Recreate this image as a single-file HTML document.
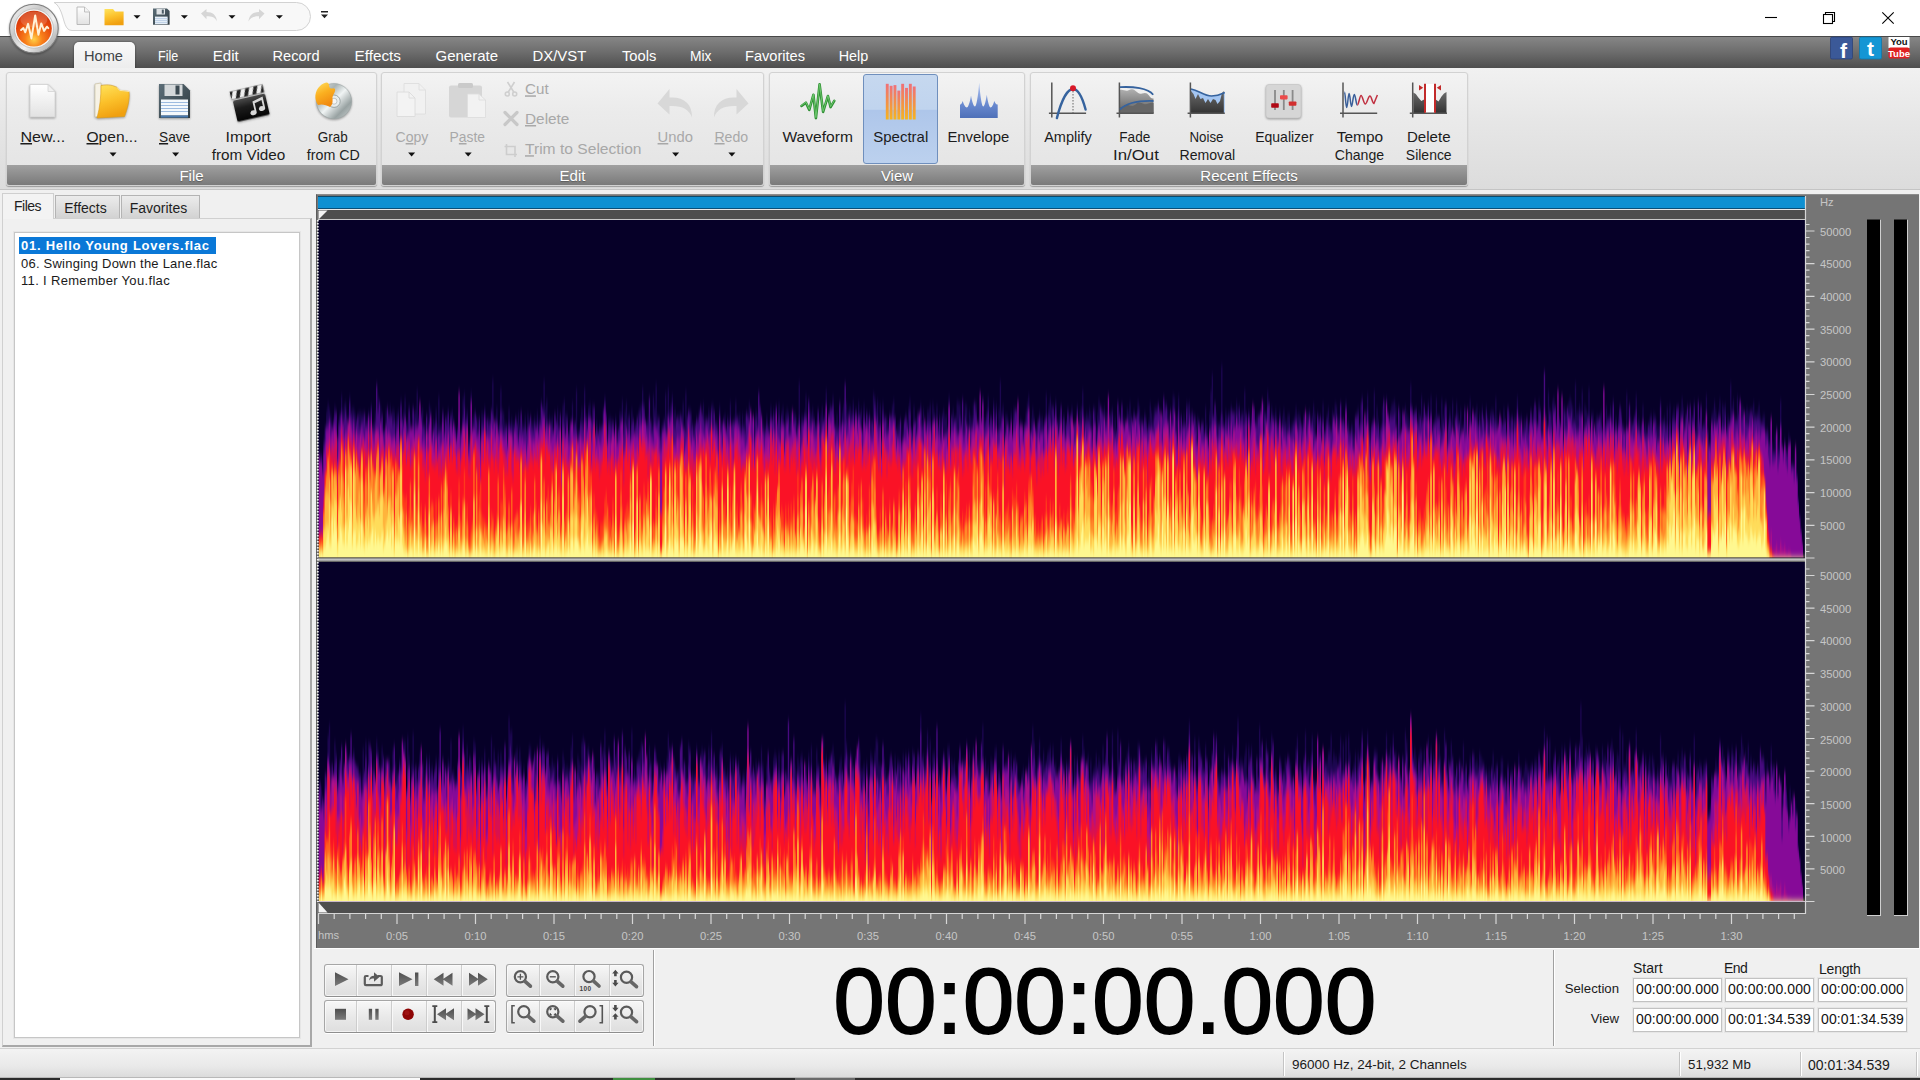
<!DOCTYPE html>
<html lang="en"><head><meta charset="utf-8"><title>Audio Editor</title>
<style>
*{box-sizing:border-box;margin:0;padding:0}
html,body{width:1920px;height:1080px;overflow:hidden;background:#f0f0f0}
body{font-family:"Liberation Sans",sans-serif;font-size:15px;color:#222;position:relative}
body div,body span,body svg{position:absolute}
u{text-decoration-thickness:1px;text-underline-offset:2px}
svg{overflow:visible}
#title{left:0;top:0;width:1920px;height:36px;background:#fff}
#menubar{left:0;top:36px;width:1920px;height:32px;background:linear-gradient(#868686 0,#6c6c6c 50%,#4e4e4e 100%);border-top:1px solid #484848}
#hometab{left:74px;top:42px;width:61px;height:27px;background:linear-gradient(#fafafa,#ececec);border-radius:5px 5px 0 0;box-shadow:0 0 2px rgba(0,0,0,.6)}
#ribbon{left:0;top:68px;width:1920px;height:122px;background:linear-gradient(#f1f1f1 0,#e6e6e6 45%,#dcdcdc 100%);border-bottom:1px solid #c4c4c4}
.grp{top:4px;height:114px;border:1px solid #d2d2d2;border-radius:3px;background:linear-gradient(#f3f3f3 0,#ebebeb 35%,#e3e3e3 100%);box-shadow:0 1px 1px rgba(0,0,0,.3);overflow:hidden}
.grp .lab{left:0;right:0;bottom:0;height:20px;background:linear-gradient(#a0a0a0,#7a7a7a);color:#fff;text-align:center;font-size:15px;line-height:22px;text-shadow:0 1px 1px rgba(0,0,0,.3)}
.bt{text-align:center;font-size:15px;line-height:17.5px;color:#1a1a1a;white-space:nowrap;transform:translateX(-50%)}
.bt.dis{color:#a9a9a9}
.arr{width:0;height:0;border-left:3.5px solid transparent;border-right:3.5px solid transparent;border-top:4px solid #111}

.tab{top:2px;height:23px;border:1px solid #b4b4b4;border-bottom:none;background:linear-gradient(#ececec,#d2d2d2);font-size:14px;line-height:25px;text-align:center;color:#1e1e1e}
.tab.act{top:0;height:26px;background:#f3f3f3;border-color:#cfcfcf;line-height:25px}
.li{height:17px;line-height:17px;font-size:13px;padding-left:2px;white-space:nowrap;color:#1a1a1a}
.li.sel{background:#0a78d7;color:#fff}
b{font-weight:bold}

.bg{border:1px solid #a6a6a6;border-bottom-color:#8e8e8e;border-radius:3px;background:linear-gradient(#f7f7f7,#e9e9e9 50%,#dedede);box-shadow:0 1px 0 #fff, inset 0 0 0 1px rgba(255,255,255,.6)}
.sep{top:0;width:2px;height:31px;border-left:1px solid #cdcdcd;border-right:1px solid #f8f8f8}
.sl{font-size:14px;line-height:16px;color:#1a1a1a;white-space:nowrap}
.tb{width:89px;height:24px;border:1px solid #c2c2c2;box-shadow:0 0 0 1px #e6e6e6;background:#fff;font-size:14px;line-height:20.5px;text-align:center;white-space:nowrap;color:#111;letter-spacing:.1px}
.st{font-size:14px;line-height:16px;color:#1a1a1a;white-space:nowrap}
.selbtn{border:1px solid #6f8fbd;border-radius:3px;background:linear-gradient(#c6d8ef 0,#c0d4ee 39%,#aec6ea 40%,#bcd1ee 100%)}
</style></head><body>
<div id="title"></div>
<div id="menubar"></div>
<div id="hometab"></div>
<div id="ribbon">
 <div class="grp" style="left:6px;width:371px"><div class="lab">File</div></div>
 <div class="grp" style="left:381px;width:383px"><div class="lab">Edit</div></div>
 <div class="grp" style="left:769px;width:256px"><div class="selbtn" style="left:93px;top:1px;width:75px;height:90px"></div><div class="lab">View</div></div>
 <div class="grp" style="left:1030px;width:438px"><div class="lab">Recent Effects</div></div>
</div>
<svg style="left:0;top:0" width="1920" height="200" viewBox="0 0 1920 200">
<defs>
<linearGradient id="gPage" x1="0" y1="0" x2="0" y2="1"><stop offset="0" stop-color="#ffffff"/><stop offset="1" stop-color="#e2e2e2"/></linearGradient>
<linearGradient id="gFold" x1="0" y1="0" x2=".3" y2="1"><stop offset="0" stop-color="#ffe45e"/><stop offset=".55" stop-color="#fbc02a"/><stop offset="1" stop-color="#f0a010"/></linearGradient>
<linearGradient id="gFlop" x1="0" y1="0" x2="1" y2="1"><stop offset="0" stop-color="#5c6e78"/><stop offset="1" stop-color="#2e3a40"/></linearGradient>
<linearGradient id="gSilver" x1="0" y1="0" x2="1" y2="1"><stop offset="0" stop-color="#fdfdfd"/><stop offset=".35" stop-color="#c9c9c9"/><stop offset=".6" stop-color="#f2f2f2"/><stop offset="1" stop-color="#8e8e8e"/></linearGradient>
<radialGradient id="gBall" cx=".5" cy=".8" r=".8"><stop offset="0" stop-color="#ffd048"/><stop offset=".3" stop-color="#f8801a"/><stop offset=".7" stop-color="#e4440c"/><stop offset="1" stop-color="#cc3206"/></radialGradient>
<linearGradient id="gSpec" x1="0" y1="0" x2="0" y2="1"><stop offset="0" stop-color="#f07078"/><stop offset=".5" stop-color="#f39048"/><stop offset="1" stop-color="#f6b41e"/></linearGradient>
<linearGradient id="gEnv" x1="0" y1="0" x2="0" y2="1"><stop offset="0" stop-color="#b4c8f4"/><stop offset=".6" stop-color="#6a8ad0"/><stop offset="1" stop-color="#4e70b8"/></linearGradient>
<linearGradient id="gGray" x1="0" y1="0" x2="0" y2="1"><stop offset="0" stop-color="#b0b0b0"/><stop offset="1" stop-color="#5e5e5e"/></linearGradient>
<linearGradient id="gDark" x1="0" y1="0" x2="0" y2="1"><stop offset="0" stop-color="#6a6a6a"/><stop offset="1" stop-color="#333"/></linearGradient>
<linearGradient id="gCD" x1="0" y1="0" x2="1" y2="1"><stop offset="0" stop-color="#e8ecec"/><stop offset=".3" stop-color="#aab4b4"/><stop offset=".5" stop-color="#f0f4f4"/><stop offset=".75" stop-color="#98a2a2"/><stop offset="1" stop-color="#d0d6d6"/></linearGradient>
<linearGradient id="gFlame" x1="0" y1="0" x2=".4" y2="1"><stop offset="0" stop-color="#ffe060"/><stop offset=".5" stop-color="#fbb020"/><stop offset="1" stop-color="#f08a10"/></linearGradient>
<linearGradient id="gClap" x1="0" y1="0" x2="0" y2="1"><stop offset="0" stop-color="#4a4a4a"/><stop offset=".4" stop-color="#1c1c1c"/><stop offset="1" stop-color="#050505"/></linearGradient>
<filter id="sh" x="-20%" y="-20%" width="140%" height="150%" color-interpolation-filters="sRGB"><feGaussianBlur in="SourceAlpha" stdDeviation="1"/><feOffset dy="1"/><feComponentTransfer><feFuncA type="linear" slope=".35"/></feComponentTransfer><feMerge><feMergeNode/><feMergeNode in="SourceGraphic"/></feMerge></filter>
</defs>
<g filter="url(#sh)"><circle cx="33.9" cy="28.6" r="24.3" fill="url(#gSilver)" stroke="#7e7e7e" stroke-width="1.1"/></g>
<circle cx="33.9" cy="28.6" r="19.6" fill="#f4f4f4" stroke="#aaa" stroke-width=".6"/>
<circle cx="33.9" cy="28.6" r="17.9" fill="url(#gBall)"/>
<ellipse cx="33.9" cy="19.5" rx="13.5" ry="8" fill="#fff" opacity=".16"/>
<polyline points="21.1,30 23.4,28.1 25.3,32.3 28.1,23.9 31.4,38.4 35.2,15.5 38.4,34.7 41.25,23.4 44.1,30.9 46.9,26.7 48.3,28.1" fill="none" stroke="#fff2d8" stroke-width="2" stroke-linejoin="round" stroke-linecap="round"/>
<path d="M54 2.500H296.500a14 14 0 0 1 0 28H72C65 30.500 64.500 21 61.500 13 59.500 7.500 57 4 54 2.500z" fill="#f8f8f8" stroke="#d2d2d2" stroke-width="1"/>
<path d="M77 7h7.500l5 5v12.500h-12.500z" fill="url(#gPage)" stroke="#b4b4b4" stroke-width=".9"/><path d="M84.500 7v5h5" fill="#f4f4f4" stroke="#b4b4b4" stroke-width=".8"/>
<path d="M104.500 9h8.500l2 2.600h8.600v13.600h-19.100z" fill="url(#gFold)"/>
<path d="M153 8.500h14l2.600 2.600v13.700h-16.600z" fill="url(#gFlop)"/><rect x="156.500" y="8.900" width="8.500" height="5.600" fill="#dfe3e6"/><rect x="161.800" y="9.600" width="2" height="4" fill="#4a5a64"/><rect x="155" y="16.600" width="12.600" height="7.600" fill="#e8f0f8"/><path d="M155 18.600h12.600M155 20.600h12.600M155 22.600h12.600" stroke="#a8c0dc" stroke-width=".7"/>
<path d="M201 13.500l5.500-4.500v3c6 0 10 3 10.500 9.500-1.800-4-5-5.200-10.500-5.200v3z" fill="#d6d6d6"/>
<path d="M264.500 13.500l-5.500-4.500v3c-6 0-10 3-10.500 9.500 1.800-4 5-5.200 10.500-5.200v3z" fill="#d6d6d6"/>
<path d="M133.5 15.200h7l-3.500 3.600z" fill="#111"/>
<path d="M180.9 15.200h7l-3.500 3.600z" fill="#111"/>
<path d="M228.5 15.200h7l-3.500 3.600z" fill="#111"/>
<path d="M275.9 15.200h7l-3.500 3.600z" fill="#111"/>
<path d="M321 11h7v1.500h-7zM321 14.400h7l-3.500 3.800z" fill="#222"/>
<path d="M1765 17.500h12" stroke="#000" stroke-width="1.100"/>
<rect x="1823.500" y="14.500" width="9" height="9" fill="#fff" stroke="#000" stroke-width="1.100"/><path d="M1825.500 14.500v-2h9v9h-2" fill="none" stroke="#000" stroke-width="1.100"/>
<path d="M1882.300 12.300l11.400 11.400M1893.700 12.300l-11.400 11.400" stroke="#000" stroke-width="1.100"/>
<g font-family="Liberation Sans, sans-serif" font-size="15" fill="#fff">
<text x="158" y="60.800" textLength="20.2" lengthAdjust="spacingAndGlyphs">File</text>
<text x="212.8" y="60.800" textLength="26" lengthAdjust="spacingAndGlyphs">Edit</text>
<text x="272.5" y="60.800" textLength="47" lengthAdjust="spacingAndGlyphs">Record</text>
<text x="354.5" y="60.800" textLength="46.5" lengthAdjust="spacingAndGlyphs">Effects</text>
<text x="435.5" y="60.800" textLength="62.5" lengthAdjust="spacingAndGlyphs">Generate</text>
<text x="532.5" y="60.800" textLength="53.8" lengthAdjust="spacingAndGlyphs">DX/VST</text>
<text x="622" y="60.800" textLength="34.3" lengthAdjust="spacingAndGlyphs">Tools</text>
<text x="690" y="60.800" textLength="21.5" lengthAdjust="spacingAndGlyphs">Mix</text>
<text x="745" y="60.800" textLength="60" lengthAdjust="spacingAndGlyphs">Favorites</text>
<text x="838.7" y="60.800" textLength="29.6" lengthAdjust="spacingAndGlyphs">Help</text>
</g>
<text x="84" y="60.800" textLength="39" lengthAdjust="spacingAndGlyphs" font-family="Liberation Sans, sans-serif" font-size="15" fill="#404448">Home</text>
<rect x="1830.500" y="37" width="22" height="22" rx="1.500" fill="#3b5998" stroke="#2c4378" stroke-width=".8"/><text x="1843.500" y="57.500" font-family="Liberation Sans, sans-serif" font-weight="bold" font-size="21" fill="#fff" text-anchor="middle">f</text>
<rect x="1859.500" y="37" width="22" height="22" rx="1.500" fill="#1496d4" stroke="#0e78ac" stroke-width=".8"/><text x="1870.500" y="55.500" font-family="Liberation Sans, sans-serif" font-weight="bold" font-size="21" fill="#fff" text-anchor="middle">t</text>
<rect x="1888.500" y="37" width="21" height="11" fill="#fff"/><rect x="1888.500" y="47.500" width="21" height="11" rx="2" fill="#e02020"/><text x="1899" y="45.300" font-family="Liberation Sans, sans-serif" font-weight="bold" font-size="9.500" fill="#111" text-anchor="middle">You</text><text x="1899" y="56.800" font-family="Liberation Sans, sans-serif" font-weight="bold" font-size="9.500" fill="#fff" text-anchor="middle">Tube</text>
<g filter="url(#sh)"><path d="M30 84.500h18l7 7v25.500h-25z" fill="url(#gPage)" stroke="#d0d0d0" stroke-width=".8"/><path d="M48 84.500v7h7z" fill="#f0f0f0" stroke="#cfcfcf" stroke-width=".7"/></g>
<g filter="url(#sh)"><path d="M95 84l6-1 1.500 33-7.500 1z" fill="#f6f2e6" stroke="#c8bc98" stroke-width=".6"/><path d="M101 85.500c8-1.500 12 0 16 1.800l2.500 3 9.500 1.200c1 8-1.500 17-4.500 25l-27.500 1.500c3-11 4-21 4-32.500z" fill="url(#gFold)" stroke="#d89a18" stroke-width=".6"/><path d="M117 87.300l2.500 3 9.500 1.200" fill="none" stroke="#fff4c0" stroke-width=".8"/></g>
<g filter="url(#sh)"><path d="M159 84h24.500l6.500 6.500v27.500h-31z" fill="url(#gFlop)"/><rect x="164.500" y="84.500" width="18" height="11.500" fill="#d4d8da"/><rect x="175.500" y="85.500" width="4" height="9" fill="#3c4a52"/><rect x="161" y="99.500" width="27" height="16" fill="#f4f8fc"/><path d="M161 102.500h27M161 105.500h27M161 108.500h27M161 111.500h27" stroke="#9dbbe0" stroke-width="1"/><rect x="161" y="115.500" width="27" height="2" fill="#4a7ab0"/></g>
<g filter="url(#sh)" transform="rotate(-13 250 100)"><rect x="233" y="97" width="33" height="21.500" rx="1.500" fill="url(#gClap)"/><rect x="232" y="87.500" width="33.500" height="8" fill="#222"/><path d="M235 87.500h4.500l-3 8h-4.500zM243.500 87.500h4.500l-3 8h-4.500zM252 87.500h4.500l-3 8h-4.500zM260.500 87.500h4.500l-3 8h-4.500z" fill="#f0f0f0"/></g>
<g transform="rotate(-13 250 100)"><path d="M252 102l11-2.500v11.500a3.200 2.400 0 1 1-1.800-2.100v-6.400l-7.400 1.700v9a3.200 2.400 0 1 1-1.800-2.100z" fill="#d8d8d8"/></g>
<g filter="url(#sh)"><circle cx="334" cy="101.200" r="17.600" fill="url(#gCD)" stroke="#9aa4a4" stroke-width=".6"/></g><circle cx="334" cy="101.200" r="6.200" fill="#e8ecec" stroke="#8c9696" stroke-width=".8"/><circle cx="334" cy="101.200" r="3" fill="#f6f6f6" stroke="#a0a8a8" stroke-width=".6"/>
<path d="M318 105c-4-6-3.500-14 2-19 2-2 5-3.500 7-3.500 3 1 1.500 4 3 5.500s4-1 5 1c1 3-3 6-2.500 10 .3 3 0 6-2.500 8-4-2-8-3.500-12-2z" fill="url(#gFlame)"/>
<g opacity=".9"><path d="M404 83.500h15l6.500 6.500v24h-21.500z" fill="#f2f2f2" stroke="#dcdcdc" stroke-width=".9"/><path d="M419 83.500v6.500h6.500" fill="none" stroke="#dcdcdc" stroke-width=".9"/><path d="M397 92h12l6 6v18.500h-18z" fill="#f4f4f4" stroke="#dadada" stroke-width=".9"/><path d="M409 92v6h6" fill="none" stroke="#dadada" stroke-width=".9"/></g>
<rect x="449" y="85.500" width="33" height="32" rx="2" fill="#d6d6d6"/><rect x="458" y="83" width="15" height="5" rx="1.500" fill="#cacaca"/><path d="M467.500 94h11.500l6.500 6v17.500h-18z" fill="#f2f2f2" stroke="#dedede" stroke-width=".9"/><path d="M479 94v6h6.500" fill="none" stroke="#dedede" stroke-width=".9"/>
<g stroke="#cfcfcf" fill="none" stroke-width="1.600"><path d="M507.500 82l6.500 10.500M514.500 82l-6.500 10.500"/><circle cx="507.300" cy="94" r="2"/><circle cx="514.700" cy="94" r="2"/></g>
<path d="M505 112.500l12 12M517 112.500l-12 12" stroke="#c8c8c8" stroke-width="3.200" stroke-linecap="round"/>
<path d="M506.500 144v10.500h10.500M504.500 146.500h10.500v10.500" fill="none" stroke="#cdcdcd" stroke-width="1.600"/>
<path d="M657.500 103.500l12-14.500v8.500c14-1 23 6 22.500 20-3-8.500-10-12-22.500-11.500v8.500z" fill="#d8d8d8"/>
<path d="M748.500 103.500l-12-14.500v8.500c-14-1-23 6-22.500 20 3-8.500 10-12 22.500-11.500v8.500z" fill="#d8d8d8"/>
<polyline points="801.500,106 805.900,102.700 809.300,109.900 813.400,94.750 815.900,118.100 819.600,84.400 823.100,111.900 827.900,96.100 830.600,107.100 834.300,100.900" fill="none" stroke="#2f8f34" stroke-width="2.600" stroke-linejoin="round" stroke-linecap="round"/>
<polyline points="801.500,105.500 805.900,102.200 809.300,109.400 813.400,94.250 815.900,117.600 819.600,83.900 823.100,111.400 827.900,95.600 830.600,106.600 834.300,100.400" fill="none" stroke="#6cc86c" stroke-width="1" stroke-linejoin="round" stroke-linecap="round"/>
<rect x="885.80" y="83.8" width="2.900" height="35.7" fill="url(#gSpec)"/>
<rect x="889.65" y="85.8" width="2.900" height="33.7" fill="url(#gSpec)"/>
<rect x="893.50" y="85.1" width="2.900" height="34.4" fill="url(#gSpec)"/>
<rect x="897.35" y="90.6" width="2.900" height="28.9" fill="url(#gSpec)"/>
<rect x="901.20" y="83.8" width="2.900" height="35.7" fill="url(#gSpec)"/>
<rect x="905.05" y="87.9" width="2.900" height="31.6" fill="url(#gSpec)"/>
<rect x="908.90" y="83.8" width="2.900" height="35.7" fill="url(#gSpec)"/>
<rect x="912.75" y="86.5" width="2.900" height="33.0" fill="url(#gSpec)"/>
<path d="M960 118V104.5C960.8 104.5 961.7 104.0 962.7 101C963.7 104.6 965.5 107.5 966.8 107.5C968.1 107.5 970.0 102.1 971 95.4C972.0 101.5 973.7 106.5 975 106.5C976.3 106.5 978.2 95.7 979.2 82.4C980.2 95.7 981.9 106.5 983.2 106.5C984.5 106.5 985.8 101.2 986.8 94.8C987.8 101.8 989.3 107.5 990.6 107.5C991.9 107.5 993.3 104.6 994.3 101C995.3 104.0 996.9 104.5 997.7 104.5V118z" fill="url(#gEnv)"/>
<path d="M1051.800 82.600v35M1048.900 113.300h37.200" stroke="#555" stroke-width="1.500" fill="none"/><path d="M1073 91v22" stroke="#666" stroke-width="1" stroke-dasharray="1.500 1.500"/><path d="M1056.900 118.100C1061.500 100 1067.500 89 1073 89s9.500 9 12.600 20.500" fill="none" stroke="#36639e" stroke-width="2.400" stroke-linecap="round"/><circle cx="1073" cy="88.300" r="3" fill="#d81828"/>
<path d="M1120 113v-23c3-1 5 1.500 8 .5s4-2 7 0 4 4 7 3 5-1 7 2 3 3 4.500 3v14.500z" fill="url(#gGray)"/><path d="M1120 113v-6c3 1 5-3 8-2s5 2 8-1 5-1 8 0 6-2 9.500-1v10z" fill="#666"/><path d="M1119.400 82.600v35M1116.500 113.300h37.200" stroke="#555" stroke-width="1.500" fill="none"/><path d="M1120 87.200c13-.8 28 1 33.200 7.500M1120 109.500c6-6 18-9 33.500-8.500" fill="none" stroke="#36639e" stroke-width="1.800"/>
<path d="M1191 113V89c8 1.500 13 7 20.500 7s10-2 13.300-3.500V113z" fill="#a4c6f2"/><path d="M1191 113V91l2.500 3 2 5 2.500-5 2.500 5 2.500-1 2.500 5 2.500-4 2.500 4 2.500-4 2.500 1 2 4 2.500-3 2-8 1.800-2V113z" fill="url(#gDark)"/><path d="M1190.400 82.600v35M1187.600 113.300h37.200" stroke="#555" stroke-width="1.500" fill="none"/><path d="M1191 89c8 1.500 13 7 20.500 7s10-2 13.300-3.500" fill="none" stroke="#36639e" stroke-width="1.600"/>
<g filter="url(#sh)"><rect x="1266" y="84.500" width="35" height="33.500" rx="3" fill="#d6d6d6" stroke="#c2c2c2" stroke-width=".6"/></g><path d="M1275 90v20M1283.800 90v20M1292.600 90v20" stroke="#8a8a8a" stroke-width="1.800"/><rect x="1271.200" y="103.200" width="7.600" height="4.600" rx=".8" fill="#b00814"/><rect x="1280" y="95.200" width="7.600" height="4.200" rx=".8" fill="#ec4a4a"/><rect x="1288.800" y="101.500" width="7.600" height="4.200" rx=".8" fill="#d23030"/>
<path d="M1343 82.600v35M1340 113.300h37.200" stroke="#555" stroke-width="1.500" fill="none"/><path d="M1344.500 92c.8 0 1.200 15.500 2.200 15.500s1.400-14 2.400-14 1.400 13 2.400 13 1.600-12 2.800-12 1.800 10.500 3 10.500" fill="none" stroke="#3a5f9a" stroke-width="1.500"/><path d="M1357.300 105c1.400 0 2.400-9.500 3.800-9.500s2.600 8.500 4.200 8.500 3-8 4.600-8 2.600 7.500 4 7.500l3.500-8.500" fill="none" stroke="#c03040" stroke-width="1.500"/>
<path d="M1413.3 113V92.5l2.5 1.5 2.5 3.5 3 3.5 3.7-2V113zM1435 113V99l3.5 2.5 3-5 2.5-3 2.5-1.500V113z" fill="url(#gDark)"/><rect x="1425" y="84" width="10" height="29" fill="#fff"/><path d="M1412.700 82.600v35M1409.800 113.300h37.200" stroke="#555" stroke-width="1.500" fill="none"/><path d="M1425 83.800v29M1435 83.800v29" stroke="#c22a2a" stroke-width="2"/><path d="M1419 85l4.200 2.800-4.200 2.800zM1441 85l-4.200 2.800 4.200 2.800z" fill="#c22a2a"/>
<g font-family="Liberation Sans, sans-serif" font-size="15">
<text x="20.4" y="142" textLength="44.8" lengthAdjust="spacingAndGlyphs" fill="#1c1c1c"><tspan text-decoration="underline">N</tspan>ew...</text>
<text x="86.5" y="142" textLength="51" lengthAdjust="spacingAndGlyphs" fill="#1c1c1c"><tspan text-decoration="underline">O</tspan>pen...</text>
<text x="159.0" y="142" textLength="31.2" lengthAdjust="spacingAndGlyphs" fill="#1c1c1c"><tspan text-decoration="underline">S</tspan>ave</text>
<text x="225.55" y="142" textLength="45.5" lengthAdjust="spacingAndGlyphs" fill="#1c1c1c">Import</text>
<text x="211.7" y="159.5" textLength="73.6" lengthAdjust="spacingAndGlyphs" fill="#1c1c1c">from Video</text>
<text x="317.7" y="142" textLength="30" lengthAdjust="spacingAndGlyphs" fill="#1c1c1c">Grab</text>
<text x="306.8" y="159.5" textLength="53" lengthAdjust="spacingAndGlyphs" fill="#1c1c1c">from CD</text>
<text x="395.5" y="142" textLength="32.8" lengthAdjust="spacingAndGlyphs" fill="#a8a8a8">C<tspan text-decoration="underline">o</tspan>py</text>
<text x="449.6" y="142" textLength="35.4" lengthAdjust="spacingAndGlyphs" fill="#a8a8a8">P<tspan text-decoration="underline">a</tspan>ste</text>
<text x="525" y="94.3" textLength="23.6" lengthAdjust="spacingAndGlyphs" fill="#a8a8a8"><tspan text-decoration="underline">C</tspan>ut</text>
<text x="525" y="124" textLength="44.4" lengthAdjust="spacingAndGlyphs" fill="#a8a8a8"><tspan text-decoration="underline">D</tspan>elete</text>
<text x="525" y="154.2" textLength="116.5" lengthAdjust="spacingAndGlyphs" fill="#a8a8a8"><tspan text-decoration="underline">T</tspan>rim to Selection</text>
<text x="657.6" y="142" textLength="35.4" lengthAdjust="spacingAndGlyphs" fill="#a8a8a8"><tspan text-decoration="underline">U</tspan>ndo</text>
<text x="714.4" y="142" textLength="33.8" lengthAdjust="spacingAndGlyphs" fill="#a8a8a8"><tspan text-decoration="underline">R</tspan>edo</text>
<text x="782.5" y="142" textLength="70.4" lengthAdjust="spacingAndGlyphs" fill="#1c1c1c">Waveform</text>
<text x="873.25" y="142" textLength="55" lengthAdjust="spacingAndGlyphs" fill="#1c1c1c">Spectral</text>
<text x="947.45" y="142" textLength="61.9" lengthAdjust="spacingAndGlyphs" fill="#1c1c1c">Envelope</text>
<text x="1044.2" y="142" textLength="47.6" lengthAdjust="spacingAndGlyphs" fill="#1c1c1c">Amplify</text>
<text x="1119.3" y="142" textLength="31" lengthAdjust="spacingAndGlyphs" fill="#1c1c1c">Fade</text>
<text x="1113.1" y="159.5" textLength="45.8" lengthAdjust="spacingAndGlyphs" fill="#1c1c1c">In/Out</text>
<text x="1189.5" y="142" textLength="34" lengthAdjust="spacingAndGlyphs" fill="#1c1c1c">Noise</text>
<text x="1179.5" y="159.5" textLength="55.6" lengthAdjust="spacingAndGlyphs" fill="#1c1c1c">Removal</text>
<text x="1255.2" y="142" textLength="58.4" lengthAdjust="spacingAndGlyphs" fill="#1c1c1c">Equalizer</text>
<text x="1336.8" y="142" textLength="46.4" lengthAdjust="spacingAndGlyphs" fill="#1c1c1c">Tempo</text>
<text x="1334.75" y="159.5" textLength="49.3" lengthAdjust="spacingAndGlyphs" fill="#1c1c1c">Change</text>
<text x="1407.0" y="142" textLength="43.5" lengthAdjust="spacingAndGlyphs" fill="#1c1c1c">Delete</text>
<text x="1405.85" y="159.5" textLength="45.8" lengthAdjust="spacingAndGlyphs" fill="#1c1c1c">Silence</text>
</g>
<path d="M109.5 152.600h7l-3.500 3.800z" fill="#111"/>
<path d="M172.1 152.600h7l-3.500 3.800z" fill="#111"/>
<path d="M408.1 152.600h7l-3.500 3.800z" fill="#111"/>
<path d="M464.7 152.600h7l-3.500 3.800z" fill="#111"/>
<path d="M672.1 152.600h7l-3.500 3.800z" fill="#111"/>
<path d="M728.4 152.600h7l-3.500 3.800z" fill="#111"/>
</svg>
<div id="leftpanel" style="left:0;top:193px;width:314px;height:855px">
 <div style="left:2px;top:25px;width:310px;height:829px;border:1px solid #d0d0d0;border-right:2px solid #a8a8a8;border-bottom:2px solid #a8a8a8;background:#f0f0f0"></div>
 <div class="tab" style="left:55px;width:65px;padding-right:4px">Effects</div>
 <div class="tab" style="left:121px;width:79px;padding-right:4px">Favorites</div>
 <div class="tab act" style="left:2px;width:52px;letter-spacing:-.5px;padding-right:1px">Files</div>
 <div style="left:14px;top:39px;width:286px;height:806px;border:1px solid #c6c6c6;box-shadow:0 0 0 1px #e6e6e6;background:#fff"></div>
 <div class="li sel" style="left:19px;top:44px;width:197px;letter-spacing:.75px"><b>01. Hello Young Lovers.flac</b></div>
 <div class="li" style="left:19px;top:61.5px;letter-spacing:.23px">06. Swinging Down the Lane.flac</div>
 <div class="li" style="left:19px;top:79px;letter-spacing:.33px">11. I Remember You.flac</div>
</div>
<div id="frame" style="left:316px;top:194px;width:1603px;height:754px;background:#757575;border-left:1px solid #5c5c5c;border-top:1px solid #8c8c8c"></div>
<div style="left:318px;top:196px;width:1487px;height:13px;background:#0e90d2;border-top:1px solid #0b4a6c;border-bottom:1px solid #0a4f78"></div>
<div style="left:318px;top:209px;width:1487px;height:1px;background:#e8e8e8"></div>
<div style="left:318px;top:210px;width:1487px;height:9px;background:#4e4e4e"></div>
<div style="left:318px;top:219px;width:1487px;height:1px;background:#c8c8c8"></div>
<div style="left:318px;top:220px;width:1487px;height:338px;background:#060028"></div>
<div style="left:318px;top:558px;width:1487px;height:4px;background:linear-gradient(#777,#c4c4c4 40%,#999 70%,#444)"></div>
<div style="left:318px;top:562px;width:1487px;height:340px;background:#060028"></div>
<div style="left:318px;top:901px;width:1487px;height:1px;background:#c9b8c9"></div>
<div style="left:318px;top:902px;width:1487px;height:11px;background:#4e4e4e"></div>
<svg style="left:0;top:0" width="1920" height="1080" viewBox="0 0 1920 1080">
<defs><filter id="vb" x="0" y="0" width="1" height="1" filterUnits="objectBoundingBox" color-interpolation-filters="sRGB"><feGaussianBlur stdDeviation="0.55 3.6"/></filter>
<clipPath id="c1"><rect x="318.6" y="220" width="1486" height="337.5"/></clipPath>
<clipPath id="c2"><rect x="318.6" y="562" width="1486" height="339"/></clipPath></defs>
<g clip-path="url(#c1)"><g filter="url(#vb)"><rect x="300" y="200" width="1530" height="420" fill="#060028"/><path fill="#1c0650" d="M318 597.5V435h1.35v18h1.35v1h1.35v4h1.35v-20h1.35v-12h1.35v-14h1.35v-8h1.35v5h1.35v7h1.35v9h1.35v-5h1.35v-13h1.35v9h1.35v21h1.35v-17h1.35v-7h1.35v-17h1.35v16h1.35v-7h1.35v-2h1.35v19h1.35v-8h1.35v-17h1.35v14h1.35v-2h1.35v0h1.35v5h1.35v5h1.35v-3h1.35v-3h1.35v0h1.35v1h1.35v-1h1.35v2h1.35v7h1.35v-4h1.35v-5h1.35v13h1.35v-21h1.35v21h1.35v-3h1.35v-11h1.35v7h1.35v-23h1.35v26h1.35v-15h1.35v12h1.35v10h1.35v1h1.35v-19h1.35v3h1.35v5h1.35v-12h1.35v7h1.35v-4h1.35v2h1.35v10h1.35v-7h1.35v-4h1.35v22h1.35v-33h1.35v17h1.35v-5h1.35v-14h1.35v24h1.35v0h1.35v-16h1.35v13h1.35v8h1.35v-17h1.35v3h1.35v-3h1.35v-19h1.35v25h1.35v-8h1.35v4h1.35v-3h1.35v16h1.35v0h1.35v-10h1.35v14h1.35v-24h1.35v5h1.35v20h1.35v-10h1.35v4h1.35v-14h1.35v15h1.35v-28h1.35v29h1.35v-2h1.35v-6h1.35v11h1.35v-11h1.35v-1h1.35v-7h1.35v13h1.35v-9h1.35v-3h1.35v8h1.35v7h1.35v6h1.35v-5h1.35v-10h1.35v13h1.35v-3h1.35v-28h1.35v-5h1.35v27h1.35v-10h1.35v22h1.35v2h1.35v-42h1.35v26h1.35v-3h1.35v-4h1.35v5h1.35v10h1.35v-9h1.35v17h1.35v-22h1.35v3h1.35v-8h1.35v12h1.35v0h1.35v-2h1.35v4h1.35v-12h1.35v-30h1.35v44h1.35v-5h1.35v-11h1.35v19h1.35v-6h1.35v-32h1.35v21h1.35v3h1.35v10h1.35v6h1.35v-2h1.35v-18h1.35v15h1.35v-5h1.35v6h1.35v-2h1.35v-4h1.35v5h1.35v-10h1.35v11h1.35v-6h1.35v4h1.35v3h1.35v-9h1.35v12h1.35v-15h1.35v6h1.35v4h1.35v0h1.35v-2h1.35v-4h1.35v5h1.35v-10h1.35v9h1.35v-3h1.35v-18h1.35v7h1.35v-27h1.35v27h1.35v-8h1.35v21h1.35v-5h1.35v5h1.35v-3h1.35v14h1.35v-13h1.35v5h1.35v-14h1.35v17h1.35v-4h1.35v13h1.35v-30h1.35v-5h1.35v14h1.35v0h1.35v18h1.35v-8h1.35v-5h1.35v-17h1.35v22h1.35v-3h1.35v-32h1.35v44h1.35v-3h1.35v-12h1.35v-10h1.35v12h1.35v-32h1.35v27h1.35v2h1.35v-11h1.35v-3h1.35v23h1.35v-21h1.35v4h1.35v22h1.35v-11h1.35v12h1.35v-9h1.35v2h1.35v1h1.35v-18h1.35v-11h1.35v23h1.35v11h1.35v-13h1.35v-1h1.35v2h1.35v3h1.35v12h1.35v-17h1.35v17h1.35v-6h1.35v-16h1.35v0h1.35v-12h1.35v25h1.35v-14h1.35v-9h1.35v15h1.35v-4h1.35v16h1.35v-20h1.35v11h1.35v3h1.35v3h1.35v-6h1.35v-9h1.35v-4h1.35v-3h1.35v-16h1.35v14h1.35v19h1.35v1h1.35v-6h1.35v1h1.35v5h1.35v3h1.35v-30h1.35v12h1.35v-23h1.35v31h1.35v3h1.35v15h1.35v-7h1.35v-4h1.35v-4h1.35v-25h1.35v22h1.35v-27h1.35v22h1.35v-6h1.35v-9h1.35v20h1.35v-6h1.35v14h1.35v-7h1.35v-1h1.35v-2h1.35v1h1.35v-12h1.35v23h1.35v-34h1.35v35h1.35v-12h1.35v-6h1.35v4h1.35v10h1.35v6h1.35v-4h1.35v-7h1.35v2h1.35v-10h1.35v5h1.35v2h1.35v-13h1.35v14h1.35v5h1.35v-3h1.35v-10h1.35v7h1.35v-11h1.35v-1h1.35v7h1.35v10h1.35v-1h1.35v8h1.35v-22h1.35v16h1.35v0h1.35v-2h1.35v-6h1.35v16h1.35v-14h1.35v8h1.35v-22h1.35v26h1.35v-1h1.35v-10h1.35v-16h1.35v15h1.35v0h1.35v-2h1.35v11h1.35v-11h1.35v10h1.35v-9h1.35v-4h1.35v3h1.35v-11h1.35v6h1.35v10h1.35v-4h1.35v4h1.35v-9h1.35v4h1.35v-1h1.35v7h1.35v-8h1.35v9h1.35v5h1.35v0h1.35v-11h1.35v18h1.35v-12h1.35v-15h1.35v19h1.35v-16h1.35v8h1.35v-10h1.35v18h1.35v-22h1.35v18h1.35v-9h1.35v-5h1.35v19h1.35v-12h1.35v-5h1.35v3h1.35v10h1.35v-10h1.35v-1h1.35v1h1.35v1h1.35v5h1.35v7h1.35v-43h1.35v43h1.35v-10h1.35v1h1.35v-5h1.35v-16h1.35v23h1.35v-15h1.35v7h1.35v3h1.35v-5h1.35v9h1.35v7h1.35v-3h1.35v-11h1.35v14h1.35v-9h1.35v-8h1.35v10h1.35v-4h1.35v-23h1.35v32h1.35v-11h1.35v-7h1.35v3h1.35v-11h1.35v19h1.35v9h1.35v-10h1.35v11h1.35v-13h1.35v14h1.35v-15h1.35v-7h1.35v-7h1.35v5h1.35v11h1.35v-6h1.35v0h1.35v5h1.35v-11h1.35v15h1.35v-6h1.35v5h1.35v-13h1.35v18h1.35v-11h1.35v20h1.35v-25h1.35v18h1.35v-11h1.35v7h1.35v-6h1.35v8h1.35v0h1.35v-27h1.35v3h1.35v13h1.35v-9h1.35v23h1.35v-19h1.35v33h1.35v-35h1.35v13h1.35v2h1.35v1h1.35v5h1.35v-10h1.35v5h1.35v-13h1.35v-5h1.35v17h1.35v11h1.35v-3h1.35v-3h1.35v2h1.35v20h1.35v-17h1.35v-8h1.35v-6h1.35v6h1.35v-12h1.35v-8h1.35v29h1.35v1h1.35v-23h1.35v14h1.35v-2h1.35v-2h1.35v-5h1.35v-7h1.35v18h1.35v-13h1.35v21h1.35v-8h1.35v-12h1.35v0h1.35v-6h1.35v21h1.35v-22h1.35v8h1.35v5h1.35v-11h1.35v20h1.35v-11h1.35v18h1.35v-19h1.35v-4h1.35v7h1.35v-1h1.35v13h1.35v-32h1.35v35h1.35v-14h1.35v-8h1.35v8h1.35v-1h1.35v-15h1.35v1h1.35v1h1.35v16h1.35v0h1.35v6h1.35v-21h1.35v1h1.35v19h1.35v-14h1.35v6h1.35v3h1.35v-16h1.35v12h1.35v-13h1.35v23h1.35v-7h1.35v-9h1.35v8h1.35v-21h1.35v22h1.35v0h1.35v-8h1.35v-13h1.35v25h1.35v-5h1.35v2h1.35v-18h1.35v18h1.35v-15h1.35v24h1.35v-19h1.35v-28h1.35v30h1.35v-6h1.35v24h1.35v-14h1.35v0h1.35v5h1.35v6h1.35v-14h1.35v20h1.35v-24h1.35v4h1.35v-3h1.35v10h1.35v5h1.35v-5h1.35v3h1.35v3h1.35v0h1.35v-13h1.35v-10h1.35v-7h1.35v38h1.35v-14h1.35v-11h1.35v9h1.35v10h1.35v-1h1.35v-3h1.35v-11h1.35v6h1.35v-1h1.35v6h1.35v-2h1.35v-27h1.35v22h1.35v-11h1.35v-8h1.35v8h1.35v1h1.35v14h1.35v-20h1.35v20h1.35v0h1.35v-4h1.35v-7h1.35v11h1.35v-5h1.35v10h1.35v-4h1.35v-13h1.35v7h1.35v1h1.35v-9h1.35v17h1.35v3h1.35v-4h1.35v-18h1.35v15h1.35v-9h1.35v-4h1.35v-17h1.35v26h1.35v1h1.35v-5h1.35v4h1.35v-8h1.35v5h1.35v14h1.35v-20h1.35v1h1.35v19h1.35v-14h1.35v-14h1.35v26h1.35v-19h1.35v10h1.35v-10h1.35v7h1.35v0h1.35v-7h1.35v10h1.35v-5h1.35v-3h1.35v20h1.35v-11h1.35v13h1.35v-12h1.35v-8h1.35v6h1.35v-10h1.35v11h1.35v1h1.35v6h1.35v-16h1.35v4h1.35v-10h1.35v13h1.35v3h1.35v-8h1.35v6h1.35v3h1.35v-18h1.35v6h1.35v12h1.35v-1h1.35v3h1.35v-9h1.35v6h1.35v10h1.35v-8h1.35v-17h1.35v8h1.35v9h1.35v-12h1.35v-1h1.35v0h1.35v-4h1.35v15h1.35v-6h1.35v1h1.35v-11h1.35v2h1.35v-1h1.35v6h1.35v9h1.35v-10h1.35v17h1.35v-30h1.35v2h1.35v22h1.35v-4h1.35v-19h1.35v31h1.35v-13h1.35v11h1.35v-11h1.35v9h1.35v-21h1.35v2h1.35v-2h1.35v12h1.35v7h1.35v-7h1.35v5h1.35v4h1.35v-6h1.35v2h1.35v12h1.35v-7h1.35v-3h1.35v11h1.35v-25h1.35v17h1.35v12h1.35v-24h1.35v-22h1.35v-16h1.35v41h1.35v-8h1.35v6h1.35v9h1.35v2h1.35v-8h1.35v-51h1.35v53h1.35v6h1.35v-14h1.35v6h1.35v-4h1.35v1h1.35v-8h1.35v5h1.35v2h1.35v-2h1.35v-9h1.35v7h1.35v-3h1.35v11h1.35v-5h1.35v1h1.35v-22h1.35v24h1.35v4h1.35v-8h1.35v14h1.35v-11h1.35v-2h1.35v0h1.35v8h1.35v-4h1.35v15h1.35v-14h1.35v-6h1.35v6h1.35v-14h1.35v11h1.35v-2h1.35v-20h1.35v31h1.35v-3h1.35v-12h1.35v7h1.35v2h1.35v-7h1.35v11h1.35v2h1.35v-12h1.35v15h1.35v-8h1.35v-8h1.35v10h1.35v2h1.35v-7h1.35v0h1.35v12h1.35v-3h1.35v-3h1.35v-4h1.35v-9h1.35v8h1.35v-2h1.35v2h1.35v8h1.35v1h1.35v-2h1.35v-6h1.35v-3h1.35v-1h1.35v-2h1.35v11h1.35v-7h1.35v-10h1.35v9h1.35v22h1.35v-22h1.35v8h1.35v2h1.35v-3h1.35v-17h1.35v28h1.35v-8h1.35v-9h1.35v-6h1.35v14h1.35v9h1.35v-20h1.35v3h1.35v-11h1.35v2h1.35v13h1.35v-1h1.35v-14h1.35v16h1.35v5h1.35v-3h1.35v-20h1.35v21h1.35v-1h1.35v11h1.35v-8h1.35v1h1.35v10h1.35v-9h1.35v-14h1.35v-4h1.35v17h1.35v-22h1.35v-7h1.35v26h1.35v-2h1.35v-9h1.35v-17h1.35v28h1.35v7h1.35v-5h1.35v-5h1.35v-28h1.35v30h1.35v-14h1.35v12h1.35v11h1.35v-4h1.35v-19h1.35v5h1.35v8h1.35v-23h1.35v19h1.35v-1h1.35v-5h1.35v-6h1.35v-2h1.35v-2h1.35v7h1.35v19h1.35v-11h1.35v-3h1.35v25h1.35v-27h1.35v13h1.35v-17h1.35v6h1.35v4h1.35v3h1.35v-35h1.35v22h1.35v9h1.35v-5h1.35v-2h1.35v16h1.35v-12h1.35v5h1.35v-21h1.35v23h1.35v-8h1.35v4h1.35v-1h1.35v-12h1.35v18h1.35v-24h1.35v27h1.35v0h1.35v-7h1.35v-18h1.35v17h1.35v2h1.35v9h1.35v-27h1.35v17h1.35v-11h1.35v-3h1.35v29h1.35v-11h1.35v-11h1.35v11h1.35v-19h1.35v33h1.35v-6h1.35v-26h1.35v11h1.35v15h1.35v-19h1.35v17h1.35v-4h1.35v-4h1.35v4h1.35v-2h1.35v6h1.35v-27h1.35v21h1.35v-5h1.35v-1h1.35v-3h1.35v-5h1.35v17h1.35v-11h1.35v11h1.35v-16h1.35v15h1.35v7h1.35v-23h1.35v10h1.35v9h1.35v-13h1.35v-2h1.35v0h1.35v6h1.35v-18h1.35v20h1.35v4h1.35v-1h1.35v-1h1.35v2h1.35v-14h1.35v14h1.35v8h1.35v-23h1.35v6h1.35v5h1.35v-2h1.35v4h1.35v-4h1.35v2h1.35v-21h1.35v20h1.35v0h1.35v-2h1.35v12h1.35v-8h1.35v1h1.35v5h1.35v0h1.35v1h1.35v-12h1.35v3h1.35v-8h1.35v-5h1.35v4h1.35v14h1.35v-22h1.35v8h1.35v12h1.35v-3h1.35v-22h1.35v18h1.35v10h1.35v-32h1.35v17h1.35v4h1.35v-11h1.35v-4h1.35v16h1.35v6h1.35v-11h1.35v8h1.35v6h1.35v-15h1.35v0h1.35v-2h1.35v7h1.35v-4h1.35v-6h1.35v-5h1.35v4h1.35v5h1.35v11h1.35v-34h1.35v29h1.35v-1h1.35v-7h1.35v6h1.35v-20h1.35v35h1.35v-20h1.35v4h1.35v4h1.35v-25h1.35v39h1.35v-14h1.35v0h1.35v17h1.35v-10h1.35v-5h1.35v2h1.35v-1h1.35v-5h1.35v17h1.35v-21h1.35v17h1.35v-18h1.35v12h1.35v-3h1.35v-9h1.35v12h1.35v-19h1.35v28h1.35v-10h1.35v10h1.35v-11h1.35v-11h1.35v5h1.35v15h1.35v1h1.35v2h1.35v-35h1.35v37h1.35v-21h1.35v8h1.35v6h1.35v-5h1.35v-4h1.35v-19h1.35v27h1.35v-4h1.35v8h1.35v-4h1.35v-17h1.35v22h1.35v-4h1.35v8h1.35v-6h1.35v-7h1.35v-5h1.35v11h1.35v-11h1.35v2h1.35v5h1.35v6h1.35v-1h1.35v-25h1.35v20h1.35v-1h1.35v-3h1.35v8h1.35v-17h1.35v21h1.35v-24h1.35v29h1.35v-19h1.35v-6h1.35v11h1.35v-13h1.35v8h1.35v16h1.35v-20h1.35v-12h1.35v10h1.35v13h1.35v-9h1.35v24h1.35v-18h1.35v-10h1.35v8h1.35v-1h1.35v-14h1.35v28h1.35v-7h1.35v-1h1.35v-2h1.35v-9h1.35v16h1.35v-3h1.35v-4h1.35v-24h1.35v56h1.35v-9h1.35v-12h1.35v-16h1.35v-3h1.35v-10h1.35v9h1.35v9h1.35v-8h1.35v-12h1.35v28h1.35v-23h1.35v3h1.35v-3h1.35v23h1.35v-11h1.35v3h1.35v-36h1.35v24h1.35v-8h1.35v15h1.35v4h1.35v-22h1.35v14h1.35v-6h1.35v0h1.35v3h1.35v7h1.35v-2h1.35v-5h1.35v4h1.35v-1h1.35v1h1.35v-3h1.35v-6h1.35v11h1.35v0h1.35v-2h1.35v-7h1.35v12h1.35v6h1.35v-7h1.35v0h1.35v15h1.35v-3h1.35v4h1.35v9h1.35v-20h1.35v21h1.35v10h1.35v-17h1.35v-7h1.35v20h1.35v-8h1.35v-39h1.35v47h1.35v5h1.35v-14h1.35v19h1.35v-11h1.35v-12h1.35v5h1.35v27h1.35v-5h1.35v11h1.35v-18h1.35v22h1.35v22h1.35v15h1.35v16h1.35v12h1.35v16h1.35v0V597.5z"/><path fill="#480a80" d="M318 597.5V453h1.35v11h1.35v-6h1.35v10h1.35v-23h1.35v-17h1.35v-3h1.35v-2h1.35v-4h1.35v5h1.35v5h1.35v-7h1.35v-8h1.35v-2h1.35v26h1.35v-13h1.35v-9h1.35v-5h1.35v13h1.35v-6h1.35v-7h1.35v8h1.35v5h1.35v-21h1.35v13h1.35v4h1.35v-3h1.35v13h1.35v-7h1.35v-7h1.35v12h1.35v-2h1.35v-4h1.35v-1h1.35v-7h1.35v12h1.35v-2h1.35v-9h1.35v19h1.35v-24h1.35v17h1.35v4h1.35v-8h1.35v-38h1.35v27h1.35v-10h1.35v21h1.35v-8h1.35v18h1.35v-2h1.35v-7h1.35v-16h1.35v8h1.35v1h1.35v-1h1.35v9h1.35v-4h1.35v16h1.35v-12h1.35v-7h1.35v21h1.35v-33h1.35v15h1.35v4h1.35v-8h1.35v9h1.35v6h1.35v-21h1.35v18h1.35v6h1.35v-27h1.35v19h1.35v-6h1.35v8h1.35v-7h1.35v-8h1.35v3h1.35v9h1.35v1h1.35v8h1.35v-19h1.35v17h1.35v-12h1.35v1h1.35v17h1.35v-6h1.35v-5h1.35v-7h1.35v15h1.35v-5h1.35v1h1.35v-1h1.35v-19h1.35v23h1.35v-16h1.35v6h1.35v-11h1.35v14h1.35v-11h1.35v11h1.35v-3h1.35v4h1.35v15h1.35v-13h1.35v-18h1.35v22h1.35v-3h1.35v-14h1.35v-10h1.35v14h1.35v-4h1.35v25h1.35v-1h1.35v-18h1.35v12h1.35v-10h1.35v-12h1.35v6h1.35v14h1.35v-15h1.35v21h1.35v-16h1.35v3h1.35v-14h1.35v19h1.35v-12h1.35v7h1.35v-5h1.35v-11h1.35v3h1.35v20h1.35v-13h1.35v0h1.35v12h1.35v-5h1.35v-16h1.35v15h1.35v5h1.35v-2h1.35v-4h1.35v16h1.35v-19h1.35v6h1.35v-1h1.35v11h1.35v-11h1.35v-10h1.35v7h1.35v13h1.35v-8h1.35v-18h1.35v19h1.35v0h1.35v-4h1.35v7h1.35v-6h1.35v-3h1.35v-8h1.35v12h1.35v2h1.35v-6h1.35v5h1.35v-7h1.35v9h1.35v-9h1.35v-18h1.35v4h1.35v6h1.35v13h1.35v-7h1.35v6h1.35v-2h1.35v0h1.35v4h1.35v1h1.35v-16h1.35v8h1.35v2h1.35v5h1.35v-14h1.35v28h1.35v-25h1.35v8h1.35v10h1.35v-16h1.35v15h1.35v-2h1.35v-5h1.35v-9h1.35v11h1.35v-7h1.35v7h1.35v11h1.35v-9h1.35v-7h1.35v0h1.35v5h1.35v-23h1.35v13h1.35v8h1.35v-12h1.35v3h1.35v1h1.35v3h1.35v-16h1.35v28h1.35v-7h1.35v5h1.35v-3h1.35v0h1.35v-4h1.35v-15h1.35v-8h1.35v12h1.35v27h1.35v-18h1.35v3h1.35v2h1.35v-7h1.35v11h1.35v-9h1.35v18h1.35v-12h1.35v-3h1.35v-2h1.35v-8h1.35v19h1.35v-13h1.35v6h1.35v4h1.35v-14h1.35v19h1.35v-13h1.35v-5h1.35v19h1.35v-13h1.35v-8h1.35v9h1.35v-12h1.35v6h1.35v-16h1.35v5h1.35v10h1.35v5h1.35v1h1.35v-28h1.35v23h1.35v12h1.35v-7h1.35v-7h1.35v6h1.35v-1h1.35v-5h1.35v21h1.35v-4h1.35v-6h1.35v-7h1.35v4h1.35v6h1.35v-18h1.35v5h1.35v-5h1.35v-10h1.35v20h1.35v4h1.35v-10h1.35v-1h1.35v5h1.35v-6h1.35v3h1.35v8h1.35v1h1.35v3h1.35v-14h1.35v-7h1.35v4h1.35v14h1.35v-2h1.35v10h1.35v-12h1.35v-5h1.35v2h1.35v-7h1.35v-8h1.35v7h1.35v6h1.35v7h1.35v-8h1.35v1h1.35v0h1.35v10h1.35v-19h1.35v17h1.35v-16h1.35v12h1.35v3h1.35v11h1.35v-23h1.35v16h1.35v-7h1.35v-4h1.35v11h1.35v-2h1.35v-7h1.35v5h1.35v-9h1.35v7h1.35v-3h1.35v1h1.35v-3h1.35v-2h1.35v6h1.35v1h1.35v7h1.35v-4h1.35v1h1.35v4h1.35v-19h1.35v3h1.35v6h1.35v-8h1.35v3h1.35v5h1.35v16h1.35v-20h1.35v8h1.35v-34h1.35v14h1.35v12h1.35v11h1.35v5h1.35v-4h1.35v-7h1.35v4h1.35v7h1.35v-18h1.35v3h1.35v-3h1.35v13h1.35v-23h1.35v17h1.35v-8h1.35v11h1.35v-9h1.35v5h1.35v2h1.35v1h1.35v-5h1.35v-2h1.35v16h1.35v-12h1.35v-4h1.35v4h1.35v-3h1.35v15h1.35v-8h1.35v-9h1.35v16h1.35v-10h1.35v-1h1.35v-6h1.35v-1h1.35v12h1.35v-27h1.35v23h1.35v-2h1.35v12h1.35v-13h1.35v7h1.35v0h1.35v-17h1.35v12h1.35v11h1.35v-11h1.35v-1h1.35v-2h1.35v-16h1.35v29h1.35v-16h1.35v-7h1.35v-1h1.35v-3h1.35v23h1.35v-1h1.35v3h1.35v-1h1.35v-27h1.35v23h1.35v-5h1.35v2h1.35v-39h1.35v36h1.35v5h1.35v-6h1.35v1h1.35v0h1.35v-7h1.35v16h1.35v-18h1.35v11h1.35v-6h1.35v-1h1.35v14h1.35v3h1.35v-17h1.35v8h1.35v-9h1.35v12h1.35v-9h1.35v16h1.35v-11h1.35v6h1.35v-23h1.35v17h1.35v-5h1.35v10h1.35v-3h1.35v17h1.35v-29h1.35v9h1.35v-3h1.35v14h1.35v-2h1.35v-13h1.35v0h1.35v-1h1.35v2h1.35v0h1.35v13h1.35v7h1.35v-5h1.35v-13h1.35v24h1.35v-7h1.35v-16h1.35v-3h1.35v8h1.35v7h1.35v-21h1.35v18h1.35v7h1.35v-14h1.35v-1h1.35v12h1.35v-20h1.35v3h1.35v-6h1.35v18h1.35v-3h1.35v1h1.35v4h1.35v-9h1.35v0h1.35v0h1.35v12h1.35v-9h1.35v-4h1.35v6h1.35v2h1.35v1h1.35v-9h1.35v19h1.35v-20h1.35v17h1.35v-3h1.35v-1h1.35v-3h1.35v-22h1.35v31h1.35v-22h1.35v8h1.35v-4h1.35v0h1.35v10h1.35v7h1.35v-21h1.35v14h1.35v-31h1.35v35h1.35v-17h1.35v7h1.35v11h1.35v-8h1.35v1h1.35v0h1.35v-10h1.35v-16h1.35v10h1.35v14h1.35v-2h1.35v-2h1.35v-2h1.35v-1h1.35v9h1.35v-3h1.35v-7h1.35v-8h1.35v16h1.35v-10h1.35v10h1.35v-17h1.35v19h1.35v-15h1.35v19h1.35v-3h1.35v-3h1.35v-6h1.35v-4h1.35v25h1.35v-9h1.35v-3h1.35v-3h1.35v9h1.35v-8h1.35v10h1.35v-18h1.35v-10h1.35v1h1.35v12h1.35v3h1.35v4h1.35v-1h1.35v6h1.35v-10h1.35v-1h1.35v-12h1.35v8h1.35v13h1.35v-2h1.35v-6h1.35v-1h1.35v5h1.35v7h1.35v-15h1.35v-1h1.35v11h1.35v-2h1.35v2h1.35v-11h1.35v-4h1.35v15h1.35v-16h1.35v4h1.35v7h1.35v-18h1.35v10h1.35v-10h1.35v15h1.35v10h1.35v-7h1.35v-19h1.35v27h1.35v-15h1.35v19h1.35v-13h1.35v-12h1.35v11h1.35v-8h1.35v-1h1.35v17h1.35v-8h1.35v-1h1.35v-12h1.35v17h1.35v-4h1.35v0h1.35v-15h1.35v25h1.35v-10h1.35v-1h1.35v-1h1.35v1h1.35v5h1.35v13h1.35v-30h1.35v10h1.35v23h1.35v-13h1.35v-9h1.35v-15h1.35v5h1.35v2h1.35v9h1.35v1h1.35v-1h1.35v-10h1.35v4h1.35v11h1.35v-12h1.35v16h1.35v5h1.35v-5h1.35v-29h1.35v19h1.35v0h1.35v-17h1.35v21h1.35v2h1.35v-6h1.35v-2h1.35v2h1.35v3h1.35v-5h1.35v3h1.35v-8h1.35v4h1.35v-2h1.35v-5h1.35v11h1.35v11h1.35v-9h1.35v2h1.35v-8h1.35v7h1.35v5h1.35v-4h1.35v1h1.35v-2h1.35v4h1.35v-12h1.35v-4h1.35v-1h1.35v-8h1.35v6h1.35v15h1.35v-10h1.35v-18h1.35v13h1.35v-4h1.35v15h1.35v10h1.35v-14h1.35v6h1.35v-16h1.35v6h1.35v18h1.35v9h1.35v-31h1.35v22h1.35v-14h1.35v8h1.35v-1h1.35v0h1.35v-14h1.35v19h1.35v-16h1.35v15h1.35v-16h1.35v16h1.35v-12h1.35v12h1.35v13h1.35v-19h1.35v13h1.35v-12h1.35v0h1.35v11h1.35v-6h1.35v8h1.35v13h1.35v-19h1.35v-4h1.35v-10h1.35v1h1.35v-14h1.35v21h1.35v12h1.35v-11h1.35v1h1.35v-13h1.35v13h1.35v1h1.35v-7h1.35v7h1.35v-10h1.35v11h1.35v-17h1.35v1h1.35v0h1.35v12h1.35v-11h1.35v10h1.35v-13h1.35v10h1.35v-4h1.35v8h1.35v-2h1.35v-9h1.35v25h1.35v-24h1.35v18h1.35v-11h1.35v1h1.35v-15h1.35v16h1.35v2h1.35v-10h1.35v-1h1.35v-4h1.35v11h1.35v13h1.35v-20h1.35v6h1.35v-15h1.35v-3h1.35v21h1.35v-8h1.35v4h1.35v6h1.35v-6h1.35v9h1.35v-1h1.35v-10h1.35v13h1.35v-5h1.35v2h1.35v0h1.35v5h1.35v-2h1.35v-5h1.35v8h1.35v-3h1.35v-5h1.35v-2h1.35v-4h1.35v8h1.35v1h1.35v-7h1.35v4h1.35v5h1.35v-15h1.35v9h1.35v8h1.35v-12h1.35v-6h1.35v11h1.35v-4h1.35v7h1.35v6h1.35v1h1.35v-20h1.35v6h1.35v-5h1.35v23h1.35v-20h1.35v13h1.35v-1h1.35v-11h1.35v5h1.35v3h1.35v2h1.35v-8h1.35v-4h1.35v6h1.35v-9h1.35v23h1.35v-13h1.35v-22h1.35v19h1.35v-3h1.35v6h1.35v-18h1.35v22h1.35v1h1.35v3h1.35v-3h1.35v5h1.35v13h1.35v-32h1.35v1h1.35v-2h1.35v12h1.35v-5h1.35v-21h1.35v36h1.35v-8h1.35v-6h1.35v-13h1.35v22h1.35v8h1.35v-14h1.35v-4h1.35v1h1.35v2h1.35v3h1.35v-3h1.35v12h1.35v-9h1.35v-5h1.35v-24h1.35v28h1.35v-19h1.35v6h1.35v7h1.35v-5h1.35v1h1.35v-1h1.35v-2h1.35v16h1.35v10h1.35v-33h1.35v26h1.35v3h1.35v-24h1.35v21h1.35v-13h1.35v3h1.35v7h1.35v-1h1.35v-24h1.35v4h1.35v5h1.35v-2h1.35v-2h1.35v11h1.35v4h1.35v-9h1.35v7h1.35v-4h1.35v-14h1.35v9h1.35v5h1.35v-11h1.35v12h1.35v-8h1.35v19h1.35v-7h1.35v-2h1.35v-1h1.35v-3h1.35v-1h1.35v12h1.35v5h1.35v-10h1.35v7h1.35v-27h1.35v38h1.35v-15h1.35v-9h1.35v11h1.35v0h1.35v8h1.35v-20h1.35v-1h1.35v8h1.35v-2h1.35v11h1.35v-2h1.35v2h1.35v-25h1.35v23h1.35v7h1.35v-6h1.35v-16h1.35v7h1.35v-13h1.35v6h1.35v0h1.35v3h1.35v7h1.35v-6h1.35v9h1.35v-16h1.35v5h1.35v12h1.35v-18h1.35v9h1.35v17h1.35v-20h1.35v5h1.35v-7h1.35v7h1.35v-2h1.35v10h1.35v8h1.35v-20h1.35v0h1.35v7h1.35v-4h1.35v-2h1.35v13h1.35v-25h1.35v19h1.35v2h1.35v-12h1.35v15h1.35v-9h1.35v6h1.35v-21h1.35v11h1.35v7h1.35v0h1.35v8h1.35v-4h1.35v-2h1.35v-11h1.35v16h1.35v-11h1.35v-12h1.35v14h1.35v-5h1.35v-17h1.35v19h1.35v3h1.35v-14h1.35v2h1.35v21h1.35v1h1.35v-63h1.35v46h1.35v13h1.35v-6h1.35v-12h1.35v12h1.35v12h1.35v-27h1.35v-3h1.35v19h1.35v-10h1.35v6h1.35v4h1.35v-8h1.35v23h1.35v-27h1.35v13h1.35v-19h1.35v7h1.35v2h1.35v-5h1.35v12h1.35v-2h1.35v2h1.35v5h1.35v0h1.35v-14h1.35v2h1.35v-1h1.35v19h1.35v-9h1.35v-1h1.35v-6h1.35v-3h1.35v13h1.35v-10h1.35v14h1.35v2h1.35v-3h1.35v-9h1.35v-2h1.35v-3h1.35v7h1.35v6h1.35v-19h1.35v17h1.35v-5h1.35v-4h1.35v1h1.35v-3h1.35v7h1.35v-20h1.35v27h1.35v-8h1.35v7h1.35v-6h1.35v-17h1.35v11h1.35v7h1.35v7h1.35v-2h1.35v0h1.35v2h1.35v-28h1.35v26h1.35v-5h1.35v-1h1.35v-7h1.35v-8h1.35v19h1.35v-1h1.35v6h1.35v-5h1.35v-7h1.35v11h1.35v3h1.35v-1h1.35v-10h1.35v3h1.35v-8h1.35v12h1.35v-9h1.35v-2h1.35v11h1.35v11h1.35v-5h1.35v-31h1.35v25h1.35v-7h1.35v0h1.35v7h1.35v-7h1.35v16h1.35v-18h1.35v16h1.35v-17h1.35v-2h1.35v3h1.35v-13h1.35v-3h1.35v34h1.35v-22h1.35v-4h1.35v8h1.35v12h1.35v-18h1.35v-10h1.35v27h1.35v-28h1.35v28h1.35v-14h1.35v-12h1.35v25h1.35v4h1.35v-35h1.35v21h1.35v-17h1.35v23h1.35v-2h1.35v2h1.35v-16h1.35v18h1.35v15h1.35v-3h1.35v-20h1.35v5h1.35v-6h1.35v2h1.35v-3h1.35v-4h1.35v6h1.35v7h1.35v-7h1.35v5h1.35v-12h1.35v16h1.35v-6h1.35v-1h1.35v-6h1.35v-5h1.35v4h1.35v6h1.35v-3h1.35v0h1.35v-4h1.35v-17h1.35v19h1.35v0h1.35v-7h1.35v12h1.35v0h1.35v1h1.35v-7h1.35v-7h1.35v22h1.35v-11h1.35v-3h1.35v1h1.35v-1h1.35v0h1.35v5h1.35v-1h1.35v1h1.35v3h1.35v7h1.35v-1h1.35v10h1.35v3h1.35v-22h1.35v29h1.35v0h1.35v0h1.35v-23h1.35v26h1.35v-4h1.35v-28h1.35v21h1.35v6h1.35v-6h1.35v6h1.35v5h1.35v-6h1.35v-2h1.35v17h1.35v1h1.35v1h1.35v-13h1.35v21h1.35v25h1.35v17h1.35v14h1.35v12h1.35v15h1.35v0V597.5z"/><path fill="#860a98" d="M318 597.5V454h1.35v7h1.35v3h1.35v10h1.35v-21h1.35v-10h1.35v-13h1.35v-1h1.35v-7h1.35v15h1.35v-8h1.35v1h1.35v-6h1.35v6h1.35v30h1.35v-22h1.35v-11h1.35v-9h1.35v6h1.35v13h1.35v-6h1.35v0h1.35v-9h1.35v-4h1.35v7h1.35v7h1.35v-9h1.35v17h1.35v-10h1.35v5h1.35v1h1.35v-3h1.35v-6h1.35v7h1.35v4h1.35v-8h1.35v1h1.35v-12h1.35v29h1.35v-29h1.35v14h1.35v9h1.35v-10h1.35v-3h1.35v0h1.35v8h1.35v-15h1.35v9h1.35v8h1.35v8h1.35v-20h1.35v6h1.35v-3h1.35v5h1.35v3h1.35v0h1.35v-2h1.35v7h1.35v-10h1.35v-5h1.35v16h1.35v-23h1.35v16h1.35v-8h1.35v-10h1.35v20h1.35v-4h1.35v-3h1.35v-4h1.35v0h1.35v0h1.35v9h1.35v-9h1.35v-1h1.35v-1h1.35v-24h1.35v21h1.35v19h1.35v-4h1.35v9h1.35v-16h1.35v17h1.35v-22h1.35v-10h1.35v27h1.35v-11h1.35v14h1.35v-10h1.35v14h1.35v-14h1.35v9h1.35v-2h1.35v-21h1.35v18h1.35v-7h1.35v8h1.35v-9h1.35v15h1.35v-23h1.35v9h1.35v-9h1.35v10h1.35v7h1.35v-4h1.35v-45h1.35v55h1.35v-11h1.35v-11h1.35v1h1.35v15h1.35v-15h1.35v27h1.35v-5h1.35v-47h1.35v29h1.35v-1h1.35v2h1.35v5h1.35v1h1.35v-6h1.35v22h1.35v-20h1.35v0h1.35v-13h1.35v18h1.35v-3h1.35v2h1.35v-1h1.35v-12h1.35v6h1.35v-9h1.35v15h1.35v-11h1.35v9h1.35v3h1.35v-6h1.35v4h1.35v3h1.35v1h1.35v-4h1.35v14h1.35v-19h1.35v3h1.35v1h1.35v16h1.35v-18h1.35v0h1.35v5h1.35v8h1.35v-9h1.35v3h1.35v-1h1.35v4h1.35v-1h1.35v12h1.35v-10h1.35v-16h1.35v6h1.35v7h1.35v-1h1.35v0h1.35v-10h1.35v2h1.35v5h1.35v-8h1.35v-1h1.35v-7h1.35v-3h1.35v16h1.35v-7h1.35v10h1.35v-11h1.35v15h1.35v-3h1.35v-1h1.35v-8h1.35v13h1.35v-6h1.35v10h1.35v-16h1.35v25h1.35v-26h1.35v8h1.35v0h1.35v-8h1.35v16h1.35v0h1.35v-21h1.35v0h1.35v14h1.35v0h1.35v-1h1.35v6h1.35v-2h1.35v-5h1.35v4h1.35v2h1.35v-21h1.35v19h1.35v-8h1.35v-10h1.35v-3h1.35v23h1.35v-8h1.35v-12h1.35v16h1.35v8h1.35v-7h1.35v4h1.35v1h1.35v-7h1.35v-10h1.35v-16h1.35v16h1.35v19h1.35v-10h1.35v6h1.35v-1h1.35v-10h1.35v9h1.35v-11h1.35v17h1.35v-3h1.35v-3h1.35v-17h1.35v0h1.35v31h1.35v-7h1.35v-18h1.35v9h1.35v-5h1.35v10h1.35v-5h1.35v-2h1.35v-2h1.35v3h1.35v-1h1.35v4h1.35v-14h1.35v2h1.35v-8h1.35v3h1.35v1h1.35v10h1.35v7h1.35v-9h1.35v4h1.35v5h1.35v2h1.35v-15h1.35v3h1.35v2h1.35v4h1.35v15h1.35v-1h1.35v-19h1.35v0h1.35v2h1.35v3h1.35v-17h1.35v6h1.35v-4h1.35v-6h1.35v29h1.35v1h1.35v-6h1.35v-4h1.35v3h1.35v-4h1.35v-9h1.35v5h1.35v22h1.35v-8h1.35v-6h1.35v-15h1.35v12h1.35v8h1.35v-6h1.35v2h1.35v7h1.35v-15h1.35v11h1.35v-10h1.35v-9h1.35v8h1.35v3h1.35v3h1.35v-10h1.35v2h1.35v6h1.35v-3h1.35v-11h1.35v11h1.35v-4h1.35v6h1.35v0h1.35v18h1.35v-33h1.35v16h1.35v11h1.35v-21h1.35v2h1.35v9h1.35v1h1.35v8h1.35v-21h1.35v12h1.35v6h1.35v-14h1.35v-4h1.35v3h1.35v0h1.35v5h1.35v6h1.35v-1h1.35v2h1.35v8h1.35v-4h1.35v-7h1.35v-15h1.35v-10h1.35v33h1.35v-28h1.35v33h1.35v-15h1.35v-3h1.35v-3h1.35v9h1.35v-20h1.35v16h1.35v15h1.35v-10h1.35v-3h1.35v0h1.35v-1h1.35v-12h1.35v15h1.35v-9h1.35v13h1.35v-27h1.35v21h1.35v3h1.35v4h1.35v-15h1.35v-2h1.35v27h1.35v-13h1.35v-16h1.35v12h1.35v0h1.35v0h1.35v-24h1.35v15h1.35v5h1.35v4h1.35v3h1.35v-12h1.35v25h1.35v-7h1.35v-16h1.35v-5h1.35v-2h1.35v21h1.35v-30h1.35v19h1.35v-1h1.35v-8h1.35v14h1.35v2h1.35v-1h1.35v-14h1.35v16h1.35v10h1.35v-19h1.35v-2h1.35v6h1.35v-27h1.35v31h1.35v-22h1.35v6h1.35v0h1.35v-5h1.35v10h1.35v18h1.35v-7h1.35v6h1.35v-16h1.35v6h1.35v-9h1.35v15h1.35v-15h1.35v11h1.35v-2h1.35v-17h1.35v11h1.35v-3h1.35v-4h1.35v6h1.35v-10h1.35v14h1.35v-11h1.35v6h1.35v3h1.35v20h1.35v-27h1.35v7h1.35v-3h1.35v7h1.35v-12h1.35v19h1.35v1h1.35v-4h1.35v-21h1.35v6h1.35v9h1.35v9h1.35v-12h1.35v29h1.35v-35h1.35v14h1.35v-3h1.35v5h1.35v-4h1.35v-14h1.35v8h1.35v-3h1.35v-4h1.35v12h1.35v15h1.35v-11h1.35v6h1.35v-2h1.35v12h1.35v-13h1.35v-2h1.35v1h1.35v-9h1.35v6h1.35v-8h1.35v18h1.35v-2h1.35v-17h1.35v14h1.35v-5h1.35v-7h1.35v-15h1.35v13h1.35v12h1.35v4h1.35v-23h1.35v13h1.35v-5h1.35v5h1.35v-4h1.35v17h1.35v-23h1.35v-3h1.35v18h1.35v-18h1.35v18h1.35v-2h1.35v6h1.35v-13h1.35v9h1.35v-1h1.35v0h1.35v9h1.35v-41h1.35v35h1.35v-10h1.35v3h1.35v-6h1.35v4h1.35v6h1.35v-3h1.35v-4h1.35v-3h1.35v7h1.35v9h1.35v-9h1.35v-8h1.35v17h1.35v-15h1.35v19h1.35v-18h1.35v-1h1.35v3h1.35v-7h1.35v-1h1.35v5h1.35v-35h1.35v29h1.35v-20h1.35v40h1.35v-6h1.35v-4h1.35v-5h1.35v19h1.35v-16h1.35v5h1.35v-15h1.35v14h1.35v-7h1.35v18h1.35v-1h1.35v-12h1.35v0h1.35v-13h1.35v28h1.35v-10h1.35v-12h1.35v13h1.35v-6h1.35v-10h1.35v15h1.35v-8h1.35v1h1.35v-6h1.35v-23h1.35v46h1.35v-21h1.35v0h1.35v17h1.35v-11h1.35v-5h1.35v0h1.35v-18h1.35v39h1.35v-14h1.35v4h1.35v-14h1.35v9h1.35v17h1.35v-17h1.35v7h1.35v-6h1.35v1h1.35v15h1.35v-23h1.35v-5h1.35v20h1.35v-11h1.35v-5h1.35v14h1.35v-16h1.35v17h1.35v-23h1.35v9h1.35v10h1.35v-7h1.35v-9h1.35v13h1.35v-4h1.35v9h1.35v-1h1.35v-7h1.35v7h1.35v6h1.35v-24h1.35v5h1.35v19h1.35v-5h1.35v-20h1.35v5h1.35v17h1.35v-9h1.35v-14h1.35v22h1.35v-9h1.35v9h1.35v-8h1.35v-2h1.35v0h1.35v21h1.35v-24h1.35v-2h1.35v23h1.35v-9h1.35v-13h1.35v8h1.35v-9h1.35v18h1.35v-25h1.35v13h1.35v0h1.35v-35h1.35v35h1.35v-5h1.35v0h1.35v20h1.35v-7h1.35v5h1.35v-4h1.35v-22h1.35v6h1.35v-3h1.35v5h1.35v4h1.35v-8h1.35v-1h1.35v8h1.35v5h1.35v8h1.35v-19h1.35v4h1.35v-7h1.35v14h1.35v-11h1.35v4h1.35v18h1.35v-20h1.35v10h1.35v-1h1.35v1h1.35v8h1.35v-3h1.35v-9h1.35v0h1.35v1h1.35v3h1.35v-6h1.35v-2h1.35v-5h1.35v9h1.35v-18h1.35v29h1.35v-16h1.35v-5h1.35v0h1.35v2h1.35v16h1.35v-26h1.35v19h1.35v-7h1.35v-13h1.35v22h1.35v14h1.35v-28h1.35v19h1.35v-7h1.35v11h1.35v-13h1.35v10h1.35v-6h1.35v-6h1.35v-6h1.35v19h1.35v-18h1.35v1h1.35v10h1.35v11h1.35v2h1.35v-21h1.35v5h1.35v10h1.35v1h1.35v1h1.35v-7h1.35v2h1.35v9h1.35v-17h1.35v11h1.35v-15h1.35v4h1.35v-6h1.35v12h1.35v10h1.35v-8h1.35v0h1.35v-11h1.35v2h1.35v16h1.35v-13h1.35v3h1.35v-9h1.35v10h1.35v-13h1.35v14h1.35v-9h1.35v-1h1.35v-8h1.35v8h1.35v-2h1.35v4h1.35v-2h1.35v11h1.35v2h1.35v-16h1.35v30h1.35v-34h1.35v18h1.35v-9h1.35v-24h1.35v17h1.35v7h1.35v15h1.35v3h1.35v-11h1.35v-22h1.35v-13h1.35v42h1.35v-8h1.35v-11h1.35v-3h1.35v15h1.35v-2h1.35v-5h1.35v-7h1.35v24h1.35v-23h1.35v16h1.35v0h1.35v-18h1.35v25h1.35v-17h1.35v8h1.35v1h1.35v5h1.35v-9h1.35v0h1.35v4h1.35v3h1.35v-2h1.35v4h1.35v-20h1.35v8h1.35v9h1.35v-9h1.35v13h1.35v-5h1.35v-12h1.35v-16h1.35v29h1.35v-13h1.35v-8h1.35v12h1.35v1h1.35v16h1.35v-6h1.35v-3h1.35v-12h1.35v7h1.35v0h1.35v7h1.35v-16h1.35v20h1.35v-6h1.35v-10h1.35v8h1.35v2h1.35v11h1.35v-8h1.35v-24h1.35v7h1.35v-6h1.35v13h1.35v1h1.35v-14h1.35v12h1.35v-1h1.35v5h1.35v-24h1.35v21h1.35v11h1.35v2h1.35v-5h1.35v8h1.35v3h1.35v-16h1.35v6h1.35v-10h1.35v6h1.35v-4h1.35v-7h1.35v15h1.35v-27h1.35v13h1.35v-5h1.35v23h1.35v14h1.35v-22h1.35v-5h1.35v-11h1.35v23h1.35v-6h1.35v3h1.35v9h1.35v-4h1.35v-13h1.35v-6h1.35v15h1.35v-39h1.35v11h1.35v8h1.35v9h1.35v4h1.35v-3h1.35v0h1.35v-5h1.35v16h1.35v-5h1.35v-1h1.35v-6h1.35v-3h1.35v-15h1.35v14h1.35v3h1.35v1h1.35v-1h1.35v-19h1.35v6h1.35v12h1.35v-7h1.35v-2h1.35v20h1.35v-7h1.35v2h1.35v-2h1.35v11h1.35v-24h1.35v18h1.35v3h1.35v-23h1.35v22h1.35v-22h1.35v16h1.35v10h1.35v-15h1.35v8h1.35v-6h1.35v2h1.35v13h1.35v-2h1.35v-6h1.35v-8h1.35v-10h1.35v31h1.35v-7h1.35v-4h1.35v-6h1.35v-6h1.35v5h1.35v5h1.35v-12h1.35v6h1.35v11h1.35v-6h1.35v-5h1.35v-1h1.35v8h1.35v-3h1.35v-26h1.35v27h1.35v-13h1.35v2h1.35v-14h1.35v16h1.35v-5h1.35v8h1.35v8h1.35v-10h1.35v9h1.35v-2h1.35v-4h1.35v10h1.35v-18h1.35v10h1.35v3h1.35v-13h1.35v5h1.35v0h1.35v4h1.35v-2h1.35v-2h1.35v-3h1.35v-11h1.35v19h1.35v2h1.35v0h1.35v0h1.35v6h1.35v-21h1.35v16h1.35v3h1.35v-8h1.35v13h1.35v-14h1.35v11h1.35v-27h1.35v17h1.35v13h1.35v-23h1.35v16h1.35v2h1.35v-4h1.35v6h1.35v7h1.35v-16h1.35v-11h1.35v6h1.35v7h1.35v-14h1.35v11h1.35v-1h1.35v-6h1.35v7h1.35v7h1.35v-1h1.35v-29h1.35v25h1.35v12h1.35v-17h1.35v5h1.35v-2h1.35v13h1.35v-30h1.35v8h1.35v9h1.35v-42h1.35v46h1.35v-7h1.35v-33h1.35v50h1.35v-16h1.35v6h1.35v-5h1.35v-13h1.35v3h1.35v6h1.35v3h1.35v6h1.35v-5h1.35v5h1.35v-2h1.35v-5h1.35v2h1.35v-16h1.35v30h1.35v-15h1.35v-4h1.35v6h1.35v-8h1.35v14h1.35v-16h1.35v20h1.35v-16h1.35v9h1.35v5h1.35v-8h1.35v2h1.35v-1h1.35v12h1.35v-57h1.35v49h1.35v-5h1.35v-3h1.35v10h1.35v-19h1.35v9h1.35v-5h1.35v24h1.35v-16h1.35v9h1.35v-12h1.35v-2h1.35v4h1.35v17h1.35v-15h1.35v17h1.35v-22h1.35v2h1.35v-10h1.35v17h1.35v-1h1.35v3h1.35v-2h1.35v-14h1.35v13h1.35v-3h1.35v6h1.35v2h1.35v-20h1.35v18h1.35v3h1.35v11h1.35v-15h1.35v1h1.35v-4h1.35v3h1.35v-15h1.35v13h1.35v14h1.35v-9h1.35v2h1.35v-20h1.35v27h1.35v-14h1.35v8h1.35v-2h1.35v-4h1.35v7h1.35v-10h1.35v12h1.35v-17h1.35v2h1.35v1h1.35v-15h1.35v12h1.35v16h1.35v-21h1.35v-6h1.35v19h1.35v-8h1.35v-3h1.35v24h1.35v-28h1.35v3h1.35v20h1.35v-22h1.35v2h1.35v21h1.35v-4h1.35v-7h1.35v-3h1.35v6h1.35v4h1.35v-4h1.35v6h1.35v-32h1.35v49h1.35v-14h1.35v3h1.35v-28h1.35v11h1.35v-10h1.35v5h1.35v-2h1.35v7h1.35v-17h1.35v17h1.35v-2h1.35v0h1.35v-6h1.35v9h1.35v4h1.35v-13h1.35v-1h1.35v-5h1.35v-6h1.35v24h1.35v-7h1.35v-1h1.35v6h1.35v-33h1.35v28h1.35v4h1.35v-21h1.35v25h1.35v-2h1.35v-6h1.35v-5h1.35v2h1.35v-10h1.35v21h1.35v-7h1.35v-3h1.35v5h1.35v-4h1.35v7h1.35v-5h1.35v-2h1.35v1h1.35v15h1.35v-5h1.35v16h1.35v8h1.35v-47h1.35v45h1.35v0h1.35v-3h1.35v-29h1.35v38h1.35v-8h1.35v-33h1.35v21h1.35v11h1.35v-15h1.35v19h1.35v6h1.35v-25h1.35v-2h1.35v29h1.35v-2h1.35v10h1.35v-34h1.35v35h1.35v24h1.35v15h1.35v12h1.35v11h1.35v15h1.35v0V597.5z"/><path fill="#ae108a" d="M318 597.5V533h1.35v0h1.35v1h1.35v-5h1.35v-31h1.35v-31h1.35v-23h1.35v-3h1.35v-6h1.35v22h1.35v-18h1.35v3h1.35v-11h1.35v6h1.35v27h1.35v-12h1.35v-11h1.35v-4h1.35v3h1.35v9h1.35v-10h1.35v8h1.35v-23h1.35v-1h1.35v8h1.35v13h1.35v-10h1.35v11h1.35v-12h1.35v16h1.35v-5h1.35v-9h1.35v15h1.35v-11h1.35v4h1.35v-3h1.35v8h1.35v-18h1.35v29h1.35v-33h1.35v13h1.35v15h1.35v-21h1.35v-3h1.35v2h1.35v20h1.35v-17h1.35v0h1.35v27h1.35v-5h1.35v-22h1.35v4h1.35v-4h1.35v3h1.35v8h1.35v-2h1.35v-5h1.35v14h1.35v-4h1.35v-6h1.35v11h1.35v-16h1.35v17h1.35v-5h1.35v-13h1.35v4h1.35v-2h1.35v7h1.35v5h1.35v0h1.35v-12h1.35v1h1.35v-5h1.35v4h1.35v5h1.35v-8h1.35v10h1.35v4h1.35v-2h1.35v10h1.35v-25h1.35v21h1.35v-19h1.35v2h1.35v8h1.35v6h1.35v3h1.35v-13h1.35v18h1.35v-7h1.35v0h1.35v-5h1.35v-2h1.35v6h1.35v-3h1.35v-2h1.35v-10h1.35v21h1.35v-4h1.35v-7h1.35v-9h1.35v3h1.35v15h1.35v6h1.35v-5h1.35v4h1.35v-16h1.35v-16h1.35v2h1.35v15h1.35v-17h1.35v30h1.35v9h1.35v-29h1.35v-1h1.35v10h1.35v-1h1.35v-4h1.35v5h1.35v1h1.35v18h1.35v-26h1.35v5h1.35v-14h1.35v23h1.35v-14h1.35v2h1.35v9h1.35v-20h1.35v17h1.35v-8h1.35v2h1.35v-10h1.35v17h1.35v5h1.35v-21h1.35v8h1.35v12h1.35v6h1.35v-3h1.35v-7h1.35v-13h1.35v0h1.35v1h1.35v19h1.35v-11h1.35v-1h1.35v3h1.35v2h1.35v2h1.35v-3h1.35v3h1.35v0h1.35v-2h1.35v12h1.35v-13h1.35v-12h1.35v4h1.35v21h1.35v-17h1.35v2h1.35v-6h1.35v4h1.35v-2h1.35v-1h1.35v-6h1.35v-1h1.35v-2h1.35v8h1.35v-4h1.35v7h1.35v-17h1.35v19h1.35v7h1.35v-2h1.35v-2h1.35v-2h1.35v-6h1.35v9h1.35v-18h1.35v33h1.35v-24h1.35v6h1.35v0h1.35v-4h1.35v18h1.35v-4h1.35v-12h1.35v-5h1.35v10h1.35v2h1.35v-2h1.35v-7h1.35v18h1.35v-19h1.35v13h1.35v-9h1.35v-19h1.35v26h1.35v-6h1.35v-7h1.35v-5h1.35v28h1.35v-12h1.35v-25h1.35v28h1.35v-4h1.35v9h1.35v-11h1.35v4h1.35v-2h1.35v-2h1.35v-20h1.35v12h1.35v21h1.35v-16h1.35v13h1.35v-15h1.35v-6h1.35v23h1.35v-22h1.35v25h1.35v-8h1.35v-8h1.35v-3h1.35v-7h1.35v22h1.35v-6h1.35v-8h1.35v3h1.35v-1h1.35v2h1.35v-4h1.35v7h1.35v-3h1.35v3h1.35v-1h1.35v3h1.35v-21h1.35v11h1.35v-19h1.35v8h1.35v7h1.35v0h1.35v10h1.35v-7h1.35v3h1.35v3h1.35v14h1.35v-13h1.35v-3h1.35v-5h1.35v10h1.35v61h1.35v-1h1.35v-66h1.35v-1h1.35v-2h1.35v-2h1.35v-6h1.35v-4h1.35v11h1.35v-16h1.35v22h1.35v6h1.35v-2h1.35v-10h1.35v10h1.35v1h1.35v-22h1.35v8h1.35v18h1.35v-5h1.35v4h1.35v-19h1.35v5h1.35v8h1.35v-1h1.35v17h1.35v-9h1.35v-19h1.35v11h1.35v-15h1.35v1h1.35v12h1.35v-7h1.35v2h1.35v2h1.35v-9h1.35v7h1.35v6h1.35v-11h1.35v15h1.35v-14h1.35v3h1.35v6h1.35v12h1.35v-27h1.35v32h1.35v-10h1.35v-17h1.35v1h1.35v11h1.35v-4h1.35v15h1.35v-31h1.35v14h1.35v20h1.35v-23h1.35v-7h1.35v7h1.35v-4h1.35v8h1.35v12h1.35v-1h1.35v-3h1.35v2h1.35v-5h1.35v-2h1.35v-18h1.35v7h1.35v18h1.35v-11h1.35v21h1.35v-23h1.35v-1h1.35v-3h1.35v5h1.35v-13h1.35v14h1.35v12h1.35v-3h1.35v-2h1.35v-6h1.35v9h1.35v-22h1.35v15h1.35v-12h1.35v18h1.35v-19h1.35v19h1.35v-9h1.35v3h1.35v-12h1.35v-1h1.35v22h1.35v-11h1.35v2h1.35v-5h1.35v10h1.35v-6h1.35v11h1.35v-16h1.35v3h1.35v3h1.35v-3h1.35v-14h1.35v30h1.35v-11h1.35v-2h1.35v-11h1.35v0h1.35v12h1.35v-18h1.35v21h1.35v-15h1.35v0h1.35v12h1.35v7h1.35v-3h1.35v-23h1.35v25h1.35v9h1.35v-27h1.35v9h1.35v4h1.35v-17h1.35v13h1.35v-16h1.35v-2h1.35v10h1.35v-6h1.35v15h1.35v10h1.35v-11h1.35v17h1.35v-25h1.35v13h1.35v0h1.35v-5h1.35v-13h1.35v10h1.35v-3h1.35v11h1.35v-10h1.35v-5h1.35v3h1.35v15h1.35v-29h1.35v12h1.35v6h1.35v-12h1.35v16h1.35v12h1.35v-13h1.35v-7h1.35v-7h1.35v22h1.35v-16h1.35v16h1.35v-6h1.35v2h1.35v-15h1.35v-1h1.35v13h1.35v5h1.35v-14h1.35v23h1.35v-32h1.35v15h1.35v12h1.35v-1h1.35v-1h1.35v-17h1.35v12h1.35v2h1.35v-23h1.35v15h1.35v11h1.35v-6h1.35v11h1.35v-6h1.35v12h1.35v-17h1.35v-2h1.35v2h1.35v2h1.35v7h1.35v-14h1.35v11h1.35v3h1.35v-13h1.35v9h1.35v-3h1.35v-10h1.35v-3h1.35v8h1.35v2h1.35v3h1.35v-14h1.35v11h1.35v-4h1.35v6h1.35v-13h1.35v20h1.35v-13h1.35v-15h1.35v16h1.35v-4h1.35v19h1.35v-3h1.35v0h1.35v-3h1.35v-10h1.35v26h1.35v-16h1.35v1h1.35v-26h1.35v33h1.35v-11h1.35v4h1.35v-16h1.35v7h1.35v4h1.35v1h1.35v-11h1.35v3h1.35v10h1.35v4h1.35v-5h1.35v-5h1.35v6h1.35v-18h1.35v17h1.35v-8h1.35v-3h1.35v2h1.35v-8h1.35v16h1.35v-5h1.35v-8h1.35v7h1.35v-12h1.35v32h1.35v-23h1.35v-1h1.35v-5h1.35v25h1.35v-13h1.35v-5h1.35v0h1.35v8h1.35v-17h1.35v21h1.35v-3h1.35v-6h1.35v4h1.35v-6h1.35v17h1.35v-18h1.35v2h1.35v12h1.35v2h1.35v-1h1.35v8h1.35v-22h1.35v1h1.35v-14h1.35v10h1.35v18h1.35v-1h1.35v-7h1.35v-1h1.35v6h1.35v-20h1.35v-3h1.35v-2h1.35v26h1.35v9h1.35v-21h1.35v2h1.35v8h1.35v12h1.35v-22h1.35v2h1.35v12h1.35v-4h1.35v5h1.35v-5h1.35v-17h1.35v24h1.35v-21h1.35v-7h1.35v15h1.35v-17h1.35v21h1.35v-22h1.35v15h1.35v-4h1.35v-2h1.35v-10h1.35v27h1.35v-13h1.35v11h1.35v-10h1.35v-3h1.35v5h1.35v8h1.35v-29h1.35v31h1.35v-6h1.35v-1h1.35v-28h1.35v23h1.35v5h1.35v-7h1.35v-18h1.35v19h1.35v4h1.35v-1h1.35v3h1.35v-10h1.35v13h1.35v4h1.35v-16h1.35v5h1.35v9h1.35v-7h1.35v-12h1.35v7h1.35v0h1.35v12h1.35v-19h1.35v6h1.35v3h1.35v-23h1.35v31h1.35v-7h1.35v-11h1.35v23h1.35v-7h1.35v6h1.35v-9h1.35v-11h1.35v10h1.35v-18h1.35v19h1.35v2h1.35v2h1.35v-9h1.35v-2h1.35v-2h1.35v13h1.35v-14h1.35v3h1.35v11h1.35v-9h1.35v3h1.35v-9h1.35v20h1.35v-12h1.35v13h1.35v-14h1.35v0h1.35v12h1.35v-7h1.35v-11h1.35v9h1.35v-5h1.35v2h1.35v-5h1.35v-4h1.35v-5h1.35v26h1.35v-9h1.35v5h1.35v-18h1.35v-1h1.35v0h1.35v-1h1.35v28h1.35v-14h1.35v10h1.35v-23h1.35v9h1.35v14h1.35v10h1.35v-28h1.35v10h1.35v-5h1.35v9h1.35v-7h1.35v12h1.35v-12h1.35v-6h1.35v-6h1.35v23h1.35v-21h1.35v8h1.35v8h1.35v10h1.35v-3h1.35v-16h1.35v16h1.35v-5h1.35v-2h1.35v8h1.35v-15h1.35v9h1.35v15h1.35v-29h1.35v22h1.35v-19h1.35v6h1.35v-18h1.35v15h1.35v21h1.35v-18h1.35v1h1.35v-11h1.35v9h1.35v7h1.35v-14h1.35v2h1.35v0h1.35v6h1.35v-5h1.35v3h1.35v-12h1.35v12h1.35v-2h1.35v2h1.35v-3h1.35v-9h1.35v12h1.35v15h1.35v-5h1.35v-16h1.35v25h1.35v-24h1.35v26h1.35v-16h1.35v-8h1.35v-6h1.35v9h1.35v5h1.35v8h1.35v-14h1.35v-5h1.35v-3h1.35v22h1.35v-16h1.35v-14h1.35v5h1.35v18h1.35v-3h1.35v-4h1.35v-1h1.35v9h1.35v-15h1.35v13h1.35v-3h1.35v-16h1.35v23h1.35v0h1.35v-10h1.35v11h1.35v-3h1.35v0h1.35v-11h1.35v12h1.35v4h1.35v-13h1.35v9h1.35v-22h1.35v15h1.35v6h1.35v-10h1.35v13h1.35v-6h1.35v-2h1.35v-9h1.35v17h1.35v-7h1.35v-15h1.35v4h1.35v4h1.35v15h1.35v-4h1.35v15h1.35v-25h1.35v18h1.35v-5h1.35v-9h1.35v3h1.35v23h1.35v-23h1.35v-7h1.35v5h1.35v9h1.35v5h1.35v-9h1.35v-4h1.35v-3h1.35v-15h1.35v28h1.35v-11h1.35v-21h1.35v25h1.35v-4h1.35v6h1.35v-23h1.35v18h1.35v11h1.35v-5h1.35v2h1.35v-1h1.35v5h1.35v-16h1.35v3h1.35v5h1.35v12h1.35v-25h1.35v7h1.35v5h1.35v0h1.35v-9h1.35v-14h1.35v28h1.35v11h1.35v-10h1.35v-6h1.35v-12h1.35v10h1.35v-4h1.35v12h1.35v8h1.35v-11h1.35v-6h1.35v-8h1.35v14h1.35v-26h1.35v1h1.35v4h1.35v13h1.35v2h1.35v-10h1.35v7h1.35v-2h1.35v14h1.35v-14h1.35v14h1.35v-3h1.35v-14h1.35v19h1.35v-25h1.35v21h1.35v-9h1.35v1h1.35v-16h1.35v-4h1.35v19h1.35v-8h1.35v-9h1.35v24h1.35v-2h1.35v-11h1.35v6h1.35v13h1.35v-26h1.35v14h1.35v1h1.35v-23h1.35v24h1.35v-17h1.35v12h1.35v8h1.35v1h1.35v-4h1.35v-4h1.35v-5h1.35v14h1.35v-5h1.35v0h1.35v-6h1.35v-11h1.35v26h1.35v-6h1.35v-2h1.35v-9h1.35v9h1.35v15h1.35v1h1.35v-34h1.35v6h1.35v13h1.35v-7h1.35v9h1.35v10h1.35v-1h1.35v-11h1.35v6h1.35v-3h1.35v-23h1.35v13h1.35v1h1.35v10h1.35v-18h1.35v7h1.35v17h1.35v-14h1.35v-2h1.35v-2h1.35v7h1.35v11h1.35v-24h1.35v5h1.35v10h1.35v-16h1.35v12h1.35v-12h1.35v13h1.35v-7h1.35v17h1.35v3h1.35v-18h1.35v-3h1.35v4h1.35v-2h1.35v8h1.35v-1h1.35v-12h1.35v6h1.35v8h1.35v-5h1.35v6h1.35v-9h1.35v9h1.35v-22h1.35v16h1.35v6h1.35v3h1.35v5h1.35v-2h1.35v-6h1.35v-2h1.35v13h1.35v-12h1.35v-14h1.35v10h1.35v-6h1.35v-12h1.35v35h1.35v-20h1.35v-1h1.35v6h1.35v-5h1.35v1h1.35v-17h1.35v15h1.35v13h1.35v-21h1.35v4h1.35v7h1.35v13h1.35v-24h1.35v13h1.35v3h1.35v-8h1.35v3h1.35v-5h1.35v-9h1.35v24h1.35v-20h1.35v7h1.35v-6h1.35v-10h1.35v10h1.35v4h1.35v-3h1.35v9h1.35v-6h1.35v0h1.35v3h1.35v-5h1.35v6h1.35v-2h1.35v11h1.35v-18h1.35v7h1.35v-3h1.35v-10h1.35v17h1.35v-13h1.35v13h1.35v8h1.35v9h1.35v-13h1.35v-11h1.35v4h1.35v1h1.35v13h1.35v-21h1.35v6h1.35v0h1.35v-11h1.35v18h1.35v-12h1.35v0h1.35v3h1.35v17h1.35v-23h1.35v23h1.35v-16h1.35v1h1.35v-8h1.35v20h1.35v-2h1.35v5h1.35v-18h1.35v23h1.35v-38h1.35v21h1.35v2h1.35v-2h1.35v-1h1.35v-15h1.35v22h1.35v-2h1.35v-3h1.35v5h1.35v-15h1.35v6h1.35v6h1.35v11h1.35v-18h1.35v9h1.35v4h1.35v-4h1.35v-5h1.35v-4h1.35v15h1.35v2h1.35v1h1.35v-30h1.35v30h1.35v-17h1.35v16h1.35v-7h1.35v-5h1.35v2h1.35v-6h1.35v12h1.35v-15h1.35v3h1.35v9h1.35v-22h1.35v6h1.35v31h1.35v-22h1.35v-22h1.35v29h1.35v-9h1.35v-1h1.35v24h1.35v-14h1.35v-8h1.35v12h1.35v-21h1.35v-1h1.35v24h1.35v-12h1.35v-7h1.35v5h1.35v2h1.35v3h1.35v4h1.35v-2h1.35v-9h1.35v79h1.35v-7h1.35v0h1.35v-69h1.35v5h1.35v-6h1.35v-11h1.35v26h1.35v-16h1.35v-13h1.35v16h1.35v-8h1.35v0h1.35v-1h1.35v28h1.35v-14h1.35v-16h1.35v8h1.35v-9h1.35v5h1.35v9h1.35v-1h1.35v-6h1.35v8h1.35v-20h1.35v13h1.35v-4h1.35v0h1.35v10h1.35v-5h1.35v6h1.35v-15h1.35v8h1.35v-10h1.35v12h1.35v2h1.35v-6h1.35v13h1.35v-9h1.35v9h1.35v2h1.35v6h1.35v14h1.35v54h1.35v7h1.35v7h1.35v4h1.35v-13h1.35v19h1.35v1h1.35v-3h1.35v-4h1.35v7h1.35v-1h1.35v-9h1.35v7h1.35v1h1.35v-4h1.35v6h1.35v1h1.35v-2h1.35v1h1.35v4h1.35v2h1.35v0h1.35v0h1.35v0h1.35v0h1.35v0h1.35v0h1.35v0h1.35v0h1.35v0V597.5z"/><path fill="#d81050" d="M318 597.5V534h1.35v0h1.35v-2h1.35v3h1.35v-39h1.35v-20h1.35v-29h1.35v9h1.35v-5h1.35v2h1.35v-6h1.35v4h1.35v-5h1.35v-7h1.35v31h1.35v-8h1.35v-12h1.35v-20h1.35v9h1.35v16h1.35v-14h1.35v9h1.35v-7h1.35v-3h1.35v2h1.35v3h1.35v-9h1.35v17h1.35v-3h1.35v7h1.35v9h1.35v-15h1.35v5h1.35v-16h1.35v13h1.35v-3h1.35v1h1.35v-16h1.35v25h1.35v-28h1.35v18h1.35v0h1.35v-4h1.35v-2h1.35v-4h1.35v19h1.35v-5h1.35v-7h1.35v1h1.35v17h1.35v-19h1.35v4h1.35v-5h1.35v4h1.35v6h1.35v1h1.35v-3h1.35v10h1.35v-17h1.35v1h1.35v19h1.35v-27h1.35v12h1.35v1h1.35v-18h1.35v37h1.35v-11h1.35v-18h1.35v22h1.35v-16h1.35v1h1.35v-3h1.35v10h1.35v-11h1.35v-6h1.35v12h1.35v-2h1.35v2h1.35v9h1.35v4h1.35v-14h1.35v22h1.35v-19h1.35v-5h1.35v14h1.35v-1h1.35v0h1.35v-17h1.35v15h1.35v-3h1.35v-1h1.35v11h1.35v-22h1.35v17h1.35v-6h1.35v-2h1.35v-5h1.35v13h1.35v-16h1.35v13h1.35v-16h1.35v14h1.35v10h1.35v-15h1.35v5h1.35v5h1.35v-4h1.35v-6h1.35v-15h1.35v23h1.35v-24h1.35v25h1.35v1h1.35v-25h1.35v23h1.35v-11h1.35v-6h1.35v6h1.35v4h1.35v5h1.35v20h1.35v-34h1.35v19h1.35v-32h1.35v21h1.35v-8h1.35v14h1.35v1h1.35v-21h1.35v18h1.35v5h1.35v-3h1.35v-13h1.35v15h1.35v-13h1.35v-4h1.35v7h1.35v0h1.35v4h1.35v6h1.35v8h1.35v-8h1.35v-3h1.35v-6h1.35v23h1.35v-19h1.35v-3h1.35v10h1.35v9h1.35v-12h1.35v-8h1.35v6h1.35v8h1.35v-9h1.35v9h1.35v-1h1.35v-4h1.35v-10h1.35v4h1.35v5h1.35v-6h1.35v13h1.35v-20h1.35v11h1.35v-13h1.35v-2h1.35v4h1.35v-18h1.35v20h1.35v-2h1.35v13h1.35v2h1.35v-2h1.35v-5h1.35v14h1.35v-21h1.35v10h1.35v-10h1.35v20h1.35v-21h1.35v38h1.35v-43h1.35v18h1.35v-6h1.35v13h1.35v-2h1.35v-3h1.35v-11h1.35v-3h1.35v13h1.35v2h1.35v-20h1.35v26h1.35v-3h1.35v-4h1.35v-11h1.35v9h1.35v-18h1.35v19h1.35v-3h1.35v-7h1.35v-18h1.35v33h1.35v-9h1.35v-27h1.35v32h1.35v-3h1.35v2h1.35v4h1.35v-2h1.35v0h1.35v-16h1.35v-22h1.35v23h1.35v14h1.35v1h1.35v-3h1.35v-3h1.35v-3h1.35v14h1.35v-7h1.35v2h1.35v2h1.35v-14h1.35v6h1.35v-8h1.35v24h1.35v-13h1.35v-19h1.35v19h1.35v0h1.35v12h1.35v-18h1.35v-9h1.35v15h1.35v7h1.35v-18h1.35v6h1.35v-14h1.35v4h1.35v-4h1.35v8h1.35v-2h1.35v10h1.35v-5h1.35v0h1.35v11h1.35v-12h1.35v1h1.35v6h1.35v-9h1.35v7h1.35v1h1.35v62h1.35v-4h1.35v-57h1.35v-16h1.35v8h1.35v0h1.35v-17h1.35v3h1.35v9h1.35v-7h1.35v21h1.35v2h1.35v5h1.35v-8h1.35v9h1.35v-22h1.35v-5h1.35v1h1.35v32h1.35v-15h1.35v10h1.35v-36h1.35v13h1.35v14h1.35v-3h1.35v7h1.35v1h1.35v-6h1.35v-2h1.35v-8h1.35v-2h1.35v3h1.35v3h1.35v5h1.35v-14h1.35v-1h1.35v5h1.35v19h1.35v-37h1.35v39h1.35v-24h1.35v8h1.35v11h1.35v12h1.35v-32h1.35v19h1.35v-1h1.35v-20h1.35v5h1.35v11h1.35v-1h1.35v13h1.35v-17h1.35v3h1.35v10h1.35v-13h1.35v-4h1.35v-5h1.35v10h1.35v9h1.35v7h1.35v-2h1.35v-2h1.35v0h1.35v-9h1.35v0h1.35v-19h1.35v3h1.35v29h1.35v-16h1.35v16h1.35v-19h1.35v-10h1.35v12h1.35v2h1.35v-7h1.35v8h1.35v14h1.35v-10h1.35v4h1.35v-2h1.35v3h1.35v-31h1.35v13h1.35v-6h1.35v16h1.35v-14h1.35v24h1.35v-11h1.35v16h1.35v-22h1.35v-4h1.35v20h1.35v-6h1.35v-16h1.35v3h1.35v22h1.35v-14h1.35v-6h1.35v-1h1.35v-5h1.35v16h1.35v5h1.35v-17h1.35v23h1.35v-7h1.35v-21h1.35v10h1.35v0h1.35v-1h1.35v-17h1.35v28h1.35v-10h1.35v3h1.35v5h1.35v-1h1.35v-5h1.35v-15h1.35v23h1.35v5h1.35v-26h1.35v1h1.35v19h1.35v-33h1.35v27h1.35v-8h1.35v-5h1.35v-5h1.35v0h1.35v14h1.35v13h1.35v-3h1.35v8h1.35v-26h1.35v19h1.35v-1h1.35v-2h1.35v-20h1.35v11h1.35v6h1.35v-8h1.35v-1h1.35v-2h1.35v-14h1.35v35h1.35v-18h1.35v2h1.35v1h1.35v-14h1.35v12h1.35v19h1.35v-16h1.35v-4h1.35v-2h1.35v10h1.35v-2h1.35v6h1.35v-8h1.35v6h1.35v-32h1.35v18h1.35v13h1.35v15h1.35v-18h1.35v24h1.35v-34h1.35v9h1.35v-2h1.35v4h1.35v10h1.35v-9h1.35v6h1.35v-16h1.35v-14h1.35v22h1.35v10h1.35v-7h1.35v0h1.35v10h1.35v11h1.35v-14h1.35v0h1.35v0h1.35v-12h1.35v1h1.35v-14h1.35v21h1.35v5h1.35v-24h1.35v19h1.35v-5h1.35v-7h1.35v-4h1.35v6h1.35v12h1.35v-8h1.35v4h1.35v10h1.35v-28h1.35v30h1.35v-11h1.35v13h1.35v-27h1.35v-13h1.35v29h1.35v-7h1.35v13h1.35v-10h1.35v22h1.35v-28h1.35v9h1.35v12h1.35v-11h1.35v4h1.35v-26h1.35v34h1.35v-21h1.35v-2h1.35v1h1.35v5h1.35v-5h1.35v2h1.35v-8h1.35v7h1.35v16h1.35v-8h1.35v1h1.35v-7h1.35v3h1.35v-18h1.35v19h1.35v8h1.35v-14h1.35v4h1.35v-21h1.35v32h1.35v-14h1.35v-13h1.35v1h1.35v-1h1.35v24h1.35v-7h1.35v-7h1.35v-8h1.35v26h1.35v-14h1.35v9h1.35v-17h1.35v2h1.35v-1h1.35v12h1.35v0h1.35v8h1.35v-9h1.35v-18h1.35v33h1.35v-25h1.35v19h1.35v-4h1.35v10h1.35v-15h1.35v11h1.35v-13h1.35v-2h1.35v-15h1.35v12h1.35v13h1.35v0h1.35v-16h1.35v13h1.35v7h1.35v-27h1.35v4h1.35v-7h1.35v37h1.35v-18h1.35v-5h1.35v-13h1.35v20h1.35v16h1.35v-11h1.35v-5h1.35v-1h1.35v-3h1.35v7h1.35v2h1.35v-11h1.35v4h1.35v-5h1.35v-9h1.35v10h1.35v-13h1.35v14h1.35v-21h1.35v28h1.35v-6h1.35v2h1.35v-8h1.35v2h1.35v1h1.35v14h1.35v-9h1.35v-4h1.35v0h1.35v4h1.35v-6h1.35v17h1.35v-10h1.35v5h1.35v-31h1.35v22h1.35v6h1.35v-17h1.35v-13h1.35v40h1.35v-6h1.35v-10h1.35v-10h1.35v6h1.35v12h1.35v0h1.35v-11h1.35v4h1.35v19h1.35v-25h1.35v1h1.35v-4h1.35v4h1.35v9h1.35v-12h1.35v2h1.35v3h1.35v-9h1.35v2h1.35v3h1.35v-6h1.35v13h1.35v7h1.35v2h1.35v-3h1.35v-22h1.35v12h1.35v-14h1.35v13h1.35v8h1.35v-7h1.35v-1h1.35v3h1.35v-6h1.35v12h1.35v-7h1.35v-4h1.35v13h1.35v-13h1.35v4h1.35v-7h1.35v20h1.35v-21h1.35v14h1.35v-9h1.35v8h1.35v11h1.35v-13h1.35v-13h1.35v7h1.35v14h1.35v-9h1.35v-7h1.35v-11h1.35v0h1.35v12h1.35v-1h1.35v9h1.35v-3h1.35v-11h1.35v-2h1.35v3h1.35v21h1.35v-21h1.35v13h1.35v-19h1.35v15h1.35v15h1.35v3h1.35v-23h1.35v15h1.35v-11h1.35v26h1.35v-16h1.35v-4h1.35v-3h1.35v-1h1.35v0h1.35v-3h1.35v-9h1.35v14h1.35v4h1.35v13h1.35v6h1.35v-31h1.35v14h1.35v2h1.35v-11h1.35v16h1.35v-13h1.35v8h1.35v12h1.35v-23h1.35v12h1.35v-20h1.35v5h1.35v-4h1.35v6h1.35v18h1.35v-4h1.35v-10h1.35v-16h1.35v20h1.35v-4h1.35v0h1.35v9h1.35v-21h1.35v15h1.35v-9h1.35v11h1.35v-7h1.35v-3h1.35v-1h1.35v10h1.35v-4h1.35v0h1.35v3h1.35v-9h1.35v12h1.35v-11h1.35v22h1.35v-42h1.35v42h1.35v-8h1.35v-4h1.35v-15h1.35v16h1.35v-3h1.35v-2h1.35v-10h1.35v-4h1.35v6h1.35v27h1.35v-22h1.35v-2h1.35v-15h1.35v26h1.35v-12h1.35v-8h1.35v10h1.35v6h1.35v-18h1.35v23h1.35v-13h1.35v-6h1.35v25h1.35v-7h1.35v-6h1.35v-5h1.35v14h1.35v-2h1.35v-13h1.35v19h1.35v2h1.35v-11h1.35v-4h1.35v-10h1.35v13h1.35v-3h1.35v1h1.35v2h1.35v12h1.35v-27h1.35v10h1.35v6h1.35v-11h1.35v-5h1.35v9h1.35v2h1.35v7h1.35v0h1.35v2h1.35v-9h1.35v4h1.35v0h1.35v5h1.35v-22h1.35v25h1.35v-12h1.35v-5h1.35v-1h1.35v16h1.35v10h1.35v-20h1.35v0h1.35v-4h1.35v1h1.35v9h1.35v-11h1.35v-6h1.35v20h1.35v-20h1.35v21h1.35v-18h1.35v8h1.35v20h1.35v-16h1.35v14h1.35v-14h1.35v13h1.35v-11h1.35v5h1.35v-9h1.35v5h1.35v-6h1.35v-15h1.35v23h1.35v-2h1.35v-22h1.35v-5h1.35v33h1.35v13h1.35v-30h1.35v9h1.35v-8h1.35v17h1.35v-6h1.35v-8h1.35v14h1.35v4h1.35v-24h1.35v8h1.35v-4h1.35v-4h1.35v-8h1.35v-6h1.35v15h1.35v7h1.35v-11h1.35v0h1.35v-3h1.35v24h1.35v-17h1.35v16h1.35v0h1.35v-14h1.35v15h1.35v-32h1.35v28h1.35v1h1.35v-4h1.35v-37h1.35v12h1.35v27h1.35v-26h1.35v0h1.35v29h1.35v-5h1.35v-14h1.35v11h1.35v1h1.35v-12h1.35v19h1.35v-9h1.35v-7h1.35v3h1.35v-12h1.35v22h1.35v-2h1.35v-10h1.35v0h1.35v3h1.35v0h1.35v21h1.35v0h1.35v-15h1.35v-14h1.35v-10h1.35v39h1.35v-16h1.35v-2h1.35v-3h1.35v2h1.35v23h1.35v-13h1.35v-3h1.35v1h1.35v-1h1.35v-4h1.35v6h1.35v7h1.35v-12h1.35v5h1.35v-1h1.35v-2h1.35v-26h1.35v12h1.35v9h1.35v0h1.35v-10h1.35v3h1.35v12h1.35v-5h1.35v-2h1.35v6h1.35v-9h1.35v18h1.35v-26h1.35v8h1.35v9h1.35v-16h1.35v12h1.35v-5h1.35v6h1.35v2h1.35v7h1.35v-5h1.35v4h1.35v-15h1.35v-4h1.35v4h1.35v-4h1.35v25h1.35v-29h1.35v22h1.35v-1h1.35v-4h1.35v5h1.35v-12h1.35v4h1.35v-30h1.35v26h1.35v6h1.35v7h1.35v3h1.35v-17h1.35v7h1.35v-5h1.35v18h1.35v-15h1.35v-19h1.35v23h1.35v-12h1.35v5h1.35v5h1.35v-8h1.35v1h1.35v-2h1.35v13h1.35v5h1.35v-42h1.35v22h1.35v25h1.35v-19h1.35v-5h1.35v8h1.35v15h1.35v-36h1.35v18h1.35v-7h1.35v0h1.35v3h1.35v12h1.35v-8h1.35v9h1.35v-19h1.35v22h1.35v-20h1.35v-6h1.35v6h1.35v-3h1.35v-1h1.35v8h1.35v-2h1.35v17h1.35v-3h1.35v-9h1.35v3h1.35v-6h1.35v21h1.35v-30h1.35v12h1.35v2h1.35v-15h1.35v14h1.35v-7h1.35v15h1.35v-2h1.35v2h1.35v-9h1.35v-3h1.35v3h1.35v-2h1.35v8h1.35v-10h1.35v19h1.35v-15h1.35v-10h1.35v10h1.35v-14h1.35v12h1.35v-11h1.35v24h1.35v-11h1.35v0h1.35v-9h1.35v6h1.35v1h1.35v11h1.35v-6h1.35v7h1.35v-11h1.35v16h1.35v-30h1.35v25h1.35v2h1.35v-5h1.35v-10h1.35v-15h1.35v16h1.35v3h1.35v11h1.35v-1h1.35v-24h1.35v20h1.35v-1h1.35v11h1.35v-12h1.35v-6h1.35v8h1.35v-8h1.35v9h1.35v-2h1.35v5h1.35v1h1.35v7h1.35v-28h1.35v28h1.35v-24h1.35v9h1.35v5h1.35v-6h1.35v6h1.35v-13h1.35v20h1.35v-25h1.35v6h1.35v12h1.35v-30h1.35v18h1.35v26h1.35v-36h1.35v4h1.35v12h1.35v3h1.35v-2h1.35v21h1.35v-18h1.35v-20h1.35v28h1.35v-32h1.35v2h1.35v32h1.35v2h1.35v-14h1.35v-13h1.35v9h1.35v14h1.35v-3h1.35v-3h1.35v-23h1.35v84h1.35v-6h1.35v2h1.35v-59h1.35v7h1.35v-4h1.35v-5h1.35v-2h1.35v-1h1.35v-4h1.35v-4h1.35v-1h1.35v-2h1.35v6h1.35v19h1.35v-7h1.35v7h1.35v-3h1.35v-31h1.35v18h1.35v-2h1.35v13h1.35v-8h1.35v-2h1.35v-16h1.35v9h1.35v15h1.35v-17h1.35v11h1.35v1h1.35v2h1.35v-12h1.35v5h1.35v-7h1.35v7h1.35v5h1.35v-2h1.35v-2h1.35v-5h1.35v8h1.35v5h1.35v5h1.35v20h1.35v18h1.35v15h1.35v15h1.35v17h1.35v1h1.35v5h1.35v3h1.35v2h1.35v0h1.35v0h1.35v0h1.35v0h1.35v0h1.35v0h1.35v0h1.35v0h1.35v0h1.35v0h1.35v0h1.35v0h1.35v0h1.35v0h1.35v0h1.35v0h1.35v0h1.35v0h1.35v0h1.35v0h1.35v0h1.35v0V597.5z"/><path fill="#fa1226" d="M318 597.5V535h1.35v1h1.35v-1h1.35v1h1.35v-30h1.35v-34h1.35v-3h1.35v-17h1.35v-8h1.35v16h1.35v2h1.35v7h1.35v-7h1.35v4h1.35v18h1.35v-17h1.35v-8h1.35v-19h1.35v9h1.35v13h1.35v-15h1.35v16h1.35v-28h1.35v12h1.35v7h1.35v7h1.35v-17h1.35v19h1.35v-13h1.35v11h1.35v11h1.35v-10h1.35v-15h1.35v14h1.35v-11h1.35v15h1.35v0h1.35v-13h1.35v23h1.35v-27h1.35v12h1.35v7h1.35v1h1.35v-15h1.35v-10h1.35v26h1.35v-4h1.35v-11h1.35v9h1.35v12h1.35v-24h1.35v10h1.35v-15h1.35v10h1.35v-5h1.35v10h1.35v-1h1.35v-2h1.35v3h1.35v6h1.35v0h1.35v-29h1.35v25h1.35v-10h1.35v-6h1.35v16h1.35v-10h1.35v5h1.35v11h1.35v-3h1.35v-3h1.35v-13h1.35v7h1.35v-3h1.35v-16h1.35v13h1.35v0h1.35v17h1.35v1h1.35v10h1.35v-29h1.35v25h1.35v-25h1.35v-3h1.35v18h1.35v2h1.35v2h1.35v-3h1.35v-2h1.35v11h1.35v-3h1.35v4h1.35v-8h1.35v7h1.35v-12h1.35v4h1.35v-18h1.35v11h1.35v-14h1.35v15h1.35v-8h1.35v1h1.35v17h1.35v1h1.35v-22h1.35v23h1.35v-13h1.35v-7h1.35v-7h1.35v20h1.35v-12h1.35v21h1.35v1h1.35v-14h1.35v-7h1.35v-5h1.35v-4h1.35v24h1.35v9h1.35v-14h1.35v17h1.35v-22h1.35v1h1.35v-27h1.35v31h1.35v-9h1.35v8h1.35v4h1.35v-12h1.35v2h1.35v12h1.35v-13h1.35v7h1.35v8h1.35v-11h1.35v-18h1.35v11h1.35v8h1.35v12h1.35v-1h1.35v1h1.35v-19h1.35v-8h1.35v25h1.35v9h1.35v-29h1.35v9h1.35v-3h1.35v1h1.35v12h1.35v-18h1.35v19h1.35v-2h1.35v-4h1.35v2h1.35v2h1.35v-7h1.35v-2h1.35v1h1.35v5h1.35v-8h1.35v0h1.35v2h1.35v6h1.35v-12h1.35v-6h1.35v-4h1.35v-4h1.35v21h1.35v-16h1.35v6h1.35v0h1.35v17h1.35v2h1.35v2h1.35v-18h1.35v6h1.35v-14h1.35v22h1.35v-14h1.35v34h1.35v-29h1.35v8h1.35v-5h1.35v2h1.35v8h1.35v3h1.35v-16h1.35v-17h1.35v27h1.35v-3h1.35v-16h1.35v18h1.35v-1h1.35v4h1.35v-18h1.35v8h1.35v-13h1.35v2h1.35v-10h1.35v15h1.35v-7h1.35v22h1.35v-2h1.35v-9h1.35v9h1.35v-7h1.35v5h1.35v11h1.35v-6h1.35v-11h1.35v-8h1.35v6h1.35v-11h1.35v23h1.35v-7h1.35v9h1.35v-14h1.35v10h1.35v3h1.35v-7h1.35v8h1.35v-13h1.35v4h1.35v-8h1.35v-7h1.35v35h1.35v-27h1.35v-8h1.35v14h1.35v-11h1.35v19h1.35v-14h1.35v1h1.35v11h1.35v-2h1.35v-3h1.35v-5h1.35v-22h1.35v11h1.35v2h1.35v-8h1.35v16h1.35v-4h1.35v25h1.35v-14h1.35v-1h1.35v3h1.35v-3h1.35v-12h1.35v1h1.35v12h1.35v-5h1.35v53h1.35v3h1.35v-46h1.35v-8h1.35v-1h1.35v-5h1.35v-7h1.35v10h1.35v-9h1.35v-13h1.35v35h1.35v-12h1.35v-3h1.35v3h1.35v3h1.35v-8h1.35v-8h1.35v11h1.35v9h1.35v4h1.35v-4h1.35v-25h1.35v27h1.35v-1h1.35v3h1.35v9h1.35v-10h1.35v-17h1.35v6h1.35v-3h1.35v-3h1.35v9h1.35v-14h1.35v5h1.35v-2h1.35v1h1.35v4h1.35v5h1.35v-29h1.35v20h1.35v-8h1.35v23h1.35v-13h1.35v22h1.35v-27h1.35v3h1.35v15h1.35v-13h1.35v9h1.35v4h1.35v-4h1.35v10h1.35v-29h1.35v24h1.35v2h1.35v-10h1.35v-12h1.35v8h1.35v6h1.35v-6h1.35v15h1.35v-4h1.35v0h1.35v2h1.35v-13h1.35v10h1.35v-13h1.35v-14h1.35v29h1.35v-11h1.35v13h1.35v-11h1.35v-7h1.35v6h1.35v-5h1.35v-7h1.35v18h1.35v10h1.35v-3h1.35v-11h1.35v10h1.35v-9h1.35v-14h1.35v16h1.35v-7h1.35v16h1.35v-23h1.35v24h1.35v-12h1.35v1h1.35v-20h1.35v6h1.35v21h1.35v-1h1.35v-17h1.35v5h1.35v14h1.35v-13h1.35v6h1.35v-6h1.35v5h1.35v11h1.35v-3h1.35v-21h1.35v26h1.35v-11h1.35v0h1.35v-17h1.35v17h1.35v9h1.35v-41h1.35v27h1.35v6h1.35v5h1.35v-8h1.35v5h1.35v2h1.35v-22h1.35v15h1.35v11h1.35v-17h1.35v-13h1.35v3h1.35v-13h1.35v29h1.35v-10h1.35v1h1.35v-7h1.35v8h1.35v18h1.35v0h1.35v-15h1.35v4h1.35v-19h1.35v20h1.35v-1h1.35v-2h1.35v-4h1.35v11h1.35v-1h1.35v-13h1.35v9h1.35v-1h1.35v-4h1.35v6h1.35v-15h1.35v11h1.35v-8h1.35v-3h1.35v19h1.35v1h1.35v-7h1.35v7h1.35v-2h1.35v-3h1.35v-10h1.35v33h1.35v-21h1.35v-7h1.35v-2h1.35v-2h1.35v9h1.35v8h1.35v-14h1.35v19h1.35v-31h1.35v17h1.35v-4h1.35v19h1.35v-16h1.35v4h1.35v1h1.35v-5h1.35v-11h1.35v11h1.35v2h1.35v6h1.35v-8h1.35v11h1.35v10h1.35v-16h1.35v3h1.35v-6h1.35v-11h1.35v0h1.35v0h1.35v23h1.35v2h1.35v-12h1.35v4h1.35v-2h1.35v-6h1.35v-18h1.35v-1h1.35v28h1.35v-1h1.35v-22h1.35v20h1.35v-14h1.35v10h1.35v-8h1.35v23h1.35v-26h1.35v-1h1.35v5h1.35v0h1.35v12h1.35v0h1.35v2h1.35v-9h1.35v2h1.35v11h1.35v-1h1.35v-3h1.35v-34h1.35v32h1.35v1h1.35v-13h1.35v9h1.35v-16h1.35v24h1.35v-4h1.35v-20h1.35v12h1.35v15h1.35v-4h1.35v-17h1.35v6h1.35v9h1.35v-28h1.35v20h1.35v3h1.35v-14h1.35v-1h1.35v10h1.35v4h1.35v-9h1.35v-12h1.35v5h1.35v8h1.35v19h1.35v-12h1.35v-6h1.35v-7h1.35v26h1.35v-15h1.35v1h1.35v-11h1.35v-3h1.35v-1h1.35v23h1.35v-10h1.35v1h1.35v4h1.35v-11h1.35v35h1.35v-37h1.35v16h1.35v0h1.35v4h1.35v-10h1.35v15h1.35v-20h1.35v0h1.35v1h1.35v10h1.35v-1h1.35v3h1.35v-9h1.35v1h1.35v8h1.35v-11h1.35v-8h1.35v5h1.35v18h1.35v-16h1.35v-1h1.35v-3h1.35v15h1.35v15h1.35v-23h1.35v8h1.35v8h1.35v-7h1.35v5h1.35v-17h1.35v-8h1.35v22h1.35v-21h1.35v1h1.35v5h1.35v-10h1.35v23h1.35v-27h1.35v18h1.35v16h1.35v-12h1.35v-27h1.35v27h1.35v-13h1.35v19h1.35v-3h1.35v-21h1.35v5h1.35v9h1.35v-15h1.35v20h1.35v-1h1.35v-8h1.35v-26h1.35v27h1.35v6h1.35v-13h1.35v-14h1.35v24h1.35v-6h1.35v3h1.35v-7h1.35v7h1.35v12h1.35v-2h1.35v-17h1.35v7h1.35v8h1.35v-4h1.35v-17h1.35v17h1.35v-9h1.35v6h1.35v-10h1.35v8h1.35v-3h1.35v-9h1.35v21h1.35v-8h1.35v-5h1.35v15h1.35v1h1.35v-9h1.35v7h1.35v-27h1.35v11h1.35v-14h1.35v16h1.35v13h1.35v-8h1.35v-12h1.35v8h1.35v-3h1.35v21h1.35v-4h1.35v-12h1.35v8h1.35v-10h1.35v-7h1.35v-1h1.35v26h1.35v-13h1.35v9h1.35v-8h1.35v-4h1.35v27h1.35v-25h1.35v-13h1.35v5h1.35v5h1.35v-2h1.35v-1h1.35v-6h1.35v3h1.35v9h1.35v1h1.35v5h1.35v-11h1.35v-6h1.35v11h1.35v-5h1.35v14h1.35v-9h1.35v3h1.35v-19h1.35v6h1.35v26h1.35v-7h1.35v-15h1.35v17h1.35v-13h1.35v-2h1.35v-1h1.35v11h1.35v-14h1.35v20h1.35v-30h1.35v26h1.35v-28h1.35v26h1.35v3h1.35v11h1.35v3h1.35v-17h1.35v0h1.35v4h1.35v-1h1.35v-1h1.35v-2h1.35v12h1.35v2h1.35v-17h1.35v11h1.35v-14h1.35v7h1.35v-13h1.35v-1h1.35v36h1.35v-21h1.35v-5h1.35v-15h1.35v16h1.35v9h1.35v-15h1.35v9h1.35v1h1.35v-7h1.35v4h1.35v-11h1.35v0h1.35v5h1.35v-2h1.35v5h1.35v-2h1.35v-15h1.35v20h1.35v-1h1.35v5h1.35v-8h1.35v14h1.35v-27h1.35v32h1.35v-14h1.35v5h1.35v-16h1.35v21h1.35v-12h1.35v2h1.35v-1h1.35v-26h1.35v26h1.35v10h1.35v-6h1.35v-12h1.35v-19h1.35v39h1.35v-3h1.35v-19h1.35v7h1.35v6h1.35v-18h1.35v29h1.35v-27h1.35v3h1.35v21h1.35v2h1.35v-12h1.35v-2h1.35v7h1.35v-5h1.35v2h1.35v-4h1.35v14h1.35v0h1.35v-21h1.35v-10h1.35v22h1.35v3h1.35v-21h1.35v16h1.35v-1h1.35v-5h1.35v-1h1.35v15h1.35v-20h1.35v-10h1.35v7h1.35v8h1.35v17h1.35v-5h1.35v-3h1.35v-8h1.35v10h1.35v-2h1.35v-12h1.35v8h1.35v20h1.35v-22h1.35v4h1.35v-11h1.35v8h1.35v18h1.35v-22h1.35v-9h1.35v4h1.35v11h1.35v-7h1.35v2h1.35v-15h1.35v16h1.35v-4h1.35v11h1.35v-17h1.35v10h1.35v11h1.35v-1h1.35v-2h1.35v9h1.35v-2h1.35v1h1.35v-4h1.35v-5h1.35v-12h1.35v4h1.35v-16h1.35v22h1.35v15h1.35v-29h1.35v-14h1.35v41h1.35v7h1.35v-18h1.35v-10h1.35v-3h1.35v14h1.35v-3h1.35v-7h1.35v23h1.35v-3h1.35v-20h1.35v1h1.35v2h1.35v-5h1.35v1h1.35v-11h1.35v9h1.35v8h1.35v-11h1.35v-2h1.35v2h1.35v27h1.35v-18h1.35v12h1.35v6h1.35v-20h1.35v23h1.35v-32h1.35v18h1.35v1h1.35v-8h1.35v-30h1.35v-1h1.35v26h1.35v-3h1.35v-16h1.35v34h1.35v-6h1.35v-16h1.35v17h1.35v-7h1.35v-7h1.35v3h1.35v2h1.35v-16h1.35v15h1.35v-20h1.35v23h1.35v1h1.35v-5h1.35v-1h1.35v0h1.35v11h1.35v-3h1.35v8h1.35v-5h1.35v0h1.35v-12h1.35v21h1.35v-9h1.35v-5h1.35v6h1.35v0h1.35v18h1.35v-10h1.35v-27h1.35v4h1.35v19h1.35v-10h1.35v17h1.35v-13h1.35v8h1.35v-12h1.35v-3h1.35v0h1.35v-8h1.35v3h1.35v5h1.35v-9h1.35v1h1.35v-4h1.35v31h1.35v-16h1.35v-10h1.35v0h1.35v12h1.35v6h1.35v-30h1.35v8h1.35v35h1.35v-32h1.35v10h1.35v4h1.35v-8h1.35v2h1.35v13h1.35v-1h1.35v4h1.35v-21h1.35v11h1.35v-9h1.35v13h1.35v8h1.35v-20h1.35v10h1.35v12h1.35v-13h1.35v1h1.35v-4h1.35v-3h1.35v-28h1.35v31h1.35v2h1.35v11h1.35v2h1.35v-12h1.35v5h1.35v-3h1.35v4h1.35v-3h1.35v-13h1.35v11h1.35v2h1.35v-4h1.35v1h1.35v1h1.35v-8h1.35v12h1.35v-15h1.35v21h1.35v-54h1.35v41h1.35v11h1.35v-9h1.35v-15h1.35v7h1.35v19h1.35v-30h1.35v12h1.35v3h1.35v-5h1.35v8h1.35v-6h1.35v-6h1.35v19h1.35v-21h1.35v6h1.35v-4h1.35v4h1.35v1h1.35v2h1.35v-5h1.35v4h1.35v1h1.35v8h1.35v7h1.35v-16h1.35v-5h1.35v3h1.35v15h1.35v-14h1.35v-18h1.35v20h1.35v-17h1.35v29h1.35v-17h1.35v2h1.35v9h1.35v5h1.35v-3h1.35v2h1.35v-2h1.35v-5h1.35v9h1.35v-23h1.35v24h1.35v-11h1.35v7h1.35v1h1.35v-11h1.35v-6h1.35v9h1.35v6h1.35v-4h1.35v11h1.35v-10h1.35v-9h1.35v1h1.35v12h1.35v8h1.35v-4h1.35v-12h1.35v16h1.35v-20h1.35v4h1.35v3h1.35v7h1.35v-10h1.35v-5h1.35v3h1.35v10h1.35v13h1.35v-7h1.35v-16h1.35v16h1.35v-6h1.35v3h1.35v0h1.35v-11h1.35v3h1.35v-5h1.35v-1h1.35v7h1.35v8h1.35v-2h1.35v8h1.35v-36h1.35v30h1.35v-8h1.35v-3h1.35v4h1.35v-3h1.35v9h1.35v-14h1.35v12h1.35v-14h1.35v-7h1.35v14h1.35v-26h1.35v21h1.35v23h1.35v-26h1.35v-9h1.35v4h1.35v17h1.35v-2h1.35v13h1.35v-18h1.35v-14h1.35v30h1.35v-11h1.35v-20h1.35v31h1.35v-4h1.35v-6h1.35v-16h1.35v13h1.35v12h1.35v-5h1.35v0h1.35v-28h1.35v83h1.35v-7h1.35v3h1.35v-54h1.35v10h1.35v-16h1.35v-20h1.35v25h1.35v-1h1.35v-11h1.35v24h1.35v-15h1.35v-14h1.35v11h1.35v17h1.35v-1h1.35v-14h1.35v4h1.35v-16h1.35v-2h1.35v17h1.35v5h1.35v-17h1.35v19h1.35v-21h1.35v5h1.35v3h1.35v-7h1.35v9h1.35v11h1.35v-11h1.35v9h1.35v-14h1.35v-15h1.35v28h1.35v-8h1.35v-9h1.35v16h1.35v-18h1.35v7h1.35v19h1.35v-2h1.35v7h1.35v28h1.35v13h1.35v18h1.35v12h1.35v1h1.35v3h1.35v3h1.35v2h1.35v0h1.35v0h1.35v0h1.35v0h1.35v0h1.35v0h1.35v0h1.35v0h1.35v0h1.35v0h1.35v0h1.35v0h1.35v0h1.35v0h1.35v0h1.35v0h1.35v0h1.35v0h1.35v0h1.35v0h1.35v0h1.35v0V597.5z"/><path fill="#ff3a1c" d="M318 597.5V539h1.35v0h1.35v0h1.35v-1h1.35v-28h1.35v-35h1.35v-3h1.35v-16h1.35v-7h1.35v32h1.35v-16h1.35v7h1.35v-8h1.35v5h1.35v32h1.35v-34h1.35v-5h1.35v-19h1.35v9h1.35v29h1.35v-31h1.35v26h1.35v-38h1.35v12h1.35v6h1.35v15h1.35v-26h1.35v22h1.35v-14h1.35v13h1.35v10h1.35v-11h1.35v-15h1.35v30h1.35v4h1.35v-13h1.35v-3h1.35v-14h1.35v26h1.35v-28h1.35v11h1.35v17h1.35v-9h1.35v-17h1.35v-9h1.35v26h1.35v-1h1.35v-14h1.35v28h1.35v-3h1.35v-26h1.35v9h1.35v-15h1.35v11h1.35v-3h1.35v9h1.35v50h1.35v-55h1.35v2h1.35v7h1.35v1h1.35v-33h1.35v26h1.35v31h1.35v4h1.35v-3h1.35v28h1.35v-16h1.35v-18h1.35v19h1.35v5h1.35v-61h1.35v54h1.35v-3h1.35v-63h1.35v73h1.35v-9h1.35v19h1.35v3h1.35v-20h1.35v17h1.35v11h1.35v-53h1.35v26h1.35v-1h1.35v-2h1.35v23h1.35v-27h1.35v22h1.35v-26h1.35v24h1.35v-30h1.35v31h1.35v-45h1.35v-16h1.35v11h1.35v40h1.35v20h1.35v-39h1.35v39h1.35v-14h1.35v10h1.35v-1h1.35v-4h1.35v-42h1.35v38h1.35v2h1.35v-23h1.35v-27h1.35v52h1.35v-18h1.35v21h1.35v12h1.35v-11h1.35v-7h1.35v-68h1.35v74h1.35v-42h1.35v30h1.35v-21h1.35v-11h1.35v34h1.35v3h1.35v1h1.35v3h1.35v4h1.35v-59h1.35v59h1.35v-14h1.35v3h1.35v17h1.35v-8h1.35v-10h1.35v-38h1.35v48h1.35v-23h1.35v1h1.35v-35h1.35v19h1.35v42h1.35v-7h1.35v-20h1.35v25h1.35v-38h1.35v41h1.35v-11h1.35v4h1.35v-6h1.35v-2h1.35v-9h1.35v-49h1.35v65h1.35v-1h1.35v-53h1.35v57h1.35v-2h1.35v-3h1.35v-12h1.35v22h1.35v-16h1.35v-36h1.35v25h1.35v25h1.35v-7h1.35v-1h1.35v-68h1.35v36h1.35v4h1.35v24h1.35v-4h1.35v-24h1.35v14h1.35v-7h1.35v-22h1.35v42h1.35v-50h1.35v-4h1.35v34h1.35v-8h1.35v27h1.35v14h1.35v-66h1.35v59h1.35v-6h1.35v-7h1.35v-34h1.35v47h1.35v-58h1.35v-11h1.35v37h1.35v-20h1.35v-16h1.35v32h1.35v8h1.35v3h1.35v-39h1.35v7h1.35v23h1.35v-33h1.35v-11h1.35v21h1.35v10h1.35v-1h1.35v50h1.35v-28h1.35v15h1.35v4h1.35v7h1.35v13h1.35v-10h1.35v0h1.35v-6h1.35v-18h1.35v-8h1.35v13h1.35v14h1.35v1h1.35v8h1.35v-28h1.35v23h1.35v-55h1.35v59h1.35v5h1.35v-8h1.35v-53h1.35v36h1.35v24h1.35v-19h1.35v-5h1.35v-3h1.35v7h1.35v-39h1.35v30h1.35v-41h1.35v74h1.35v-23h1.35v-47h1.35v61h1.35v-23h1.35v12h1.35v-5h1.35v-25h1.35v12h1.35v7h1.35v-23h1.35v22h1.35v-35h1.35v59h1.35v-6h1.35v3h1.35v-35h1.35v22h1.35v-43h1.35v81h1.35v0h1.35v-45h1.35v-8h1.35v-33h1.35v65h1.35v-42h1.35v-24h1.35v42h1.35v-67h1.35v70h1.35v-47h1.35v11h1.35v-9h1.35v62h1.35v-66h1.35v-8h1.35v12h1.35v60h1.35v-49h1.35v52h1.35v-60h1.35v8h1.35v40h1.35v-26h1.35v42h1.35v-25h1.35v-48h1.35v52h1.35v-48h1.35v-5h1.35v41h1.35v16h1.35v2h1.35v-60h1.35v36h1.35v0h1.35v-17h1.35v11h1.35v46h1.35v-58h1.35v-3h1.35v-14h1.35v78h1.35v-24h1.35v16h1.35v-57h1.35v35h1.35v0h1.35v15h1.35v-52h1.35v47h1.35v-25h1.35v24h1.35v-28h1.35v-21h1.35v49h1.35v-8h1.35v21h1.35v-16h1.35v-26h1.35v19h1.35v14h1.35v-44h1.35v-14h1.35v45h1.35v-46h1.35v37h1.35v28h1.35v-16h1.35v3h1.35v-11h1.35v-41h1.35v41h1.35v5h1.35v-18h1.35v15h1.35v32h1.35v-59h1.35v41h1.35v-42h1.35v50h1.35v-10h1.35v18h1.35v-24h1.35v16h1.35v-27h1.35v-7h1.35v-25h1.35v52h1.35v-8h1.35v6h1.35v14h1.35v-20h1.35v15h1.35v-16h1.35v13h1.35v-15h1.35v11h1.35v-17h1.35v35h1.35v-13h1.35v-47h1.35v40h1.35v-21h1.35v-8h1.35v28h1.35v-4h1.35v-43h1.35v60h1.35v-24h1.35v21h1.35v-23h1.35v-25h1.35v37h1.35v-16h1.35v-26h1.35v49h1.35v3h1.35v10h1.35v-50h1.35v30h1.35v-13h1.35v-61h1.35v60h1.35v-8h1.35v-13h1.35v-27h1.35v59h1.35v-15h1.35v1h1.35v25h1.35v-33h1.35v-38h1.35v64h1.35v-30h1.35v-22h1.35v59h1.35v-48h1.35v-2h1.35v39h1.35v-5h1.35v-20h1.35v-15h1.35v48h1.35v2h1.35v3h1.35v-34h1.35v28h1.35v-27h1.35v12h1.35v28h1.35v-1h1.35v-11h1.35v14h1.35v-43h1.35v44h1.35v-66h1.35v-7h1.35v22h1.35v28h1.35v24h1.35v2h1.35v-23h1.35v20h1.35v-36h1.35v38h1.35v-24h1.35v23h1.35v-1h1.35v-29h1.35v32h1.35v-11h1.35v-20h1.35v9h1.35v23h1.35v-5h1.35v-38h1.35v20h1.35v-1h1.35v-43h1.35v38h1.35v-24h1.35v34h1.35v-62h1.35v23h1.35v47h1.35v-3h1.35v1h1.35v-19h1.35v21h1.35v-59h1.35v21h1.35v15h1.35v-28h1.35v52h1.35v-71h1.35v69h1.35v-71h1.35v16h1.35v-5h1.35v58h1.35v-67h1.35v46h1.35v21h1.35v-32h1.35v33h1.35v8h1.35v-36h1.35v18h1.35v-49h1.35v54h1.35v-34h1.35v51h1.35v-45h1.35v-9h1.35v48h1.35v-36h1.35v-24h1.35v46h1.35v-38h1.35v-7h1.35v50h1.35v4h1.35v-10h1.35v15h1.35v-13h1.35v-8h1.35v14h1.35v-16h1.35v14h1.35v-8h1.35v-56h1.35v27h1.35v-17h1.35v3h1.35v52h1.35v-53h1.35v-20h1.35v10h1.35v53h1.35v-23h1.35v32h1.35v-67h1.35v32h1.35v-19h1.35v50h1.35v-21h1.35v34h1.35v-32h1.35v-22h1.35v42h1.35v-3h1.35v11h1.35v-51h1.35v41h1.35v-3h1.35v-3h1.35v-5h1.35v13h1.35v15h1.35v-39h1.35v6h1.35v0h1.35v-13h1.35v19h1.35v22h1.35v-9h1.35v4h1.35v-6h1.35v-21h1.35v11h1.35v15h1.35v-38h1.35v-6h1.35v13h1.35v-1h1.35v29h1.35v0h1.35v15h1.35v-10h1.35v8h1.35v-4h1.35v-8h1.35v14h1.35v-16h1.35v-18h1.35v17h1.35v11h1.35v-25h1.35v15h1.35v-13h1.35v21h1.35v-77h1.35v71h1.35v7h1.35v-19h1.35v19h1.35v-4h1.35v-8h1.35v16h1.35v-13h1.35v-6h1.35v18h1.35v-52h1.35v33h1.35v3h1.35v-2h1.35v-52h1.35v-25h1.35v52h1.35v-16h1.35v-15h1.35v-14h1.35v31h1.35v-15h1.35v6h1.35v-8h1.35v3h1.35v24h1.35v5h1.35v11h1.35v-38h1.35v10h1.35v18h1.35v-39h1.35v18h1.35v39h1.35v-43h1.35v-3h1.35v-1h1.35v57h1.35v-69h1.35v47h1.35v17h1.35v-7h1.35v-35h1.35v44h1.35v-2h1.35v-16h1.35v7h1.35v-46h1.35v45h1.35v-45h1.35v12h1.35v42h1.35v-62h1.35v7h1.35v-1h1.35v70h1.35v3h1.35v-69h1.35v65h1.35v-19h1.35v-55h1.35v63h1.35v7h1.35v3h1.35v-54h1.35v52h1.35v-51h1.35v58h1.35v-10h1.35v-35h1.35v-3h1.35v34h1.35v-17h1.35v-42h1.35v-2h1.35v-2h1.35v11h1.35v46h1.35v-42h1.35v-6h1.35v-10h1.35v50h1.35v-43h1.35v52h1.35v-12h1.35v6h1.35v-57h1.35v65h1.35v-34h1.35v-7h1.35v25h1.35v-20h1.35v31h1.35v-8h1.35v-43h1.35v62h1.35v-64h1.35v50h1.35v20h1.35v-15h1.35v-68h1.35v27h1.35v3h1.35v13h1.35v22h1.35v-38h1.35v43h1.35v10h1.35v5h1.35v-55h1.35v21h1.35v-10h1.35v-2h1.35v35h1.35v14h1.35v-6h1.35v-14h1.35v-23h1.35v-31h1.35v82h1.35v-64h1.35v63h1.35v-86h1.35v63h1.35v-36h1.35v33h1.35v14h1.35v-7h1.35v-32h1.35v1h1.35v32h1.35v-63h1.35v7h1.35v36h1.35v12h1.35v-38h1.35v18h1.35v29h1.35v-13h1.35v-27h1.35v-17h1.35v16h1.35v-25h1.35v72h1.35v-29h1.35v11h1.35v-15h1.35v-5h1.35v32h1.35v-10h1.35v-14h1.35v-55h1.35v49h1.35v44h1.35v-12h1.35v-13h1.35v6h1.35v-35h1.35v50h1.35v-17h1.35v1h1.35v-10h1.35v-51h1.35v73h1.35v1h1.35v-11h1.35v-27h1.35v-7h1.35v40h1.35v-38h1.35v-9h1.35v38h1.35v-39h1.35v52h1.35v13h1.35v-60h1.35v47h1.35v-79h1.35v53h1.35v-25h1.35v51h1.35v-2h1.35v-53h1.35v-6h1.35v27h1.35v17h1.35v-49h1.35v35h1.35v15h1.35v-48h1.35v69h1.35v-25h1.35v32h1.35v-72h1.35v58h1.35v-50h1.35v55h1.35v-15h1.35v-26h1.35v34h1.35v-2h1.35v-61h1.35v63h1.35v-4h1.35v-1h1.35v7h1.35v-29h1.35v26h1.35v2h1.35v-41h1.35v-33h1.35v70h1.35v-56h1.35v51h1.35v-57h1.35v7h1.35v38h1.35v18h1.35v-1h1.35v-39h1.35v49h1.35v-11h1.35v11h1.35v-58h1.35v-12h1.35v5h1.35v-6h1.35v13h1.35v14h1.35v-27h1.35v-17h1.35v70h1.35v25h1.35v-10h1.35v-63h1.35v25h1.35v31h1.35v-19h1.35v-35h1.35v48h1.35v-30h1.35v21h1.35v-7h1.35v-33h1.35v-1h1.35v-2h1.35v-9h1.35v10h1.35v8h1.35v29h1.35v-44h1.35v4h1.35v64h1.35v-56h1.35v32h1.35v-14h1.35v-21h1.35v67h1.35v-19h1.35v-35h1.35v48h1.35v-8h1.35v-28h1.35v-53h1.35v27h1.35v61h1.35v-38h1.35v47h1.35v-19h1.35v1h1.35v9h1.35v10h1.35v-20h1.35v-8h1.35v-11h1.35v-11h1.35v30h1.35v-73h1.35v71h1.35v-45h1.35v41h1.35v4h1.35v0h1.35v-28h1.35v45h1.35v-32h1.35v24h1.35v-33h1.35v5h1.35v15h1.35v6h1.35v14h1.35v-58h1.35v13h1.35v46h1.35v-31h1.35v14h1.35v-55h1.35v17h1.35v47h1.35v-27h1.35v27h1.35v-30h1.35v6h1.35v11h1.35v11h1.35v-65h1.35v5h1.35v3h1.35v-8h1.35v31h1.35v-32h1.35v55h1.35v-43h1.35v46h1.35v-56h1.35v45h1.35v-6h1.35v-3h1.35v-26h1.35v66h1.35v-77h1.35v12h1.35v37h1.35v-45h1.35v31h1.35v-12h1.35v67h1.35v-65h1.35v28h1.35v-40h1.35v-7h1.35v11h1.35v51h1.35v-61h1.35v60h1.35v-20h1.35v-33h1.35v50h1.35v-52h1.35v74h1.35v-39h1.35v-35h1.35v56h1.35v-19h1.35v26h1.35v-51h1.35v-4h1.35v50h1.35v17h1.35v-44h1.35v-36h1.35v27h1.35v32h1.35v-51h1.35v0h1.35v0h1.35v-5h1.35v10h1.35v64h1.35v-16h1.35v-59h1.35v4h1.35v48h1.35v-3h1.35v-27h1.35v-22h1.35v63h1.35v-76h1.35v63h1.35v-11h1.35v-27h1.35v36h1.35v-47h1.35v55h1.35v16h1.35v-27h1.35v-48h1.35v69h1.35v-69h1.35v40h1.35v2h1.35v26h1.35v-17h1.35v-46h1.35v7h1.35v8h1.35v44h1.35v10h1.35v-72h1.35v71h1.35v-23h1.35v-3h1.35v15h1.35v-21h1.35v22h1.35v-64h1.35v66h1.35v-5h1.35v-45h1.35v45h1.35v-25h1.35v0h1.35v-32h1.35v54h1.35v-6h1.35v-9h1.35v-4h1.35v15h1.35v-9h1.35v-39h1.35v45h1.35v-43h1.35v3h1.35v33h1.35v24h1.35v-16h1.35v-26h1.35v26h1.35v7h1.35v2h1.35v11h1.35v-9h1.35v-1h1.35v-15h1.35v-42h1.35v56h1.35v-44h1.35v42h1.35v-8h1.35v-26h1.35v-10h1.35v14h1.35v28h1.35v-30h1.35v-9h1.35v44h1.35v16h1.35v-26h1.35v-44h1.35v1h1.35v57h1.35v-66h1.35v9h1.35v10h1.35v37h1.35v13h1.35v-28h1.35v13h1.35v4h1.35v-25h1.35v3h1.35v-27h1.35v6h1.35v-12h1.35v14h1.35v-17h1.35v-4h1.35v54h1.35v-70h1.35v24h1.35v21h1.35v-24h1.35v35h1.35v-43h1.35v17h1.35v2h1.35v12h1.35v-22h1.35v-12h1.35v32h1.35v-15h1.35v-15h1.35v29h1.35v-5h1.35v-6h1.35v46h1.35v-49h1.35v41h1.35v11h1.35v-43h1.35v-30h1.35v110h1.35v-1h1.35v0h1.35v-82h1.35v10h1.35v-18h1.35v-19h1.35v24h1.35v38h1.35v-47h1.35v21h1.35v-13h1.35v-16h1.35v13h1.35v46h1.35v-33h1.35v-13h1.35v6h1.35v-19h1.35v-1h1.35v18h1.35v5h1.35v5h1.35v10h1.35v-35h1.35v7h1.35v3h1.35v-10h1.35v9h1.35v12h1.35v-9h1.35v8h1.35v-14h1.35v-14h1.35v26h1.35v-7h1.35v-10h1.35v17h1.35v-20h1.35v10h1.35v18h1.35v-3h1.35v6h1.35v31h1.35v23h1.35v11h1.35v7h1.35v0h1.35v6h1.35v1h1.35v0h1.35v0h1.35v0h1.35v0h1.35v0h1.35v0h1.35v0h1.35v0h1.35v0h1.35v0h1.35v0h1.35v0h1.35v0h1.35v0h1.35v0h1.35v0h1.35v0h1.35v0h1.35v0h1.35v0h1.35v0h1.35v0h1.35v0V597.5z"/><path fill="#ff621e" d="M318 597.5V540h1.35v4h1.35v-3h1.35v2h1.35v-32h1.35v-20h1.35v-18h1.35v-5h1.35v0h1.35v39h1.35v-40h1.35v8h1.35v-7h1.35v4h1.35v58h1.35v-57h1.35v-10h1.35v-18h1.35v29h1.35v20h1.35v-41h1.35v14h1.35v-26h1.35v12h1.35v7h1.35v20h1.35v-30h1.35v21h1.35v10h1.35v-16h1.35v14h1.35v-6h1.35v-20h1.35v37h1.35v13h1.35v-33h1.35v16h1.35v-28h1.35v22h1.35v-27h1.35v13h1.35v7h1.35v0h1.35v-17h1.35v-9h1.35v30h1.35v-6h1.35v-11h1.35v39h1.35v-9h1.35v-30h1.35v5h1.35v-15h1.35v10h1.35v9h1.35v-1h1.35v52h1.35v-56h1.35v30h1.35v-24h1.35v2h1.35v-31h1.35v53h1.35v27h1.35v5h1.35v-9h1.35v17h1.35v-16h1.35v-35h1.35v40h1.35v7h1.35v-75h1.35v74h1.35v-14h1.35v-56h1.35v66h1.35v-8h1.35v14h1.35v2h1.35v-24h1.35v28h1.35v6h1.35v-67h1.35v52h1.35v-25h1.35v17h1.35v23h1.35v-21h1.35v0h1.35v-22h1.35v18h1.35v-33h1.35v40h1.35v-45h1.35v-11h1.35v16h1.35v22h1.35v31h1.35v-31h1.35v32h1.35v-16h1.35v18h1.35v-11h1.35v2h1.35v-32h1.35v25h1.35v8h1.35v-31h1.35v1h1.35v36h1.35v-20h1.35v20h1.35v9h1.35v-14h1.35v-8h1.35v-71h1.35v74h1.35v-58h1.35v60h1.35v-22h1.35v3h1.35v14h1.35v5h1.35v-4h1.35v3h1.35v-2h1.35v-43h1.35v48h1.35v-7h1.35v-5h1.35v20h1.35v-6h1.35v-7h1.35v-46h1.35v52h1.35v-14h1.35v-2h1.35v-36h1.35v14h1.35v37h1.35v-2h1.35v-25h1.35v21h1.35v-36h1.35v51h1.35v-20h1.35v-5h1.35v-4h1.35v18h1.35v-3h1.35v-68h1.35v71h1.35v5h1.35v-44h1.35v44h1.35v-2h1.35v2h1.35v-18h1.35v19h1.35v-23h1.35v-33h1.35v43h1.35v8h1.35v-21h1.35v24h1.35v-81h1.35v66h1.35v-40h1.35v45h1.35v-10h1.35v8h1.35v9h1.35v-17h1.35v-17h1.35v31h1.35v-23h1.35v-39h1.35v54h1.35v-26h1.35v39h1.35v-8h1.35v-61h1.35v56h1.35v9h1.35v-15h1.35v-38h1.35v45h1.35v-57h1.35v-18h1.35v57h1.35v-25h1.35v-23h1.35v46h1.35v0h1.35v18h1.35v-60h1.35v17h1.35v19h1.35v-34h1.35v-15h1.35v47h1.35v2h1.35v-11h1.35v55h1.35v-22h1.35v13h1.35v-7h1.35v15h1.35v2h1.35v1h1.35v-5h1.35v-10h1.35v-10h1.35v-1h1.35v-8h1.35v21h1.35v8h1.35v-9h1.35v-14h1.35v17h1.35v-60h1.35v69h1.35v0h1.35v-11h1.35v-36h1.35v35h1.35v15h1.35v-22h1.35v0h1.35v7h1.35v-14h1.35v-28h1.35v46h1.35v-67h1.35v74h1.35v-7h1.35v-63h1.35v72h1.35v-34h1.35v20h1.35v0h1.35v-28h1.35v14h1.35v-6h1.35v-14h1.35v19h1.35v-43h1.35v73h1.35v-18h1.35v4h1.35v-20h1.35v17h1.35v-54h1.35v78h1.35v1h1.35v-33h1.35v-28h1.35v-23h1.35v67h1.35v-21h1.35v-47h1.35v35h1.35v-33h1.35v59h1.35v-61h1.35v28h1.35v8h1.35v35h1.35v-79h1.35v-3h1.35v41h1.35v36h1.35v-55h1.35v51h1.35v-64h1.35v12h1.35v52h1.35v-18h1.35v32h1.35v-15h1.35v-65h1.35v61h1.35v-56h1.35v-9h1.35v29h1.35v10h1.35v27h1.35v-68h1.35v43h1.35v16h1.35v-45h1.35v31h1.35v37h1.35v-52h1.35v-12h1.35v8h1.35v64h1.35v-22h1.35v10h1.35v-50h1.35v30h1.35v16h1.35v-11h1.35v-49h1.35v62h1.35v-22h1.35v20h1.35v-35h1.35v-28h1.35v61h1.35v-9h1.35v10h1.35v-1h1.35v-35h1.35v18h1.35v20h1.35v-58h1.35v-11h1.35v45h1.35v-49h1.35v39h1.35v38h1.35v-10h1.35v-13h1.35v-7h1.35v-45h1.35v55h1.35v8h1.35v-22h1.35v7h1.35v27h1.35v-59h1.35v47h1.35v-47h1.35v44h1.35v6h1.35v13h1.35v-22h1.35v17h1.35v-22h1.35v-19h1.35v-19h1.35v49h1.35v3h1.35v3h1.35v17h1.35v-25h1.35v12h1.35v-7h1.35v10h1.35v-13h1.35v3h1.35v-15h1.35v25h1.35v-4h1.35v-34h1.35v38h1.35v-42h1.35v-13h1.35v49h1.35v6h1.35v-66h1.35v69h1.35v-36h1.35v32h1.35v-45h1.35v-12h1.35v35h1.35v-13h1.35v-24h1.35v50h1.35v11h1.35v0h1.35v-51h1.35v44h1.35v-36h1.35v-54h1.35v71h1.35v5h1.35v-7h1.35v-58h1.35v68h1.35v-20h1.35v23h1.35v8h1.35v-41h1.35v-40h1.35v79h1.35v-11h1.35v-41h1.35v44h1.35v-46h1.35v13h1.35v44h1.35v-11h1.35v-21h1.35v0h1.35v23h1.35v17h1.35v-13h1.35v-16h1.35v23h1.35v-49h1.35v34h1.35v15h1.35v3h1.35v-4h1.35v9h1.35v-31h1.35v29h1.35v-65h1.35v9h1.35v-22h1.35v60h1.35v18h1.35v-1h1.35v-4h1.35v-4h1.35v-38h1.35v46h1.35v-12h1.35v3h1.35v4h1.35v-17h1.35v26h1.35v-12h1.35v-27h1.35v27h1.35v14h1.35v-2h1.35v-37h1.35v35h1.35v-25h1.35v-44h1.35v61h1.35v-32h1.35v30h1.35v-45h1.35v7h1.35v42h1.35v1h1.35v-2h1.35v-24h1.35v20h1.35v-59h1.35v37h1.35v-11h1.35v-21h1.35v54h1.35v-77h1.35v91h1.35v-83h1.35v20h1.35v2h1.35v53h1.35v-76h1.35v66h1.35v0h1.35v-13h1.35v26h1.35v6h1.35v-34h1.35v11h1.35v-52h1.35v67h1.35v-21h1.35v22h1.35v-37h1.35v-11h1.35v35h1.35v-1h1.35v-51h1.35v65h1.35v-55h1.35v4h1.35v42h1.35v5h1.35v-1h1.35v4h1.35v-9h1.35v-4h1.35v12h1.35v-26h1.35v19h1.35v-4h1.35v-51h1.35v-14h1.35v45h1.35v-34h1.35v60h1.35v-80h1.35v5h1.35v13h1.35v61h1.35v-7h1.35v7h1.35v-55h1.35v18h1.35v3h1.35v33h1.35v-18h1.35v25h1.35v-18h1.35v-27h1.35v31h1.35v2h1.35v12h1.35v-76h1.35v72h1.35v-10h1.35v-6h1.35v6h1.35v2h1.35v18h1.35v-26h1.35v5h1.35v-4h1.35v-11h1.35v5h1.35v24h1.35v-14h1.35v5h1.35v9h1.35v-24h1.35v-6h1.35v30h1.35v-40h1.35v-1h1.35v-15h1.35v19h1.35v36h1.35v-4h1.35v9h1.35v-1h1.35v0h1.35v-2h1.35v-14h1.35v22h1.35v-7h1.35v-20h1.35v17h1.35v2h1.35v-20h1.35v3h1.35v-3h1.35v20h1.35v-86h1.35v78h1.35v3h1.35v-5h1.35v-2h1.35v15h1.35v-11h1.35v7h1.35v7h1.35v-15h1.35v17h1.35v-59h1.35v46h1.35v-8h1.35v1h1.35v-39h1.35v-45h1.35v78h1.35v-47h1.35v-16h1.35v-14h1.35v57h1.35v-21h1.35v-5h1.35v-4h1.35v-4h1.35v34h1.35v1h1.35v6h1.35v-39h1.35v8h1.35v23h1.35v-46h1.35v18h1.35v48h1.35v-50h1.35v16h1.35v-22h1.35v64h1.35v-52h1.35v34h1.35v17h1.35v-15h1.35v-18h1.35v43h1.35v-9h1.35v4h1.35v-39h1.35v-33h1.35v64h1.35v-58h1.35v11h1.35v54h1.35v-77h1.35v9h1.35v-4h1.35v73h1.35v13h1.35v-80h1.35v69h1.35v-3h1.35v-64h1.35v44h1.35v24h1.35v-1h1.35v-60h1.35v53h1.35v-24h1.35v39h1.35v-22h1.35v-19h1.35v18h1.35v17h1.35v-20h1.35v-55h1.35v-1h1.35v1h1.35v6h1.35v56h1.35v-48h1.35v-3h1.35v-15h1.35v59h1.35v-56h1.35v62h1.35v-18h1.35v16h1.35v-67h1.35v70h1.35v-39h1.35v15h1.35v29h1.35v-51h1.35v28h1.35v14h1.35v-55h1.35v68h1.35v-73h1.35v42h1.35v20h1.35v-21h1.35v-52h1.35v27h1.35v0h1.35v10h1.35v40h1.35v-50h1.35v40h1.35v23h1.35v-3h1.35v-60h1.35v47h1.35v-28h1.35v27h1.35v7h1.35v13h1.35v-15h1.35v1h1.35v10h1.35v-77h1.35v90h1.35v-77h1.35v72h1.35v-75h1.35v60h1.35v-47h1.35v54h1.35v-8h1.35v-6h1.35v-18h1.35v2h1.35v26h1.35v-51h1.35v-17h1.35v41h1.35v22h1.35v-13h1.35v-9h1.35v16h1.35v0h1.35v-36h1.35v-16h1.35v12h1.35v-26h1.35v72h1.35v-13h1.35v-4h1.35v-13h1.35v16h1.35v13h1.35v-2h1.35v-9h1.35v-69h1.35v62h1.35v33h1.35v-13h1.35v-14h1.35v15h1.35v-45h1.35v53h1.35v-1h1.35v-30h1.35v15h1.35v-28h1.35v39h1.35v0h1.35v-13h1.35v-9h1.35v-20h1.35v44h1.35v-43h1.35v-15h1.35v52h1.35v-50h1.35v53h1.35v10h1.35v-55h1.35v53h1.35v-84h1.35v60h1.35v-22h1.35v23h1.35v23h1.35v-66h1.35v7h1.35v37h1.35v19h1.35v-75h1.35v60h1.35v9h1.35v-62h1.35v57h1.35v4h1.35v15h1.35v-65h1.35v63h1.35v-67h1.35v68h1.35v-9h1.35v-40h1.35v38h1.35v-14h1.35v-56h1.35v69h1.35v0h1.35v-10h1.35v11h1.35v-29h1.35v27h1.35v2h1.35v-50h1.35v-3h1.35v39h1.35v-52h1.35v55h1.35v-65h1.35v11h1.35v26h1.35v25h1.35v8h1.35v-26h1.35v43h1.35v-21h1.35v14h1.35v-60h1.35v-14h1.35v6h1.35v-2h1.35v7h1.35v24h1.35v-33h1.35v13h1.35v55h1.35v15h1.35v-4h1.35v-79h1.35v30h1.35v38h1.35v-32h1.35v-33h1.35v62h1.35v-33h1.35v29h1.35v-11h1.35v-14h1.35v-35h1.35v4h1.35v6h1.35v-3h1.35v-2h1.35v30h1.35v-41h1.35v1h1.35v81h1.35v-72h1.35v43h1.35v-22h1.35v-21h1.35v61h1.35v-4h1.35v-30h1.35v44h1.35v-14h1.35v-44h1.35v-42h1.35v25h1.35v57h1.35v-16h1.35v32h1.35v-10h1.35v-5h1.35v12h1.35v-10h1.35v8h1.35v-3h1.35v-32h1.35v-10h1.35v32h1.35v-75h1.35v86h1.35v-63h1.35v47h1.35v-6h1.35v4h1.35v-8h1.35v41h1.35v-53h1.35v41h1.35v-63h1.35v46h1.35v17h1.35v-24h1.35v22h1.35v-58h1.35v12h1.35v54h1.35v-35h1.35v19h1.35v-64h1.35v29h1.35v53h1.35v-28h1.35v10h1.35v-25h1.35v-13h1.35v45h1.35v0h1.35v-70h1.35v52h1.35v-46h1.35v-8h1.35v52h1.35v-55h1.35v77h1.35v-46h1.35v24h1.35v-53h1.35v70h1.35v-27h1.35v12h1.35v-15h1.35v47h1.35v-86h1.35v22h1.35v33h1.35v-35h1.35v3h1.35v-3h1.35v62h1.35v-45h1.35v32h1.35v-55h1.35v-10h1.35v15h1.35v61h1.35v-56h1.35v39h1.35v-26h1.35v-24h1.35v45h1.35v-45h1.35v70h1.35v-32h1.35v-40h1.35v49h1.35v-1h1.35v18h1.35v-34h1.35v7h1.35v30h1.35v12h1.35v-26h1.35v-64h1.35v47h1.35v28h1.35v-63h1.35v16h1.35v5h1.35v-29h1.35v13h1.35v68h1.35v-19h1.35v-62h1.35v10h1.35v62h1.35v-10h1.35v-29h1.35v-32h1.35v60h1.35v-73h1.35v66h1.35v0h1.35v-12h1.35v26h1.35v-67h1.35v60h1.35v10h1.35v-19h1.35v-53h1.35v68h1.35v-61h1.35v51h1.35v11h1.35v3h1.35v-13h1.35v-57h1.35v8h1.35v7h1.35v55h1.35v-5h1.35v-60h1.35v75h1.35v-25h1.35v-2h1.35v0h1.35v1h1.35v9h1.35v-67h1.35v66h1.35v-9h1.35v-41h1.35v53h1.35v-34h1.35v18h1.35v-39h1.35v48h1.35v-7h1.35v-37h1.35v24h1.35v29h1.35v-22h1.35v-43h1.35v59h1.35v-60h1.35v23h1.35v30h1.35v11h1.35v-14h1.35v-21h1.35v28h1.35v3h1.35v-4h1.35v8h1.35v5h1.35v-12h1.35v2h1.35v-49h1.35v31h1.35v-29h1.35v48h1.35v-22h1.35v-15h1.35v-15h1.35v16h1.35v48h1.35v-32h1.35v-15h1.35v24h1.35v25h1.35v-25h1.35v-47h1.35v17h1.35v51h1.35v-35h1.35v-33h1.35v10h1.35v58h1.35v4h1.35v-48h1.35v21h1.35v-2h1.35v9h1.35v-7h1.35v-43h1.35v14h1.35v-19h1.35v11h1.35v-13h1.35v-7h1.35v43h1.35v-56h1.35v22h1.35v34h1.35v-38h1.35v53h1.35v-55h1.35v13h1.35v21h1.35v-4h1.35v-23h1.35v-16h1.35v43h1.35v-24h1.35v-22h1.35v44h1.35v-7h1.35v-14h1.35v55h1.35v-53h1.35v39h1.35v3h1.35v-33h1.35v11h1.35v63h1.35v-2h1.35v1h1.35v-76h1.35v4h1.35v-16h1.35v-10h1.35v17h1.35v41h1.35v-55h1.35v25h1.35v-15h1.35v-16h1.35v13h1.35v53h1.35v-37h1.35v-9h1.35v0h1.35v-17h1.35v-1h1.35v17h1.35v3h1.35v24h1.35v-1h1.35v-40h1.35v7h1.35v12h1.35v-20h1.35v9h1.35v12h1.35v-10h1.35v6h1.35v-10h1.35v-17h1.35v39h1.35v-12h1.35v-16h1.35v16h1.35v-19h1.35v22h1.35v13h1.35v-10h1.35v4h1.35v30h1.35v31h1.35v2h1.35v9h1.35v2h1.35v3h1.35v0h1.35v0h1.35v0h1.35v0h1.35v0h1.35v0h1.35v0h1.35v0h1.35v0h1.35v0h1.35v0h1.35v0h1.35v0h1.35v0h1.35v0h1.35v0h1.35v0h1.35v0h1.35v0h1.35v0h1.35v0h1.35v0h1.35v0h1.35v0V597.5z"/><path fill="#ff8a28" d="M318 597.5V545h1.35v2h1.35v-3h1.35v1h1.35v-30h1.35v-28h1.35v-9h1.35v-19h1.35v32h1.35v11h1.35v-31h1.35v6h1.35v-3h1.35v2h1.35v49h1.35v-51h1.35v7h1.35v-29h1.35v29h1.35v25h1.35v-51h1.35v36h1.35v-41h1.35v6h1.35v6h1.35v50h1.35v-56h1.35v17h1.35v-12h1.35v10h1.35v8h1.35v2h1.35v-27h1.35v59h1.35v11h1.35v-43h1.35v27h1.35v-48h1.35v21h1.35v-26h1.35v17h1.35v17h1.35v-13h1.35v-16h1.35v-9h1.35v44h1.35v-20h1.35v-12h1.35v32h1.35v-3h1.35v-32h1.35v42h1.35v-39h1.35v14h1.35v22h1.35v-29h1.35v64h1.35v-41h1.35v-11h1.35v-6h1.35v-2h1.35v-28h1.35v67h1.35v-1h1.35v18h1.35v-16h1.35v31h1.35v-21h1.35v1h1.35v-3h1.35v12h1.35v-77h1.35v73h1.35v-4h1.35v-60h1.35v70h1.35v-6h1.35v9h1.35v2h1.35v-21h1.35v18h1.35v9h1.35v-50h1.35v38h1.35v-11h1.35v3h1.35v17h1.35v-17h1.35v6h1.35v-19h1.35v17h1.35v-14h1.35v19h1.35v-44h1.35v-20h1.35v15h1.35v40h1.35v15h1.35v-24h1.35v26h1.35v-10h1.35v12h1.35v-14h1.35v7h1.35v-23h1.35v23h1.35v0h1.35v-28h1.35v-10h1.35v38h1.35v-12h1.35v20h1.35v3h1.35v-7h1.35v-9h1.35v-38h1.35v42h1.35v-42h1.35v49h1.35v-21h1.35v2h1.35v11h1.35v0h1.35v-9h1.35v12h1.35v2h1.35v-70h1.35v69h1.35v-9h1.35v2h1.35v8h1.35v-10h1.35v-4h1.35v-7h1.35v22h1.35v-15h1.35v3h1.35v-13h1.35v-11h1.35v32h1.35v-7h1.35v-8h1.35v14h1.35v-13h1.35v22h1.35v-8h1.35v-10h1.35v6h1.35v-1h1.35v-2h1.35v-71h1.35v84h1.35v-1h1.35v-63h1.35v59h1.35v0h1.35v-9h1.35v-3h1.35v17h1.35v-9h1.35v-16h1.35v19h1.35v-5h1.35v-9h1.35v24h1.35v-90h1.35v65h1.35v-22h1.35v30h1.35v-31h1.35v23h1.35v0h1.35v-9h1.35v-31h1.35v55h1.35v-39h1.35v-14h1.35v34h1.35v-10h1.35v28h1.35v-4h1.35v-64h1.35v69h1.35v-5h1.35v-5h1.35v-49h1.35v52h1.35v-63h1.35v9h1.35v41h1.35v-29h1.35v-33h1.35v44h1.35v23h1.35v-6h1.35v-56h1.35v16h1.35v27h1.35v-36h1.35v-19h1.35v55h1.35v-10h1.35v-3h1.35v52h1.35v-28h1.35v18h1.35v-6h1.35v11h1.35v8h1.35v-1h1.35v-2h1.35v-4h1.35v-15h1.35v3h1.35v0h1.35v12h1.35v3h1.35v0h1.35v-19h1.35v24h1.35v-73h1.35v70h1.35v1h1.35v-9h1.35v-28h1.35v25h1.35v14h1.35v-25h1.35v10h1.35v-13h1.35v5h1.35v-44h1.35v49h1.35v-63h1.35v77h1.35v-14h1.35v-57h1.35v73h1.35v-49h1.35v36h1.35v0h1.35v-14h1.35v4h1.35v-21h1.35v7h1.35v15h1.35v-48h1.35v68h1.35v-3h1.35v-1h1.35v-19h1.35v7h1.35v-34h1.35v56h1.35v1h1.35v-26h1.35v-13h1.35v-40h1.35v73h1.35v-39h1.35v-40h1.35v52h1.35v-30h1.35v36h1.35v-56h1.35v42h1.35v-12h1.35v44h1.35v-77h1.35v-9h1.35v51h1.35v31h1.35v-39h1.35v42h1.35v-58h1.35v-4h1.35v52h1.35v-11h1.35v28h1.35v-10h1.35v-67h1.35v62h1.35v-69h1.35v0h1.35v56h1.35v11h1.35v1h1.35v-47h1.35v28h1.35v-4h1.35v-4h1.35v7h1.35v28h1.35v-44h1.35v-10h1.35v5h1.35v57h1.35v-17h1.35v5h1.35v-35h1.35v23h1.35v1h1.35v4h1.35v-55h1.35v48h1.35v5h1.35v6h1.35v-30h1.35v-36h1.35v65h1.35v7h1.35v-5h1.35v-1h1.35v-16h1.35v5h1.35v19h1.35v-64h1.35v24h1.35v23h1.35v-64h1.35v61h1.35v22h1.35v-15h1.35v2h1.35v-19h1.35v-52h1.35v72h1.35v5h1.35v-28h1.35v21h1.35v5h1.35v-19h1.35v1h1.35v-38h1.35v55h1.35v4h1.35v12h1.35v-16h1.35v-2h1.35v-26h1.35v-17h1.35v-2h1.35v33h1.35v12h1.35v0h1.35v19h1.35v-17h1.35v-5h1.35v3h1.35v6h1.35v-11h1.35v8h1.35v-15h1.35v17h1.35v5h1.35v-21h1.35v15h1.35v-27h1.35v-8h1.35v41h1.35v-13h1.35v-56h1.35v76h1.35v-34h1.35v31h1.35v-37h1.35v-25h1.35v34h1.35v-13h1.35v-27h1.35v56h1.35v12h1.35v1h1.35v-38h1.35v24h1.35v-28h1.35v-61h1.35v82h1.35v-12h1.35v-3h1.35v-45h1.35v60h1.35v4h1.35v-1h1.35v2h1.35v-18h1.35v-64h1.35v87h1.35v-28h1.35v-29h1.35v60h1.35v-63h1.35v3h1.35v57h1.35v-12h1.35v-4h1.35v0h1.35v19h1.35v2h1.35v5h1.35v-39h1.35v30h1.35v-35h1.35v26h1.35v14h1.35v-2h1.35v-9h1.35v5h1.35v-10h1.35v18h1.35v-64h1.35v27h1.35v-17h1.35v37h1.35v15h1.35v6h1.35v-17h1.35v7h1.35v-29h1.35v38h1.35v-27h1.35v23h1.35v-4h1.35v-25h1.35v33h1.35v-17h1.35v-22h1.35v26h1.35v15h1.35v-5h1.35v-26h1.35v25h1.35v-17h1.35v-31h1.35v41h1.35v-28h1.35v29h1.35v-55h1.35v31h1.35v29h1.35v4h1.35v0h1.35v-25h1.35v15h1.35v-40h1.35v14h1.35v16h1.35v-45h1.35v48h1.35v-54h1.35v68h1.35v-83h1.35v49h1.35v-4h1.35v44h1.35v-88h1.35v79h1.35v-11h1.35v-4h1.35v8h1.35v17h1.35v-21h1.35v0h1.35v-56h1.35v70h1.35v-23h1.35v24h1.35v-33h1.35v4h1.35v27h1.35v-26h1.35v-45h1.35v72h1.35v-41h1.35v-13h1.35v41h1.35v15h1.35v-12h1.35v8h1.35v-16h1.35v-1h1.35v16h1.35v-20h1.35v20h1.35v-4h1.35v-49h1.35v24h1.35v-2h1.35v-33h1.35v68h1.35v-40h1.35v-49h1.35v21h1.35v66h1.35v-19h1.35v13h1.35v-51h1.35v14h1.35v-4h1.35v45h1.35v-24h1.35v28h1.35v-14h1.35v-24h1.35v27h1.35v2h1.35v9h1.35v-51h1.35v44h1.35v-7h1.35v3h1.35v-3h1.35v9h1.35v3h1.35v-17h1.35v5h1.35v-2h1.35v-20h1.35v15h1.35v22h1.35v-18h1.35v-9h1.35v26h1.35v-36h1.35v19h1.35v11h1.35v-32h1.35v-7h1.35v4h1.35v5h1.35v28h1.35v6h1.35v0h1.35v-5h1.35v6h1.35v-4h1.35v-4h1.35v12h1.35v-8h1.35v-19h1.35v9h1.35v8h1.35v-17h1.35v11h1.35v-4h1.35v13h1.35v-84h1.35v83h1.35v2h1.35v-5h1.35v-14h1.35v20h1.35v-7h1.35v3h1.35v-5h1.35v-7h1.35v14h1.35v-42h1.35v35h1.35v-1h1.35v-8h1.35v-26h1.35v-60h1.35v71h1.35v-35h1.35v-3h1.35v-25h1.35v68h1.35v-24h1.35v-25h1.35v14h1.35v-13h1.35v57h1.35v-4h1.35v3h1.35v-54h1.35v7h1.35v21h1.35v-42h1.35v32h1.35v37h1.35v-57h1.35v18h1.35v-19h1.35v66h1.35v-76h1.35v67h1.35v12h1.35v-12h1.35v-30h1.35v44h1.35v-11h1.35v3h1.35v-15h1.35v-54h1.35v72h1.35v-69h1.35v12h1.35v54h1.35v-61h1.35v-5h1.35v-2h1.35v77h1.35v10h1.35v-72h1.35v65h1.35v-8h1.35v-48h1.35v25h1.35v33h1.35v-8h1.35v-30h1.35v35h1.35v-48h1.35v49h1.35v-13h1.35v-38h1.35v28h1.35v25h1.35v-42h1.35v-21h1.35v-20h1.35v-2h1.35v9h1.35v67h1.35v-58h1.35v31h1.35v-48h1.35v67h1.35v-65h1.35v57h1.35v0h1.35v14h1.35v-79h1.35v70h1.35v-39h1.35v14h1.35v28h1.35v-34h1.35v22h1.35v6h1.35v-55h1.35v68h1.35v-47h1.35v10h1.35v41h1.35v-12h1.35v-80h1.35v29h1.35v21h1.35v16h1.35v26h1.35v-63h1.35v66h1.35v4h1.35v-15h1.35v-56h1.35v56h1.35v-44h1.35v21h1.35v34h1.35v3h1.35v-10h1.35v-1h1.35v-9h1.35v-63h1.35v88h1.35v-60h1.35v56h1.35v-63h1.35v57h1.35v-58h1.35v55h1.35v-8h1.35v-7h1.35v-18h1.35v17h1.35v16h1.35v-67h1.35v-1h1.35v62h1.35v-6h1.35v-21h1.35v9h1.35v32h1.35v-31h1.35v-1h1.35v-44h1.35v33h1.35v-43h1.35v87h1.35v-37h1.35v23h1.35v-28h1.35v17h1.35v15h1.35v-14h1.35v-6h1.35v-53h1.35v59h1.35v26h1.35v-10h1.35v-3h1.35v-13h1.35v-34h1.35v54h1.35v-3h1.35v-6h1.35v-17h1.35v-51h1.35v78h1.35v-8h1.35v-4h1.35v-10h1.35v-35h1.35v43h1.35v-12h1.35v-30h1.35v54h1.35v-61h1.35v64h1.35v6h1.35v-60h1.35v48h1.35v-80h1.35v72h1.35v-38h1.35v54h1.35v0h1.35v-70h1.35v28h1.35v25h1.35v14h1.35v-53h1.35v35h1.35v15h1.35v-72h1.35v66h1.35v-5h1.35v23h1.35v-60h1.35v43h1.35v-53h1.35v64h1.35v-18h1.35v-17h1.35v29h1.35v-12h1.35v-41h1.35v58h1.35v-7h1.35v-4h1.35v6h1.35v-27h1.35v26h1.35v4h1.35v-45h1.35v-17h1.35v38h1.35v-51h1.35v68h1.35v-59h1.35v-4h1.35v59h1.35v1h1.35v5h1.35v-23h1.35v35h1.35v-11h1.35v11h1.35v-71h1.35v4h1.35v-13h1.35v19h1.35v-13h1.35v39h1.35v-54h1.35v46h1.35v33h1.35v13h1.35v-13h1.35v-72h1.35v49h1.35v27h1.35v-23h1.35v-53h1.35v67h1.35v-47h1.35v45h1.35v-13h1.35v1h1.35v-52h1.35v-1h1.35v-11h1.35v14h1.35v1h1.35v40h1.35v-51h1.35v4h1.35v86h1.35v-78h1.35v49h1.35v-6h1.35v-45h1.35v74h1.35v-20h1.35v-16h1.35v36h1.35v-16h1.35v-21h1.35v-67h1.35v28h1.35v74h1.35v-40h1.35v46h1.35v-22h1.35v5h1.35v15h1.35v-4h1.35v-7h1.35v-11h1.35v-15h1.35v-5h1.35v30h1.35v-58h1.35v68h1.35v-75h1.35v49h1.35v8h1.35v0h1.35v-15h1.35v34h1.35v-62h1.35v56h1.35v-29h1.35v16h1.35v8h1.35v-14h1.35v30h1.35v-66h1.35v5h1.35v50h1.35v-24h1.35v3h1.35v-42h1.35v18h1.35v50h1.35v-42h1.35v40h1.35v-21h1.35v-8h1.35v22h1.35v-7h1.35v-66h1.35v4h1.35v0h1.35v-9h1.35v73h1.35v-74h1.35v73h1.35v-56h1.35v63h1.35v-65h1.35v61h1.35v-23h1.35v9h1.35v0h1.35v26h1.35v-84h1.35v18h1.35v51h1.35v-43h1.35v18h1.35v-10h1.35v54h1.35v-53h1.35v38h1.35v-59h1.35v-10h1.35v13h1.35v71h1.35v-83h1.35v79h1.35v-32h1.35v-21h1.35v40h1.35v-60h1.35v79h1.35v-32h1.35v-22h1.35v42h1.35v-23h1.35v24h1.35v-8h1.35v-24h1.35v39h1.35v9h1.35v-36h1.35v-39h1.35v24h1.35v39h1.35v-47h1.35v5h1.35v7h1.35v-41h1.35v12h1.35v73h1.35v-12h1.35v-65h1.35v-3h1.35v68h1.35v-7h1.35v-22h1.35v-40h1.35v71h1.35v-86h1.35v84h1.35v-9h1.35v-18h1.35v22h1.35v-68h1.35v73h1.35v7h1.35v-12h1.35v-45h1.35v52h1.35v-79h1.35v61h1.35v0h1.35v11h1.35v2h1.35v-52h1.35v-10h1.35v19h1.35v33h1.35v11h1.35v-58h1.35v69h1.35v-6h1.35v-22h1.35v19h1.35v-11h1.35v15h1.35v-81h1.35v75h1.35v-12h1.35v-46h1.35v61h1.35v-47h1.35v32h1.35v-29h1.35v37h1.35v-4h1.35v-18h1.35v5h1.35v17h1.35v-17h1.35v-49h1.35v58h1.35v-38h1.35v22h1.35v12h1.35v23h1.35v-19h1.35v-15h1.35v11h1.35v9h1.35v2h1.35v4h1.35v4h1.35v-9h1.35v-4h1.35v-45h1.35v32h1.35v-7h1.35v23h1.35v-4h1.35v-16h1.35v-33h1.35v10h1.35v55h1.35v-44h1.35v-13h1.35v44h1.35v16h1.35v-17h1.35v-42h1.35v-18h1.35v70h1.35v-31h1.35v-27h1.35v2h1.35v61h1.35v2h1.35v-33h1.35v23h1.35v-19h1.35v-3h1.35v2h1.35v-45h1.35v21h1.35v-26h1.35v14h1.35v-15h1.35v-7h1.35v49h1.35v-58h1.35v17h1.35v46h1.35v-50h1.35v74h1.35v-78h1.35v22h1.35v-10h1.35v53h1.35v-56h1.35v-12h1.35v57h1.35v-37h1.35v-22h1.35v54h1.35v-27h1.35v11h1.35v41h1.35v-63h1.35v65h1.35v-3h1.35v-53h1.35v3h1.35v74h1.35v0h1.35v-1h1.35v-69h1.35v11h1.35v-27h1.35v10h1.35v-9h1.35v56h1.35v-50h1.35v20h1.35v-25h1.35v-13h1.35v11h1.35v79h1.35v-64h1.35v-16h1.35v6h1.35v-16h1.35v0h1.35v15h1.35v4h1.35v18h1.35v22h1.35v-56h1.35v4h1.35v43h1.35v-48h1.35v8h1.35v27h1.35v-26h1.35v10h1.35v-13h1.35v-18h1.35v56h1.35v-32h1.35v0h1.35v5h1.35v-16h1.35v36h1.35v-6h1.35v-1h1.35v-1h1.35v31h1.35v28h1.35v0h1.35v13h1.35v0h1.35v0h1.35v0h1.35v0h1.35v0h1.35v0h1.35v0h1.35v0h1.35v0h1.35v0h1.35v0h1.35v0h1.35v0h1.35v0h1.35v0h1.35v0h1.35v0h1.35v0h1.35v0h1.35v0h1.35v0h1.35v0h1.35v0h1.35v0h1.35v0h1.35v0V597.5z"/><path fill="#ffb43c" d="M318 597.5V546h1.35v2h1.35v0h1.35v2h1.35v-23h1.35v-30h1.35v-5h1.35v1h1.35v-14h1.35v45h1.35v-52h1.35v18h1.35v-16h1.35v11h1.35v57h1.35v-37h1.35v-10h1.35v-21h1.35v26h1.35v24h1.35v-43h1.35v33h1.35v-44h1.35v-6h1.35v2h1.35v56h1.35v-67h1.35v19h1.35v42h1.35v-11h1.35v-14h1.35v31h1.35v-62h1.35v64h1.35v10h1.35v-20h1.35v-7h1.35v-37h1.35v50h1.35v-19h1.35v1h1.35v18h1.35v-39h1.35v-10h1.35v37h1.35v-10h1.35v-22h1.35v-7h1.35v28h1.35v6h1.35v-27h1.35v33h1.35v-12h1.35v1h1.35v11h1.35v-36h1.35v65h1.35v-42h1.35v0h1.35v-7h1.35v28h1.35v-65h1.35v56h1.35v20h1.35v13h1.35v-5h1.35v14h1.35v-12h1.35v-10h1.35v8h1.35v2h1.35v-55h1.35v54h1.35v-2h1.35v-45h1.35v34h1.35v13h1.35v11h1.35v1h1.35v-13h1.35v14h1.35v0h1.35v-39h1.35v33h1.35v-16h1.35v-5h1.35v26h1.35v-11h1.35v2h1.35v-18h1.35v14h1.35v-22h1.35v28h1.35v-32h1.35v-30h1.35v36h1.35v17h1.35v13h1.35v-35h1.35v36h1.35v-12h1.35v13h1.35v-1h1.35v-3h1.35v-15h1.35v12h1.35v3h1.35v-17h1.35v-21h1.35v41h1.35v-7h1.35v7h1.35v6h1.35v-3h1.35v-9h1.35v-41h1.35v46h1.35v-19h1.35v23h1.35v-22h1.35v3h1.35v5h1.35v4h1.35v5h1.35v-7h1.35v3h1.35v-35h1.35v40h1.35v-7h1.35v2h1.35v9h1.35v-7h1.35v-7h1.35v-18h1.35v27h1.35v-15h1.35v13h1.35v-25h1.35v4h1.35v25h1.35v-3h1.35v-15h1.35v8h1.35v-12h1.35v27h1.35v-6h1.35v-11h1.35v4h1.35v1h1.35v-9h1.35v-26h1.35v41h1.35v1h1.35v-35h1.35v32h1.35v-1h1.35v-2h1.35v2h1.35v7h1.35v-15h1.35v-24h1.35v21h1.35v12h1.35v-8h1.35v10h1.35v-87h1.35v66h1.35v-16h1.35v28h1.35v-2h1.35v1h1.35v3h1.35v-12h1.35v-35h1.35v47h1.35v-23h1.35v-46h1.35v66h1.35v-23h1.35v25h1.35v3h1.35v-69h1.35v74h1.35v-5h1.35v-4h1.35v-17h1.35v14h1.35v-64h1.35v1h1.35v40h1.35v-14h1.35v-16h1.35v37h1.35v21h1.35v-6h1.35v-27h1.35v-11h1.35v20h1.35v-28h1.35v23h1.35v5h1.35v9h1.35v-26h1.35v48h1.35v-19h1.35v16h1.35v-6h1.35v12h1.35v1h1.35v-1h1.35v-5h1.35v-3h1.35v-11h1.35v0h1.35v4h1.35v16h1.35v-10h1.35v5h1.35v-6h1.35v13h1.35v-77h1.35v75h1.35v-2h1.35v-7h1.35v-20h1.35v19h1.35v10h1.35v-20h1.35v2h1.35v9h1.35v-19h1.35v-22h1.35v40h1.35v-73h1.35v83h1.35v-5h1.35v-45h1.35v49h1.35v-28h1.35v24h1.35v-9h1.35v-20h1.35v18h1.35v-17h1.35v2h1.35v11h1.35v-53h1.35v70h1.35v-6h1.35v3h1.35v-17h1.35v15h1.35v-46h1.35v55h1.35v1h1.35v-8h1.35v-19h1.35v-53h1.35v72h1.35v-29h1.35v-42h1.35v57h1.35v-24h1.35v31h1.35v-66h1.35v46h1.35v-8h1.35v41h1.35v-84h1.35v9h1.35v50h1.35v20h1.35v-42h1.35v42h1.35v-24h1.35v-42h1.35v60h1.35v-11h1.35v22h1.35v-9h1.35v-66h1.35v61h1.35v-64h1.35v-7h1.35v63h1.35v5h1.35v10h1.35v-43h1.35v21h1.35v16h1.35v-41h1.35v2h1.35v49h1.35v-50h1.35v7h1.35v2h1.35v46h1.35v-14h1.35v10h1.35v-61h1.35v51h1.35v0h1.35v4h1.35v-67h1.35v62h1.35v-4h1.35v6h1.35v-11h1.35v-57h1.35v69h1.35v0h1.35v-6h1.35v-1h1.35v-21h1.35v25h1.35v9h1.35v-64h1.35v13h1.35v45h1.35v-74h1.35v56h1.35v28h1.35v-6h1.35v-12h1.35v-12h1.35v-39h1.35v35h1.35v4h1.35v1h1.35v7h1.35v15h1.35v-62h1.35v51h1.35v-54h1.35v62h1.35v-1h1.35v11h1.35v-6h1.35v-4h1.35v-23h1.35v0h1.35v-6h1.35v31h1.35v-7h1.35v8h1.35v4h1.35v-19h1.35v9h1.35v-4h1.35v14h1.35v-16h1.35v10h1.35v-10h1.35v6h1.35v9h1.35v-30h1.35v24h1.35v-13h1.35v-16h1.35v26h1.35v2h1.35v-63h1.35v74h1.35v-30h1.35v21h1.35v-15h1.35v-22h1.35v31h1.35v-32h1.35v-23h1.35v61h1.35v5h1.35v3h1.35v-29h1.35v26h1.35v-14h1.35v-63h1.35v66h1.35v-5h1.35v-8h1.35v-56h1.35v72h1.35v-4h1.35v4h1.35v7h1.35v-32h1.35v-42h1.35v69h1.35v-22h1.35v-1h1.35v23h1.35v-63h1.35v5h1.35v66h1.35v-12h1.35v-22h1.35v6h1.35v20h1.35v9h1.35v-9h1.35v-15h1.35v13h1.35v-20h1.35v14h1.35v13h1.35v4h1.35v-15h1.35v10h1.35v-16h1.35v20h1.35v-45h1.35v3h1.35v13h1.35v16h1.35v10h1.35v2h1.35v-5h1.35v3h1.35v-19h1.35v22h1.35v-6h1.35v4h1.35v-8h1.35v-6h1.35v16h1.35v-3h1.35v-12h1.35v6h1.35v13h1.35v-2h1.35v-38h1.35v33h1.35v-20h1.35v-34h1.35v46h1.35v-16h1.35v17h1.35v-39h1.35v11h1.35v37h1.35v-3h1.35v3h1.35v-17h1.35v6h1.35v-47h1.35v43h1.35v7h1.35v-60h1.35v63h1.35v-51h1.35v59h1.35v-70h1.35v29h1.35v-9h1.35v50h1.35v-53h1.35v44h1.35v-3h1.35v-22h1.35v28h1.35v6h1.35v-21h1.35v7h1.35v-60h1.35v70h1.35v-24h1.35v23h1.35v-18h1.35v-3h1.35v18h1.35v-8h1.35v-58h1.35v68h1.35v-30h1.35v6h1.35v25h1.35v-1h1.35v-5h1.35v8h1.35v-4h1.35v-1h1.35v4h1.35v-24h1.35v21h1.35v-5h1.35v-33h1.35v-4h1.35v20h1.35v-21h1.35v41h1.35v-38h1.35v-22h1.35v36h1.35v28h1.35v-9h1.35v0h1.35v-28h1.35v11h1.35v-18h1.35v42h1.35v-41h1.35v44h1.35v-29h1.35v18h1.35v4h1.35v1h1.35v3h1.35v-57h1.35v57h1.35v-6h1.35v-2h1.35v-5h1.35v14h1.35v6h1.35v-42h1.35v28h1.35v2h1.35v-25h1.35v24h1.35v10h1.35v-4h1.35v-7h1.35v5h1.35v-9h1.35v-6h1.35v16h1.35v-19h1.35v-10h1.35v14h1.35v-9h1.35v23h1.35v5h1.35v-1h1.35v-2h1.35v0h1.35v5h1.35v-7h1.35v7h1.35v-8h1.35v-6h1.35v9h1.35v-3h1.35v-11h1.35v3h1.35v-1h1.35v15h1.35v-90h1.35v86h1.35v6h1.35v-18h1.35v4h1.35v9h1.35v-14h1.35v15h1.35v-9h1.35v-10h1.35v25h1.35v-40h1.35v27h1.35v4h1.35v-8h1.35v-19h1.35v-74h1.35v76h1.35v-38h1.35v-10h1.35v-23h1.35v75h1.35v-56h1.35v23h1.35v12h1.35v-2h1.35v35h1.35v0h1.35v5h1.35v-70h1.35v16h1.35v49h1.35v-72h1.35v58h1.35v19h1.35v-58h1.35v28h1.35v-41h1.35v70h1.35v-72h1.35v54h1.35v18h1.35v-12h1.35v-10h1.35v25h1.35v-6h1.35v8h1.35v-22h1.35v-55h1.35v75h1.35v-79h1.35v15h1.35v66h1.35v-53h1.35v-26h1.35v0h1.35v81h1.35v6h1.35v-53h1.35v49h1.35v-3h1.35v-51h1.35v33h1.35v21h1.35v0h1.35v-44h1.35v40h1.35v-38h1.35v45h1.35v-13h1.35v-13h1.35v9h1.35v9h1.35v-14h1.35v-42h1.35v-9h1.35v-14h1.35v10h1.35v62h1.35v-60h1.35v26h1.35v-41h1.35v60h1.35v-55h1.35v64h1.35v-8h1.35v17h1.35v-81h1.35v88h1.35v-43h1.35v3h1.35v31h1.35v-30h1.35v15h1.35v9h1.35v-55h1.35v61h1.35v-28h1.35v21h1.35v8h1.35v-13h1.35v-74h1.35v57h1.35v-25h1.35v29h1.35v25h1.35v-61h1.35v69h1.35v8h1.35v-13h1.35v-61h1.35v57h1.35v-29h1.35v13h1.35v25h1.35v8h1.35v-3h1.35v-11h1.35v-2h1.35v-45h1.35v63h1.35v-44h1.35v38h1.35v-58h1.35v47h1.35v-58h1.35v61h1.35v5h1.35v-6h1.35v-25h1.35v14h1.35v10h1.35v-55h1.35v4h1.35v53h1.35v6h1.35v-18h1.35v8h1.35v9h1.35v-30h1.35v9h1.35v-53h1.35v46h1.35v-22h1.35v57h1.35v-12h1.35v-4h1.35v-24h1.35v14h1.35v18h1.35v-1h1.35v-8h1.35v-23h1.35v18h1.35v21h1.35v-12h1.35v-3h1.35v2h1.35v-51h1.35v65h1.35v-5h1.35v-18h1.35v7h1.35v-76h1.35v87h1.35v-2h1.35v-9h1.35v-11h1.35v-18h1.35v34h1.35v-16h1.35v0h1.35v20h1.35v-65h1.35v67h1.35v2h1.35v-62h1.35v58h1.35v-87h1.35v79h1.35v-31h1.35v37h1.35v3h1.35v-40h1.35v-1h1.35v21h1.35v21h1.35v-47h1.35v39h1.35v3h1.35v-72h1.35v65h1.35v8h1.35v6h1.35v-44h1.35v44h1.35v-39h1.35v38h1.35v-3h1.35v-13h1.35v14h1.35v-14h1.35v-50h1.35v60h1.35v0h1.35v-2h1.35v5h1.35v-30h1.35v31h1.35v-4h1.35v-25h1.35v5h1.35v17h1.35v-69h1.35v61h1.35v-40h1.35v-18h1.35v62h1.35v-1h1.35v10h1.35v-20h1.35v31h1.35v-14h1.35v11h1.35v-71h1.35v29h1.35v-36h1.35v27h1.35v-2h1.35v17h1.35v-22h1.35v2h1.35v39h1.35v18h1.35v-2h1.35v-50h1.35v13h1.35v31h1.35v-18h1.35v-30h1.35v48h1.35v-19h1.35v18h1.35v-7h1.35v-43h1.35v-27h1.35v2h1.35v-12h1.35v30h1.35v-7h1.35v51h1.35v-66h1.35v-1h1.35v89h1.35v-44h1.35v8h1.35v14h1.35v-60h1.35v70h1.35v-1h1.35v-11h1.35v13h1.35v-2h1.35v-15h1.35v-57h1.35v1h1.35v77h1.35v-17h1.35v24h1.35v-16h1.35v-2h1.35v13h1.35v-1h1.35v-9h1.35v-1h1.35v-10h1.35v-11h1.35v19h1.35v-58h1.35v63h1.35v-69h1.35v66h1.35v-11h1.35v14h1.35v-18h1.35v29h1.35v-48h1.35v44h1.35v-30h1.35v21h1.35v6h1.35v-10h1.35v14h1.35v-50h1.35v18h1.35v32h1.35v-19h1.35v12h1.35v-56h1.35v24h1.35v36h1.35v-6h1.35v0h1.35v-5h1.35v-41h1.35v49h1.35v-5h1.35v-75h1.35v56h1.35v-48h1.35v2h1.35v54h1.35v-70h1.35v90h1.35v-58h1.35v53h1.35v-39h1.35v27h1.35v5h1.35v4h1.35v-19h1.35v31h1.35v-84h1.35v50h1.35v9h1.35v-16h1.35v13h1.35v-22h1.35v48h1.35v-23h1.35v11h1.35v-49h1.35v-23h1.35v37h1.35v48h1.35v-64h1.35v52h1.35v-10h1.35v-16h1.35v28h1.35v-66h1.35v75h1.35v-15h1.35v-27h1.35v38h1.35v-5h1.35v9h1.35v-21h1.35v1h1.35v11h1.35v18h1.35v-22h1.35v-37h1.35v13h1.35v38h1.35v-50h1.35v5h1.35v17h1.35v-52h1.35v48h1.35v36h1.35v-9h1.35v-61h1.35v-9h1.35v69h1.35v-6h1.35v-16h1.35v-47h1.35v68h1.35v-78h1.35v84h1.35v-9h1.35v-22h1.35v17h1.35v-63h1.35v66h1.35v11h1.35v-15h1.35v-49h1.35v62h1.35v-34h1.35v24h1.35v-1h1.35v10h1.35v-8h1.35v-54h1.35v-8h1.35v44h1.35v26h1.35v-5h1.35v-33h1.35v46h1.35v-9h1.35v-14h1.35v11h1.35v-1h1.35v9h1.35v-83h1.35v78h1.35v0h1.35v-60h1.35v60h1.35v-10h1.35v0h1.35v-26h1.35v35h1.35v-9h1.35v-23h1.35v23h1.35v9h1.35v-12h1.35v-60h1.35v53h1.35v-27h1.35v9h1.35v26h1.35v16h1.35v-16h1.35v-11h1.35v11h1.35v11h1.35v-1h1.35v3h1.35v-1h1.35v-5h1.35v-3h1.35v-33h1.35v29h1.35v-19h1.35v19h1.35v7h1.35v-17h1.35v-42h1.35v12h1.35v55h1.35v-28h1.35v-6h1.35v25h1.35v13h1.35v-8h1.35v-64h1.35v40h1.35v27h1.35v-35h1.35v-9h1.35v-11h1.35v52h1.35v3h1.35v-14h1.35v4h1.35v5h1.35v-2h1.35v-5h1.35v-34h1.35v-3h1.35v-27h1.35v9h1.35v-10h1.35v26h1.35v37h1.35v-85h1.35v43h1.35v28h1.35v-51h1.35v64h1.35v-55h1.35v2h1.35v24h1.35v14h1.35v-46h1.35v-16h1.35v65h1.35v-41h1.35v-22h1.35v53h1.35v10h1.35v-25h1.35v36h1.35v-20h1.35v21h1.35v-1h1.35v-31h1.35v1h1.35v55h1.35v-2h1.35v1h1.35v-27h1.35v-43h1.35v-14h1.35v9h1.35v-1h1.35v61h1.35v-43h1.35v-11h1.35v-12h1.35v18h1.35v-21h1.35v77h1.35v-33h1.35v2h1.35v-40h1.35v7h1.35v-26h1.35v19h1.35v29h1.35v6h1.35v20h1.35v-58h1.35v1h1.35v23h1.35v-18h1.35v17h1.35v-17h1.35v14h1.35v12h1.35v-22h1.35v-7h1.35v24h1.35v-11h1.35v-8h1.35v-2h1.35v-18h1.35v62h1.35v1h1.35v-18h1.35v-15h1.35v30h1.35v25h1.35v6h1.35v8h1.35v0h1.35v0h1.35v0h1.35v0h1.35v0h1.35v0h1.35v0h1.35v0h1.35v0h1.35v0h1.35v0h1.35v0h1.35v0h1.35v0h1.35v0h1.35v0h1.35v0h1.35v0h1.35v0h1.35v0h1.35v0h1.35v0h1.35v0h1.35v0h1.35v0h1.35v0V597.5z"/><path fill="#ffdc5a" d="M318 597.5V549h1.35v0h1.35v2h1.35v0h1.35v-20h1.35v-3h1.35v-3h1.35v0h1.35v-25h1.35v37h1.35v-31h1.35v2h1.35v-9h1.35v4h1.35v38h1.35v-30h1.35v-12h1.35v11h1.35v17h1.35v4h1.35v-63h1.35v53h1.35v-34h1.35v12h1.35v-32h1.35v69h1.35v-67h1.35v38h1.35v14h1.35v3h1.35v-8h1.35v5h1.35v-41h1.35v51h1.35v8h1.35v-20h1.35v9h1.35v-11h1.35v16h1.35v-42h1.35v23h1.35v5h1.35v-6h1.35v-2h1.35v-8h1.35v12h1.35v-17h1.35v-5h1.35v36h1.35v12h1.35v-18h1.35v-5h1.35v-16h1.35v14h1.35v9h1.35v-13h1.35v34h1.35v-22h1.35v9h1.35v-17h1.35v4h1.35v-49h1.35v55h1.35v10h1.35v9h1.35v5h1.35v2h1.35v-6h1.35v-11h1.35v11h1.35v-2h1.35v-51h1.35v50h1.35v-1h1.35v-31h1.35v31h1.35v-2h1.35v10h1.35v-1h1.35v-11h1.35v13h1.35v3h1.35v-39h1.35v33h1.35v-6h1.35v-3h1.35v10h1.35v-6h1.35v6h1.35v-8h1.35v9h1.35v-12h1.35v10h1.35v-11h1.35v-11h1.35v13h1.35v1h1.35v11h1.35v-22h1.35v22h1.35v-6h1.35v9h1.35v-6h1.35v3h1.35v-22h1.35v20h1.35v-2h1.35v-7h1.35v-3h1.35v14h1.35v-8h1.35v7h1.35v4h1.35v-3h1.35v-1h1.35v-17h1.35v16h1.35v-19h1.35v18h1.35v-9h1.35v-7h1.35v17h1.35v-2h1.35v0h1.35v4h1.35v-4h1.35v-28h1.35v32h1.35v-5h1.35v-2h1.35v9h1.35v-4h1.35v-12h1.35v-12h1.35v23h1.35v-9h1.35v5h1.35v-12h1.35v0h1.35v18h1.35v2h1.35v-8h1.35v3h1.35v-8h1.35v14h1.35v-3h1.35v-2h1.35v0h1.35v-3h1.35v0h1.35v-42h1.35v49h1.35v-3h1.35v-22h1.35v24h1.35v-5h1.35v5h1.35v-9h1.35v10h1.35v-5h1.35v-6h1.35v5h1.35v2h1.35v-1h1.35v3h1.35v-49h1.35v37h1.35v-8h1.35v18h1.35v-2h1.35v-3h1.35v-2h1.35v-12h1.35v1h1.35v17h1.35v-11h1.35v-10h1.35v12h1.35v-7h1.35v17h1.35v1h1.35v-54h1.35v51h1.35v-6h1.35v8h1.35v-27h1.35v25h1.35v-31h1.35v1h1.35v24h1.35v-23h1.35v-3h1.35v25h1.35v6h1.35v2h1.35v-30h1.35v-4h1.35v25h1.35v-17h1.35v-24h1.35v31h1.35v6h1.35v-10h1.35v28h1.35v-14h1.35v8h1.35v-1h1.35v7h1.35v-1h1.35v1h1.35v-4h1.35v3h1.35v-14h1.35v-2h1.35v10h1.35v4h1.35v1h1.35v1h1.35v-8h1.35v11h1.35v-37h1.35v36h1.35v0h1.35v-6h1.35v-16h1.35v16h1.35v7h1.35v-11h1.35v0h1.35v3h1.35v-6h1.35v-16h1.35v21h1.35v-73h1.35v82h1.35v-7h1.35v-46h1.35v52h1.35v-16h1.35v7h1.35v3h1.35v-20h1.35v18h1.35v-9h1.35v-19h1.35v31h1.35v-70h1.35v72h1.35v-1h1.35v-4h1.35v-8h1.35v8h1.35v-26h1.35v35h1.35v0h1.35v-9h1.35v-10h1.35v-28h1.35v45h1.35v-11h1.35v-60h1.35v57h1.35v-13h1.35v23h1.35v-51h1.35v29h1.35v3h1.35v22h1.35v-46h1.35v13h1.35v17h1.35v12h1.35v-32h1.35v31h1.35v-14h1.35v-28h1.35v44h1.35v-12h1.35v18h1.35v-6h1.35v-34h1.35v32h1.35v-28h1.35v-37h1.35v55h1.35v10h1.35v0h1.35v-19h1.35v8h1.35v2h1.35v-17h1.35v1h1.35v31h1.35v-32h1.35v11h1.35v3h1.35v20h1.35v-7h1.35v3h1.35v-25h1.35v16h1.35v5h1.35v-5h1.35v-54h1.35v62h1.35v-10h1.35v9h1.35v-10h1.35v-54h1.35v64h1.35v-7h1.35v5h1.35v1h1.35v-9h1.35v3h1.35v9h1.35v-36h1.35v8h1.35v21h1.35v-47h1.35v45h1.35v11h1.35v-5h1.35v-12h1.35v-5h1.35v-39h1.35v56h1.35v-9h1.35v-9h1.35v4h1.35v19h1.35v-14h1.35v4h1.35v-43h1.35v47h1.35v-4h1.35v11h1.35v-3h1.35v-3h1.35v-10h1.35v-10h1.35v3h1.35v14h1.35v1h1.35v0h1.35v5h1.35v-9h1.35v6h1.35v-8h1.35v9h1.35v-5h1.35v4h1.35v-2h1.35v4h1.35v1h1.35v-17h1.35v15h1.35v-19h1.35v7h1.35v6h1.35v5h1.35v-67h1.35v74h1.35v-17h1.35v13h1.35v-20h1.35v3h1.35v9h1.35v-2h1.35v-23h1.35v31h1.35v3h1.35v3h1.35v-26h1.35v16h1.35v-10h1.35v-57h1.35v63h1.35v-2h1.35v-6h1.35v-20h1.35v32h1.35v-4h1.35v3h1.35v7h1.35v-13h1.35v-26h1.35v36h1.35v-13h1.35v-9h1.35v23h1.35v-68h1.35v48h1.35v21h1.35v-7h1.35v-9h1.35v2h1.35v12h1.35v1h1.35v1h1.35v-16h1.35v9h1.35v-15h1.35v10h1.35v12h1.35v1h1.35v-4h1.35v4h1.35v-23h1.35v25h1.35v-23h1.35v-7h1.35v2h1.35v17h1.35v10h1.35v2h1.35v-7h1.35v1h1.35v-6h1.35v9h1.35v-5h1.35v7h1.35v-5h1.35v-6h1.35v10h1.35v-2h1.35v-8h1.35v4h1.35v10h1.35v-5h1.35v-14h1.35v16h1.35v-17h1.35v-28h1.35v39h1.35v-17h1.35v21h1.35v-28h1.35v9h1.35v22h1.35v-5h1.35v2h1.35v-8h1.35v5h1.35v-40h1.35v38h1.35v-4h1.35v-39h1.35v48h1.35v-31h1.35v29h1.35v-31h1.35v17h1.35v-1h1.35v21h1.35v-63h1.35v53h1.35v2h1.35v-13h1.35v18h1.35v2h1.35v-21h1.35v16h1.35v-54h1.35v56h1.35v-16h1.35v18h1.35v-10h1.35v-8h1.35v16h1.35v-11h1.35v-31h1.35v43h1.35v-16h1.35v-5h1.35v18h1.35v-1h1.35v-1h1.35v3h1.35v-3h1.35v-1h1.35v3h1.35v-6h1.35v7h1.35v-7h1.35v-19h1.35v0h1.35v1h1.35v-13h1.35v38h1.35v-25h1.35v-25h1.35v18h1.35v32h1.35v-6h1.35v3h1.35v-25h1.35v-6h1.35v12h1.35v21h1.35v-16h1.35v19h1.35v-5h1.35v-11h1.35v11h1.35v1h1.35v2h1.35v-27h1.35v22h1.35v-1h1.35v3h1.35v-3h1.35v3h1.35v7h1.35v-14h1.35v6h1.35v3h1.35v-21h1.35v12h1.35v10h1.35v-3h1.35v2h1.35v-1h1.35v-4h1.35v-7h1.35v11h1.35v-17h1.35v-4h1.35v6h1.35v-10h1.35v25h1.35v0h1.35v1h1.35v1h1.35v-1h1.35v-2h1.35v-2h1.35v9h1.35v-5h1.35v-14h1.35v16h1.35v-3h1.35v-4h1.35v-4h1.35v-1h1.35v12h1.35v-31h1.35v28h1.35v0h1.35v-1h1.35v-6h1.35v10h1.35v-1h1.35v-3h1.35v3h1.35v-5h1.35v7h1.35v-21h1.35v11h1.35v5h1.35v-4h1.35v-11h1.35v-54h1.35v64h1.35v-46h1.35v-13h1.35v9h1.35v38h1.35v-16h1.35v9h1.35v-5h1.35v2h1.35v27h1.35v-10h1.35v3h1.35v-39h1.35v-22h1.35v61h1.35v-23h1.35v9h1.35v19h1.35v-51h1.35v37h1.35v-14h1.35v30h1.35v-45h1.35v46h1.35v1h1.35v-4h1.35v-10h1.35v9h1.35v1h1.35v1h1.35v-7h1.35v-32h1.35v36h1.35v-40h1.35v19h1.35v25h1.35v-46h1.35v17h1.35v-53h1.35v82h1.35v5h1.35v-42h1.35v39h1.35v-4h1.35v-26h1.35v19h1.35v11h1.35v1h1.35v-26h1.35v23h1.35v-18h1.35v21h1.35v-3h1.35v-15h1.35v8h1.35v10h1.35v-12h1.35v-28h1.35v4h1.35v-40h1.35v36h1.35v35h1.35v-61h1.35v28h1.35v-14h1.35v46h1.35v-40h1.35v40h1.35v-13h1.35v16h1.35v-90h1.35v89h1.35v-36h1.35v12h1.35v23h1.35v-12h1.35v-1h1.35v11h1.35v-21h1.35v26h1.35v-35h1.35v20h1.35v13h1.35v-5h1.35v-91h1.35v59h1.35v17h1.35v7h1.35v11h1.35v-45h1.35v48h1.35v1h1.35v1h1.35v-27h1.35v20h1.35v-38h1.35v31h1.35v12h1.35v6h1.35v-4h1.35v0h1.35v-7h1.35v-50h1.35v63h1.35v-42h1.35v39h1.35v-22h1.35v14h1.35v-27h1.35v34h1.35v1h1.35v-10h1.35v-10h1.35v6h1.35v8h1.35v-41h1.35v12h1.35v21h1.35v1h1.35v-6h1.35v14h1.35v0h1.35v-5h1.35v-23h1.35v-13h1.35v14h1.35v-18h1.35v49h1.35v-12h1.35v-2h1.35v-13h1.35v14h1.35v10h1.35v0h1.35v-8h1.35v-23h1.35v27h1.35v9h1.35v-6h1.35v-4h1.35v6h1.35v-56h1.35v58h1.35v-4h1.35v-11h1.35v6h1.35v-39h1.35v48h1.35v-2h1.35v-1h1.35v-15h1.35v-4h1.35v19h1.35v-11h1.35v-12h1.35v23h1.35v-40h1.35v43h1.35v0h1.35v-61h1.35v60h1.35v-85h1.35v78h1.35v-15h1.35v19h1.35v4h1.35v-47h1.35v23h1.35v12h1.35v11h1.35v-42h1.35v35h1.35v6h1.35v-52h1.35v53h1.35v-8h1.35v12h1.35v-34h1.35v30h1.35v-26h1.35v28h1.35v-3h1.35v-13h1.35v13h1.35v-8h1.35v-56h1.35v67h1.35v-5h1.35v0h1.35v2h1.35v-13h1.35v12h1.35v-1h1.35v-12h1.35v-24h1.35v39h1.35v-70h1.35v69h1.35v-45h1.35v-25h1.35v66h1.35v4h1.35v0h1.35v-20h1.35v26h1.35v-9h1.35v8h1.35v-44h1.35v25h1.35v-48h1.35v28h1.35v4h1.35v14h1.35v-14h1.35v4h1.35v24h1.35v8h1.35v-1h1.35v-49h1.35v35h1.35v10h1.35v-13h1.35v-20h1.35v29h1.35v-16h1.35v13h1.35v-11h1.35v-6h1.35v-29h1.35v-26h1.35v43h1.35v11h1.35v-31h1.35v41h1.35v-28h1.35v2h1.35v46h1.35v-34h1.35v21h1.35v-10h1.35v-53h1.35v72h1.35v-12h1.35v-7h1.35v18h1.35v-6h1.35v-21h1.35v-22h1.35v5h1.35v42h1.35v-12h1.35v20h1.35v-18h1.35v9h1.35v4h1.35v-2h1.35v-7h1.35v4h1.35v-14h1.35v-5h1.35v17h1.35v-26h1.35v27h1.35v-35h1.35v29h1.35v3h1.35v-1h1.35v-22h1.35v32h1.35v-19h1.35v16h1.35v-22h1.35v16h1.35v6h1.35v-2h1.35v4h1.35v-41h1.35v11h1.35v29h1.35v-18h1.35v11h1.35v-20h1.35v13h1.35v16h1.35v-9h1.35v5h1.35v-6h1.35v-14h1.35v16h1.35v6h1.35v-69h1.35v48h1.35v-60h1.35v51h1.35v22h1.35v-59h1.35v69h1.35v-22h1.35v16h1.35v-40h1.35v33h1.35v0h1.35v1h1.35v-8h1.35v22h1.35v-54h1.35v22h1.35v21h1.35v-13h1.35v1h1.35v-1h1.35v23h1.35v-19h1.35v13h1.35v-41h1.35v12h1.35v-28h1.35v62h1.35v-45h1.35v42h1.35v-13h1.35v-6h1.35v19h1.35v-53h1.35v56h1.35v-16h1.35v-15h1.35v30h1.35v-6h1.35v3h1.35v-4h1.35v0h1.35v6h1.35v8h1.35v-16h1.35v-24h1.35v23h1.35v9h1.35v-36h1.35v13h1.35v9h1.35v-45h1.35v32h1.35v33h1.35v-7h1.35v-37h1.35v-26h1.35v63h1.35v-4h1.35v-4h1.35v-20h1.35v31h1.35v-71h1.35v60h1.35v3h1.35v-10h1.35v13h1.35v-48h1.35v44h1.35v10h1.35v-7h1.35v-41h1.35v44h1.35v-27h1.35v23h1.35v2h1.35v4h1.35v-3h1.35v-33h1.35v-5h1.35v8h1.35v33h1.35v0h1.35v-33h1.35v36h1.35v-7h1.35v-5h1.35v6h1.35v-3h1.35v4h1.35v-66h1.35v64h1.35v-7h1.35v-20h1.35v30h1.35v-12h1.35v6h1.35v-22h1.35v25h1.35v-2h1.35v-9h1.35v5h1.35v8h1.35v-5h1.35v-72h1.35v75h1.35v-23h1.35v5h1.35v14h1.35v5h1.35v-5h1.35v-10h1.35v14h1.35v1h1.35v2h1.35v1h1.35v0h1.35v-5h1.35v-5h1.35v-27h1.35v30h1.35v-8h1.35v9h1.35v-3h1.35v-17h1.35v-33h1.35v19h1.35v40h1.35v-11h1.35v-12h1.35v16h1.35v10h1.35v-8h1.35v-25h1.35v-1h1.35v31h1.35v-22h1.35v4h1.35v-27h1.35v44h1.35v1h1.35v-8h1.35v2h1.35v0h1.35v-3h1.35v4h1.35v-24h1.35v6h1.35v-24h1.35v-21h1.35v0h1.35v11h1.35v49h1.35v-48h1.35v20h1.35v27h1.35v-51h1.35v56h1.35v-43h1.35v16h1.35v7h1.35v3h1.35v-34h1.35v17h1.35v17h1.35v-52h1.35v-5h1.35v51h1.35v4h1.35v-4h1.35v17h1.35v-26h1.35v34h1.35v-1h1.35v-26h1.35v5h1.35v29h1.35v0h1.35v-1h1.35v-29h1.35v5h1.35v-32h1.35v9h1.35v-9h1.35v47h1.35v-30h1.35v25h1.35v-59h1.35v33h1.35v-10h1.35v45h1.35v-24h1.35v-6h1.35v-32h1.35v40h1.35v-20h1.35v16h1.35v-2h1.35v15h1.35v-4h1.35v-12h1.35v-44h1.35v35h1.35v-14h1.35v10h1.35v11h1.35v6h1.35v-4h1.35v-48h1.35v18h1.35v29h1.35v-17h1.35v16h1.35v-10h1.35v-44h1.35v57h1.35v3h1.35v8h1.35v-38h1.35v29h1.35v28h1.35v4h1.35v4h1.35v0h1.35v0h1.35v0h1.35v0h1.35v0h1.35v0h1.35v0h1.35v0h1.35v0h1.35v0h1.35v0h1.35v0h1.35v0h1.35v0h1.35v0h1.35v0h1.35v0h1.35v0h1.35v0h1.35v0h1.35v0h1.35v0h1.35v0h1.35v0h1.35v0h1.35v0V597.5z"/><path fill="#fff890" d="M318 597.5V554h1.35v1h1.35v-4h1.35v3h1.35v-7h1.35v-1h1.35v-6h1.35v-7h1.35v11h1.35v2h1.35v-28h1.35v15h1.35v-14h1.35v11h1.35v23h1.35v-13h1.35v-13h1.35v4h1.35v11h1.35v2h1.35v-19h1.35v19h1.35v-14h1.35v-11h1.35v-16h1.35v43h1.35v-15h1.35v0h1.35v15h1.35v-3h1.35v-11h1.35v13h1.35v-22h1.35v23h1.35v3h1.35v-9h1.35v5h1.35v-4h1.35v1h1.35v-8h1.35v-5h1.35v15h1.35v-12h1.35v10h1.35v-6h1.35v5h1.35v-1h1.35v-7h1.35v16h1.35v-5h1.35v-8h1.35v-5h1.35v8h1.35v-8h1.35v15h1.35v-20h1.35v28h1.35v-15h1.35v3h1.35v-2h1.35v2h1.35v-30h1.35v33h1.35v5h1.35v2h1.35v-2h1.35v5h1.35v-3h1.35v-4h1.35v0h1.35v6h1.35v-26h1.35v23h1.35v1h1.35v-13h1.35v12h1.35v0h1.35v3h1.35v0h1.35v-9h1.35v10h1.35v0h1.35v-18h1.35v16h1.35v-5h1.35v3h1.35v3h1.35v-4h1.35v0h1.35v-6h1.35v8h1.35v-5h1.35v5h1.35v-7h1.35v-4h1.35v2h1.35v8h1.35v4h1.35v-8h1.35v7h1.35v-2h1.35v3h1.35v-2h1.35v-1h1.35v-1h1.35v2h1.35v0h1.35v-8h1.35v3h1.35v7h1.35v-3h1.35v3h1.35v1h1.35v-2h1.35v-2h1.35v-8h1.35v8h1.35v-6h1.35v8h1.35v-2h1.35v-5h1.35v5h1.35v0h1.35v1h1.35v1h1.35v0h1.35v-10h1.35v10h1.35v-3h1.35v3h1.35v2h1.35v-1h1.35v-3h1.35v-3h1.35v5h1.35v-4h1.35v0h1.35v-3h1.35v0h1.35v8h1.35v-1h1.35v-6h1.35v5h1.35v-5h1.35v7h1.35v-2h1.35v-1h1.35v0h1.35v1h1.35v-1h1.35v-14h1.35v17h1.35v-1h1.35v-13h1.35v13h1.35v0h1.35v0h1.35v-5h1.35v6h1.35v-6h1.35v-3h1.35v7h1.35v1h1.35v-4h1.35v5h1.35v-32h1.35v26h1.35v-2h1.35v7h1.35v-4h1.35v-6h1.35v9h1.35v-3h1.35v-9h1.35v11h1.35v-6h1.35v-1h1.35v5h1.35v-3h1.35v6h1.35v1h1.35v-18h1.35v18h1.35v-1h1.35v-2h1.35v-4h1.35v4h1.35v-12h1.35v-1h1.35v11h1.35v-11h1.35v0h1.35v2h1.35v9h1.35v1h1.35v-21h1.35v16h1.35v4h1.35v-8h1.35v-7h1.35v10h1.35v2h1.35v-3h1.35v12h1.35v-8h1.35v7h1.35v-2h1.35v3h1.35v0h1.35v0h1.35v-1h1.35v1h1.35v-2h1.35v-4h1.35v3h1.35v2h1.35v0h1.35v0h1.35v-3h1.35v5h1.35v-24h1.35v24h1.35v0h1.35v-2h1.35v-9h1.35v9h1.35v1h1.35v-5h1.35v2h1.35v0h1.35v-2h1.35v-10h1.35v11h1.35v-28h1.35v33h1.35v-2h1.35v-14h1.35v14h1.35v-11h1.35v9h1.35v1h1.35v-11h1.35v8h1.35v-1h1.35v-1h1.35v2h1.35v-24h1.35v29h1.35v-1h1.35v-2h1.35v-5h1.35v7h1.35v-11h1.35v13h1.35v0h1.35v-5h1.35v-3h1.35v-23h1.35v30h1.35v-7h1.35v-9h1.35v9h1.35v-2h1.35v7h1.35v-15h1.35v4h1.35v-1h1.35v14h1.35v-17h1.35v0h1.35v2h1.35v13h1.35v-8h1.35v9h1.35v-8h1.35v-9h1.35v16h1.35v-2h1.35v4h1.35v-3h1.35v-22h1.35v22h1.35v-11h1.35v-8h1.35v11h1.35v7h1.35v-1h1.35v-7h1.35v5h1.35v3h1.35v-16h1.35v-5h1.35v25h1.35v-15h1.35v0h1.35v4h1.35v12h1.35v-3h1.35v1h1.35v-19h1.35v16h1.35v2h1.35v-4h1.35v-10h1.35v14h1.35v-5h1.35v-1h1.35v-6h1.35v-22h1.35v32h1.35v2h1.35v-1h1.35v0h1.35v-5h1.35v4h1.35v1h1.35v-20h1.35v6h1.35v13h1.35v-31h1.35v26h1.35v9h1.35v-5h1.35v0h1.35v-4h1.35v-13h1.35v13h1.35v5h1.35v-5h1.35v6h1.35v2h1.35v-9h1.35v7h1.35v-27h1.35v28h1.35v-1h1.35v4h1.35v-4h1.35v2h1.35v-6h1.35v1h1.35v-10h1.35v13h1.35v-1h1.35v2h1.35v2h1.35v-2h1.35v-1h1.35v0h1.35v2h1.35v-3h1.35v2h1.35v-2h1.35v3h1.35v-1h1.35v-5h1.35v4h1.35v-5h1.35v-4h1.35v5h1.35v2h1.35v-43h1.35v49h1.35v-8h1.35v3h1.35v-5h1.35v-4h1.35v10h1.35v-5h1.35v-3h1.35v9h1.35v0h1.35v2h1.35v-11h1.35v10h1.35v-9h1.35v-12h1.35v17h1.35v-3h1.35v1h1.35v-8h1.35v11h1.35v-1h1.35v2h1.35v3h1.35v-7h1.35v-15h1.35v18h1.35v-3h1.35v-5h1.35v9h1.35v-44h1.35v30h1.35v16h1.35v-4h1.35v-2h1.35v-2h1.35v6h1.35v2h1.35v-1h1.35v-6h1.35v6h1.35v-6h1.35v3h1.35v5h1.35v0h1.35v-3h1.35v3h1.35v-4h1.35v4h1.35v-15h1.35v7h1.35v-2h1.35v5h1.35v3h1.35v3h1.35v-3h1.35v0h1.35v-5h1.35v7h1.35v-4h1.35v4h1.35v-1h1.35v-2h1.35v3h1.35v-2h1.35v-4h1.35v4h1.35v2h1.35v-1h1.35v-8h1.35v9h1.35v-5h1.35v-6h1.35v8h1.35v-4h1.35v4h1.35v-16h1.35v7h1.35v12h1.35v-1h1.35v1h1.35v-4h1.35v2h1.35v-9h1.35v6h1.35v1h1.35v-19h1.35v21h1.35v-10h1.35v10h1.35v-11h1.35v5h1.35v3h1.35v5h1.35v-28h1.35v25h1.35v1h1.35v-5h1.35v4h1.35v3h1.35v-6h1.35v5h1.35v-27h1.35v26h1.35v-3h1.35v3h1.35v-4h1.35v-5h1.35v10h1.35v-4h1.35v-15h1.35v19h1.35v-10h1.35v0h1.35v9h1.35v1h1.35v-1h1.35v2h1.35v-4h1.35v0h1.35v4h1.35v-7h1.35v5h1.35v1h1.35v-15h1.35v4h1.35v3h1.35v-10h1.35v17h1.35v-19h1.35v-2h1.35v9h1.35v11h1.35v-2h1.35v0h1.35v-3h1.35v0h1.35v-5h1.35v12h1.35v-8h1.35v9h1.35v-4h1.35v-5h1.35v6h1.35v-1h1.35v4h1.35v-15h1.35v10h1.35v3h1.35v-1h1.35v-1h1.35v4h1.35v1h1.35v-6h1.35v-1h1.35v3h1.35v-4h1.35v2h1.35v4h1.35v0h1.35v-2h1.35v0h1.35v-5h1.35v4h1.35v2h1.35v-8h1.35v0h1.35v3h1.35v-3h1.35v8h1.35v0h1.35v1h1.35v0h1.35v-2h1.35v2h1.35v-1h1.35v2h1.35v-2h1.35v-3h1.35v3h1.35v0h1.35v-4h1.35v1h1.35v0h1.35v4h1.35v-29h1.35v27h1.35v2h1.35v-3h1.35v1h1.35v1h1.35v-4h1.35v4h1.35v-2h1.35v0h1.35v3h1.35v-10h1.35v7h1.35v2h1.35v-2h1.35v-5h1.35v-8h1.35v12h1.35v-5h1.35v-13h1.35v-9h1.35v22h1.35v-5h1.35v1h1.35v0h1.35v-8h1.35v18h1.35v-3h1.35v5h1.35v-16h1.35v1h1.35v8h1.35v-20h1.35v19h1.35v5h1.35v-24h1.35v18h1.35v-5h1.35v13h1.35v-32h1.35v31h1.35v2h1.35v-4h1.35v-2h1.35v5h1.35v-3h1.35v1h1.35v-2h1.35v-14h1.35v14h1.35v-11h1.35v7h1.35v9h1.35v-17h1.35v-2h1.35v-30h1.35v49h1.35v2h1.35v-22h1.35v21h1.35v-3h1.35v-10h1.35v7h1.35v4h1.35v3h1.35v-6h1.35v4h1.35v-4h1.35v6h1.35v-2h1.35v-11h1.35v6h1.35v6h1.35v-4h1.35v-8h1.35v-3h1.35v-15h1.35v20h1.35v7h1.35v-28h1.35v25h1.35v-14h1.35v16h1.35v-44h1.35v44h1.35v-2h1.35v2h1.35v-41h1.35v43h1.35v-16h1.35v8h1.35v5h1.35v-4h1.35v6h1.35v0h1.35v-22h1.35v22h1.35v-10h1.35v6h1.35v4h1.35v-1h1.35v-35h1.35v25h1.35v2h1.35v-5h1.35v14h1.35v-17h1.35v18h1.35v2h1.35v-1h1.35v-14h1.35v10h1.35v-8h1.35v8h1.35v3h1.35v2h1.35v-1h1.35v0h1.35v-4h1.35v-13h1.35v19h1.35v-17h1.35v16h1.35v-15h1.35v13h1.35v-22h1.35v24h1.35v-1h1.35v-2h1.35v-8h1.35v4h1.35v6h1.35v-18h1.35v-2h1.35v17h1.35v2h1.35v-7h1.35v5h1.35v3h1.35v-2h1.35v-4h1.35v-18h1.35v14h1.35v-6h1.35v18h1.35v-3h1.35v-3h1.35v-2h1.35v2h1.35v4h1.35v-2h1.35v-3h1.35v-7h1.35v4h1.35v10h1.35v-3h1.35v0h1.35v0h1.35v-22h1.35v24h1.35v-2h1.35v-5h1.35v2h1.35v-19h1.35v24h1.35v-1h1.35v-1h1.35v-3h1.35v-11h1.35v15h1.35v-4h1.35v-7h1.35v11h1.35v-18h1.35v20h1.35v0h1.35v-32h1.35v29h1.35v-34h1.35v35h1.35v-11h1.35v9h1.35v1h1.35v-11h1.35v-3h1.35v10h1.35v6h1.35v-17h1.35v15h1.35v0h1.35v-23h1.35v22h1.35v-1h1.35v5h1.35v-14h1.35v14h1.35v-16h1.35v15h1.35v-2h1.35v-3h1.35v2h1.35v-3h1.35v-7h1.35v14h1.35v-6h1.35v3h1.35v2h1.35v-7h1.35v7h1.35v-1h1.35v-4h1.35v-12h1.35v16h1.35v-39h1.35v39h1.35v-9h1.35v-12h1.35v16h1.35v3h1.35v3h1.35v-5h1.35v7h1.35v-4h1.35v2h1.35v-13h1.35v4h1.35v-8h1.35v-6h1.35v6h1.35v8h1.35v-3h1.35v-7h1.35v16h1.35v4h1.35v-1h1.35v-17h1.35v8h1.35v8h1.35v-9h1.35v1h1.35v6h1.35v-5h1.35v3h1.35v1h1.35v-10h1.35v-6h1.35v-24h1.35v25h1.35v2h1.35v-13h1.35v17h1.35v-13h1.35v-1h1.35v28h1.35v-16h1.35v9h1.35v-3h1.35v-52h1.35v60h1.35v-2h1.35v-4h1.35v6h1.35v-2h1.35v-11h1.35v-4h1.35v-9h1.35v27h1.35v-10h1.35v10h1.35v-1h1.35v-2h1.35v3h1.35v1h1.35v-3h1.35v-2h1.35v-1h1.35v-1h1.35v4h1.35v-15h1.35v14h1.35v-22h1.35v23h1.35v-4h1.35v2h1.35v-4h1.35v9h1.35v-4h1.35v3h1.35v-12h1.35v8h1.35v0h1.35v1h1.35v3h1.35v-25h1.35v12h1.35v14h1.35v-8h1.35v3h1.35v-10h1.35v5h1.35v10h1.35v-6h1.35v4h1.35v-4h1.35v-6h1.35v9h1.35v0h1.35v-36h1.35v28h1.35v-20h1.35v14h1.35v10h1.35v-37h1.35v42h1.35v-18h1.35v16h1.35v-14h1.35v14h1.35v-1h1.35v-1h1.35v-2h1.35v9h1.35v-26h1.35v15h1.35v6h1.35v-13h1.35v7h1.35v-2h1.35v12h1.35v-10h1.35v5h1.35v-12h1.35v4h1.35v-13h1.35v24h1.35v-12h1.35v13h1.35v-10h1.35v4h1.35v3h1.35v-17h1.35v20h1.35v-5h1.35v-8h1.35v11h1.35v-3h1.35v2h1.35v-8h1.35v6h1.35v4h1.35v4h1.35v-9h1.35v-11h1.35v5h1.35v11h1.35v-9h1.35v3h1.35v0h1.35v-24h1.35v24h1.35v9h1.35v-5h1.35v-6h1.35v-21h1.35v27h1.35v0h1.35v-2h1.35v-10h1.35v15h1.35v-29h1.35v27h1.35v1h1.35v-16h1.35v16h1.35v-36h1.35v35h1.35v1h1.35v-5h1.35v-7h1.35v12h1.35v-15h1.35v13h1.35v0h1.35v2h1.35v0h1.35v-21h1.35v2h1.35v11h1.35v6h1.35v3h1.35v-15h1.35v17h1.35v-2h1.35v-7h1.35v4h1.35v2h1.35v0h1.35v-32h1.35v32h1.35v0h1.35v-31h1.35v29h1.35v-8h1.35v1h1.35v-7h1.35v14h1.35v-3h1.35v-4h1.35v7h1.35v1h1.35v-6h1.35v-11h1.35v15h1.35v-18h1.35v6h1.35v15h1.35v1h1.35v-3h1.35v-5h1.35v4h1.35v3h1.35v0h1.35v2h1.35v-1h1.35v0h1.35v-6h1.35v-8h1.35v9h1.35v-8h1.35v10h1.35v0h1.35v-3h1.35v-20h1.35v12h1.35v13h1.35v-9h1.35v2h1.35v6h1.35v2h1.35v0h1.35v-24h1.35v18h1.35v4h1.35v-8h1.35v-13h1.35v6h1.35v16h1.35v0h1.35v-8h1.35v6h1.35v0h1.35v-3h1.35v2h1.35v-10h1.35v3h1.35v-18h1.35v10h1.35v-8h1.35v-17h1.35v38h1.35v-28h1.35v9h1.35v20h1.35v-18h1.35v20h1.35v-18h1.35v-1h1.35v14h1.35v2h1.35v-13h1.35v-6h1.35v16h1.35v-17h1.35v-11h1.35v32h1.35v-11h1.35v1h1.35v13h1.35v-14h1.35v11h1.35v2h1.35v-9h1.35v-10h1.35v22h1.35v2h1.35v-3h1.35v-9h1.35v-12h1.35v3h1.35v-5h1.35v-9h1.35v31h1.35v-15h1.35v0h1.35v-8h1.35v7h1.35v-14h1.35v32h1.35v-24h1.35v11h1.35v-18h1.35v16h1.35v-11h1.35v1h1.35v3h1.35v12h1.35v2h1.35v-7h1.35v-30h1.35v32h1.35v-33h1.35v25h1.35v2h1.35v6h1.35v-1h1.35v-12h1.35v7h1.35v3h1.35v-5h1.35v9h1.35v-4h1.35v-5h1.35v3h1.35v10h1.35v-4h1.35v-22h1.35v28h1.35v7h1.35v0h1.35v3h1.35v0h1.35v0h1.35v0h1.35v0h1.35v0h1.35v0h1.35v0h1.35v0h1.35v0h1.35v0h1.35v0h1.35v0h1.35v0h1.35v0h1.35v0h1.35v0h1.35v0h1.35v0h1.35v0h1.35v0h1.35v0h1.35v0h1.35v0h1.35v0h1.35v0h1.35v0V597.5z"/></g></g>
<g clip-path="url(#c2)"><g filter="url(#vb)"><rect x="300" y="540" width="1530" height="420" fill="#060028"/><path fill="#1c0650" d="M318 941V792h1.35v3h1.35v-7h1.35v18h1.35v0h1.35v-28h1.35v-5h1.35v-37h1.35v-11h1.35v48h1.35v1h1.35v0h1.35v-32h1.35v11h1.35v29h1.35v-14h1.35v-9h1.35v12h1.35v4h1.35v-13h1.35v-15h1.35v5h1.35v13h1.35v-10h1.35v-4h1.35v10h1.35v-11h1.35v14h1.35v8h1.35v-6h1.35v9h1.35v-2h1.35v14h1.35v-38h1.35v26h1.35v-33h1.35v30h1.35v-29h1.35v10h1.35v-2h1.35v18h1.35v-6h1.35v13h1.35v-35h1.35v10h1.35v15h1.35v0h1.35v-18h1.35v9h1.35v25h1.35v-22h1.35v3h1.35v-4h1.35v11h1.35v1h1.35v-20h1.35v0h1.35v12h1.35v10h1.35v7h1.35v-20h1.35v10h1.35v-18h1.35v-11h1.35v1h1.35v47h1.35v-52h1.35v19h1.35v30h1.35v-21h1.35v-31h1.35v35h1.35v5h1.35v16h1.35v-23h1.35v-13h1.35v10h1.35v10h1.35v9h1.35v-15h1.35v-11h1.35v32h1.35v-32h1.35v15h1.35v-6h1.35v11h1.35v-7h1.35v-11h1.35v29h1.35v-29h1.35v4h1.35v14h1.35v-20h1.35v10h1.35v5h1.35v2h1.35v-13h1.35v4h1.35v-24h1.35v31h1.35v-1h1.35v7h1.35v0h1.35v-9h1.35v-33h1.35v43h1.35v-3h1.35v-47h1.35v26h1.35v11h1.35v-19h1.35v19h1.35v5h1.35v-9h1.35v10h1.35v-31h1.35v4h1.35v37h1.35v4h1.35v-24h1.35v31h1.35v-32h1.35v14h1.35v-24h1.35v33h1.35v-14h1.35v-8h1.35v12h1.35v-35h1.35v43h1.35v-32h1.35v17h1.35v0h1.35v-13h1.35v15h1.35v-16h1.35v11h1.35v1h1.35v-12h1.35v31h1.35v-13h1.35v-53h1.35v14h1.35v-1h1.35v44h1.35v-5h1.35v-17h1.35v-4h1.35v14h1.35v-13h1.35v13h1.35v14h1.35v-10h1.35v20h1.35v3h1.35v-29h1.35v-14h1.35v1h1.35v23h1.35v-12h1.35v16h1.35v-17h1.35v-1h1.35v27h1.35v-45h1.35v16h1.35v-10h1.35v2h1.35v22h1.35v-14h1.35v24h1.35v-8h1.35v-3h1.35v-8h1.35v5h1.35v1h1.35v15h1.35v-23h1.35v23h1.35v-4h1.35v8h1.35v-31h1.35v8h1.35v7h1.35v-2h1.35v3h1.35v11h1.35v-33h1.35v-11h1.35v42h1.35v-8h1.35v4h1.35v-18h1.35v5h1.35v4h1.35v-23h1.35v-5h1.35v5h1.35v17h1.35v-10h1.35v-2h1.35v10h1.35v3h1.35v-5h1.35v2h1.35v20h1.35v-5h1.35v0h1.35v-1h1.35v7h1.35v-26h1.35v-4h1.35v-17h1.35v27h1.35v24h1.35v-34h1.35v9h1.35v3h1.35v2h1.35v8h1.35v-15h1.35v-7h1.35v-7h1.35v23h1.35v2h1.35v-25h1.35v41h1.35v-26h1.35v2h1.35v11h1.35v-12h1.35v19h1.35v-46h1.35v47h1.35v-10h1.35v15h1.35v-23h1.35v-4h1.35v-4h1.35v-9h1.35v12h1.35v4h1.35v-8h1.35v13h1.35v26h1.35v-43h1.35v14h1.35v20h1.35v-18h1.35v-13h1.35v4h1.35v14h1.35v7h1.35v-10h1.35v5h1.35v9h1.35v-14h1.35v9h1.35v-15h1.35v-23h1.35v19h1.35v-7h1.35v4h1.35v7h1.35v6h1.35v5h1.35v4h1.35v-6h1.35v-5h1.35v-15h1.35v14h1.35v7h1.35v-1h1.35v15h1.35v-39h1.35v4h1.35v38h1.35v-13h1.35v3h1.35v-5h1.35v-24h1.35v27h1.35v-12h1.35v-6h1.35v-7h1.35v4h1.35v-1h1.35v17h1.35v-2h1.35v-19h1.35v12h1.35v-26h1.35v27h1.35v-4h1.35v11h1.35v-2h1.35v13h1.35v-26h1.35v20h1.35v-27h1.35v21h1.35v2h1.35v6h1.35v-5h1.35v23h1.35v-37h1.35v18h1.35v-15h1.35v13h1.35v-14h1.35v20h1.35v-17h1.35v26h1.35v-4h1.35v-7h1.35v-3h1.35v10h1.35v-16h1.35v-14h1.35v19h1.35v-21h1.35v23h1.35v1h1.35v7h1.35v-20h1.35v5h1.35v-2h1.35v1h1.35v-17h1.35v15h1.35v26h1.35v-4h1.35v-21h1.35v1h1.35v3h1.35v12h1.35v11h1.35v-33h1.35v-6h1.35v4h1.35v16h1.35v-20h1.35v22h1.35v-21h1.35v0h1.35v19h1.35v9h1.35v-10h1.35v-5h1.35v7h1.35v-15h1.35v3h1.35v2h1.35v3h1.35v6h1.35v-15h1.35v7h1.35v-7h1.35v-3h1.35v25h1.35v-11h1.35v-5h1.35v21h1.35v-30h1.35v26h1.35v-34h1.35v44h1.35v-18h1.35v4h1.35v-27h1.35v14h1.35v4h1.35v18h1.35v-44h1.35v-4h1.35v33h1.35v-15h1.35v16h1.35v-11h1.35v-6h1.35v0h1.35v-8h1.35v11h1.35v22h1.35v0h1.35v7h1.35v-25h1.35v-4h1.35v19h1.35v4h1.35v-77h1.35v39h1.35v13h1.35v26h1.35v-30h1.35v5h1.35v10h1.35v0h1.35v-11h1.35v-6h1.35v3h1.35v-1h1.35v18h1.35v0h1.35v-6h1.35v33h1.35v-35h1.35v45h1.35v-30h1.35v-24h1.35v5h1.35v7h1.35v-13h1.35v-13h1.35v2h1.35v23h1.35v1h1.35v11h1.35v-31h1.35v14h1.35v10h1.35v20h1.35v-15h1.35v-15h1.35v2h1.35v0h1.35v27h1.35v-31h1.35v14h1.35v-11h1.35v2h1.35v2h1.35v15h1.35v-24h1.35v16h1.35v-17h1.35v8h1.35v-9h1.35v12h1.35v10h1.35v-24h1.35v7h1.35v29h1.35v-25h1.35v-3h1.35v-3h1.35v-40h1.35v41h1.35v-2h1.35v12h1.35v-11h1.35v-24h1.35v33h1.35v-24h1.35v49h1.35v-36h1.35v-2h1.35v18h1.35v-29h1.35v28h1.35v5h1.35v11h1.35v-26h1.35v-4h1.35v5h1.35v21h1.35v-33h1.35v-1h1.35v36h1.35v-22h1.35v5h1.35v-4h1.35v17h1.35v-2h1.35v-5h1.35v-22h1.35v11h1.35v-1h1.35v0h1.35v-2h1.35v-15h1.35v23h1.35v-15h1.35v17h1.35v-2h1.35v-18h1.35v8h1.35v1h1.35v1h1.35v5h1.35v-3h1.35v-13h1.35v-21h1.35v41h1.35v-7h1.35v11h1.35v-4h1.35v12h1.35v-19h1.35v3h1.35v2h1.35v-15h1.35v-1h1.35v33h1.35v-11h1.35v8h1.35v5h1.35v-26h1.35v9h1.35v0h1.35v-6h1.35v7h1.35v15h1.35v-28h1.35v19h1.35v-11h1.35v-6h1.35v8h1.35v19h1.35v-3h1.35v4h1.35v-10h1.35v-6h1.35v7h1.35v-5h1.35v-1h1.35v-12h1.35v27h1.35v-13h1.35v-44h1.35v14h1.35v21h1.35v7h1.35v-13h1.35v-16h1.35v25h1.35v-3h1.35v-11h1.35v14h1.35v-5h1.35v-7h1.35v-3h1.35v-4h1.35v14h1.35v-14h1.35v29h1.35v-12h1.35v21h1.35v2h1.35v-21h1.35v-25h1.35v23h1.35v1h1.35v18h1.35v-21h1.35v3h1.35v-4h1.35v-1h1.35v7h1.35v18h1.35v-28h1.35v16h1.35v-16h1.35v12h1.35v13h1.35v-25h1.35v-19h1.35v12h1.35v11h1.35v2h1.35v-7h1.35v23h1.35v-18h1.35v14h1.35v-5h1.35v-3h1.35v-12h1.35v12h1.35v-8h1.35v5h1.35v10h1.35v-27h1.35v30h1.35v-22h1.35v-7h1.35v17h1.35v9h1.35v0h1.35v-40h1.35v37h1.35v7h1.35v6h1.35v-52h1.35v29h1.35v-5h1.35v27h1.35v-15h1.35v-1h1.35v-5h1.35v-9h1.35v-8h1.35v16h1.35v16h1.35v-6h1.35v-6h1.35v-3h1.35v0h1.35v-17h1.35v1h1.35v13h1.35v4h1.35v0h1.35v-3h1.35v1h1.35v18h1.35v-13h1.35v23h1.35v-37h1.35v12h1.35v-7h1.35v-10h1.35v-4h1.35v21h1.35v-8h1.35v12h1.35v1h1.35v-1h1.35v-25h1.35v18h1.35v-13h1.35v2h1.35v11h1.35v8h1.35v0h1.35v-1h1.35v7h1.35v2h1.35v-19h1.35v-1h1.35v8h1.35v1h1.35v-6h1.35v19h1.35v-23h1.35v4h1.35v-37h1.35v51h1.35v-5h1.35v2h1.35v-32h1.35v36h1.35v0h1.35v-35h1.35v10h1.35v18h1.35v-3h1.35v6h1.35v-25h1.35v18h1.35v21h1.35v-21h1.35v8h1.35v-20h1.35v12h1.35v-16h1.35v-12h1.35v41h1.35v-3h1.35v1h1.35v-5h1.35v9h1.35v-29h1.35v24h1.35v3h1.35v-17h1.35v6h1.35v-4h1.35v-15h1.35v25h1.35v-3h1.35v-20h1.35v-29h1.35v51h1.35v-11h1.35v1h1.35v4h1.35v-9h1.35v-9h1.35v33h1.35v-33h1.35v27h1.35v-26h1.35v18h1.35v10h1.35v8h1.35v-8h1.35v4h1.35v-53h1.35v19h1.35v-3h1.35v17h1.35v18h1.35v-35h1.35v13h1.35v16h1.35v5h1.35v-41h1.35v13h1.35v24h1.35v-5h1.35v13h1.35v-2h1.35v-19h1.35v3h1.35v10h1.35v0h1.35v-13h1.35v6h1.35v-6h1.35v-2h1.35v6h1.35v14h1.35v-1h1.35v4h1.35v-32h1.35v-11h1.35v33h1.35v-7h1.35v7h1.35v16h1.35v-28h1.35v-26h1.35v34h1.35v-6h1.35v3h1.35v-6h1.35v-21h1.35v44h1.35v5h1.35v-6h1.35v-30h1.35v6h1.35v6h1.35v23h1.35v-36h1.35v10h1.35v3h1.35v0h1.35v-9h1.35v-1h1.35v-16h1.35v26h1.35v-9h1.35v5h1.35v0h1.35v11h1.35v-14h1.35v-17h1.35v33h1.35v-27h1.35v23h1.35v-29h1.35v27h1.35v-29h1.35v18h1.35v24h1.35v-5h1.35v-9h1.35v-10h1.35v20h1.35v-20h1.35v7h1.35v-10h1.35v-18h1.35v36h1.35v14h1.35v-28h1.35v-22h1.35v24h1.35v21h1.35v5h1.35v-10h1.35v-22h1.35v0h1.35v2h1.35v20h1.35v13h1.35v-23h1.35v2h1.35v-2h1.35v2h1.35v-30h1.35v23h1.35v-3h1.35v-7h1.35v25h1.35v-37h1.35v21h1.35v-4h1.35v13h1.35v-1h1.35v16h1.35v-2h1.35v-21h1.35v26h1.35v-52h1.35v9h1.35v34h1.35v-4h1.35v-37h1.35v7h1.35v17h1.35v-9h1.35v10h1.35v13h1.35v-16h1.35v-6h1.35v1h1.35v19h1.35v-20h1.35v12h1.35v3h1.35v-26h1.35v26h1.35v-19h1.35v25h1.35v-17h1.35v12h1.35v-12h1.35v12h1.35v-22h1.35v14h1.35v12h1.35v9h1.35v-47h1.35v13h1.35v26h1.35v-11h1.35v2h1.35v-19h1.35v13h1.35v14h1.35v7h1.35v-10h1.35v26h1.35v-12h1.35v-19h1.35v9h1.35v-26h1.35v28h1.35v-3h1.35v11h1.35v-3h1.35v-21h1.35v12h1.35v-12h1.35v-2h1.35v9h1.35v-3h1.35v6h1.35v-14h1.35v4h1.35v4h1.35v2h1.35v7h1.35v-1h1.35v5h1.35v-4h1.35v3h1.35v-5h1.35v-14h1.35v26h1.35v-13h1.35v-3h1.35v26h1.35v-11h1.35v-19h1.35v0h1.35v20h1.35v-2h1.35v4h1.35v-17h1.35v20h1.35v-13h1.35v-2h1.35v14h1.35v-8h1.35v-8h1.35v5h1.35v-18h1.35v14h1.35v0h1.35v16h1.35v-15h1.35v-7h1.35v2h1.35v5h1.35v0h1.35v-4h1.35v-1h1.35v8h1.35v-13h1.35v1h1.35v6h1.35v-12h1.35v7h1.35v4h1.35v-12h1.35v-24h1.35v54h1.35v-5h1.35v-7h1.35v-32h1.35v29h1.35v9h1.35v-20h1.35v-7h1.35v18h1.35v1h1.35v-11h1.35v19h1.35v-30h1.35v14h1.35v-15h1.35v6h1.35v8h1.35v8h1.35v-27h1.35v25h1.35v2h1.35v-2h1.35v-4h1.35v-17h1.35v9h1.35v-11h1.35v-39h1.35v32h1.35v34h1.35v-14h1.35v-9h1.35v10h1.35v-12h1.35v9h1.35v9h1.35v-4h1.35v30h1.35v-41h1.35v7h1.35v-1h1.35v7h1.35v7h1.35v-21h1.35v11h1.35v-3h1.35v12h1.35v-3h1.35v0h1.35v-17h1.35v-6h1.35v10h1.35v25h1.35v-14h1.35v-9h1.35v3h1.35v-28h1.35v58h1.35v-52h1.35v30h1.35v-1h1.35v-12h1.35v30h1.35v-35h1.35v29h1.35v-8h1.35v3h1.35v-17h1.35v-22h1.35v39h1.35v5h1.35v-11h1.35v-4h1.35v-6h1.35v21h1.35v-19h1.35v21h1.35v-14h1.35v-7h1.35v17h1.35v-17h1.35v4h1.35v16h1.35v-1h1.35v-8h1.35v15h1.35v-46h1.35v31h1.35v-13h1.35v27h1.35v-23h1.35v17h1.35v-9h1.35v10h1.35v-6h1.35v-7h1.35v7h1.35v1h1.35v-1h1.35v-16h1.35v23h1.35v-17h1.35v-10h1.35v8h1.35v-1h1.35v10h1.35v5h1.35v3h1.35v-23h1.35v23h1.35v5h1.35v-44h1.35v49h1.35v-21h1.35v14h1.35v-16h1.35v2h1.35v16h1.35v-15h1.35v-3h1.35v3h1.35v47h1.35v-3h1.35v-5h1.35v-29h1.35v3h1.35v-6h1.35v-12h1.35v7h1.35v-10h1.35v-14h1.35v13h1.35v-9h1.35v12h1.35v8h1.35v8h1.35v-26h1.35v4h1.35v13h1.35v-19h1.35v7h1.35v3h1.35v1h1.35v6h1.35v0h1.35v-10h1.35v-17h1.35v9h1.35v14h1.35v-9h1.35v12h1.35v-19h1.35v29h1.35v-16h1.35v21h1.35v-16h1.35v2h1.35v15h1.35v-12h1.35v5h1.35v-15h1.35v10h1.35v-13h1.35v5h1.35v20h1.35v-16h1.35v7h1.35v8h1.35v-31h1.35v18h1.35v4h1.35v15h1.35v-5h1.35v2h1.35v-3h1.35v1h1.35v28h1.35v-6h1.35v-31h1.35v14h1.35v15h1.35v18h1.35v-29h1.35v18h1.35v-13h1.35v3h1.35v5h1.35v10h1.35v33h1.35v11h1.35v17h1.35v13h1.35v15h1.35v0V941z"/><path fill="#480a80" d="M318 941V794h1.35v-11h1.35v22h1.35v-7h1.35v5h1.35v-29h1.35v6h1.35v-24h1.35v9h1.35v19h1.35v-19h1.35v9h1.35v-9h1.35v-5h1.35v27h1.35v-7h1.35v-18h1.35v-15h1.35v47h1.35v-19h1.35v-22h1.35v10h1.35v-3h1.35v-3h1.35v-22h1.35v24h1.35v-2h1.35v6h1.35v3h1.35v3h1.35v6h1.35v4h1.35v20h1.35v-21h1.35v-7h1.35v-13h1.35v22h1.35v-15h1.35v-20h1.35v6h1.35v31h1.35v-10h1.35v11h1.35v-26h1.35v2h1.35v17h1.35v-2h1.35v-6h1.35v-9h1.35v30h1.35v-28h1.35v2h1.35v-1h1.35v18h1.35v5h1.35v-9h1.35v-30h1.35v41h1.35v-5h1.35v-9h1.35v-8h1.35v5h1.35v-8h1.35v-11h1.35v12h1.35v28h1.35v-20h1.35v-2h1.35v29h1.35v-13h1.35v-16h1.35v17h1.35v-19h1.35v14h1.35v-11h1.35v-5h1.35v7h1.35v-8h1.35v34h1.35v-21h1.35v-15h1.35v23h1.35v-19h1.35v15h1.35v-8h1.35v8h1.35v-9h1.35v-6h1.35v24h1.35v-20h1.35v-40h1.35v51h1.35v-10h1.35v12h1.35v-15h1.35v10h1.35v-9h1.35v14h1.35v-2h1.35v-5h1.35v4h1.35v11h1.35v5h1.35v-32h1.35v-6h1.35v11h1.35v6h1.35v-34h1.35v14h1.35v19h1.35v-7h1.35v4h1.35v-13h1.35v17h1.35v8h1.35v-12h1.35v-16h1.35v35h1.35v-15h1.35v-5h1.35v27h1.35v-31h1.35v7h1.35v-8h1.35v30h1.35v-8h1.35v-15h1.35v3h1.35v-1h1.35v8h1.35v-18h1.35v0h1.35v15h1.35v11h1.35v-3h1.35v-20h1.35v4h1.35v3h1.35v-29h1.35v54h1.35v-21h1.35v-17h1.35v-14h1.35v10h1.35v25h1.35v5h1.35v-11h1.35v-9h1.35v11h1.35v-12h1.35v10h1.35v4h1.35v-4h1.35v10h1.35v-5h1.35v-17h1.35v-3h1.35v2h1.35v15h1.35v-11h1.35v-13h1.35v19h1.35v-9h1.35v26h1.35v-37h1.35v13h1.35v-16h1.35v3h1.35v22h1.35v-20h1.35v-2h1.35v15h1.35v13h1.35v-7h1.35v-2h1.35v11h1.35v4h1.35v-25h1.35v25h1.35v-1h1.35v8h1.35v-19h1.35v4h1.35v-1h1.35v-1h1.35v4h1.35v-10h1.35v-8h1.35v4h1.35v23h1.35v-19h1.35v15h1.35v-13h1.35v16h1.35v-3h1.35v-17h1.35v4h1.35v-29h1.35v25h1.35v-6h1.35v-4h1.35v7h1.35v-5h1.35v13h1.35v-5h1.35v14h1.35v-8h1.35v4h1.35v10h1.35v-44h1.35v15h1.35v13h1.35v-17h1.35v15h1.35v15h1.35v-29h1.35v6h1.35v8h1.35v0h1.35v-32h1.35v25h1.35v7h1.35v-5h1.35v8h1.35v-1h1.35v-39h1.35v49h1.35v-34h1.35v8h1.35v21h1.35v-25h1.35v26h1.35v-17h1.35v21h1.35v-4h1.35v0h1.35v-15h1.35v0h1.35v1h1.35v7h1.35v-26h1.35v18h1.35v1h1.35v8h1.35v8h1.35v-13h1.35v-2h1.35v27h1.35v-14h1.35v-29h1.35v16h1.35v1h1.35v16h1.35v-4h1.35v-1h1.35v10h1.35v-17h1.35v4h1.35v-1h1.35v-12h1.35v-12h1.35v16h1.35v-19h1.35v12h1.35v11h1.35v7h1.35v-4h1.35v21h1.35v-47h1.35v-6h1.35v41h1.35v-19h1.35v19h1.35v-1h1.35v-15h1.35v-13h1.35v25h1.35v3h1.35v3h1.35v-3h1.35v-27h1.35v26h1.35v2h1.35v-24h1.35v6h1.35v-4h1.35v-7h1.35v35h1.35v-7h1.35v-18h1.35v16h1.35v-30h1.35v22h1.35v-16h1.35v23h1.35v-2h1.35v15h1.35v-14h1.35v-26h1.35v9h1.35v12h1.35v7h1.35v1h1.35v0h1.35v10h1.35v-27h1.35v13h1.35v4h1.35v-5h1.35v-15h1.35v8h1.35v-1h1.35v8h1.35v11h1.35v-3h1.35v-3h1.35v21h1.35v-29h1.35v-14h1.35v10h1.35v-15h1.35v21h1.35v-6h1.35v6h1.35v7h1.35v-6h1.35v-11h1.35v19h1.35v-16h1.35v6h1.35v27h1.35v-2h1.35v-13h1.35v-32h1.35v22h1.35v24h1.35v-20h1.35v-8h1.35v-4h1.35v-3h1.35v16h1.35v-9h1.35v9h1.35v-8h1.35v-19h1.35v42h1.35v-22h1.35v10h1.35v-62h1.35v60h1.35v-14h1.35v11h1.35v-39h1.35v44h1.35v4h1.35v-15h1.35v5h1.35v1h1.35v-15h1.35v18h1.35v-4h1.35v-1h1.35v7h1.35v-19h1.35v19h1.35v-17h1.35v15h1.35v12h1.35v-3h1.35v-19h1.35v-2h1.35v16h1.35v13h1.35v-44h1.35v9h1.35v8h1.35v-7h1.35v12h1.35v-13h1.35v-2h1.35v-6h1.35v12h1.35v3h1.35v6h1.35v7h1.35v-7h1.35v-5h1.35v4h1.35v-3h1.35v11h1.35v-24h1.35v-6h1.35v23h1.35v2h1.35v-21h1.35v13h1.35v-2h1.35v14h1.35v-22h1.35v-3h1.35v-16h1.35v32h1.35v18h1.35v-8h1.35v-8h1.35v17h1.35v-22h1.35v30h1.35v-22h1.35v-14h1.35v1h1.35v21h1.35v-22h1.35v15h1.35v0h1.35v6h1.35v-6h1.35v-12h1.35v-22h1.35v31h1.35v6h1.35v-2h1.35v-5h1.35v-7h1.35v-12h1.35v12h1.35v10h1.35v-8h1.35v5h1.35v-8h1.35v15h1.35v-15h1.35v19h1.35v-15h1.35v4h1.35v-16h1.35v11h1.35v-14h1.35v20h1.35v9h1.35v-20h1.35v-10h1.35v36h1.35v-18h1.35v-20h1.35v21h1.35v-42h1.35v29h1.35v4h1.35v10h1.35v-7h1.35v-20h1.35v39h1.35v-22h1.35v36h1.35v-31h1.35v-9h1.35v22h1.35v-56h1.35v59h1.35v-8h1.35v8h1.35v-19h1.35v-13h1.35v15h1.35v23h1.35v-19h1.35v-8h1.35v19h1.35v-7h1.35v0h1.35v-2h1.35v2h1.35v12h1.35v-26h1.35v-15h1.35v19h1.35v0h1.35v8h1.35v-13h1.35v-16h1.35v32h1.35v-10h1.35v22h1.35v-12h1.35v-24h1.35v11h1.35v11h1.35v-7h1.35v4h1.35v1h1.35v-30h1.35v19h1.35v26h1.35v-12h1.35v12h1.35v-7h1.35v12h1.35v-22h1.35v0h1.35v-2h1.35v-8h1.35v1h1.35v28h1.35v-17h1.35v8h1.35v14h1.35v-48h1.35v19h1.35v-2h1.35v3h1.35v-3h1.35v22h1.35v-20h1.35v4h1.35v-10h1.35v11h1.35v-8h1.35v18h1.35v7h1.35v-1h1.35v-8h1.35v7h1.35v-2h1.35v-13h1.35v2h1.35v-7h1.35v34h1.35v-24h1.35v-16h1.35v-5h1.35v21h1.35v6h1.35v-15h1.35v-9h1.35v4h1.35v17h1.35v-7h1.35v-2h1.35v-5h1.35v2h1.35v-3h1.35v-4h1.35v4h1.35v-7h1.35v9h1.35v6h1.35v13h1.35v-15h1.35v1h1.35v-18h1.35v11h1.35v10h1.35v12h1.35v-20h1.35v15h1.35v-10h1.35v-27h1.35v30h1.35v12h1.35v-8h1.35v7h1.35v-23h1.35v13h1.35v4h1.35v-14h1.35v-6h1.35v-1h1.35v8h1.35v0h1.35v2h1.35v16h1.35v-1h1.35v-1h1.35v-6h1.35v-1h1.35v-3h1.35v-2h1.35v3h1.35v10h1.35v-5h1.35v-13h1.35v0h1.35v-2h1.35v-28h1.35v32h1.35v9h1.35v-3h1.35v-16h1.35v23h1.35v10h1.35v3h1.35v-18h1.35v-10h1.35v-22h1.35v41h1.35v-7h1.35v4h1.35v-20h1.35v13h1.35v-19h1.35v30h1.35v-24h1.35v18h1.35v-18h1.35v15h1.35v-5h1.35v-3h1.35v-20h1.35v20h1.35v4h1.35v-5h1.35v3h1.35v-11h1.35v27h1.35v-6h1.35v8h1.35v-29h1.35v17h1.35v-10h1.35v-23h1.35v12h1.35v12h1.35v-11h1.35v25h1.35v-12h1.35v-28h1.35v24h1.35v7h1.35v-20h1.35v11h1.35v6h1.35v11h1.35v-10h1.35v-2h1.35v10h1.35v16h1.35v-26h1.35v2h1.35v-8h1.35v14h1.35v-13h1.35v8h1.35v-14h1.35v12h1.35v-35h1.35v37h1.35v-16h1.35v20h1.35v-19h1.35v23h1.35v5h1.35v-33h1.35v6h1.35v1h1.35v14h1.35v-2h1.35v-12h1.35v1h1.35v27h1.35v-10h1.35v3h1.35v-24h1.35v-20h1.35v25h1.35v-20h1.35v37h1.35v8h1.35v-2h1.35v-11h1.35v2h1.35v-4h1.35v8h1.35v10h1.35v-31h1.35v12h1.35v-7h1.35v2h1.35v1h1.35v8h1.35v-14h1.35v-26h1.35v32h1.35v4h1.35v4h1.35v7h1.35v7h1.35v-10h1.35v3h1.35v-16h1.35v-6h1.35v-1h1.35v19h1.35v7h1.35v6h1.35v-31h1.35v20h1.35v-20h1.35v3h1.35v-19h1.35v33h1.35v5h1.35v-29h1.35v1h1.35v34h1.35v-17h1.35v-9h1.35v-18h1.35v39h1.35v-7h1.35v15h1.35v5h1.35v-35h1.35v10h1.35v13h1.35v-9h1.35v7h1.35v-17h1.35v-7h1.35v10h1.35v8h1.35v8h1.35v1h1.35v3h1.35v-18h1.35v-17h1.35v27h1.35v-9h1.35v7h1.35v13h1.35v-28h1.35v-8h1.35v20h1.35v-5h1.35v17h1.35v-11h1.35v-21h1.35v26h1.35v12h1.35v-2h1.35v-31h1.35v13h1.35v-16h1.35v35h1.35v-38h1.35v18h1.35v-3h1.35v5h1.35v1h1.35v3h1.35v-6h1.35v2h1.35v2h1.35v-3h1.35v-1h1.35v-5h1.35v0h1.35v-5h1.35v15h1.35v-4h1.35v3h1.35v-10h1.35v12h1.35v-12h1.35v8h1.35v4h1.35v-5h1.35v3h1.35v-6h1.35v14h1.35v-14h1.35v-6h1.35v-4h1.35v-19h1.35v45h1.35v13h1.35v-34h1.35v-14h1.35v10h1.35v26h1.35v-5h1.35v0h1.35v-22h1.35v-1h1.35v29h1.35v-7h1.35v0h1.35v-6h1.35v-7h1.35v8h1.35v-3h1.35v-19h1.35v27h1.35v-21h1.35v3h1.35v13h1.35v-28h1.35v8h1.35v16h1.35v0h1.35v-5h1.35v9h1.35v5h1.35v-22h1.35v37h1.35v-28h1.35v-13h1.35v28h1.35v-4h1.35v-32h1.35v5h1.35v10h1.35v8h1.35v2h1.35v7h1.35v-16h1.35v11h1.35v-2h1.35v12h1.35v-20h1.35v6h1.35v11h1.35v-22h1.35v6h1.35v-9h1.35v26h1.35v-16h1.35v-3h1.35v-1h1.35v14h1.35v-15h1.35v14h1.35v8h1.35v3h1.35v-23h1.35v-18h1.35v31h1.35v12h1.35v-17h1.35v-7h1.35v-2h1.35v26h1.35v-10h1.35v-10h1.35v21h1.35v-26h1.35v15h1.35v0h1.35v-3h1.35v9h1.35v-17h1.35v25h1.35v-14h1.35v-11h1.35v10h1.35v-22h1.35v15h1.35v5h1.35v2h1.35v-3h1.35v-5h1.35v2h1.35v1h1.35v-4h1.35v10h1.35v-2h1.35v11h1.35v-3h1.35v5h1.35v-19h1.35v12h1.35v-7h1.35v6h1.35v-12h1.35v28h1.35v-11h1.35v-10h1.35v1h1.35v9h1.35v-4h1.35v9h1.35v-21h1.35v22h1.35v-10h1.35v-5h1.35v11h1.35v-1h1.35v2h1.35v-10h1.35v-10h1.35v5h1.35v11h1.35v-2h1.35v4h1.35v-1h1.35v1h1.35v-11h1.35v5h1.35v-6h1.35v-7h1.35v13h1.35v-12h1.35v3h1.35v11h1.35v-28h1.35v12h1.35v20h1.35v-17h1.35v-14h1.35v26h1.35v-42h1.35v40h1.35v-2h1.35v2h1.35v0h1.35v-15h1.35v-8h1.35v20h1.35v-11h1.35v16h1.35v15h1.35v-35h1.35v4h1.35v-5h1.35v8h1.35v-4h1.35v23h1.35v-38h1.35v27h1.35v7h1.35v-3h1.35v-32h1.35v21h1.35v-6h1.35v-15h1.35v11h1.35v-1h1.35v23h1.35v-20h1.35v2h1.35v-8h1.35v3h1.35v2h1.35v14h1.35v-13h1.35v24h1.35v-14h1.35v-20h1.35v7h1.35v24h1.35v-1h1.35v-14h1.35v2h1.35v6h1.35v-12h1.35v-16h1.35v19h1.35v-15h1.35v9h1.35v-6h1.35v23h1.35v-4h1.35v11h1.35v-14h1.35v2h1.35v19h1.35v-13h1.35v-6h1.35v0h1.35v2h1.35v9h1.35v-39h1.35v31h1.35v-3h1.35v1h1.35v-18h1.35v0h1.35v21h1.35v0h1.35v-9h1.35v-1h1.35v-11h1.35v34h1.35v-23h1.35v35h1.35v-27h1.35v-2h1.35v7h1.35v-2h1.35v-7h1.35v13h1.35v0h1.35v-7h1.35v11h1.35v-18h1.35v-11h1.35v13h1.35v14h1.35v-20h1.35v18h1.35v-1h1.35v3h1.35v-2h1.35v-17h1.35v-2h1.35v23h1.35v-20h1.35v5h1.35v3h1.35v13h1.35v-19h1.35v1h1.35v-14h1.35v31h1.35v-10h1.35v1h1.35v-19h1.35v20h1.35v10h1.35v-25h1.35v33h1.35v-22h1.35v-5h1.35v15h1.35v-16h1.35v7h1.35v0h1.35v-5h1.35v-7h1.35v55h1.35v-1h1.35v-7h1.35v-31h1.35v5h1.35v-3h1.35v-7h1.35v1h1.35v-3h1.35v-30h1.35v28h1.35v-6h1.35v-5h1.35v16h1.35v2h1.35v-22h1.35v8h1.35v5h1.35v-12h1.35v16h1.35v-7h1.35v-17h1.35v28h1.35v-4h1.35v0h1.35v-11h1.35v1h1.35v12h1.35v-9h1.35v-2h1.35v17h1.35v-5h1.35v-9h1.35v4h1.35v-5h1.35v9h1.35v-1h1.35v-8h1.35v12h1.35v-28h1.35v9h1.35v1h1.35v11h1.35v20h1.35v-18h1.35v6h1.35v4h1.35v-18h1.35v9h1.35v-7h1.35v26h1.35v-28h1.35v31h1.35v-14h1.35v1h1.35v35h1.35v-26h1.35v-18h1.35v18h1.35v18h1.35v11h1.35v-4h1.35v-12h1.35v9h1.35v-17h1.35v16h1.35v8h1.35v29h1.35v9h1.35v15h1.35v11h1.35v16h1.35v0V941z"/><path fill="#860a98" d="M318 941V792h1.35v18h1.35v1h1.35v-2h1.35v9h1.35v-29h1.35v2h1.35v-31h1.35v8h1.35v24h1.35v-14h1.35v-2h1.35v0h1.35v-1h1.35v19h1.35v-7h1.35v-14h1.35v4h1.35v7h1.35v-18h1.35v-21h1.35v26h1.35v4h1.35v-12h1.35v-1h1.35v14h1.35v-10h1.35v11h1.35v2h1.35v1h1.35v14h1.35v-4h1.35v6h1.35v-5h1.35v-7h1.35v-2h1.35v8h1.35v-20h1.35v10h1.35v-17h1.35v28h1.35v-16h1.35v6h1.35v-25h1.35v16h1.35v-2h1.35v23h1.35v-24h1.35v2h1.35v24h1.35v-21h1.35v-13h1.35v20h1.35v3h1.35v6h1.35v-17h1.35v-5h1.35v17h1.35v15h1.35v-9h1.35v-18h1.35v12h1.35v-44h1.35v11h1.35v7h1.35v38h1.35v-9h1.35v-21h1.35v37h1.35v-25h1.35v-4h1.35v18h1.35v-8h1.35v11h1.35v-12h1.35v-4h1.35v-32h1.35v40h1.35v13h1.35v-12h1.35v-17h1.35v27h1.35v-19h1.35v17h1.35v-8h1.35v3h1.35v0h1.35v-1h1.35v10h1.35v-20h1.35v-11h1.35v19h1.35v-27h1.35v24h1.35v-13h1.35v26h1.35v-29h1.35v13h1.35v-1h1.35v6h1.35v-6h1.35v5h1.35v-2h1.35v-1h1.35v-49h1.35v62h1.35v-9h1.35v-38h1.35v33h1.35v5h1.35v-8h1.35v0h1.35v2h1.35v-8h1.35v20h1.35v-39h1.35v11h1.35v28h1.35v-18h1.35v-1h1.35v35h1.35v-35h1.35v13h1.35v-17h1.35v28h1.35v-3h1.35v-31h1.35v6h1.35v14h1.35v12h1.35v-23h1.35v2h1.35v7h1.35v8h1.35v-7h1.35v-7h1.35v1h1.35v9h1.35v-17h1.35v30h1.35v-14h1.35v-22h1.35v-2h1.35v18h1.35v13h1.35v-34h1.35v16h1.35v-11h1.35v20h1.35v-11h1.35v7h1.35v10h1.35v-14h1.35v25h1.35v-6h1.35v-10h1.35v-28h1.35v4h1.35v8h1.35v-6h1.35v38h1.35v-12h1.35v-39h1.35v54h1.35v-52h1.35v21h1.35v-7h1.35v0h1.35v8h1.35v-4h1.35v15h1.35v3h1.35v-7h1.35v0h1.35v3h1.35v1h1.35v14h1.35v-19h1.35v2h1.35v13h1.35v7h1.35v-31h1.35v20h1.35v-11h1.35v-2h1.35v9h1.35v7h1.35v-21h1.35v-11h1.35v38h1.35v-31h1.35v27h1.35v-9h1.35v-7h1.35v4h1.35v11h1.35v-19h1.35v-9h1.35v25h1.35v-22h1.35v-13h1.35v13h1.35v10h1.35v-26h1.35v18h1.35v31h1.35v-17h1.35v10h1.35v-8h1.35v-2h1.35v-13h1.35v7h1.35v-12h1.35v12h1.35v15h1.35v-42h1.35v16h1.35v6h1.35v-5h1.35v9h1.35v6h1.35v-9h1.35v-34h1.35v40h1.35v1h1.35v-27h1.35v36h1.35v-17h1.35v-1h1.35v0h1.35v3h1.35v9h1.35v-26h1.35v25h1.35v-2h1.35v5h1.35v-6h1.35v-6h1.35v8h1.35v-7h1.35v-12h1.35v15h1.35v-44h1.35v20h1.35v31h1.35v-11h1.35v4h1.35v20h1.35v-15h1.35v-22h1.35v1h1.35v1h1.35v29h1.35v-13h1.35v-8h1.35v14h1.35v-15h1.35v11h1.35v-11h1.35v1h1.35v-3h1.35v-7h1.35v-12h1.35v39h1.35v-12h1.35v3h1.35v11h1.35v5h1.35v-8h1.35v-19h1.35v4h1.35v4h1.35v9h1.35v8h1.35v-14h1.35v-9h1.35v28h1.35v-7h1.35v1h1.35v-14h1.35v-26h1.35v32h1.35v0h1.35v-26h1.35v7h1.35v8h1.35v0h1.35v13h1.35v-7h1.35v-2h1.35v9h1.35v-21h1.35v13h1.35v-8h1.35v6h1.35v14h1.35v12h1.35v-20h1.35v-2h1.35v-23h1.35v21h1.35v6h1.35v11h1.35v-7h1.35v20h1.35v-37h1.35v26h1.35v-11h1.35v11h1.35v-34h1.35v25h1.35v-6h1.35v9h1.35v2h1.35v-8h1.35v0h1.35v23h1.35v-27h1.35v-57h1.35v40h1.35v12h1.35v16h1.35v-12h1.35v0h1.35v10h1.35v-19h1.35v-2h1.35v19h1.35v-12h1.35v4h1.35v34h1.35v-10h1.35v-22h1.35v1h1.35v2h1.35v-5h1.35v10h1.35v-14h1.35v-7h1.35v-2h1.35v18h1.35v-6h1.35v18h1.35v-21h1.35v-5h1.35v23h1.35v-6h1.35v-9h1.35v1h1.35v10h1.35v-31h1.35v20h1.35v0h1.35v14h1.35v-2h1.35v-16h1.35v10h1.35v2h1.35v-14h1.35v21h1.35v-33h1.35v20h1.35v8h1.35v-20h1.35v18h1.35v-18h1.35v23h1.35v-3h1.35v4h1.35v-16h1.35v-2h1.35v12h1.35v19h1.35v-69h1.35v24h1.35v26h1.35v-18h1.35v14h1.35v-10h1.35v0h1.35v1h1.35v-11h1.35v21h1.35v-5h1.35v11h1.35v1h1.35v-14h1.35v9h1.35v5h1.35v-4h1.35v-22h1.35v1h1.35v11h1.35v4h1.35v-24h1.35v21h1.35v1h1.35v7h1.35v-26h1.35v-15h1.35v19h1.35v17h1.35v9h1.35v2h1.35v-10h1.35v19h1.35v-25h1.35v38h1.35v-31h1.35v-8h1.35v1h1.35v16h1.35v-26h1.35v26h1.35v-14h1.35v19h1.35v-10h1.35v12h1.35v-36h1.35v21h1.35v-4h1.35v13h1.35v-1h1.35v-21h1.35v9h1.35v-12h1.35v16h1.35v1h1.35v-10h1.35v14h1.35v0h1.35v-6h1.35v17h1.35v-32h1.35v19h1.35v-15h1.35v13h1.35v-21h1.35v19h1.35v-1h1.35v-16h1.35v4h1.35v13h1.35v-3h1.35v-16h1.35v19h1.35v-15h1.35v10h1.35v-11h1.35v16h1.35v-11h1.35v-19h1.35v39h1.35v-22h1.35v32h1.35v-32h1.35v-2h1.35v16h1.35v-26h1.35v25h1.35v1h1.35v16h1.35v-27h1.35v-14h1.35v25h1.35v6h1.35v-15h1.35v-19h1.35v37h1.35v-13h1.35v2h1.35v3h1.35v3h1.35v0h1.35v-7h1.35v-19h1.35v2h1.35v-2h1.35v23h1.35v-19h1.35v-21h1.35v36h1.35v-3h1.35v18h1.35v-17h1.35v-22h1.35v15h1.35v-32h1.35v26h1.35v9h1.35v0h1.35v-13h1.35v-4h1.35v33h1.35v-11h1.35v-3h1.35v16h1.35v-3h1.35v-7h1.35v-8h1.35v14h1.35v-30h1.35v10h1.35v24h1.35v-10h1.35v5h1.35v8h1.35v-29h1.35v2h1.35v2h1.35v-2h1.35v-15h1.35v47h1.35v-24h1.35v17h1.35v-4h1.35v-16h1.35v3h1.35v16h1.35v-3h1.35v-5h1.35v-4h1.35v15h1.35v-7h1.35v-19h1.35v10h1.35v-5h1.35v30h1.35v-60h1.35v22h1.35v9h1.35v0h1.35v9h1.35v-17h1.35v-7h1.35v10h1.35v17h1.35v-11h1.35v3h1.35v1h1.35v-3h1.35v-9h1.35v-1h1.35v5h1.35v5h1.35v10h1.35v-11h1.35v-4h1.35v6h1.35v-9h1.35v-12h1.35v22h1.35v-11h1.35v24h1.35v-21h1.35v14h1.35v-17h1.35v-28h1.35v45h1.35v7h1.35v-9h1.35v13h1.35v-24h1.35v4h1.35v12h1.35v-30h1.35v-2h1.35v25h1.35v-7h1.35v-13h1.35v18h1.35v8h1.35v3h1.35v10h1.35v-22h1.35v9h1.35v-10h1.35v8h1.35v-3h1.35v2h1.35v-4h1.35v-12h1.35v10h1.35v-8h1.35v-1h1.35v9h1.35v3h1.35v2h1.35v-16h1.35v23h1.35v1h1.35v-3h1.35v-11h1.35v-4h1.35v3h1.35v7h1.35v-2h1.35v5h1.35v-19h1.35v18h1.35v-23h1.35v18h1.35v-2h1.35v9h1.35v-12h1.35v-5h1.35v7h1.35v3h1.35v-26h1.35v38h1.35v-4h1.35v-7h1.35v4h1.35v-4h1.35v20h1.35v-14h1.35v18h1.35v-41h1.35v1h1.35v4h1.35v-4h1.35v6h1.35v5h1.35v-14h1.35v-1h1.35v14h1.35v2h1.35v-10h1.35v7h1.35v-9h1.35v5h1.35v-2h1.35v13h1.35v-4h1.35v-11h1.35v22h1.35v7h1.35v-13h1.35v3h1.35v-15h1.35v18h1.35v-15h1.35v8h1.35v-12h1.35v10h1.35v-38h1.35v47h1.35v-21h1.35v15h1.35v-12h1.35v17h1.35v2h1.35v-23h1.35v0h1.35v7h1.35v7h1.35v10h1.35v-17h1.35v-3h1.35v35h1.35v-23h1.35v-14h1.35v-4h1.35v15h1.35v-18h1.35v-10h1.35v29h1.35v12h1.35v-2h1.35v-8h1.35v2h1.35v-10h1.35v11h1.35v2h1.35v-15h1.35v10h1.35v-9h1.35v-13h1.35v21h1.35v-5h1.35v-17h1.35v7h1.35v15h1.35v-3h1.35v-12h1.35v7h1.35v7h1.35v0h1.35v17h1.35v-15h1.35v6h1.35v-19h1.35v8h1.35v13h1.35v-3h1.35v1h1.35v1h1.35v-10h1.35v-22h1.35v4h1.35v12h1.35v10h1.35v-14h1.35v7h1.35v15h1.35v-7h1.35v-33h1.35v22h1.35v18h1.35v-9h1.35v19h1.35v-11h1.35v-21h1.35v5h1.35v5h1.35v14h1.35v-7h1.35v-6h1.35v-13h1.35v6h1.35v8h1.35v7h1.35v-12h1.35v14h1.35v-30h1.35v4h1.35v15h1.35v3h1.35v1h1.35v11h1.35v-20h1.35v-3h1.35v4h1.35v6h1.35v2h1.35v-8h1.35v-14h1.35v23h1.35v18h1.35v-21h1.35v-46h1.35v41h1.35v-18h1.35v34h1.35v-46h1.35v30h1.35v2h1.35v2h1.35v-5h1.35v5h1.35v-5h1.35v11h1.35v-14h1.35v6h1.35v2h1.35v-12h1.35v8h1.35v3h1.35v5h1.35v-11h1.35v0h1.35v-11h1.35v10h1.35v-11h1.35v19h1.35v-1h1.35v3h1.35v4h1.35v-9h1.35v10h1.35v-7h1.35v-10h1.35v4h1.35v-18h1.35v24h1.35v17h1.35v-21h1.35v-32h1.35v21h1.35v23h1.35v-5h1.35v2h1.35v-26h1.35v10h1.35v3h1.35v7h1.35v10h1.35v-6h1.35v-25h1.35v24h1.35v-16h1.35v-15h1.35v31h1.35v-16h1.35v-6h1.35v19h1.35v-21h1.35v8h1.35v7h1.35v5h1.35v-23h1.35v24h1.35v8h1.35v-22h1.35v27h1.35v-31h1.35v8h1.35v16h1.35v-17h1.35v-55h1.35v46h1.35v7h1.35v1h1.35v7h1.35v16h1.35v-13h1.35v1h1.35v-1h1.35v18h1.35v-33h1.35v19h1.35v-38h1.35v30h1.35v7h1.35v-18h1.35v26h1.35v-17h1.35v4h1.35v-43h1.35v46h1.35v-14h1.35v21h1.35v-1h1.35v8h1.35v-32h1.35v10h1.35v10h1.35v7h1.35v-23h1.35v7h1.35v1h1.35v20h1.35v-3h1.35v-7h1.35v14h1.35v-17h1.35v1h1.35v-14h1.35v22h1.35v2h1.35v-10h1.35v6h1.35v4h1.35v-17h1.35v-1h1.35v-5h1.35v7h1.35v1h1.35v0h1.35v10h1.35v-7h1.35v-8h1.35v-3h1.35v9h1.35v14h1.35v-15h1.35v17h1.35v1h1.35v-9h1.35v5h1.35v-10h1.35v9h1.35v-1h1.35v-7h1.35v21h1.35v-11h1.35v-15h1.35v7h1.35v4h1.35v14h1.35v1h1.35v-20h1.35v15h1.35v-21h1.35v15h1.35v6h1.35v-32h1.35v32h1.35v-9h1.35v-22h1.35v19h1.35v2h1.35v-9h1.35v13h1.35v-2h1.35v3h1.35v-9h1.35v5h1.35v-15h1.35v12h1.35v0h1.35v-12h1.35v4h1.35v16h1.35v-25h1.35v1h1.35v17h1.35v-18h1.35v-23h1.35v34h1.35v2h1.35v-1h1.35v0h1.35v-6h1.35v20h1.35v-20h1.35v-4h1.35v11h1.35v3h1.35v10h1.35v-4h1.35v-23h1.35v21h1.35v-36h1.35v21h1.35v7h1.35v-6h1.35v-19h1.35v24h1.35v15h1.35v-21h1.35v5h1.35v-11h1.35v8h1.35v-10h1.35v-6h1.35v9h1.35v17h1.35v-14h1.35v2h1.35v-9h1.35v-1h1.35v-10h1.35v21h1.35v-2h1.35v29h1.35v-25h1.35v-20h1.35v6h1.35v20h1.35v1h1.35v-20h1.35v7h1.35v7h1.35v8h1.35v-15h1.35v5h1.35v-10h1.35v15h1.35v-17h1.35v16h1.35v-4h1.35v18h1.35v-14h1.35v8h1.35v15h1.35v-11h1.35v-14h1.35v7h1.35v-2h1.35v12h1.35v-49h1.35v31h1.35v8h1.35v-3h1.35v3h1.35v-35h1.35v9h1.35v40h1.35v-24h1.35v6h1.35v-18h1.35v34h1.35v-28h1.35v21h1.35v-14h1.35v9h1.35v3h1.35v6h1.35v-18h1.35v21h1.35v-4h1.35v-12h1.35v18h1.35v-28h1.35v6h1.35v-13h1.35v22h1.35v-11h1.35v3h1.35v20h1.35v-9h1.35v-1h1.35v11h1.35v-19h1.35v16h1.35v-14h1.35v-12h1.35v15h1.35v0h1.35v-14h1.35v7h1.35v-5h1.35v19h1.35v-2h1.35v3h1.35v-15h1.35v12h1.35v-1h1.35v-25h1.35v42h1.35v-11h1.35v-6h1.35v-10h1.35v2h1.35v11h1.35v-4h1.35v1h1.35v-16h1.35v49h1.35v-5h1.35v-1h1.35v-20h1.35v-6h1.35v-16h1.35v-1h1.35v13h1.35v-9h1.35v-29h1.35v14h1.35v6h1.35v5h1.35v14h1.35v-7h1.35v-18h1.35v11h1.35v8h1.35v-14h1.35v15h1.35v-8h1.35v-12h1.35v16h1.35v10h1.35v-16h1.35v2h1.35v-9h1.35v-8h1.35v28h1.35v-11h1.35v1h1.35v19h1.35v-13h1.35v9h1.35v-7h1.35v3h1.35v6h1.35v-12h1.35v9h1.35v-5h1.35v-6h1.35v-2h1.35v0h1.35v26h1.35v-28h1.35v-1h1.35v15h1.35v-9h1.35v-1h1.35v12h1.35v9h1.35v-32h1.35v28h1.35v-19h1.35v8h1.35v54h1.35v-32h1.35v-34h1.35v34h1.35v6h1.35v16h1.35v-10h1.35v-16h1.35v13h1.35v-20h1.35v32h1.35v-13h1.35v35h1.35v10h1.35v14h1.35v11h1.35v16h1.35v0V941z"/><path fill="#ae108a" d="M318 941V874h1.35v4h1.35v-11h1.35v10h1.35v-11h1.35v-70h1.35v9h1.35v-41h1.35v10h1.35v43h1.35v-39h1.35v0h1.35v3h1.35v-1h1.35v36h1.35v0h1.35v-23h1.35v1h1.35v23h1.35v-17h1.35v-46h1.35v29h1.35v-4h1.35v-9h1.35v-1h1.35v11h1.35v0h1.35v11h1.35v18h1.35v-27h1.35v38h1.35v-6h1.35v12h1.35v-27h1.35v-11h1.35v0h1.35v28h1.35v-40h1.35v14h1.35v-21h1.35v36h1.35v-14h1.35v-8h1.35v-5h1.35v18h1.35v4h1.35v7h1.35v-33h1.35v15h1.35v43h1.35v-53h1.35v-4h1.35v8h1.35v32h1.35v0h1.35v-21h1.35v-19h1.35v38h1.35v4h1.35v-2h1.35v-21h1.35v-4h1.35v-17h1.35v-18h1.35v6h1.35v69h1.35v-37h1.35v-13h1.35v44h1.35v-29h1.35v-15h1.35v29h1.35v-6h1.35v13h1.35v-23h1.35v-8h1.35v-19h1.35v51h1.35v18h1.35v-33h1.35v-24h1.35v61h1.35v-56h1.35v23h1.35v-11h1.35v22h1.35v-11h1.35v-12h1.35v36h1.35v-32h1.35v-25h1.35v21h1.35v5h1.35v8h1.35v-5h1.35v11h1.35v-36h1.35v32h1.35v-7h1.35v-3h1.35v14h1.35v-8h1.35v14h1.35v-22h1.35v-34h1.35v75h1.35v-32h1.35v-50h1.35v35h1.35v3h1.35v12h1.35v-13h1.35v-3h1.35v-11h1.35v29h1.35v-2h1.35v-35h1.35v54h1.35v-21h1.35v-19h1.35v57h1.35v-54h1.35v14h1.35v-20h1.35v55h1.35v-6h1.35v-56h1.35v24h1.35v-7h1.35v23h1.35v-35h1.35v16h1.35v18h1.35v-9h1.35v5h1.35v-26h1.35v18h1.35v15h1.35v-37h1.35v40h1.35v-27h1.35v-23h1.35v-1h1.35v33h1.35v9h1.35v-10h1.35v-23h1.35v-9h1.35v17h1.35v-5h1.35v11h1.35v13h1.35v-9h1.35v36h1.35v-4h1.35v-39h1.35v-19h1.35v-4h1.35v25h1.35v20h1.35v0h1.35v-6h1.35v-25h1.35v56h1.35v-76h1.35v20h1.35v-8h1.35v9h1.35v4h1.35v8h1.35v2h1.35v2h1.35v-4h1.35v11h1.35v-13h1.35v10h1.35v43h1.35v-55h1.35v26h1.35v19h1.35v-2h1.35v-55h1.35v31h1.35v-20h1.35v18h1.35v3h1.35v12h1.35v-42h1.35v-13h1.35v60h1.35v-4h1.35v-3h1.35v-27h1.35v7h1.35v-13h1.35v22h1.35v-22h1.35v-12h1.35v29h1.35v-21h1.35v-22h1.35v17h1.35v8h1.35v-6h1.35v27h1.35v1h1.35v2h1.35v2h1.35v8h1.35v-25h1.35v-17h1.35v31h1.35v-34h1.35v19h1.35v25h1.35v-52h1.35v15h1.35v-3h1.35v13h1.35v10h1.35v-9h1.35v-12h1.35v-1h1.35v28h1.35v-20h1.35v-20h1.35v70h1.35v-34h1.35v-22h1.35v20h1.35v-10h1.35v19h1.35v-23h1.35v20h1.35v-10h1.35v-4h1.35v-6h1.35v-5h1.35v9h1.35v-1h1.35v-8h1.35v4h1.35v-16h1.35v5h1.35v41h1.35v-35h1.35v24h1.35v20h1.35v-28h1.35v-21h1.35v0h1.35v19h1.35v16h1.35v40h1.35v-4h1.35v-17h1.35v-46h1.35v12h1.35v-20h1.35v25h1.35v-22h1.35v12h1.35v-34h1.35v40h1.35v-13h1.35v28h1.35v-10h1.35v15h1.35v-25h1.35v-20h1.35v7h1.35v6h1.35v23h1.35v6h1.35v-16h1.35v-24h1.35v40h1.35v-11h1.35v15h1.35v1h1.35v-59h1.35v49h1.35v-6h1.35v-37h1.35v5h1.35v10h1.35v-2h1.35v37h1.35v-21h1.35v-10h1.35v9h1.35v-22h1.35v16h1.35v-9h1.35v12h1.35v8h1.35v25h1.35v-34h1.35v4h1.35v-31h1.35v26h1.35v4h1.35v23h1.35v-17h1.35v40h1.35v-62h1.35v41h1.35v-15h1.35v1h1.35v-32h1.35v25h1.35v2h1.35v25h1.35v-10h1.35v0h1.35v3h1.35v7h1.35v-29h1.35v-44h1.35v57h1.35v-28h1.35v38h1.35v-17h1.35v-2h1.35v-1h1.35v-16h1.35v3h1.35v19h1.35v-18h1.35v-1h1.35v50h1.35v-2h1.35v-46h1.35v10h1.35v14h1.35v19h1.35v-17h1.35v-18h1.35v-20h1.35v1h1.35v42h1.35v-32h1.35v31h1.35v-15h1.35v-27h1.35v39h1.35v11h1.35v-5h1.35v-33h1.35v24h1.35v-44h1.35v28h1.35v-5h1.35v23h1.35v-13h1.35v-18h1.35v8h1.35v9h1.35v-15h1.35v26h1.35v-17h1.35v12h1.35v13h1.35v-41h1.35v27h1.35v-28h1.35v50h1.35v-2h1.35v-10h1.35v-31h1.35v0h1.35v23h1.35v30h1.35v-94h1.35v27h1.35v26h1.35v-14h1.35v27h1.35v-28h1.35v0h1.35v7h1.35v-4h1.35v23h1.35v1h1.35v3h1.35v17h1.35v-44h1.35v25h1.35v-6h1.35v2h1.35v-27h1.35v-4h1.35v13h1.35v28h1.35v-51h1.35v24h1.35v8h1.35v3h1.35v-31h1.35v-2h1.35v7h1.35v29h1.35v3h1.35v5h1.35v-19h1.35v43h1.35v-54h1.35v72h1.35v-32h1.35v-40h1.35v3h1.35v35h1.35v-44h1.35v36h1.35v0h1.35v-4h1.35v-13h1.35v29h1.35v-44h1.35v24h1.35v11h1.35v6h1.35v3h1.35v-44h1.35v31h1.35v-30h1.35v48h1.35v-34h1.35v31h1.35v-25h1.35v19h1.35v-24h1.35v27h1.35v-22h1.35v6h1.35v-23h1.35v23h1.35v-7h1.35v-5h1.35v12h1.35v-11h1.35v-17h1.35v53h1.35v-25h1.35v-33h1.35v24h1.35v-18h1.35v9h1.35v-11h1.35v15h1.35v-9h1.35v-22h1.35v52h1.35v-35h1.35v49h1.35v-40h1.35v-9h1.35v23h1.35v-31h1.35v47h1.35v-19h1.35v31h1.35v-48h1.35v-12h1.35v32h1.35v26h1.35v-30h1.35v-15h1.35v53h1.35v-19h1.35v-11h1.35v-13h1.35v2h1.35v25h1.35v-19h1.35v-28h1.35v2h1.35v-2h1.35v20h1.35v-21h1.35v-17h1.35v36h1.35v-1h1.35v36h1.35v-37h1.35v-25h1.35v26h1.35v-9h1.35v8h1.35v20h1.35v-10h1.35v-25h1.35v11h1.35v25h1.35v-3h1.35v21h1.35v-26h1.35v27h1.35v-36h1.35v-7h1.35v12h1.35v-19h1.35v13h1.35v19h1.35v-20h1.35v12h1.35v26h1.35v-50h1.35v22h1.35v-11h1.35v1h1.35v3h1.35v47h1.35v-58h1.35v40h1.35v-24h1.35v-17h1.35v18h1.35v15h1.35v12h1.35v2h1.35v-39h1.35v19h1.35v8h1.35v-40h1.35v11h1.35v-3h1.35v44h1.35v-27h1.35v-21h1.35v7h1.35v17h1.35v5h1.35v-23h1.35v-17h1.35v11h1.35v25h1.35v-2h1.35v8h1.35v-19h1.35v3h1.35v-19h1.35v-1h1.35v21h1.35v-10h1.35v11h1.35v5h1.35v9h1.35v9h1.35v-29h1.35v-22h1.35v19h1.35v8h1.35v35h1.35v-50h1.35v31h1.35v-36h1.35v2h1.35v22h1.35v34h1.35v-41h1.35v41h1.35v-49h1.35v25h1.35v16h1.35v-57h1.35v-4h1.35v27h1.35v-9h1.35v3h1.35v3h1.35v29h1.35v2h1.35v-6h1.35v-21h1.35v2h1.35v-9h1.35v18h1.35v-13h1.35v14h1.35v-5h1.35v-22h1.35v32h1.35v-29h1.35v-2h1.35v14h1.35v-7h1.35v15h1.35v-19h1.35v28h1.35v9h1.35v-1h1.35v-10h1.35v-23h1.35v-2h1.35v25h1.35v3h1.35v-8h1.35v-25h1.35v24h1.35v-28h1.35v33h1.35v-17h1.35v7h1.35v13h1.35v-21h1.35v22h1.35v-23h1.35v-21h1.35v37h1.35v-7h1.35v-7h1.35v4h1.35v-2h1.35v29h1.35v-2h1.35v17h1.35v-61h1.35v33h1.35v-28h1.35v-6h1.35v6h1.35v9h1.35v-17h1.35v37h1.35v-17h1.35v16h1.35v-30h1.35v7h1.35v-10h1.35v7h1.35v-1h1.35v22h1.35v-7h1.35v2h1.35v20h1.35v10h1.35v-36h1.35v3h1.35v-8h1.35v14h1.35v-14h1.35v15h1.35v-20h1.35v20h1.35v-50h1.35v63h1.35v-34h1.35v33h1.35v-34h1.35v46h1.35v8h1.35v-56h1.35v2h1.35v9h1.35v13h1.35v-3h1.35v-15h1.35v13h1.35v27h1.35v-31h1.35v3h1.35v-23h1.35v17h1.35v-20h1.35v-10h1.35v52h1.35v-12h1.35v6h1.35v8h1.35v-13h1.35v-11h1.35v14h1.35v10h1.35v-34h1.35v11h1.35v0h1.35v-15h1.35v14h1.35v34h1.35v-55h1.35v7h1.35v15h1.35v1h1.35v11h1.35v1h1.35v26h1.35v-15h1.35v-5h1.35v-17h1.35v31h1.35v-44h1.35v4h1.35v24h1.35v23h1.35v-21h1.35v-1h1.35v-13h1.35v-28h1.35v5h1.35v20h1.35v25h1.35v-35h1.35v1h1.35v26h1.35v-14h1.35v-36h1.35v22h1.35v36h1.35v-13h1.35v15h1.35v1h1.35v-42h1.35v17h1.35v9h1.35v9h1.35v-14h1.35v-4h1.35v-16h1.35v10h1.35v1h1.35v20h1.35v-13h1.35v32h1.35v-60h1.35v2h1.35v16h1.35v4h1.35v30h1.35v14h1.35v-51h1.35v-2h1.35v12h1.35v19h1.35v-7h1.35v-19h1.35v-18h1.35v31h1.35v34h1.35v-14h1.35v-43h1.35v33h1.35v-45h1.35v54h1.35v-68h1.35v45h1.35v-9h1.35v1h1.35v-4h1.35v8h1.35v-7h1.35v17h1.35v-21h1.35v24h1.35v-16h1.35v7h1.35v-11h1.35v19h1.35v23h1.35v-45h1.35v11h1.35v-21h1.35v32h1.35v-36h1.35v31h1.35v13h1.35v-4h1.35v-16h1.35v-7h1.35v16h1.35v-14h1.35v-6h1.35v4h1.35v-20h1.35v70h1.35v2h1.35v-56h1.35v-26h1.35v29h1.35v43h1.35v-15h1.35v-13h1.35v-31h1.35v12h1.35v16h1.35v-11h1.35v22h1.35v-2h1.35v-30h1.35v35h1.35v-30h1.35v-18h1.35v28h1.35v-13h1.35v-6h1.35v28h1.35v-30h1.35v4h1.35v8h1.35v23h1.35v-42h1.35v43h1.35v2h1.35v-9h1.35v15h1.35v-16h1.35v-21h1.35v35h1.35v-5h1.35v-82h1.35v42h1.35v9h1.35v2h1.35v20h1.35v11h1.35v-18h1.35v8h1.35v-5h1.35v34h1.35v-56h1.35v17h1.35v16h1.35v-24h1.35v26h1.35v-36h1.35v47h1.35v-36h1.35v3h1.35v-41h1.35v63h1.35v-31h1.35v19h1.35v4h1.35v26h1.35v-57h1.35v13h1.35v15h1.35v15h1.35v-13h1.35v-16h1.35v14h1.35v26h1.35v7h1.35v-33h1.35v32h1.35v-37h1.35v7h1.35v11h1.35v-9h1.35v1h1.35v4h1.35v20h1.35v-14h1.35v-32h1.35v14h1.35v-15h1.35v14h1.35v-7h1.35v35h1.35v-26h1.35v-4h1.35v-11h1.35v-1h1.35v7h1.35v14h1.35v-7h1.35v14h1.35v4h1.35v-18h1.35v16h1.35v3h1.35v14h1.35v-16h1.35v-18h1.35v44h1.35v-28h1.35v-22h1.35v4h1.35v29h1.35v5h1.35v1h1.35v-10h1.35v4h1.35v-8h1.35v5h1.35v12h1.35v-23h1.35v6h1.35v-6h1.35v-17h1.35v6h1.35v18h1.35v16h1.35v-16h1.35v-15h1.35v16h1.35v-6h1.35v-10h1.35v-15h1.35v15h1.35v16h1.35v-17h1.35v-11h1.35v23h1.35v-29h1.35v5h1.35v42h1.35v-46h1.35v-26h1.35v66h1.35v-24h1.35v-1h1.35v9h1.35v-17h1.35v21h1.35v-22h1.35v-7h1.35v40h1.35v-19h1.35v9h1.35v-11h1.35v-20h1.35v16h1.35v-34h1.35v24h1.35v32h1.35v-3h1.35v-49h1.35v22h1.35v37h1.35v-35h1.35v15h1.35v-26h1.35v7h1.35v-10h1.35v1h1.35v-1h1.35v33h1.35v-26h1.35v12h1.35v-20h1.35v11h1.35v-19h1.35v42h1.35v-26h1.35v54h1.35v-38h1.35v-28h1.35v17h1.35v13h1.35v0h1.35v-25h1.35v6h1.35v20h1.35v8h1.35v-13h1.35v0h1.35v-21h1.35v16h1.35v-18h1.35v46h1.35v1h1.35v-8h1.35v-18h1.35v2h1.35v34h1.35v-25h1.35v2h1.35v-12h1.35v17h1.35v16h1.35v-73h1.35v57h1.35v-11h1.35v7h1.35v-11h1.35v-37h1.35v23h1.35v53h1.35v-51h1.35v7h1.35v-7h1.35v34h1.35v-25h1.35v42h1.35v-34h1.35v-4h1.35v-2h1.35v5h1.35v-16h1.35v44h1.35v-25h1.35v1h1.35v4h1.35v-29h1.35v10h1.35v-8h1.35v42h1.35v-34h1.35v6h1.35v13h1.35v26h1.35v-34h1.35v10h1.35v-8h1.35v13h1.35v-21h1.35v-15h1.35v29h1.35v-13h1.35v-12h1.35v6h1.35v-7h1.35v19h1.35v23h1.35v2h1.35v-37h1.35v37h1.35v-5h1.35v-51h1.35v68h1.35v-18h1.35v-7h1.35v-24h1.35v0h1.35v37h1.35v-31h1.35v12h1.35v-25h1.35v95h1.35v-8h1.35v2h1.35v-30h1.35v-16h1.35v-21h1.35v12h1.35v-12h1.35v-14h1.35v-35h1.35v54h1.35v-33h1.35v16h1.35v26h1.35v-1h1.35v-47h1.35v19h1.35v0h1.35v-3h1.35v8h1.35v5h1.35v-28h1.35v30h1.35v8h1.35v-20h1.35v10h1.35v-25h1.35v17h1.35v2h1.35v2h1.35v-2h1.35v12h1.35v-15h1.35v29h1.35v-26h1.35v15h1.35v24h1.35v-45h1.35v42h1.35v-37h1.35v-8h1.35v2h1.35v29h1.35v61h1.35v1h1.35v-2h1.35v6h1.35v-1h1.35v9h1.35v3h1.35v3h1.35v-7h1.35v5h1.35v-1h1.35v-4h1.35v13h1.35v-3h1.35v-9h1.35v8h1.35v3h1.35v2h1.35v0h1.35v1h1.35v1h1.35v0h1.35v0h1.35v0h1.35v0h1.35v0h1.35v0h1.35v0h1.35v0h1.35v0V941z"/><path fill="#d81050" d="M318 941V872h1.35v4h1.35v-7h1.35v11h1.35v-8h1.35v-65h1.35v16h1.35v-34h1.35v-11h1.35v33h1.35v-6h1.35v2h1.35v-20h1.35v3h1.35v32h1.35v-1h1.35v-7h1.35v-1h1.35v17h1.35v-35h1.35v-21h1.35v7h1.35v18h1.35v-27h1.35v5h1.35v9h1.35v-10h1.35v15h1.35v15h1.35v-21h1.35v37h1.35v17h1.35v9h1.35v-23h1.35v-18h1.35v-18h1.35v42h1.35v-54h1.35v23h1.35v-25h1.35v21h1.35v14h1.35v0h1.35v-46h1.35v30h1.35v24h1.35v-8h1.35v-31h1.35v1h1.35v64h1.35v-40h1.35v-33h1.35v18h1.35v27h1.35v-3h1.35v-22h1.35v-13h1.35v52h1.35v12h1.35v-25h1.35v-2h1.35v-12h1.35v-28h1.35v-10h1.35v11h1.35v66h1.35v-43h1.35v-17h1.35v63h1.35v-16h1.35v-36h1.35v46h1.35v-40h1.35v33h1.35v-27h1.35v-17h1.35v-10h1.35v45h1.35v28h1.35v-31h1.35v-36h1.35v58h1.35v-46h1.35v25h1.35v-11h1.35v22h1.35v-14h1.35v-10h1.35v38h1.35v-57h1.35v-10h1.35v38h1.35v-9h1.35v3h1.35v-3h1.35v27h1.35v-54h1.35v44h1.35v-14h1.35v-1h1.35v10h1.35v1h1.35v14h1.35v-11h1.35v-53h1.35v75h1.35v-49h1.35v-36h1.35v30h1.35v7h1.35v10h1.35v-17h1.35v23h1.35v-24h1.35v31h1.35v-13h1.35v-32h1.35v63h1.35v-10h1.35v-48h1.35v73h1.35v-48h1.35v30h1.35v-54h1.35v60h1.35v0h1.35v-48h1.35v23h1.35v-24h1.35v40h1.35v-48h1.35v30h1.35v-14h1.35v4h1.35v12h1.35v-29h1.35v26h1.35v6h1.35v-40h1.35v60h1.35v-30h1.35v-34h1.35v-1h1.35v18h1.35v21h1.35v-3h1.35v-8h1.35v-27h1.35v16h1.35v-6h1.35v15h1.35v35h1.35v-25h1.35v40h1.35v-2h1.35v-36h1.35v-45h1.35v4h1.35v17h1.35v3h1.35v32h1.35v-21h1.35v-25h1.35v77h1.35v-93h1.35v21h1.35v-9h1.35v3h1.35v56h1.35v-20h1.35v-12h1.35v15h1.35v-7h1.35v20h1.35v-27h1.35v28h1.35v16h1.35v-54h1.35v44h1.35v-5h1.35v12h1.35v-54h1.35v31h1.35v-23h1.35v2h1.35v-2h1.35v41h1.35v-52h1.35v-16h1.35v59h1.35v13h1.35v3h1.35v-14h1.35v-24h1.35v15h1.35v-4h1.35v-20h1.35v-21h1.35v24h1.35v-18h1.35v-15h1.35v14h1.35v25h1.35v-14h1.35v16h1.35v20h1.35v-7h1.35v-21h1.35v33h1.35v-17h1.35v-28h1.35v25h1.35v-38h1.35v17h1.35v35h1.35v-67h1.35v58h1.35v-36h1.35v10h1.35v25h1.35v-22h1.35v15h1.35v-44h1.35v45h1.35v-19h1.35v-27h1.35v63h1.35v-43h1.35v-2h1.35v38h1.35v-10h1.35v12h1.35v-20h1.35v22h1.35v-30h1.35v14h1.35v-18h1.35v-5h1.35v7h1.35v10h1.35v-26h1.35v9h1.35v13h1.35v3h1.35v40h1.35v-48h1.35v40h1.35v3h1.35v-44h1.35v-22h1.35v30h1.35v-5h1.35v15h1.35v40h1.35v-3h1.35v-13h1.35v-54h1.35v55h1.35v-42h1.35v15h1.35v-27h1.35v4h1.35v-26h1.35v46h1.35v-2h1.35v13h1.35v-15h1.35v41h1.35v-47h1.35v-15h1.35v18h1.35v6h1.35v3h1.35v14h1.35v-28h1.35v-14h1.35v57h1.35v-32h1.35v41h1.35v-27h1.35v-56h1.35v66h1.35v-11h1.35v-43h1.35v15h1.35v-6h1.35v24h1.35v13h1.35v-18h1.35v-5h1.35v8h1.35v-32h1.35v27h1.35v-8h1.35v11h1.35v-4h1.35v40h1.35v-45h1.35v1h1.35v-27h1.35v32h1.35v1h1.35v37h1.35v-17h1.35v35h1.35v-75h1.35v45h1.35v-22h1.35v6h1.35v-41h1.35v54h1.35v-32h1.35v42h1.35v1h1.35v-13h1.35v2h1.35v15h1.35v-40h1.35v-42h1.35v61h1.35v-31h1.35v37h1.35v-22h1.35v8h1.35v-6h1.35v-28h1.35v13h1.35v26h1.35v-27h1.35v25h1.35v41h1.35v-14h1.35v-18h1.35v-21h1.35v0h1.35v28h1.35v0h1.35v-44h1.35v-4h1.35v-3h1.35v37h1.35v-24h1.35v30h1.35v-22h1.35v-17h1.35v45h1.35v12h1.35v-18h1.35v-15h1.35v12h1.35v-49h1.35v28h1.35v-8h1.35v40h1.35v-8h1.35v-36h1.35v30h1.35v9h1.35v-39h1.35v28h1.35v-7h1.35v-8h1.35v9h1.35v-17h1.35v40h1.35v-50h1.35v55h1.35v1h1.35v-2h1.35v-47h1.35v4h1.35v20h1.35v35h1.35v-97h1.35v35h1.35v16h1.35v-21h1.35v30h1.35v-20h1.35v-7h1.35v18h1.35v-19h1.35v37h1.35v-7h1.35v9h1.35v29h1.35v-58h1.35v20h1.35v13h1.35v2h1.35v-29h1.35v-22h1.35v46h1.35v5h1.35v-41h1.35v3h1.35v3h1.35v36h1.35v-59h1.35v7h1.35v-1h1.35v37h1.35v-9h1.35v6h1.35v-19h1.35v64h1.35v-47h1.35v59h1.35v-34h1.35v-46h1.35v27h1.35v28h1.35v-63h1.35v34h1.35v15h1.35v15h1.35v-41h1.35v46h1.35v-71h1.35v47h1.35v-2h1.35v13h1.35v-25h1.35v-17h1.35v20h1.35v-25h1.35v56h1.35v-37h1.35v13h1.35v-15h1.35v41h1.35v-49h1.35v31h1.35v-41h1.35v28h1.35v-14h1.35v-4h1.35v17h1.35v11h1.35v-6h1.35v-36h1.35v-1h1.35v41h1.35v-20h1.35v-28h1.35v19h1.35v-8h1.35v7h1.35v-13h1.35v15h1.35v-10h1.35v-18h1.35v63h1.35v-47h1.35v78h1.35v-63h1.35v-16h1.35v38h1.35v-44h1.35v61h1.35v-6h1.35v23h1.35v-39h1.35v-44h1.35v43h1.35v13h1.35v-40h1.35v2h1.35v44h1.35v-4h1.35v-27h1.35v9h1.35v19h1.35v11h1.35v-20h1.35v-47h1.35v-1h1.35v32h1.35v-3h1.35v-16h1.35v-26h1.35v57h1.35v-18h1.35v31h1.35v-20h1.35v-42h1.35v14h1.35v-5h1.35v31h1.35v-11h1.35v5h1.35v-26h1.35v-6h1.35v63h1.35v-30h1.35v30h1.35v-10h1.35v20h1.35v-20h1.35v-33h1.35v9h1.35v-25h1.35v11h1.35v35h1.35v-23h1.35v24h1.35v30h1.35v-74h1.35v23h1.35v7h1.35v9h1.35v1h1.35v18h1.35v-43h1.35v23h1.35v-14h1.35v-15h1.35v13h1.35v19h1.35v24h1.35v-9h1.35v-30h1.35v26h1.35v-6h1.35v-22h1.35v6h1.35v3h1.35v33h1.35v-26h1.35v-37h1.35v10h1.35v-3h1.35v30h1.35v-36h1.35v-6h1.35v20h1.35v18h1.35v-17h1.35v15h1.35v-18h1.35v-2h1.35v-7h1.35v-5h1.35v4h1.35v11h1.35v7h1.35v0h1.35v20h1.35v16h1.35v-34h1.35v-32h1.35v33h1.35v-25h1.35v66h1.35v-28h1.35v12h1.35v-37h1.35v-42h1.35v48h1.35v45h1.35v-42h1.35v22h1.35v-37h1.35v41h1.35v5h1.35v-37h1.35v-23h1.35v24h1.35v-11h1.35v42h1.35v-34h1.35v36h1.35v1h1.35v-16h1.35v8h1.35v5h1.35v-31h1.35v0h1.35v1h1.35v7h1.35v9h1.35v-26h1.35v27h1.35v-30h1.35v-2h1.35v11h1.35v25h1.35v-21h1.35v-13h1.35v41h1.35v16h1.35v-20h1.35v9h1.35v-36h1.35v-4h1.35v19h1.35v10h1.35v13h1.35v-51h1.35v33h1.35v-41h1.35v36h1.35v10h1.35v-8h1.35v-23h1.35v10h1.35v6h1.35v-8h1.35v-28h1.35v50h1.35v-15h1.35v-8h1.35v12h1.35v-4h1.35v35h1.35v1h1.35v14h1.35v-77h1.35v15h1.35v31h1.35v-44h1.35v13h1.35v-1h1.35v-12h1.35v49h1.35v-17h1.35v-16h1.35v-13h1.35v14h1.35v-8h1.35v-5h1.35v9h1.35v15h1.35v-4h1.35v13h1.35v12h1.35v24h1.35v-50h1.35v-2h1.35v-8h1.35v26h1.35v-35h1.35v40h1.35v-34h1.35v16h1.35v-52h1.35v62h1.35v-2h1.35v-10h1.35v-19h1.35v20h1.35v36h1.35v-55h1.35v-4h1.35v20h1.35v15h1.35v20h1.35v-32h1.35v-15h1.35v58h1.35v-51h1.35v21h1.35v-13h1.35v-14h1.35v-12h1.35v-9h1.35v59h1.35v-9h1.35v17h1.35v-2h1.35v-8h1.35v-27h1.35v26h1.35v1h1.35v-39h1.35v34h1.35v-25h1.35v-24h1.35v28h1.35v13h1.35v-39h1.35v7h1.35v29h1.35v15h1.35v-12h1.35v-3h1.35v37h1.35v-23h1.35v5h1.35v-32h1.35v38h1.35v-49h1.35v20h1.35v24h1.35v5h1.35v-4h1.35v-5h1.35v-26h1.35v-26h1.35v4h1.35v10h1.35v44h1.35v-47h1.35v20h1.35v27h1.35v-27h1.35v-38h1.35v20h1.35v27h1.35v-7h1.35v33h1.35v6h1.35v-63h1.35v12h1.35v23h1.35v14h1.35v-14h1.35v-24h1.35v-2h1.35v9h1.35v12h1.35v6h1.35v-8h1.35v29h1.35v-51h1.35v-12h1.35v32h1.35v-12h1.35v30h1.35v16h1.35v-44h1.35v-12h1.35v11h1.35v28h1.35v-1h1.35v-32h1.35v-18h1.35v36h1.35v34h1.35v-19h1.35v-54h1.35v18h1.35v5h1.35v40h1.35v-59h1.35v23h1.35v-7h1.35v6h1.35v6h1.35v5h1.35v-19h1.35v17h1.35v-18h1.35v21h1.35v-14h1.35v15h1.35v-18h1.35v0h1.35v39h1.35v-46h1.35v15h1.35v-17h1.35v27h1.35v-34h1.35v42h1.35v14h1.35v-16h1.35v0h1.35v-15h1.35v38h1.35v-24h1.35v-24h1.35v10h1.35v-31h1.35v50h1.35v35h1.35v-67h1.35v-29h1.35v20h1.35v55h1.35v-32h1.35v20h1.35v-39h1.35v1h1.35v26h1.35v18h1.35v-4h1.35v-11h1.35v-30h1.35v14h1.35v-16h1.35v-16h1.35v30h1.35v-14h1.35v-8h1.35v44h1.35v-44h1.35v4h1.35v21h1.35v12h1.35v-25h1.35v19h1.35v12h1.35v-6h1.35v16h1.35v-38h1.35v-4h1.35v34h1.35v7h1.35v-96h1.35v46h1.35v4h1.35v2h1.35v15h1.35v20h1.35v-24h1.35v-1h1.35v-2h1.35v43h1.35v-55h1.35v18h1.35v-4h1.35v-4h1.35v3h1.35v-15h1.35v46h1.35v-18h1.35v-9h1.35v-51h1.35v77h1.35v-41h1.35v40h1.35v-4h1.35v19h1.35v-64h1.35v13h1.35v40h1.35v-1h1.35v-22h1.35v-15h1.35v6h1.35v50h1.35v-1h1.35v-11h1.35v25h1.35v-49h1.35v8h1.35v8h1.35v4h1.35v1h1.35v-27h1.35v47h1.35v-17h1.35v-33h1.35v6h1.35v-20h1.35v30h1.35v-17h1.35v37h1.35v-33h1.35v-6h1.35v-9h1.35v-3h1.35v10h1.35v31h1.35v-35h1.35v31h1.35v3h1.35v-18h1.35v11h1.35v5h1.35v13h1.35v-2h1.35v-27h1.35v46h1.35v-31h1.35v-15h1.35v-8h1.35v46h1.35v-14h1.35v12h1.35v-23h1.35v30h1.35v-58h1.35v36h1.35v19h1.35v-22h1.35v16h1.35v-24h1.35v-17h1.35v12h1.35v-2h1.35v27h1.35v-23h1.35v5h1.35v14h1.35v-8h1.35v-20h1.35v-18h1.35v28h1.35v-1h1.35v-23h1.35v4h1.35v27h1.35v-39h1.35v24h1.35v16h1.35v-16h1.35v-45h1.35v66h1.35v-6h1.35v-5h1.35v21h1.35v-37h1.35v25h1.35v-31h1.35v-9h1.35v51h1.35v-7h1.35v13h1.35v-8h1.35v-50h1.35v17h1.35v-34h1.35v25h1.35v11h1.35v18h1.35v-46h1.35v57h1.35v19h1.35v-39h1.35v-8h1.35v0h1.35v-10h1.35v-14h1.35v-4h1.35v6h1.35v43h1.35v-38h1.35v9h1.35v2h1.35v-17h1.35v-10h1.35v47h1.35v-22h1.35v45h1.35v-50h1.35v-19h1.35v32h1.35v22h1.35v-4h1.35v-44h1.35v11h1.35v35h1.35v-11h1.35v-18h1.35v29h1.35v-45h1.35v17h1.35v-20h1.35v62h1.35v-19h1.35v11h1.35v-30h1.35v24h1.35v13h1.35v6h1.35v-42h1.35v6h1.35v5h1.35v20h1.35v-71h1.35v71h1.35v-32h1.35v22h1.35v-25h1.35v-30h1.35v49h1.35v37h1.35v-50h1.35v-7h1.35v-18h1.35v60h1.35v-54h1.35v50h1.35v-11h1.35v-24h1.35v17h1.35v17h1.35v-30h1.35v28h1.35v-24h1.35v9h1.35v27h1.35v-55h1.35v3h1.35v8h1.35v39h1.35v-48h1.35v18h1.35v10h1.35v4h1.35v0h1.35v-10h1.35v-17h1.35v47h1.35v-47h1.35v24h1.35v2h1.35v6h1.35v-40h1.35v6h1.35v-1h1.35v40h1.35v-16h1.35v-12h1.35v-11h1.35v36h1.35v10h1.35v-60h1.35v77h1.35v-37h1.35v-16h1.35v1h1.35v-1h1.35v13h1.35v-1h1.35v4h1.35v-33h1.35v97h1.35v-5h1.35v0h1.35v-43h1.35v11h1.35v-13h1.35v-28h1.35v32h1.35v-30h1.35v-41h1.35v51h1.35v-23h1.35v8h1.35v16h1.35v-4h1.35v-11h1.35v5h1.35v9h1.35v-26h1.35v15h1.35v15h1.35v-11h1.35v-15h1.35v15h1.35v-4h1.35v5h1.35v-31h1.35v14h1.35v4h1.35v-10h1.35v23h1.35v14h1.35v-13h1.35v16h1.35v-20h1.35v4h1.35v24h1.35v-40h1.35v25h1.35v-24h1.35v11h1.35v-20h1.35v26h1.35v47h1.35v-3h1.35v21h1.35v14h1.35v1h1.35v5h1.35v5h1.35v1h1.35v0h1.35v0h1.35v0h1.35v0h1.35v0h1.35v0h1.35v0h1.35v0h1.35v0h1.35v0h1.35v0h1.35v0h1.35v0h1.35v0h1.35v0h1.35v0h1.35v0h1.35v0h1.35v0h1.35v0h1.35v0h1.35v0V941z"/><path fill="#fa1226" d="M318 941V879h1.35v5h1.35v-11h1.35v9h1.35v-1h1.35v-51h1.35v7h1.35v-63h1.35v39h1.35v3h1.35v-3h1.35v-4h1.35v-18h1.35v43h1.35v15h1.35v-16h1.35v-10h1.35v-11h1.35v42h1.35v-34h1.35v-47h1.35v18h1.35v-2h1.35v19h1.35v-29h1.35v18h1.35v-16h1.35v45h1.35v10h1.35v-18h1.35v37h1.35v-10h1.35v10h1.35v-20h1.35v-8h1.35v-26h1.35v49h1.35v-59h1.35v5h1.35v-17h1.35v70h1.35v-19h1.35v-13h1.35v-28h1.35v19h1.35v16h1.35v3h1.35v-44h1.35v4h1.35v71h1.35v-60h1.35v-2h1.35v-2h1.35v41h1.35v18h1.35v-68h1.35v0h1.35v58h1.35v2h1.35v-14h1.35v2h1.35v-31h1.35v-12h1.35v-23h1.35v8h1.35v94h1.35v-32h1.35v-39h1.35v61h1.35v-23h1.35v-49h1.35v68h1.35v-35h1.35v28h1.35v-34h1.35v2h1.35v-7h1.35v29h1.35v23h1.35v-30h1.35v-42h1.35v76h1.35v-71h1.35v42h1.35v-13h1.35v32h1.35v-32h1.35v-19h1.35v52h1.35v-42h1.35v-31h1.35v26h1.35v-1h1.35v14h1.35v10h1.35v-1h1.35v-29h1.35v49h1.35v-15h1.35v-22h1.35v34h1.35v2h1.35v1h1.35v-36h1.35v-44h1.35v93h1.35v-28h1.35v-71h1.35v34h1.35v18h1.35v25h1.35v-13h1.35v5h1.35v-1h1.35v11h1.35v-15h1.35v-44h1.35v70h1.35v-13h1.35v-34h1.35v60h1.35v-66h1.35v37h1.35v-40h1.35v61h1.35v-16h1.35v-36h1.35v6h1.35v5h1.35v35h1.35v-66h1.35v46h1.35v7h1.35v-3h1.35v4h1.35v-37h1.35v-5h1.35v36h1.35v-53h1.35v83h1.35v-53h1.35v-35h1.35v-1h1.35v52h1.35v-7h1.35v2h1.35v-15h1.35v-30h1.35v40h1.35v-2h1.35v1h1.35v37h1.35v-32h1.35v43h1.35v-15h1.35v-40h1.35v-40h1.35v19h1.35v1h1.35v20h1.35v33h1.35v-43h1.35v-15h1.35v65h1.35v-82h1.35v33h1.35v-10h1.35v-7h1.35v46h1.35v-26h1.35v24h1.35v-10h1.35v-2h1.35v16h1.35v-9h1.35v5h1.35v15h1.35v-45h1.35v39h1.35v11h1.35v10h1.35v-46h1.35v22h1.35v-25h1.35v9h1.35v14h1.35v3h1.35v-48h1.35v-8h1.35v75h1.35v-16h1.35v9h1.35v-11h1.35v-19h1.35v26h1.35v-15h1.35v-4h1.35v-32h1.35v45h1.35v-54h1.35v-12h1.35v21h1.35v13h1.35v12h1.35v-5h1.35v32h1.35v-8h1.35v13h1.35v-13h1.35v-14h1.35v-34h1.35v40h1.35v-45h1.35v16h1.35v48h1.35v-80h1.35v56h1.35v-24h1.35v11h1.35v4h1.35v-7h1.35v14h1.35v-48h1.35v54h1.35v-16h1.35v-40h1.35v84h1.35v-56h1.35v-11h1.35v54h1.35v-33h1.35v38h1.35v-38h1.35v29h1.35v-15h1.35v18h1.35v-47h1.35v2h1.35v2h1.35v19h1.35v-33h1.35v12h1.35v-5h1.35v18h1.35v34h1.35v-56h1.35v26h1.35v53h1.35v-34h1.35v-44h1.35v-12h1.35v36h1.35v7h1.35v35h1.35v-5h1.35v3h1.35v-61h1.35v32h1.35v-28h1.35v25h1.35v-35h1.35v31h1.35v-37h1.35v54h1.35v-30h1.35v33h1.35v-11h1.35v37h1.35v-52h1.35v-27h1.35v24h1.35v19h1.35v5h1.35v4h1.35v-28h1.35v-22h1.35v67h1.35v-31h1.35v29h1.35v-14h1.35v-70h1.35v56h1.35v23h1.35v-57h1.35v12h1.35v7h1.35v7h1.35v45h1.35v-32h1.35v-5h1.35v-22h1.35v-18h1.35v33h1.35v-12h1.35v18h1.35v2h1.35v34h1.35v-37h1.35v-16h1.35v-29h1.35v50h1.35v1h1.35v30h1.35v-15h1.35v28h1.35v-76h1.35v57h1.35v-35h1.35v1h1.35v-36h1.35v63h1.35v-34h1.35v41h1.35v-6h1.35v4h1.35v2h1.35v11h1.35v-25h1.35v-27h1.35v4h1.35v-24h1.35v58h1.35v-1h1.35v-9h1.35v-14h1.35v-9h1.35v-11h1.35v27h1.35v-38h1.35v13h1.35v59h1.35v-2h1.35v-54h1.35v21h1.35v-16h1.35v15h1.35v21h1.35v-29h1.35v-34h1.35v-6h1.35v49h1.35v-36h1.35v37h1.35v-18h1.35v-25h1.35v55h1.35v-11h1.35v6h1.35v-24h1.35v18h1.35v-54h1.35v35h1.35v-8h1.35v26h1.35v-14h1.35v-27h1.35v19h1.35v33h1.35v-48h1.35v27h1.35v10h1.35v0h1.35v-8h1.35v-21h1.35v40h1.35v-55h1.35v29h1.35v33h1.35v-8h1.35v-43h1.35v9h1.35v14h1.35v49h1.35v-118h1.35v25h1.35v46h1.35v-39h1.35v39h1.35v-32h1.35v17h1.35v16h1.35v-17h1.35v19h1.35v13h1.35v5h1.35v9h1.35v-59h1.35v50h1.35v-2h1.35v-10h1.35v-46h1.35v-4h1.35v41h1.35v14h1.35v-37h1.35v14h1.35v-10h1.35v31h1.35v-59h1.35v1h1.35v7h1.35v47h1.35v11h1.35v-21h1.35v12h1.35v29h1.35v-54h1.35v71h1.35v-44h1.35v-43h1.35v8h1.35v45h1.35v-65h1.35v56h1.35v-7h1.35v16h1.35v-14h1.35v25h1.35v-75h1.35v44h1.35v25h1.35v-12h1.35v15h1.35v-43h1.35v17h1.35v-44h1.35v59h1.35v-16h1.35v8h1.35v2h1.35v5h1.35v-31h1.35v27h1.35v-23h1.35v17h1.35v-36h1.35v21h1.35v14h1.35v11h1.35v-15h1.35v-21h1.35v-19h1.35v60h1.35v-34h1.35v-5h1.35v-11h1.35v-12h1.35v19h1.35v-9h1.35v30h1.35v-36h1.35v-16h1.35v50h1.35v-35h1.35v80h1.35v-69h1.35v-3h1.35v38h1.35v-56h1.35v75h1.35v-21h1.35v29h1.35v-46h1.35v-39h1.35v32h1.35v39h1.35v-24h1.35v-53h1.35v80h1.35v-4h1.35v-37h1.35v30h1.35v7h1.35v5h1.35v-17h1.35v-54h1.35v12h1.35v10h1.35v16h1.35v-33h1.35v-21h1.35v64h1.35v-33h1.35v62h1.35v-35h1.35v-42h1.35v28h1.35v-14h1.35v5h1.35v5h1.35v-6h1.35v-20h1.35v0h1.35v67h1.35v-14h1.35v17h1.35v-12h1.35v21h1.35v-39h1.35v5h1.35v-8h1.35v-40h1.35v11h1.35v53h1.35v-37h1.35v28h1.35v28h1.35v-40h1.35v9h1.35v-2h1.35v-17h1.35v24h1.35v23h1.35v-57h1.35v33h1.35v-9h1.35v-33h1.35v21h1.35v35h1.35v12h1.35v4h1.35v-39h1.35v16h1.35v-6h1.35v-14h1.35v-11h1.35v18h1.35v38h1.35v-42h1.35v-33h1.35v16h1.35v-13h1.35v44h1.35v-36h1.35v-19h1.35v18h1.35v29h1.35v-15h1.35v12h1.35v-26h1.35v-3h1.35v-2h1.35v5h1.35v20h1.35v-19h1.35v15h1.35v5h1.35v11h1.35v28h1.35v-42h1.35v-29h1.35v11h1.35v15h1.35v33h1.35v-50h1.35v34h1.35v-35h1.35v-1h1.35v36h1.35v25h1.35v-14h1.35v19h1.35v-70h1.35v48h1.35v1h1.35v-61h1.35v-2h1.35v46h1.35v-18h1.35v21h1.35v-22h1.35v33h1.35v0h1.35v6h1.35v-4h1.35v7h1.35v-9h1.35v-4h1.35v-3h1.35v-20h1.35v39h1.35v-48h1.35v46h1.35v-34h1.35v-22h1.35v6h1.35v39h1.35v2h1.35v-54h1.35v45h1.35v7h1.35v9h1.35v-3h1.35v-47h1.35v1h1.35v42h1.35v-20h1.35v22h1.35v-35h1.35v27h1.35v-44h1.35v39h1.35v4h1.35v-3h1.35v-26h1.35v15h1.35v22h1.35v-25h1.35v-40h1.35v64h1.35v-23h1.35v4h1.35v-10h1.35v0h1.35v54h1.35v-10h1.35v13h1.35v-52h1.35v14h1.35v-40h1.35v-3h1.35v7h1.35v13h1.35v12h1.35v32h1.35v-34h1.35v-12h1.35v-17h1.35v20h1.35v-24h1.35v9h1.35v11h1.35v33h1.35v-18h1.35v13h1.35v6h1.35v23h1.35v-59h1.35v18h1.35v-20h1.35v46h1.35v-23h1.35v13h1.35v-45h1.35v37h1.35v-67h1.35v75h1.35v-20h1.35v12h1.35v-37h1.35v43h1.35v6h1.35v-51h1.35v-5h1.35v48h1.35v2h1.35v8h1.35v-37h1.35v3h1.35v59h1.35v-28h1.35v-18h1.35v-17h1.35v6h1.35v-20h1.35v-18h1.35v58h1.35v15h1.35v16h1.35v-18h1.35v-18h1.35v-30h1.35v38h1.35v13h1.35v-34h1.35v25h1.35v-12h1.35v-47h1.35v36h1.35v28h1.35v-64h1.35v12h1.35v21h1.35v10h1.35v-16h1.35v25h1.35v19h1.35v-9h1.35v0h1.35v-16h1.35v23h1.35v-56h1.35v25h1.35v27h1.35v17h1.35v-13h1.35v-22h1.35v2h1.35v-50h1.35v6h1.35v8h1.35v56h1.35v-58h1.35v11h1.35v52h1.35v-32h1.35v-46h1.35v41h1.35v45h1.35v-61h1.35v59h1.35v-1h1.35v-38h1.35v0h1.35v16h1.35v13h1.35v-17h1.35v-22h1.35v-11h1.35v31h1.35v-6h1.35v28h1.35v-16h1.35v15h1.35v-69h1.35v7h1.35v16h1.35v-1h1.35v37h1.35v31h1.35v-78h1.35v0h1.35v44h1.35v4h1.35v2h1.35v-29h1.35v-28h1.35v50h1.35v30h1.35v-7h1.35v-63h1.35v-2h1.35v-3h1.35v53h1.35v-60h1.35v44h1.35v-31h1.35v8h1.35v32h1.35v-8h1.35v-10h1.35v-7h1.35v-6h1.35v15h1.35v11h1.35v-7h1.35v-25h1.35v11h1.35v14h1.35v-29h1.35v12h1.35v-24h1.35v25h1.35v-26h1.35v27h1.35v42h1.35v-14h1.35v-10h1.35v-21h1.35v40h1.35v-21h1.35v-26h1.35v-2h1.35v-19h1.35v73h1.35v16h1.35v-42h1.35v-61h1.35v35h1.35v49h1.35v-14h1.35v-12h1.35v-32h1.35v5h1.35v39h1.35v4h1.35v20h1.35v-16h1.35v-41h1.35v31h1.35v-38h1.35v-18h1.35v29h1.35v-19h1.35v-7h1.35v59h1.35v-58h1.35v4h1.35v32h1.35v6h1.35v-23h1.35v49h1.35v4h1.35v-35h1.35v26h1.35v-26h1.35v-26h1.35v58h1.35v-21h1.35v-91h1.35v39h1.35v11h1.35v13h1.35v31h1.35v-1h1.35v-34h1.35v23h1.35v3h1.35v16h1.35v-53h1.35v37h1.35v13h1.35v-43h1.35v22h1.35v-32h1.35v59h1.35v-27h1.35v8h1.35v-52h1.35v59h1.35v-42h1.35v35h1.35v8h1.35v24h1.35v-74h1.35v14h1.35v44h1.35v4h1.35v-20h1.35v-14h1.35v12h1.35v35h1.35v-11h1.35v-7h1.35v24h1.35v-60h1.35v30h1.35v7h1.35v5h1.35v-21h1.35v9h1.35v32h1.35v-23h1.35v-33h1.35v3h1.35v-23h1.35v17h1.35v25h1.35v12h1.35v-19h1.35v-24h1.35v-10h1.35v0h1.35v20h1.35v20h1.35v-7h1.35v12h1.35v13h1.35v-14h1.35v-17h1.35v26h1.35v7h1.35v2h1.35v-42h1.35v59h1.35v-29h1.35v-30h1.35v-7h1.35v43h1.35v-11h1.35v28h1.35v-30h1.35v28h1.35v-64h1.35v54h1.35v-3h1.35v-25h1.35v42h1.35v-37h1.35v-13h1.35v10h1.35v10h1.35v-1h1.35v-1h1.35v0h1.35v17h1.35v-12h1.35v-24h1.35v12h1.35v-5h1.35v19h1.35v-39h1.35v31h1.35v8h1.35v-29h1.35v-9h1.35v47h1.35v-53h1.35v-26h1.35v74h1.35v-18h1.35v-18h1.35v23h1.35v-16h1.35v38h1.35v-60h1.35v0h1.35v23h1.35v31h1.35v0h1.35v12h1.35v-67h1.35v32h1.35v-45h1.35v18h1.35v17h1.35v38h1.35v-75h1.35v68h1.35v19h1.35v-41h1.35v2h1.35v-39h1.35v27h1.35v-27h1.35v7h1.35v-2h1.35v61h1.35v-37h1.35v2h1.35v-2h1.35v-30h1.35v7h1.35v28h1.35v-27h1.35v65h1.35v-36h1.35v-44h1.35v2h1.35v41h1.35v-5h1.35v-18h1.35v21h1.35v30h1.35v-42h1.35v5h1.35v28h1.35v-54h1.35v40h1.35v-40h1.35v76h1.35v-34h1.35v18h1.35v-25h1.35v11h1.35v35h1.35v-26h1.35v-25h1.35v23h1.35v-15h1.35v26h1.35v-52h1.35v50h1.35v-34h1.35v13h1.35v-4h1.35v-53h1.35v38h1.35v60h1.35v-49h1.35v-17h1.35v-7h1.35v57h1.35v-45h1.35v50h1.35v-47h1.35v-7h1.35v32h1.35v-6h1.35v-15h1.35v41h1.35v-34h1.35v8h1.35v30h1.35v-66h1.35v7h1.35v11h1.35v41h1.35v-47h1.35v23h1.35v6h1.35v20h1.35v-7h1.35v-18h1.35v-13h1.35v42h1.35v-55h1.35v-6h1.35v37h1.35v10h1.35v-52h1.35v7h1.35v-2h1.35v45h1.35v6h1.35v8h1.35v-45h1.35v43h1.35v1h1.35v-66h1.35v83h1.35v-28h1.35v-30h1.35v22h1.35v-12h1.35v25h1.35v-17h1.35v-15h1.35v-25h1.35v96h1.35v-2h1.35v-1h1.35v-35h1.35v-2h1.35v3h1.35v-21h1.35v20h1.35v-23h1.35v-58h1.35v72h1.35v-22h1.35v23h1.35v-6h1.35v9h1.35v-40h1.35v-4h1.35v8h1.35v-13h1.35v19h1.35v10h1.35v-29h1.35v34h1.35v-6h1.35v6h1.35v-8h1.35v-6h1.35v4h1.35v8h1.35v-14h1.35v-4h1.35v32h1.35v-39h1.35v29h1.35v-14h1.35v20h1.35v15h1.35v-49h1.35v28h1.35v-4h1.35v-18h1.35v-1h1.35v10h1.35v50h1.35v-1h1.35v15h1.35v13h1.35v3h1.35v1h1.35v5h1.35v1h1.35v0h1.35v0h1.35v0h1.35v0h1.35v0h1.35v0h1.35v0h1.35v0h1.35v0h1.35v0h1.35v0h1.35v0h1.35v0h1.35v0h1.35v0h1.35v0h1.35v0h1.35v0h1.35v0h1.35v0h1.35v0h1.35v0V941z"/><path fill="#ff3a1c" d="M318 941V881h1.35v6h1.35v-11h1.35v6h1.35v4h1.35v-52h1.35v6h1.35v-1h1.35v-25h1.35v32h1.35v18h1.35v-22h1.35v14h1.35v20h1.35v-27h1.35v-3h1.35v24h1.35v0h1.35v-13h1.35v-15h1.35v-43h1.35v71h1.35v2h1.35v-38h1.35v-16h1.35v40h1.35v9h1.35v-8h1.35v-1h1.35v-19h1.35v19h1.35v1h1.35v10h1.35v-34h1.35v46h1.35v-40h1.35v11h1.35v-16h1.35v-36h1.35v69h1.35v8h1.35v-43h1.35v-15h1.35v51h1.35v-50h1.35v44h1.35v-6h1.35v-41h1.35v56h1.35v6h1.35v-25h1.35v-57h1.35v44h1.35v41h1.35v-16h1.35v-27h1.35v-25h1.35v64h1.35v6h1.35v-4h1.35v-6h1.35v-9h1.35v-40h1.35v44h1.35v-23h1.35v25h1.35v9h1.35v-12h1.35v18h1.35v-12h1.35v-27h1.35v15h1.35v15h1.35v-1h1.35v-35h1.35v26h1.35v-39h1.35v47h1.35v7h1.35v-8h1.35v-5h1.35v13h1.35v-56h1.35v55h1.35v0h1.35v2h1.35v-28h1.35v25h1.35v0h1.35v-43h1.35v-23h1.35v45h1.35v18h1.35v-11h1.35v-16h1.35v31h1.35v-32h1.35v24h1.35v2h1.35v2h1.35v5h1.35v-16h1.35v15h1.35v-6h1.35v-18h1.35v27h1.35v-6h1.35v-9h1.35v-14h1.35v8h1.35v-8h1.35v22h1.35v-28h1.35v-4h1.35v39h1.35v-31h1.35v15h1.35v4h1.35v11h1.35v-12h1.35v15h1.35v-12h1.35v-24h1.35v12h1.35v24h1.35v-1h1.35v-3h1.35v-10h1.35v1h1.35v8h1.35v-25h1.35v28h1.35v-4h1.35v1h1.35v-7h1.35v-21h1.35v24h1.35v0h1.35v-6h1.35v5h1.35v-7h1.35v-51h1.35v48h1.35v5h1.35v-29h1.35v33h1.35v3h1.35v-3h1.35v-15h1.35v-27h1.35v50h1.35v1h1.35v-13h1.35v12h1.35v1h1.35v-11h1.35v-24h1.35v12h1.35v12h1.35v4h1.35v1h1.35v-2h1.35v-32h1.35v37h1.35v-25h1.35v-2h1.35v-4h1.35v16h1.35v-7h1.35v-26h1.35v44h1.35v-1h1.35v-55h1.35v36h1.35v10h1.35v1h1.35v15h1.35v-34h1.35v-9h1.35v36h1.35v6h1.35v-47h1.35v46h1.35v-31h1.35v-14h1.35v39h1.35v-14h1.35v9h1.35v-7h1.35v-6h1.35v3h1.35v15h1.35v-9h1.35v14h1.35v-1h1.35v-10h1.35v-7h1.35v-48h1.35v57h1.35v-12h1.35v0h1.35v-43h1.35v30h1.35v29h1.35v-19h1.35v23h1.35v0h1.35v-12h1.35v15h1.35v-38h1.35v14h1.35v-4h1.35v-12h1.35v21h1.35v17h1.35v-1h1.35v3h1.35v-11h1.35v-1h1.35v3h1.35v-21h1.35v20h1.35v-7h1.35v15h1.35v-10h1.35v-7h1.35v17h1.35v-12h1.35v7h1.35v-5h1.35v8h1.35v-16h1.35v8h1.35v8h1.35v-20h1.35v6h1.35v12h1.35v-9h1.35v14h1.35v-37h1.35v17h1.35v-3h1.35v4h1.35v9h1.35v5h1.35v-5h1.35v-35h1.35v35h1.35v1h1.35v-55h1.35v51h1.35v6h1.35v-22h1.35v40h1.35v-1h1.35v-9h1.35v-5h1.35v-12h1.35v5h1.35v6h1.35v-5h1.35v7h1.35v-30h1.35v8h1.35v-15h1.35v14h1.35v21h1.35v-8h1.35v2h1.35v-2h1.35v-10h1.35v12h1.35v-17h1.35v26h1.35v-34h1.35v-2h1.35v30h1.35v7h1.35v6h1.35v3h1.35v-52h1.35v46h1.35v-6h1.35v-27h1.35v11h1.35v13h1.35v-36h1.35v40h1.35v0h1.35v3h1.35v3h1.35v-99h1.35v76h1.35v0h1.35v16h1.35v-54h1.35v57h1.35v-3h1.35v-14h1.35v-44h1.35v36h1.35v-11h1.35v35h1.35v-3h1.35v0h1.35v-25h1.35v10h1.35v4h1.35v-7h1.35v14h1.35v5h1.35v1h1.35v-20h1.35v4h1.35v7h1.35v6h1.35v-5h1.35v-2h1.35v-27h1.35v4h1.35v-4h1.35v37h1.35v-13h1.35v4h1.35v7h1.35v-19h1.35v10h1.35v-27h1.35v11h1.35v19h1.35v6h1.35v6h1.35v-31h1.35v-10h1.35v34h1.35v10h1.35v-30h1.35v7h1.35v-3h1.35v10h1.35v-30h1.35v33h1.35v-25h1.35v22h1.35v-11h1.35v-6h1.35v26h1.35v-24h1.35v-13h1.35v35h1.35v-3h1.35v1h1.35v-30h1.35v5h1.35v18h1.35v-57h1.35v65h1.35v-2h1.35v-35h1.35v28h1.35v6h1.35v3h1.35v4h1.35v-7h1.35v-24h1.35v-19h1.35v47h1.35v4h1.35v-10h1.35v-6h1.35v19h1.35v0h1.35v-9h1.35v-67h1.35v50h1.35v13h1.35v5h1.35v-2h1.35v4h1.35v-1h1.35v0h1.35v-2h1.35v-23h1.35v23h1.35v5h1.35v-4h1.35v-5h1.35v10h1.35v-26h1.35v21h1.35v-12h1.35v-8h1.35v15h1.35v5h1.35v-12h1.35v-11h1.35v32h1.35v-2h1.35v-79h1.35v55h1.35v10h1.35v16h1.35v-5h1.35v6h1.35v-6h1.35v-8h1.35v-47h1.35v61h1.35v-16h1.35v10h1.35v-1h1.35v-13h1.35v-46h1.35v61h1.35v-1h1.35v5h1.35v-3h1.35v-2h1.35v-43h1.35v26h1.35v12h1.35v3h1.35v7h1.35v-3h1.35v-22h1.35v14h1.35v6h1.35v0h1.35v4h1.35v-9h1.35v-29h1.35v-7h1.35v36h1.35v-35h1.35v44h1.35v-10h1.35v3h1.35v2h1.35v-3h1.35v8h1.35v-25h1.35v15h1.35v2h1.35v-4h1.35v-3h1.35v6h1.35v-16h1.35v-10h1.35v-33h1.35v35h1.35v-1h1.35v6h1.35v-6h1.35v-23h1.35v57h1.35v-56h1.35v29h1.35v17h1.35v-13h1.35v18h1.35v5h1.35v2h1.35v-6h1.35v-12h1.35v5h1.35v-27h1.35v-9h1.35v26h1.35v-1h1.35v-13h1.35v27h1.35v11h1.35v2h1.35v-27h1.35v19h1.35v-29h1.35v-9h1.35v23h1.35v12h1.35v-7h1.35v-39h1.35v41h1.35v2h1.35v-13h1.35v19h1.35v-12h1.35v-27h1.35v31h1.35v-2h1.35v-27h1.35v4h1.35v-12h1.35v-15h1.35v52h1.35v1h1.35v8h1.35v-14h1.35v1h1.35v1h1.35v17h1.35v-48h1.35v38h1.35v-23h1.35v31h1.35v-15h1.35v-22h1.35v35h1.35v-8h1.35v-46h1.35v0h1.35v50h1.35v-19h1.35v7h1.35v-4h1.35v21h1.35v-24h1.35v6h1.35v14h1.35v1h1.35v6h1.35v-23h1.35v-1h1.35v8h1.35v19h1.35v-19h1.35v2h1.35v-41h1.35v38h1.35v-7h1.35v-7h1.35v0h1.35v16h1.35v10h1.35v-3h1.35v-95h1.35v93h1.35v-10h1.35v-8h1.35v-13h1.35v24h1.35v-13h1.35v12h1.35v-26h1.35v18h1.35v1h1.35v3h1.35v15h1.35v-14h1.35v16h1.35v-6h1.35v-10h1.35v-22h1.35v0h1.35v41h1.35v-64h1.35v45h1.35v-3h1.35v-12h1.35v2h1.35v6h1.35v24h1.35v-19h1.35v-8h1.35v-16h1.35v33h1.35v-45h1.35v23h1.35v18h1.35v-9h1.35v-31h1.35v25h1.35v26h1.35v-23h1.35v23h1.35v-40h1.35v21h1.35v11h1.35v2h1.35v7h1.35v-49h1.35v41h1.35v5h1.35v-29h1.35v-33h1.35v53h1.35v-6h1.35v-3h1.35v8h1.35v6h1.35v-16h1.35v21h1.35v-1h1.35v-12h1.35v18h1.35v-51h1.35v38h1.35v-13h1.35v-2h1.35v8h1.35v13h1.35v-21h1.35v15h1.35v-9h1.35v18h1.35v-7h1.35v-2h1.35v13h1.35v-22h1.35v-17h1.35v28h1.35v-6h1.35v10h1.35v-3h1.35v-17h1.35v10h1.35v18h1.35v-6h1.35v-43h1.35v23h1.35v9h1.35v-23h1.35v8h1.35v16h1.35v-51h1.35v64h1.35v-69h1.35v54h1.35v-29h1.35v7h1.35v-1h1.35v10h1.35v-30h1.35v51h1.35v-8h1.35v-35h1.35v51h1.35v-11h1.35v-42h1.35v39h1.35v-41h1.35v16h1.35v39h1.35v-1h1.35v-20h1.35v2h1.35v-84h1.35v93h1.35v7h1.35v0h1.35v-13h1.35v-31h1.35v46h1.35v-47h1.35v35h1.35v-3h1.35v6h1.35v-19h1.35v-14h1.35v30h1.35v12h1.35v-11h1.35v-29h1.35v25h1.35v9h1.35v-1h1.35v-33h1.35v38h1.35v-36h1.35v30h1.35v3h1.35v-24h1.35v15h1.35v-29h1.35v46h1.35v-41h1.35v12h1.35v-33h1.35v50h1.35v7h1.35v-4h1.35v-40h1.35v26h1.35v-14h1.35v37h1.35v-13h1.35v2h1.35v4h1.35v-35h1.35v6h1.35v18h1.35v-12h1.35v-25h1.35v36h1.35v10h1.35v5h1.35v-14h1.35v-11h1.35v20h1.35v-61h1.35v53h1.35v4h1.35v9h1.35v-26h1.35v17h1.35v-3h1.35v0h1.35v-38h1.35v35h1.35v1h1.35v2h1.35v-13h1.35v28h1.35v-18h1.35v18h1.35v-25h1.35v16h1.35v-19h1.35v30h1.35v-32h1.35v-17h1.35v35h1.35v13h1.35v-39h1.35v26h1.35v-20h1.35v-18h1.35v41h1.35v0h1.35v7h1.35v-9h1.35v11h1.35v-15h1.35v-25h1.35v35h1.35v-5h1.35v-35h1.35v7h1.35v23h1.35v7h1.35v-17h1.35v-27h1.35v5h1.35v17h1.35v22h1.35v-75h1.35v71h1.35v-1h1.35v8h1.35v-19h1.35v-3h1.35v21h1.35v-12h1.35v-26h1.35v38h1.35v2h1.35v-5h1.35v1h1.35v-14h1.35v11h1.35v-37h1.35v-6h1.35v-20h1.35v61h1.35v-33h1.35v18h1.35v18h1.35v-25h1.35v5h1.35v-41h1.35v65h1.35v-10h1.35v-35h1.35v32h1.35v-42h1.35v52h1.35v-5h1.35v-21h1.35v-83h1.35v75h1.35v6h1.35v13h1.35v-6h1.35v13h1.35v-1h1.35v17h1.35v-19h1.35v21h1.35v-6h1.35v-71h1.35v74h1.35v-24h1.35v-2h1.35v-44h1.35v-11h1.35v59h1.35v4h1.35v3h1.35v-36h1.35v52h1.35v-62h1.35v44h1.35v2h1.35v-15h1.35v1h1.35v25h1.35v-9h1.35v-23h1.35v3h1.35v26h1.35v-32h1.35v-47h1.35v44h1.35v26h1.35v-18h1.35v17h1.35v-36h1.35v42h1.35v-21h1.35v25h1.35v-48h1.35v19h1.35v-11h1.35v42h1.35v-13h1.35v0h1.35v-23h1.35v-2h1.35v37h1.35v-42h1.35v47h1.35v-32h1.35v29h1.35v-22h1.35v22h1.35v-19h1.35v-26h1.35v51h1.35v-43h1.35v3h1.35v27h1.35v3h1.35v-6h1.35v-24h1.35v39h1.35v-13h1.35v-19h1.35v10h1.35v16h1.35v-14h1.35v11h1.35v0h1.35v-12h1.35v-7h1.35v18h1.35v-2h1.35v-66h1.35v35h1.35v1h1.35v40h1.35v-5h1.35v-5h1.35v-10h1.35v11h1.35v-30h1.35v36h1.35v-24h1.35v28h1.35v5h1.35v-41h1.35v32h1.35v-25h1.35v22h1.35v-14h1.35v-12h1.35v27h1.35v7h1.35v-5h1.35v-42h1.35v31h1.35v10h1.35v12h1.35v-8h1.35v-23h1.35v24h1.35v-33h1.35v14h1.35v-15h1.35v14h1.35v-15h1.35v31h1.35v1h1.35v-24h1.35v16h1.35v-2h1.35v8h1.35v-7h1.35v4h1.35v-18h1.35v16h1.35v1h1.35v4h1.35v-18h1.35v-18h1.35v16h1.35v-47h1.35v64h1.35v7h1.35v-33h1.35v-17h1.35v55h1.35v-2h1.35v-4h1.35v-5h1.35v-16h1.35v20h1.35v-64h1.35v52h1.35v11h1.35v-7h1.35v14h1.35v-21h1.35v3h1.35v17h1.35v-45h1.35v15h1.35v31h1.35v-8h1.35v-31h1.35v-3h1.35v29h1.35v5h1.35v-4h1.35v-6h1.35v-52h1.35v44h1.35v-2h1.35v-19h1.35v33h1.35v-11h1.35v12h1.35v-9h1.35v-56h1.35v43h1.35v11h1.35v13h1.35v4h1.35v-14h1.35v-61h1.35v58h1.35v15h1.35v-18h1.35v12h1.35v5h1.35v-28h1.35v22h1.35v-4h1.35v-8h1.35v6h1.35v-18h1.35v5h1.35v11h1.35v10h1.35v-7h1.35v2h1.35v-33h1.35v43h1.35v-39h1.35v42h1.35v-10h1.35v1h1.35v1h1.35v-13h1.35v18h1.35v-12h1.35v-1h1.35v13h1.35v-37h1.35v6h1.35v24h1.35v-51h1.35v16h1.35v32h1.35v12h1.35v-5h1.35v-18h1.35v18h1.35v-17h1.35v-21h1.35v23h1.35v-21h1.35v43h1.35v-41h1.35v-13h1.35v31h1.35v-6h1.35v10h1.35v-14h1.35v1h1.35v-19h1.35v49h1.35v-9h1.35v14h1.35v-12h1.35v-10h1.35v-28h1.35v39h1.35v-18h1.35v-29h1.35v34h1.35v20h1.35v-41h1.35v-2h1.35v30h1.35v11h1.35v-24h1.35v21h1.35v-50h1.35v59h1.35v-6h1.35v-6h1.35v-2h1.35v-5h1.35v-24h1.35v-6h1.35v-14h1.35v56h1.35v-15h1.35v19h1.35v-28h1.35v47h1.35v0h1.35v-1h1.35v-27h1.35v0h1.35v-23h1.35v26h1.35v6h1.35v-9h1.35v-27h1.35v5h1.35v-32h1.35v51h1.35v-2h1.35v4h1.35v11h1.35v-5h1.35v-14h1.35v-1h1.35v5h1.35v-6h1.35v-54h1.35v68h1.35v3h1.35v-16h1.35v-36h1.35v49h1.35v0h1.35v-11h1.35v-9h1.35v17h1.35v-28h1.35v2h1.35v4h1.35v0h1.35v-13h1.35v37h1.35v-4h1.35v9h1.35v-8h1.35v-34h1.35v42h1.35v-8h1.35v13h1.35v10h1.35v-5h1.35v8h1.35v5h1.35v1h1.35v0h1.35v0h1.35v0h1.35v0h1.35v0h1.35v0h1.35v0h1.35v0h1.35v0h1.35v0h1.35v0h1.35v0h1.35v0h1.35v0h1.35v0h1.35v0h1.35v0h1.35v0h1.35v0h1.35v0h1.35v0h1.35v0h1.35v0h1.35v0V941z"/><path fill="#ff621e" d="M318 941V887h1.35v4h1.35v-11h1.35v7h1.35v-2h1.35v-27h1.35v-17h1.35v1h1.35v-11h1.35v24h1.35v17h1.35v-22h1.35v20h1.35v3h1.35v-18h1.35v14h1.35v13h1.35v-10h1.35v-11h1.35v-8h1.35v-8h1.35v20h1.35v19h1.35v-49h1.35v-13h1.35v52h1.35v2h1.35v-5h1.35v0h1.35v-40h1.35v30h1.35v11h1.35v-5h1.35v-14h1.35v31h1.35v-28h1.35v1h1.35v-54h1.35v22h1.35v36h1.35v23h1.35v-44h1.35v-18h1.35v58h1.35v-46h1.35v16h1.35v17h1.35v-46h1.35v60h1.35v7h1.35v-27h1.35v-60h1.35v50h1.35v29h1.35v-14h1.35v-10h1.35v-31h1.35v63h1.35v-5h1.35v-3h1.35v-2h1.35v-8h1.35v-26h1.35v26h1.35v-1h1.35v4h1.35v14h1.35v-18h1.35v16h1.35v1h1.35v-22h1.35v5h1.35v19h1.35v-6h1.35v-40h1.35v31h1.35v-40h1.35v46h1.35v10h1.35v-6h1.35v-6h1.35v15h1.35v-44h1.35v42h1.35v-12h1.35v5h1.35v-8h1.35v9h1.35v0h1.35v-33h1.35v-25h1.35v41h1.35v19h1.35v-33h1.35v-6h1.35v38h1.35v-39h1.35v32h1.35v-8h1.35v11h1.35v8h1.35v-17h1.35v6h1.35v-3h1.35v-18h1.35v32h1.35v-1h1.35v-15h1.35v-20h1.35v26h1.35v-28h1.35v30h1.35v-20h1.35v-11h1.35v30h1.35v-25h1.35v-2h1.35v11h1.35v18h1.35v-11h1.35v16h1.35v-16h1.35v-5h1.35v13h1.35v5h1.35v2h1.35v-3h1.35v-4h1.35v5h1.35v-3h1.35v-22h1.35v28h1.35v-2h1.35v2h1.35v-9h1.35v-23h1.35v28h1.35v4h1.35v-11h1.35v8h1.35v0h1.35v-73h1.35v59h1.35v7h1.35v-18h1.35v29h1.35v-7h1.35v0h1.35v-3h1.35v-22h1.35v23h1.35v12h1.35v-31h1.35v28h1.35v2h1.35v-6h1.35v-21h1.35v11h1.35v7h1.35v-6h1.35v2h1.35v-6h1.35v-27h1.35v41h1.35v-34h1.35v8h1.35v5h1.35v8h1.35v-5h1.35v-10h1.35v22h1.35v-3h1.35v-43h1.35v32h1.35v10h1.35v-3h1.35v16h1.35v-30h1.35v0h1.35v25h1.35v3h1.35v-55h1.35v46h1.35v-13h1.35v-13h1.35v32h1.35v-20h1.35v17h1.35v-12h1.35v-7h1.35v1h1.35v28h1.35v-12h1.35v2h1.35v-7h1.35v5h1.35v-7h1.35v-25h1.35v36h1.35v-24h1.35v12h1.35v-29h1.35v20h1.35v28h1.35v-42h1.35v35h1.35v7h1.35v-6h1.35v-5h1.35v-24h1.35v4h1.35v2h1.35v-13h1.35v13h1.35v26h1.35v-9h1.35v4h1.35v-1h1.35v-5h1.35v1h1.35v-58h1.35v64h1.35v-2h1.35v7h1.35v-10h1.35v2h1.35v7h1.35v-4h1.35v-2h1.35v6h1.35v-8h1.35v-8h1.35v-9h1.35v22h1.35v-25h1.35v21h1.35v3h1.35v-9h1.35v8h1.35v-26h1.35v11h1.35v1h1.35v0h1.35v11h1.35v4h1.35v0h1.35v-43h1.35v34h1.35v-4h1.35v-63h1.35v74h1.35v1h1.35v-23h1.35v35h1.35v-1h1.35v-8h1.35v-4h1.35v-11h1.35v-1h1.35v9h1.35v-1h1.35v3h1.35v-18h1.35v-1h1.35v-1h1.35v-12h1.35v32h1.35v-1h1.35v3h1.35v-4h1.35v-14h1.35v17h1.35v-20h1.35v27h1.35v-23h1.35v-13h1.35v34h1.35v-4h1.35v4h1.35v4h1.35v-27h1.35v17h1.35v-10h1.35v-14h1.35v17h1.35v3h1.35v-36h1.35v40h1.35v5h1.35v-1h1.35v3h1.35v-81h1.35v68h1.35v-22h1.35v33h1.35v-34h1.35v35h1.35v-3h1.35v-8h1.35v-51h1.35v48h1.35v-13h1.35v23h1.35v-1h1.35v4h1.35v-20h1.35v1h1.35v9h1.35v8h1.35v-5h1.35v5h1.35v-1h1.35v-11h1.35v-13h1.35v21h1.35v0h1.35v-4h1.35v-26h1.35v-17h1.35v6h1.35v-6h1.35v49h1.35v-8h1.35v2h1.35v1h1.35v-18h1.35v16h1.35v-5h1.35v-11h1.35v10h1.35v15h1.35v1h1.35v-30h1.35v7h1.35v16h1.35v10h1.35v-30h1.35v14h1.35v2h1.35v1h1.35v-34h1.35v44h1.35v-16h1.35v2h1.35v6h1.35v-15h1.35v28h1.35v-25h1.35v-4h1.35v18h1.35v-1h1.35v8h1.35v-34h1.35v2h1.35v14h1.35v-64h1.35v80h1.35v-11h1.35v-24h1.35v26h1.35v8h1.35v-14h1.35v18h1.35v-12h1.35v-17h1.35v-8h1.35v29h1.35v7h1.35v-1h1.35v-22h1.35v28h1.35v-10h1.35v6h1.35v-63h1.35v44h1.35v13h1.35v2h1.35v0h1.35v-10h1.35v12h1.35v-5h1.35v8h1.35v-46h1.35v31h1.35v11h1.35v1h1.35v2h1.35v-8h1.35v-19h1.35v21h1.35v-9h1.35v-7h1.35v19h1.35v-6h1.35v6h1.35v-20h1.35v25h1.35v0h1.35v-69h1.35v38h1.35v17h1.35v15h1.35v-5h1.35v4h1.35v0h1.35v-11h1.35v-41h1.35v47h1.35v-11h1.35v11h1.35v-2h1.35v-6h1.35v-15h1.35v25h1.35v3h1.35v-9h1.35v-3h1.35v9h1.35v-37h1.35v27h1.35v6h1.35v6h1.35v-1h1.35v1h1.35v-13h1.35v6h1.35v5h1.35v-1h1.35v7h1.35v-7h1.35v-26h1.35v-24h1.35v51h1.35v-31h1.35v32h1.35v-7h1.35v5h1.35v-2h1.35v4h1.35v-3h1.35v-17h1.35v14h1.35v3h1.35v0h1.35v-14h1.35v5h1.35v-10h1.35v4h1.35v-27h1.35v26h1.35v6h1.35v-21h1.35v10h1.35v-25h1.35v52h1.35v-48h1.35v24h1.35v19h1.35v-6h1.35v10h1.35v-4h1.35v-1h1.35v-2h1.35v-9h1.35v1h1.35v5h1.35v-25h1.35v23h1.35v-6h1.35v-17h1.35v29h1.35v8h1.35v0h1.35v-27h1.35v26h1.35v-25h1.35v-11h1.35v15h1.35v16h1.35v-5h1.35v-64h1.35v66h1.35v-8h1.35v-11h1.35v25h1.35v-6h1.35v-28h1.35v19h1.35v9h1.35v-33h1.35v7h1.35v-17h1.35v7h1.35v33h1.35v6h1.35v1h1.35v-8h1.35v-1h1.35v-1h1.35v3h1.35v-21h1.35v26h1.35v-16h1.35v24h1.35v-11h1.35v-37h1.35v45h1.35v-13h1.35v-45h1.35v14h1.35v42h1.35v-20h1.35v16h1.35v-7h1.35v14h1.35v-12h1.35v-4h1.35v11h1.35v2h1.35v3h1.35v-21h1.35v1h1.35v-2h1.35v23h1.35v-12h1.35v8h1.35v-57h1.35v46h1.35v-3h1.35v-18h1.35v-1h1.35v16h1.35v17h1.35v0h1.35v-65h1.35v62h1.35v-9h1.35v-9h1.35v-27h1.35v36h1.35v-1h1.35v9h1.35v-16h1.35v8h1.35v-5h1.35v10h1.35v8h1.35v-38h1.35v41h1.35v-12h1.35v-13h1.35v-5h1.35v-1h1.35v31h1.35v-57h1.35v36h1.35v-7h1.35v0h1.35v2h1.35v-1h1.35v22h1.35v-11h1.35v-10h1.35v-15h1.35v30h1.35v-25h1.35v10h1.35v6h1.35v-3h1.35v-23h1.35v6h1.35v26h1.35v-21h1.35v28h1.35v-39h1.35v11h1.35v33h1.35v-3h1.35v-5h1.35v-54h1.35v51h1.35v-3h1.35v-19h1.35v-31h1.35v39h1.35v16h1.35v-11h1.35v-4h1.35v3h1.35v-8h1.35v30h1.35v-2h1.35v-20h1.35v17h1.35v-39h1.35v36h1.35v-17h1.35v2h1.35v9h1.35v9h1.35v-26h1.35v14h1.35v-3h1.35v12h1.35v-16h1.35v10h1.35v15h1.35v-10h1.35v-29h1.35v31h1.35v-5h1.35v4h1.35v-2h1.35v-19h1.35v9h1.35v19h1.35v0h1.35v-29h1.35v10h1.35v12h1.35v-49h1.35v33h1.35v2h1.35v-45h1.35v62h1.35v-52h1.35v40h1.35v-20h1.35v-2h1.35v-19h1.35v34h1.35v-25h1.35v38h1.35v-16h1.35v-10h1.35v32h1.35v1h1.35v-39h1.35v26h1.35v-31h1.35v7h1.35v36h1.35v-3h1.35v-14h1.35v9h1.35v-60h1.35v63h1.35v0h1.35v7h1.35v-14h1.35v-24h1.35v39h1.35v-34h1.35v16h1.35v9h1.35v0h1.35v-8h1.35v-18h1.35v20h1.35v11h1.35v-4h1.35v-31h1.35v27h1.35v3h1.35v2h1.35v-19h1.35v21h1.35v-36h1.35v33h1.35v2h1.35v-20h1.35v16h1.35v-43h1.35v51h1.35v-29h1.35v12h1.35v-31h1.35v32h1.35v15h1.35v-3h1.35v-28h1.35v26h1.35v-9h1.35v16h1.35v-17h1.35v16h1.35v1h1.35v-23h1.35v-1h1.35v4h1.35v-4h1.35v-10h1.35v24h1.35v10h1.35v-1h1.35v-10h1.35v-29h1.35v25h1.35v-36h1.35v32h1.35v14h1.35v2h1.35v-29h1.35v21h1.35v-6h1.35v-1h1.35v-16h1.35v6h1.35v4h1.35v13h1.35v-13h1.35v27h1.35v-25h1.35v16h1.35v-10h1.35v12h1.35v-22h1.35v28h1.35v-45h1.35v15h1.35v26h1.35v7h1.35v-40h1.35v33h1.35v-27h1.35v-21h1.35v44h1.35v-3h1.35v7h1.35v-8h1.35v12h1.35v-17h1.35v-11h1.35v23h1.35v-6h1.35v-36h1.35v7h1.35v35h1.35v0h1.35v-21h1.35v-22h1.35v14h1.35v10h1.35v16h1.35v-62h1.35v63h1.35v-4h1.35v5h1.35v-13h1.35v-30h1.35v44h1.35v-6h1.35v-27h1.35v27h1.35v13h1.35v-6h1.35v0h1.35v-22h1.35v22h1.35v-51h1.35v7h1.35v-34h1.35v70h1.35v-54h1.35v39h1.35v24h1.35v-35h1.35v9h1.35v-46h1.35v70h1.35v-16h1.35v-37h1.35v46h1.35v-44h1.35v52h1.35v-10h1.35v-16h1.35v-69h1.35v67h1.35v4h1.35v8h1.35v-19h1.35v18h1.35v11h1.35v7h1.35v-15h1.35v18h1.35v-2h1.35v-47h1.35v44h1.35v-14h1.35v-6h1.35v-12h1.35v-38h1.35v49h1.35v8h1.35v3h1.35v-32h1.35v35h1.35v-42h1.35v34h1.35v-3h1.35v-10h1.35v-4h1.35v32h1.35v-9h1.35v-24h1.35v0h1.35v34h1.35v-27h1.35v-28h1.35v30h1.35v24h1.35v-38h1.35v25h1.35v-27h1.35v36h1.35v-55h1.35v64h1.35v-94h1.35v80h1.35v-32h1.35v37h1.35v-11h1.35v-9h1.35v-13h1.35v6h1.35v29h1.35v-30h1.35v25h1.35v-6h1.35v8h1.35v-23h1.35v32h1.35v-11h1.35v-33h1.35v43h1.35v-41h1.35v3h1.35v30h1.35v3h1.35v-4h1.35v-21h1.35v25h1.35v-7h1.35v-3h1.35v-3h1.35v11h1.35v-22h1.35v22h1.35v-3h1.35v-10h1.35v-16h1.35v30h1.35v0h1.35v-50h1.35v11h1.35v-13h1.35v56h1.35v-8h1.35v3h1.35v-3h1.35v-6h1.35v-2h1.35v18h1.35v-30h1.35v34h1.35v-3h1.35v-27h1.35v21h1.35v-27h1.35v28h1.35v-30h1.35v2h1.35v25h1.35v6h1.35v-10h1.35v-12h1.35v11h1.35v14h1.35v0h1.35v-5h1.35v-9h1.35v9h1.35v-31h1.35v14h1.35v3h1.35v1h1.35v-27h1.35v36h1.35v4h1.35v-11h1.35v2h1.35v-6h1.35v16h1.35v-6h1.35v-2h1.35v-26h1.35v26h1.35v-3h1.35v6h1.35v-26h1.35v-8h1.35v20h1.35v-53h1.35v73h1.35v-6h1.35v-5h1.35v-28h1.35v41h1.35v2h1.35v-9h1.35v-8h1.35v2h1.35v12h1.35v-35h1.35v16h1.35v16h1.35v-8h1.35v8h1.35v-9h1.35v-11h1.35v21h1.35v-32h1.35v14h1.35v17h1.35v2h1.35v-29h1.35v-9h1.35v35h1.35v5h1.35v-4h1.35v-11h1.35v-30h1.35v14h1.35v3h1.35v-14h1.35v33h1.35v-10h1.35v1h1.35v1h1.35v-39h1.35v26h1.35v20h1.35v6h1.35v3h1.35v-11h1.35v-52h1.35v47h1.35v15h1.35v-14h1.35v3h1.35v13h1.35v-24h1.35v16h1.35v-3h1.35v-23h1.35v17h1.35v-22h1.35v-11h1.35v26h1.35v13h1.35v-17h1.35v20h1.35v-38h1.35v47h1.35v-32h1.35v30h1.35v-14h1.35v10h1.35v-14h1.35v-2h1.35v11h1.35v-8h1.35v10h1.35v4h1.35v-28h1.35v-3h1.35v17h1.35v-37h1.35v25h1.35v7h1.35v17h1.35v-4h1.35v-19h1.35v21h1.35v-32h1.35v-10h1.35v36h1.35v-20h1.35v31h1.35v-29h1.35v-23h1.35v28h1.35v-12h1.35v18h1.35v-26h1.35v14h1.35v1h1.35v25h1.35v-2h1.35v3h1.35v-7h1.35v-28h1.35v-5h1.35v37h1.35v-55h1.35v12h1.35v20h1.35v25h1.35v-34h1.35v15h1.35v0h1.35v18h1.35v-31h1.35v36h1.35v-42h1.35v42h1.35v-1h1.35v-5h1.35v-8h1.35v13h1.35v-20h1.35v-20h1.35v6h1.35v31h1.35v-18h1.35v17h1.35v-16h1.35v37h1.35v0h1.35v-1h1.35v-21h1.35v10h1.35v-25h1.35v8h1.35v14h1.35v-13h1.35v-28h1.35v3h1.35v-14h1.35v41h1.35v-2h1.35v5h1.35v7h1.35v-6h1.35v-4h1.35v-9h1.35v15h1.35v-22h1.35v-22h1.35v47h1.35v-8h1.35v-12h1.35v-21h1.35v40h1.35v-9h1.35v-2h1.35v-23h1.35v33h1.35v-23h1.35v16h1.35v-11h1.35v-4h1.35v-16h1.35v38h1.35v-13h1.35v12h1.35v-16h1.35v-9h1.35v31h1.35v-9h1.35v3h1.35v12h1.35v-3h1.35v6h1.35v7h1.35v0h1.35v0h1.35v0h1.35v0h1.35v0h1.35v0h1.35v0h1.35v0h1.35v0h1.35v0h1.35v0h1.35v0h1.35v0h1.35v0h1.35v0h1.35v0h1.35v0h1.35v0h1.35v0h1.35v0h1.35v0h1.35v0h1.35v0h1.35v0h1.35v0V941z"/><path fill="#ff8a28" d="M318 941V886h1.35v6h1.35v-13h1.35v12h1.35v-2h1.35v-38h1.35v8h1.35v6h1.35v-12h1.35v7h1.35v11h1.35v-5h1.35v5h1.35v16h1.35v-29h1.35v8h1.35v9h1.35v3h1.35v-16h1.35v3h1.35v-5h1.35v14h1.35v9h1.35v-18h1.35v-37h1.35v47h1.35v1h1.35v-15h1.35v18h1.35v-16h1.35v2h1.35v10h1.35v-3h1.35v-10h1.35v22h1.35v-27h1.35v4h1.35v-2h1.35v-24h1.35v26h1.35v29h1.35v-38h1.35v-14h1.35v47h1.35v-31h1.35v20h1.35v5h1.35v-23h1.35v24h1.35v8h1.35v-19h1.35v-67h1.35v65h1.35v15h1.35v-14h1.35v-11h1.35v-14h1.35v48h1.35v-6h1.35v5h1.35v-13h1.35v-2h1.35v-29h1.35v28h1.35v-10h1.35v13h1.35v13h1.35v-8h1.35v9h1.35v-1h1.35v-12h1.35v-12h1.35v15h1.35v5h1.35v-31h1.35v30h1.35v-31h1.35v35h1.35v-1h1.35v-10h1.35v3h1.35v9h1.35v-41h1.35v44h1.35v-13h1.35v7h1.35v-17h1.35v10h1.35v8h1.35v-28h1.35v-13h1.35v29h1.35v8h1.35v-23h1.35v-20h1.35v52h1.35v-42h1.35v27h1.35v-6h1.35v6h1.35v12h1.35v-6h1.35v-3h1.35v-3h1.35v1h1.35v16h1.35v-6h1.35v-17h1.35v-3h1.35v6h1.35v-3h1.35v12h1.35v-26h1.35v11h1.35v17h1.35v-24h1.35v3h1.35v5h1.35v20h1.35v-24h1.35v26h1.35v-9h1.35v-7h1.35v-8h1.35v25h1.35v-4h1.35v-3h1.35v-10h1.35v11h1.35v0h1.35v-13h1.35v13h1.35v-4h1.35v6h1.35v-10h1.35v-30h1.35v43h1.35v-3h1.35v-17h1.35v15h1.35v-5h1.35v-38h1.35v32h1.35v11h1.35v-31h1.35v30h1.35v-9h1.35v8h1.35v-6h1.35v-24h1.35v30h1.35v3h1.35v-14h1.35v16h1.35v3h1.35v-10h1.35v-24h1.35v21h1.35v2h1.35v0h1.35v0h1.35v6h1.35v-36h1.35v39h1.35v-23h1.35v-8h1.35v16h1.35v-6h1.35v12h1.35v-28h1.35v21h1.35v9h1.35v-53h1.35v39h1.35v9h1.35v-11h1.35v24h1.35v-30h1.35v-6h1.35v26h1.35v6h1.35v-27h1.35v23h1.35v-24h1.35v-6h1.35v31h1.35v-15h1.35v15h1.35v-22h1.35v-1h1.35v-4h1.35v34h1.35v-14h1.35v12h1.35v-13h1.35v-3h1.35v8h1.35v-37h1.35v31h1.35v-21h1.35v17h1.35v-26h1.35v23h1.35v21h1.35v-31h1.35v27h1.35v5h1.35v-9h1.35v1h1.35v-24h1.35v10h1.35v1h1.35v-2h1.35v0h1.35v25h1.35v-5h1.35v-5h1.35v-10h1.35v5h1.35v8h1.35v-18h1.35v12h1.35v-8h1.35v16h1.35v-12h1.35v-2h1.35v17h1.35v-12h1.35v2h1.35v7h1.35v-2h1.35v-7h1.35v-11h1.35v21h1.35v-30h1.35v26h1.35v2h1.35v-18h1.35v12h1.35v-28h1.35v15h1.35v2h1.35v12h1.35v-2h1.35v12h1.35v-6h1.35v-17h1.35v6h1.35v9h1.35v-38h1.35v35h1.35v-1h1.35v-26h1.35v39h1.35v1h1.35v-8h1.35v-8h1.35v-6h1.35v3h1.35v8h1.35v-8h1.35v3h1.35v-6h1.35v1h1.35v6h1.35v-10h1.35v18h1.35v-8h1.35v3h1.35v0h1.35v-18h1.35v17h1.35v-15h1.35v21h1.35v-16h1.35v-14h1.35v33h1.35v-5h1.35v5h1.35v2h1.35v-46h1.35v43h1.35v-4h1.35v-17h1.35v10h1.35v8h1.35v-52h1.35v48h1.35v5h1.35v-5h1.35v7h1.35v-83h1.35v75h1.35v-11h1.35v20h1.35v-24h1.35v20h1.35v4h1.35v-16h1.35v-24h1.35v30h1.35v-14h1.35v25h1.35v-6h1.35v3h1.35v-15h1.35v-13h1.35v22h1.35v-1h1.35v1h1.35v10h1.35v-5h1.35v-10h1.35v-11h1.35v12h1.35v4h1.35v-11h1.35v2h1.35v-17h1.35v1h1.35v-10h1.35v33h1.35v0h1.35v4h1.35v4h1.35v-30h1.35v16h1.35v-1h1.35v-21h1.35v25h1.35v9h1.35v3h1.35v-27h1.35v8h1.35v3h1.35v16h1.35v-30h1.35v18h1.35v0h1.35v-1h1.35v-18h1.35v28h1.35v-19h1.35v13h1.35v-7h1.35v4h1.35v12h1.35v-21h1.35v4h1.35v10h1.35v2h1.35v-1h1.35v-52h1.35v35h1.35v4h1.35v-29h1.35v40h1.35v0h1.35v-21h1.35v10h1.35v8h1.35v-5h1.35v14h1.35v-10h1.35v-16h1.35v-2h1.35v26h1.35v5h1.35v-6h1.35v-7h1.35v10h1.35v-2h1.35v4h1.35v-71h1.35v54h1.35v5h1.35v4h1.35v5h1.35v-9h1.35v9h1.35v-3h1.35v3h1.35v-27h1.35v20h1.35v4h1.35v6h1.35v-4h1.35v3h1.35v-22h1.35v22h1.35v-6h1.35v-19h1.35v17h1.35v7h1.35v-6h1.35v-14h1.35v24h1.35v2h1.35v-77h1.35v43h1.35v17h1.35v12h1.35v2h1.35v-1h1.35v1h1.35v-4h1.35v-34h1.35v36h1.35v-4h1.35v-1h1.35v3h1.35v-5h1.35v-6h1.35v11h1.35v1h1.35v-2h1.35v3h1.35v4h1.35v-38h1.35v31h1.35v4h1.35v-5h1.35v7h1.35v-3h1.35v-10h1.35v-12h1.35v20h1.35v0h1.35v3h1.35v-3h1.35v-31h1.35v-1h1.35v27h1.35v-20h1.35v24h1.35v-9h1.35v13h1.35v-4h1.35v0h1.35v2h1.35v-13h1.35v6h1.35v-2h1.35v11h1.35v-7h1.35v-5h1.35v-3h1.35v-4h1.35v-24h1.35v21h1.35v-9h1.35v0h1.35v12h1.35v-35h1.35v56h1.35v-39h1.35v19h1.35v14h1.35v-9h1.35v9h1.35v6h1.35v-1h1.35v-4h1.35v-17h1.35v-1h1.35v5h1.35v-15h1.35v20h1.35v-4h1.35v-12h1.35v25h1.35v4h1.35v-2h1.35v-16h1.35v19h1.35v-35h1.35v4h1.35v16h1.35v9h1.35v0h1.35v-36h1.35v38h1.35v-6h1.35v-17h1.35v26h1.35v-13h1.35v-9h1.35v18h1.35v-12h1.35v-13h1.35v8h1.35v-27h1.35v3h1.35v39h1.35v-1h1.35v6h1.35v-17h1.35v5h1.35v7h1.35v-2h1.35v-22h1.35v26h1.35v-9h1.35v13h1.35v-8h1.35v-30h1.35v38h1.35v-8h1.35v-20h1.35v3h1.35v24h1.35v-25h1.35v13h1.35v-14h1.35v27h1.35v-16h1.35v1h1.35v11h1.35v3h1.35v-1h1.35v-22h1.35v6h1.35v4h1.35v16h1.35v-12h1.35v7h1.35v-44h1.35v38h1.35v-1h1.35v-11h1.35v-5h1.35v19h1.35v5h1.35v-3h1.35v-51h1.35v51h1.35v-4h1.35v-15h1.35v2h1.35v15h1.35v-6h1.35v2h1.35v1h1.35v-1h1.35v-6h1.35v-3h1.35v20h1.35v-23h1.35v18h1.35v1h1.35v-13h1.35v2h1.35v-19h1.35v30h1.35v-40h1.35v30h1.35v-11h1.35v-18h1.35v12h1.35v14h1.35v14h1.35v-16h1.35v-4h1.35v-18h1.35v32h1.35v-23h1.35v2h1.35v17h1.35v-15h1.35v-32h1.35v39h1.35v16h1.35v-18h1.35v16h1.35v-39h1.35v36h1.35v7h1.35v-5h1.35v1h1.35v-40h1.35v28h1.35v2h1.35v-14h1.35v-19h1.35v27h1.35v3h1.35v-7h1.35v11h1.35v6h1.35v-19h1.35v22h1.35v4h1.35v-17h1.35v16h1.35v-26h1.35v15h1.35v-2h1.35v-8h1.35v15h1.35v11h1.35v-36h1.35v21h1.35v1h1.35v8h1.35v-4h1.35v-2h1.35v15h1.35v-14h1.35v-20h1.35v23h1.35v-2h1.35v-1h1.35v3h1.35v-36h1.35v22h1.35v21h1.35v-5h1.35v-56h1.35v51h1.35v-3h1.35v-26h1.35v27h1.35v-7h1.35v-39h1.35v52h1.35v-42h1.35v39h1.35v-24h1.35v-3h1.35v-5h1.35v24h1.35v-37h1.35v41h1.35v-1h1.35v-37h1.35v47h1.35v-4h1.35v-40h1.35v36h1.35v-24h1.35v7h1.35v25h1.35v-5h1.35v-7h1.35v2h1.35v-26h1.35v31h1.35v6h1.35v0h1.35v-19h1.35v-2h1.35v20h1.35v-25h1.35v12h1.35v6h1.35v5h1.35v-21h1.35v4h1.35v6h1.35v16h1.35v-5h1.35v-29h1.35v21h1.35v4h1.35v1h1.35v-8h1.35v13h1.35v-23h1.35v10h1.35v15h1.35v-22h1.35v17h1.35v-34h1.35v40h1.35v-40h1.35v19h1.35v-24h1.35v34h1.35v10h1.35v-1h1.35v-18h1.35v2h1.35v-7h1.35v27h1.35v-12h1.35v4h1.35v4h1.35v-22h1.35v-7h1.35v16h1.35v-3h1.35v-36h1.35v39h1.35v15h1.35v-2h1.35v-9h1.35v-30h1.35v27h1.35v-22h1.35v15h1.35v17h1.35v-1h1.35v-20h1.35v18h1.35v-14h1.35v12h1.35v-32h1.35v30h1.35v-4h1.35v8h1.35v-20h1.35v30h1.35v-26h1.35v20h1.35v-15h1.35v4h1.35v-7h1.35v21h1.35v-25h1.35v-1h1.35v25h1.35v0h1.35v-24h1.35v24h1.35v-18h1.35v-37h1.35v52h1.35v-2h1.35v0h1.35v-8h1.35v12h1.35v-13h1.35v-17h1.35v23h1.35v8h1.35v-49h1.35v16h1.35v29h1.35v-1h1.35v-4h1.35v-50h1.35v23h1.35v23h1.35v13h1.35v-81h1.35v79h1.35v-7h1.35v0h1.35v-5h1.35v-4h1.35v13h1.35v-10h1.35v-11h1.35v17h1.35v7h1.35v-4h1.35v-4h1.35v-8h1.35v12h1.35v-28h1.35v3h1.35v-32h1.35v53h1.35v-27h1.35v15h1.35v24h1.35v-22h1.35v0h1.35v-33h1.35v51h1.35v-14h1.35v-51h1.35v64h1.35v-40h1.35v45h1.35v-16h1.35v-16h1.35v-59h1.35v60h1.35v-9h1.35v8h1.35v-2h1.35v17h1.35v3h1.35v9h1.35v-14h1.35v19h1.35v-3h1.35v-56h1.35v55h1.35v-21h1.35v10h1.35v-19h1.35v-67h1.35v85h1.35v-2h1.35v6h1.35v-43h1.35v47h1.35v-32h1.35v22h1.35v-2h1.35v-16h1.35v7h1.35v19h1.35v2h1.35v-40h1.35v12h1.35v31h1.35v-31h1.35v-9h1.35v7h1.35v30h1.35v-31h1.35v27h1.35v-37h1.35v39h1.35v-38h1.35v39h1.35v-45h1.35v37h1.35v-27h1.35v39h1.35v-1h1.35v-19h1.35v-21h1.35v1h1.35v33h1.35v-21h1.35v25h1.35v-14h1.35v17h1.35v-22h1.35v27h1.35v-23h1.35v-24h1.35v44h1.35v-30h1.35v11h1.35v11h1.35v3h1.35v-3h1.35v-20h1.35v31h1.35v-10h1.35v-14h1.35v9h1.35v1h1.35v-11h1.35v21h1.35v-16h1.35v-3h1.35v-18h1.35v23h1.35v13h1.35v-37h1.35v9h1.35v1h1.35v31h1.35v-10h1.35v4h1.35v-5h1.35v5h1.35v-23h1.35v24h1.35v-13h1.35v17h1.35v4h1.35v-22h1.35v13h1.35v-20h1.35v15h1.35v-24h1.35v6h1.35v22h1.35v5h1.35v-10h1.35v-11h1.35v13h1.35v4h1.35v8h1.35v-6h1.35v-16h1.35v19h1.35v-35h1.35v21h1.35v-13h1.35v5h1.35v-9h1.35v27h1.35v-9h1.35v3h1.35v-4h1.35v-5h1.35v19h1.35v-11h1.35v2h1.35v-31h1.35v29h1.35v-1h1.35v6h1.35v-22h1.35v-15h1.35v29h1.35v-47h1.35v59h1.35v-3h1.35v-11h1.35v-15h1.35v29h1.35v2h1.35v-10h1.35v2h1.35v-1h1.35v1h1.35v-37h1.35v31h1.35v13h1.35v-4h1.35v2h1.35v-21h1.35v13h1.35v4h1.35v-54h1.35v36h1.35v27h1.35v-4h1.35v-12h1.35v-25h1.35v38h1.35v3h1.35v-10h1.35v1h1.35v-38h1.35v34h1.35v-1h1.35v-14h1.35v21h1.35v-16h1.35v8h1.35v-5h1.35v-15h1.35v11h1.35v11h1.35v7h1.35v1h1.35v-8h1.35v-41h1.35v32h1.35v18h1.35v-15h1.35v9h1.35v7h1.35v-20h1.35v9h1.35v-15h1.35v2h1.35v12h1.35v-8h1.35v-16h1.35v15h1.35v15h1.35v-10h1.35v2h1.35v-16h1.35v30h1.35v-31h1.35v34h1.35v-8h1.35v-2h1.35v-4h1.35v-22h1.35v28h1.35v-4h1.35v2h1.35v1h1.35v-13h1.35v-19h1.35v21h1.35v-36h1.35v21h1.35v21h1.35v10h1.35v-5h1.35v-16h1.35v13h1.35v-22h1.35v-10h1.35v16h1.35v12h1.35v10h1.35v-8h1.35v-43h1.35v34h1.35v-5h1.35v-2h1.35v-14h1.35v10h1.35v8h1.35v20h1.35v-7h1.35v7h1.35v-6h1.35v-13h1.35v1h1.35v12h1.35v-25h1.35v1h1.35v9h1.35v10h1.35v-12h1.35v7h1.35v2h1.35v8h1.35v-15h1.35v21h1.35v-22h1.35v29h1.35v-10h1.35v-3h1.35v-4h1.35v4h1.35v-12h1.35v-12h1.35v-3h1.35v34h1.35v-23h1.35v19h1.35v-14h1.35v31h1.35v-1h1.35v0h1.35v-24h1.35v13h1.35v-14h1.35v6h1.35v12h1.35v-10h1.35v-15h1.35v1h1.35v-13h1.35v24h1.35v-3h1.35v2h1.35v9h1.35v-7h1.35v-8h1.35v-1h1.35v18h1.35v-9h1.35v-16h1.35v21h1.35v1h1.35v-11h1.35v-44h1.35v50h1.35v-4h1.35v0h1.35v-31h1.35v39h1.35v-13h1.35v5h1.35v-18h1.35v16h1.35v-26h1.35v35h1.35v-8h1.35v6h1.35v-12h1.35v-26h1.35v40h1.35v1h1.35v4h1.35v8h1.35v-5h1.35v7h1.35v3h1.35v0h1.35v0h1.35v0h1.35v0h1.35v0h1.35v0h1.35v0h1.35v0h1.35v0h1.35v0h1.35v0h1.35v0h1.35v0h1.35v0h1.35v0h1.35v0h1.35v0h1.35v0h1.35v0h1.35v0h1.35v0h1.35v0h1.35v0h1.35v0h1.35v0V941z"/><path fill="#ffb43c" d="M318 941V891h1.35v6h1.35v-6h1.35v1h1.35v1h1.35v-32h1.35v18h1.35v-24h1.35v7h1.35v12h1.35v3h1.35v-18h1.35v23h1.35v6h1.35v-26h1.35v22h1.35v3h1.35v1h1.35v-19h1.35v-11h1.35v-9h1.35v37h1.35v4h1.35v-21h1.35v-10h1.35v27h1.35v3h1.35v-15h1.35v9h1.35v-27h1.35v10h1.35v16h1.35v1h1.35v-8h1.35v16h1.35v-23h1.35v6h1.35v-13h1.35v-13h1.35v34h1.35v7h1.35v-22h1.35v-21h1.35v37h1.35v-25h1.35v16h1.35v4h1.35v-27h1.35v36h1.35v6h1.35v-41h1.35v-7h1.35v16h1.35v31h1.35v-8h1.35v-10h1.35v-46h1.35v65h1.35v-1h1.35v0h1.35v0h1.35v-7h1.35v-29h1.35v27h1.35v-2h1.35v-1h1.35v9h1.35v-5h1.35v7h1.35v3h1.35v-9h1.35v-10h1.35v14h1.35v-1h1.35v-29h1.35v30h1.35v-37h1.35v31h1.35v10h1.35v-3h1.35v-4h1.35v10h1.35v-29h1.35v27h1.35v-2h1.35v-4h1.35v-4h1.35v6h1.35v-4h1.35v-17h1.35v-1h1.35v8h1.35v16h1.35v-15h1.35v-21h1.35v37h1.35v-23h1.35v13h1.35v0h1.35v3h1.35v8h1.35v-10h1.35v5h1.35v1h1.35v-7h1.35v10h1.35v1h1.35v-12h1.35v-14h1.35v15h1.35v-3h1.35v8h1.35v-14h1.35v-9h1.35v23h1.35v-12h1.35v-1h1.35v1h1.35v14h1.35v1h1.35v1h1.35v-11h1.35v-2h1.35v4h1.35v13h1.35v-7h1.35v6h1.35v-10h1.35v1h1.35v7h1.35v-17h1.35v19h1.35v-6h1.35v4h1.35v-12h1.35v-10h1.35v19h1.35v0h1.35v-11h1.35v14h1.35v-9h1.35v-37h1.35v29h1.35v14h1.35v-23h1.35v23h1.35v-3h1.35v0h1.35v-6h1.35v-24h1.35v37h1.35v2h1.35v-8h1.35v5h1.35v3h1.35v-12h1.35v1h1.35v-2h1.35v7h1.35v-3h1.35v0h1.35v5h1.35v-14h1.35v17h1.35v-21h1.35v-10h1.35v14h1.35v9h1.35v-3h1.35v-11h1.35v15h1.35v3h1.35v-44h1.35v21h1.35v19h1.35v-7h1.35v14h1.35v-17h1.35v-4h1.35v16h1.35v5h1.35v-20h1.35v17h1.35v-21h1.35v-6h1.35v21h1.35v-3h1.35v4h1.35v-7h1.35v7h1.35v-3h1.35v8h1.35v-5h1.35v6h1.35v-6h1.35v-4h1.35v7h1.35v-21h1.35v18h1.35v-18h1.35v6h1.35v-36h1.35v36h1.35v19h1.35v-31h1.35v32h1.35v-3h1.35v-4h1.35v-2h1.35v-29h1.35v22h1.35v-4h1.35v8h1.35v-6h1.35v20h1.35v-5h1.35v0h1.35v-5h1.35v-6h1.35v8h1.35v-43h1.35v44h1.35v-9h1.35v11h1.35v-9h1.35v-2h1.35v14h1.35v-9h1.35v-3h1.35v10h1.35v-5h1.35v-2h1.35v-4h1.35v11h1.35v-17h1.35v13h1.35v-1h1.35v-3h1.35v9h1.35v-24h1.35v17h1.35v-9h1.35v3h1.35v0h1.35v11h1.35v-2h1.35v-15h1.35v7h1.35v2h1.35v-38h1.35v41h1.35v3h1.35v-14h1.35v21h1.35v-2h1.35v-3h1.35v-2h1.35v-4h1.35v1h1.35v-2h1.35v-2h1.35v2h1.35v-7h1.35v-10h1.35v12h1.35v-6h1.35v16h1.35v-6h1.35v-7h1.35v5h1.35v-9h1.35v9h1.35v-6h1.35v16h1.35v-15h1.35v-15h1.35v27h1.35v1h1.35v5h1.35v1h1.35v-18h1.35v9h1.35v1h1.35v-16h1.35v14h1.35v-2h1.35v-37h1.35v47h1.35v-1h1.35v-1h1.35v1h1.35v-74h1.35v64h1.35v-2h1.35v11h1.35v-13h1.35v17h1.35v-4h1.35v-9h1.35v-23h1.35v17h1.35v-17h1.35v27h1.35v4h1.35v0h1.35v-6h1.35v0h1.35v0h1.35v1h1.35v2h1.35v7h1.35v-10h1.35v-9h1.35v-18h1.35v29h1.35v0h1.35v-4h1.35v-1h1.35v-11h1.35v-5h1.35v0h1.35v26h1.35v-4h1.35v3h1.35v4h1.35v-23h1.35v15h1.35v-9h1.35v-12h1.35v22h1.35v3h1.35v-3h1.35v-10h1.35v-15h1.35v27h1.35v2h1.35v-22h1.35v12h1.35v0h1.35v2h1.35v-28h1.35v34h1.35v-22h1.35v18h1.35v0h1.35v-7h1.35v15h1.35v-34h1.35v20h1.35v6h1.35v2h1.35v-4h1.35v-11h1.35v3h1.35v5h1.35v-40h1.35v49h1.35v-5h1.35v-34h1.35v25h1.35v5h1.35v1h1.35v8h1.35v-4h1.35v-8h1.35v-15h1.35v28h1.35v2h1.35v1h1.35v-13h1.35v13h1.35v-3h1.35v-4h1.35v-42h1.35v37h1.35v8h1.35v0h1.35v-2h1.35v1h1.35v-3h1.35v3h1.35v2h1.35v-20h1.35v12h1.35v6h1.35v-3h1.35v2h1.35v7h1.35v-14h1.35v8h1.35v-3h1.35v-10h1.35v14h1.35v1h1.35v-1h1.35v-9h1.35v14h1.35v-1h1.35v-39h1.35v25h1.35v1h1.35v15h1.35v-9h1.35v9h1.35v-8h1.35v4h1.35v-27h1.35v25h1.35v-3h1.35v2h1.35v7h1.35v-16h1.35v-11h1.35v24h1.35v-4h1.35v5h1.35v-10h1.35v10h1.35v-34h1.35v24h1.35v2h1.35v3h1.35v5h1.35v-3h1.35v-14h1.35v6h1.35v8h1.35v0h1.35v2h1.35v-1h1.35v-11h1.35v-16h1.35v27h1.35v-37h1.35v38h1.35v-11h1.35v10h1.35v0h1.35v0h1.35v-3h1.35v-5h1.35v1h1.35v4h1.35v0h1.35v-3h1.35v2h1.35v-11h1.35v-3h1.35v-18h1.35v20h1.35v2h1.35v-17h1.35v7h1.35v-9h1.35v35h1.35v-31h1.35v16h1.35v12h1.35v-8h1.35v5h1.35v6h1.35v-4h1.35v-2h1.35v-12h1.35v8h1.35v5h1.35v-17h1.35v14h1.35v-1h1.35v-10h1.35v16h1.35v-1h1.35v4h1.35v-11h1.35v10h1.35v-21h1.35v0h1.35v4h1.35v15h1.35v-2h1.35v-26h1.35v28h1.35v-6h1.35v-9h1.35v20h1.35v-5h1.35v-23h1.35v12h1.35v8h1.35v-27h1.35v13h1.35v-21h1.35v-17h1.35v52h1.35v6h1.35v0h1.35v-9h1.35v-2h1.35v6h1.35v2h1.35v-14h1.35v15h1.35v-19h1.35v23h1.35v-2h1.35v-35h1.35v34h1.35v-3h1.35v-34h1.35v6h1.35v26h1.35v-7h1.35v1h1.35v4h1.35v7h1.35v-16h1.35v13h1.35v2h1.35v2h1.35v-2h1.35v-20h1.35v13h1.35v-2h1.35v12h1.35v-6h1.35v2h1.35v-54h1.35v45h1.35v2h1.35v-15h1.35v-4h1.35v24h1.35v2h1.35v-3h1.35v-49h1.35v47h1.35v-8h1.35v-2h1.35v-11h1.35v23h1.35v-2h1.35v5h1.35v-11h1.35v-4h1.35v7h1.35v3h1.35v6h1.35v-16h1.35v18h1.35v-7h1.35v0h1.35v-12h1.35v-12h1.35v32h1.35v-22h1.35v6h1.35v3h1.35v-7h1.35v-8h1.35v4h1.35v21h1.35v-13h1.35v-1h1.35v-4h1.35v15h1.35v-26h1.35v9h1.35v9h1.35v2h1.35v-18h1.35v9h1.35v14h1.35v-11h1.35v9h1.35v-17h1.35v8h1.35v18h1.35v-8h1.35v-2h1.35v-18h1.35v21h1.35v1h1.35v-19h1.35v-22h1.35v37h1.35v-2h1.35v5h1.35v-9h1.35v7h1.35v-12h1.35v18h1.35v-7h1.35v-5h1.35v14h1.35v-17h1.35v13h1.35v-15h1.35v13h1.35v0h1.35v2h1.35v-23h1.35v21h1.35v-13h1.35v17h1.35v-18h1.35v14h1.35v7h1.35v-7h1.35v-23h1.35v23h1.35v-3h1.35v2h1.35v1h1.35v-12h1.35v-4h1.35v24h1.35v-6h1.35v-31h1.35v31h1.35v-11h1.35v-5h1.35v10h1.35v3h1.35v-44h1.35v51h1.35v-42h1.35v23h1.35v-7h1.35v-6h1.35v7h1.35v8h1.35v-40h1.35v43h1.35v7h1.35v-22h1.35v27h1.35v2h1.35v-23h1.35v11h1.35v-25h1.35v9h1.35v28h1.35v-8h1.35v-13h1.35v15h1.35v-44h1.35v46h1.35v0h1.35v5h1.35v-11h1.35v-19h1.35v30h1.35v-34h1.35v21h1.35v6h1.35v-3h1.35v-9h1.35v-17h1.35v23h1.35v13h1.35v-6h1.35v-20h1.35v19h1.35v2h1.35v-3h1.35v-14h1.35v19h1.35v-27h1.35v21h1.35v5h1.35v-9h1.35v8h1.35v-27h1.35v29h1.35v-29h1.35v18h1.35v-22h1.35v29h1.35v4h1.35v-5h1.35v-15h1.35v12h1.35v-1h1.35v14h1.35v-17h1.35v7h1.35v2h1.35v-10h1.35v-11h1.35v17h1.35v-14h1.35v-29h1.35v46h1.35v6h1.35v-6h1.35v-4h1.35v-20h1.35v21h1.35v-20h1.35v19h1.35v7h1.35v0h1.35v-10h1.35v5h1.35v-1h1.35v2h1.35v-28h1.35v16h1.35v5h1.35v6h1.35v-22h1.35v31h1.35v-14h1.35v9h1.35v-12h1.35v10h1.35v-14h1.35v17h1.35v-10h1.35v-11h1.35v17h1.35v6h1.35v-21h1.35v21h1.35v-8h1.35v-36h1.35v42h1.35v-5h1.35v5h1.35v-13h1.35v13h1.35v-6h1.35v-28h1.35v29h1.35v3h1.35v-28h1.35v9h1.35v19h1.35v4h1.35v-11h1.35v-19h1.35v-14h1.35v37h1.35v6h1.35v-46h1.35v45h1.35v-10h1.35v8h1.35v-5h1.35v-7h1.35v13h1.35v-7h1.35v-9h1.35v16h1.35v0h1.35v-2h1.35v0h1.35v-4h1.35v2h1.35v-11h1.35v-16h1.35v1h1.35v25h1.35v-22h1.35v18h1.35v12h1.35v-17h1.35v0h1.35v-41h1.35v54h1.35v-5h1.35v-24h1.35v29h1.35v-35h1.35v38h1.35v-14h1.35v-12h1.35v-55h1.35v66h1.35v-2h1.35v-3h1.35v4h1.35v5h1.35v3h1.35v8h1.35v-7h1.35v10h1.35v-3h1.35v-39h1.35v40h1.35v-10h1.35v-3h1.35v-27h1.35v-26h1.35v52h1.35v6h1.35v-8h1.35v-12h1.35v25h1.35v-19h1.35v9h1.35v1h1.35v-2h1.35v0h1.35v5h1.35v0h1.35v-9h1.35v-5h1.35v21h1.35v-13h1.35v-16h1.35v6h1.35v14h1.35v-2h1.35v8h1.35v-24h1.35v21h1.35v-20h1.35v28h1.35v-64h1.35v53h1.35v-15h1.35v23h1.35v-11h1.35v1h1.35v-29h1.35v16h1.35v23h1.35v-28h1.35v31h1.35v-11h1.35v7h1.35v-16h1.35v24h1.35v-16h1.35v-38h1.35v47h1.35v-30h1.35v3h1.35v23h1.35v4h1.35v-1h1.35v-18h1.35v21h1.35v-7h1.35v-1h1.35v-7h1.35v15h1.35v-24h1.35v20h1.35v-8h1.35v-9h1.35v0h1.35v18h1.35v0h1.35v-31h1.35v5h1.35v8h1.35v22h1.35v-13h1.35v7h1.35v2h1.35v-2h1.35v-14h1.35v16h1.35v-3h1.35v10h1.35v0h1.35v-17h1.35v11h1.35v-16h1.35v10h1.35v-8h1.35v-9h1.35v20h1.35v6h1.35v-2h1.35v-9h1.35v6h1.35v2h1.35v3h1.35v-6h1.35v2h1.35v3h1.35v-17h1.35v9h1.35v-12h1.35v-1h1.35v3h1.35v16h1.35v-7h1.35v-2h1.35v5h1.35v-6h1.35v13h1.35v-3h1.35v3h1.35v-24h1.35v12h1.35v6h1.35v4h1.35v-21h1.35v-7h1.35v13h1.35v-13h1.35v29h1.35v-2h1.35v-8h1.35v-22h1.35v32h1.35v4h1.35v-10h1.35v0h1.35v7h1.35v-5h1.35v-37h1.35v27h1.35v14h1.35v-1h1.35v2h1.35v-16h1.35v5h1.35v7h1.35v-45h1.35v29h1.35v21h1.35v-5h1.35v-8h1.35v-17h1.35v29h1.35v-1h1.35v1h1.35v-7h1.35v-41h1.35v33h1.35v2h1.35v-6h1.35v15h1.35v-10h1.35v4h1.35v-7h1.35v-9h1.35v3h1.35v18h1.35v-3h1.35v8h1.35v-11h1.35v-36h1.35v31h1.35v12h1.35v-6h1.35v-3h1.35v8h1.35v-18h1.35v14h1.35v-7h1.35v5h1.35v5h1.35v-7h1.35v-23h1.35v13h1.35v10h1.35v-4h1.35v14h1.35v-26h1.35v27h1.35v-21h1.35v22h1.35v-2h1.35v-5h1.35v-1h1.35v-9h1.35v14h1.35v-7h1.35v5h1.35v-1h1.35v-11h1.35v-13h1.35v15h1.35v-14h1.35v9h1.35v5h1.35v10h1.35v-3h1.35v-6h1.35v10h1.35v-9h1.35v-27h1.35v17h1.35v4h1.35v20h1.35v-20h1.35v-37h1.35v45h1.35v-9h1.35v-4h1.35v-4h1.35v5h1.35v-2h1.35v28h1.35v-6h1.35v5h1.35v-8h1.35v-18h1.35v-2h1.35v25h1.35v-28h1.35v2h1.35v16h1.35v7h1.35v-36h1.35v15h1.35v9h1.35v11h1.35v-22h1.35v27h1.35v-34h1.35v36h1.35v-2h1.35v-7h1.35v-2h1.35v-1h1.35v-7h1.35v-17h1.35v5h1.35v25h1.35v-14h1.35v15h1.35v-13h1.35v26h1.35v-2h1.35v0h1.35v-17h1.35v7h1.35v-14h1.35v12h1.35v5h1.35v-5h1.35v-25h1.35v6h1.35v-3h1.35v18h1.35v2h1.35v2h1.35v3h1.35v-5h1.35v0h1.35v-4h1.35v6h1.35v-5h1.35v-24h1.35v31h1.35v-1h1.35v-6h1.35v-23h1.35v25h1.35v1h1.35v-15h1.35v-3h1.35v25h1.35v-25h1.35v17h1.35v-17h1.35v13h1.35v-11h1.35v17h1.35v-13h1.35v11h1.35v-9h1.35v-3h1.35v9h1.35v5h1.35v4h1.35v7h1.35v-4h1.35v8h1.35v0h1.35v0h1.35v0h1.35v0h1.35v0h1.35v0h1.35v0h1.35v0h1.35v0h1.35v0h1.35v0h1.35v0h1.35v0h1.35v0h1.35v0h1.35v0h1.35v0h1.35v0h1.35v0h1.35v0h1.35v0h1.35v0h1.35v0h1.35v0h1.35v0h1.35v0V941z"/><path fill="#ffdc5a" d="M318 941V895h1.35v4h1.35v-9h1.35v9h1.35v-4h1.35v-12h1.35v-10h1.35v7h1.35v-4h1.35v7h1.35v-2h1.35v-1h1.35v10h1.35v4h1.35v-14h1.35v5h1.35v5h1.35v0h1.35v-3h1.35v-9h1.35v-5h1.35v15h1.35v7h1.35v-23h1.35v-9h1.35v22h1.35v8h1.35v-8h1.35v6h1.35v-11h1.35v-3h1.35v12h1.35v-1h1.35v-11h1.35v18h1.35v-16h1.35v8h1.35v-31h1.35v12h1.35v18h1.35v8h1.35v-16h1.35v-8h1.35v20h1.35v-21h1.35v15h1.35v3h1.35v-12h1.35v12h1.35v10h1.35v-9h1.35v-19h1.35v13h1.35v11h1.35v-1h1.35v-11h1.35v-12h1.35v28h1.35v-1h1.35v-1h1.35v-6h1.35v1h1.35v-16h1.35v14h1.35v-4h1.35v4h1.35v8h1.35v-3h1.35v3h1.35v0h1.35v-11h1.35v-2h1.35v13h1.35v-4h1.35v-21h1.35v22h1.35v-25h1.35v26h1.35v2h1.35v-4h1.35v0h1.35v4h1.35v-15h1.35v15h1.35v-2h1.35v2h1.35v-6h1.35v3h1.35v-1h1.35v-19h1.35v6h1.35v1h1.35v11h1.35v-2h1.35v-19h1.35v27h1.35v-27h1.35v22h1.35v-1h1.35v3h1.35v2h1.35v-4h1.35v2h1.35v-1h1.35v-6h1.35v12h1.35v-4h1.35v-5h1.35v-7h1.35v9h1.35v-10h1.35v10h1.35v-7h1.35v1h1.35v10h1.35v-11h1.35v-1h1.35v6h1.35v4h1.35v-4h1.35v7h1.35v-6h1.35v-5h1.35v5h1.35v6h1.35v-1h1.35v1h1.35v-3h1.35v1h1.35v0h1.35v-6h1.35v8h1.35v-7h1.35v6h1.35v-7h1.35v-7h1.35v11h1.35v1h1.35v1h1.35v-1h1.35v-3h1.35v-24h1.35v23h1.35v2h1.35v-11h1.35v15h1.35v-3h1.35v-1h1.35v-8h1.35v-15h1.35v27h1.35v2h1.35v-12h1.35v9h1.35v3h1.35v-5h1.35v-10h1.35v7h1.35v0h1.35v0h1.35v1h1.35v3h1.35v-12h1.35v12h1.35v-9h1.35v-6h1.35v9h1.35v1h1.35v2h1.35v-10h1.35v11h1.35v-3h1.35v-22h1.35v19h1.35v7h1.35v-3h1.35v7h1.35v-20h1.35v9h1.35v6h1.35v4h1.35v-13h1.35v12h1.35v-11h1.35v-8h1.35v19h1.35v-12h1.35v7h1.35v-2h1.35v0h1.35v1h1.35v5h1.35v-5h1.35v7h1.35v-4h1.35v2h1.35v-1h1.35v-13h1.35v12h1.35v-10h1.35v6h1.35v-15h1.35v13h1.35v10h1.35v-19h1.35v19h1.35v-1h1.35v-1h1.35v-1h1.35v-18h1.35v9h1.35v7h1.35v-12h1.35v3h1.35v13h1.35v0h1.35v0h1.35v-3h1.35v0h1.35v-3h1.35v-8h1.35v10h1.35v3h1.35v0h1.35v-2h1.35v-2h1.35v6h1.35v-4h1.35v2h1.35v1h1.35v-4h1.35v-6h1.35v5h1.35v5h1.35v-12h1.35v7h1.35v-1h1.35v3h1.35v0h1.35v-16h1.35v15h1.35v-6h1.35v6h1.35v-1h1.35v7h1.35v-5h1.35v-9h1.35v-3h1.35v12h1.35v-20h1.35v19h1.35v-1h1.35v-15h1.35v23h1.35v-1h1.35v-4h1.35v2h1.35v-9h1.35v7h1.35v-1h1.35v1h1.35v0h1.35v-14h1.35v10h1.35v-6h1.35v-4h1.35v14h1.35v0h1.35v-6h1.35v1h1.35v-5h1.35v10h1.35v-11h1.35v14h1.35v-12h1.35v-2h1.35v12h1.35v2h1.35v1h1.35v1h1.35v-17h1.35v13h1.35v-2h1.35v-5h1.35v4h1.35v0h1.35v-22h1.35v26h1.35v-1h1.35v-2h1.35v4h1.35v-39h1.35v30h1.35v5h1.35v3h1.35v-15h1.35v15h1.35v0h1.35v-8h1.35v-20h1.35v24h1.35v-7h1.35v10h1.35v0h1.35v1h1.35v-11h1.35v3h1.35v5h1.35v-3h1.35v-1h1.35v6h1.35v1h1.35v-11h1.35v0h1.35v9h1.35v-2h1.35v-3h1.35v-1h1.35v-16h1.35v10h1.35v-2h1.35v16h1.35v-5h1.35v-2h1.35v9h1.35v-20h1.35v15h1.35v-13h1.35v-9h1.35v23h1.35v1h1.35v2h1.35v-12h1.35v-4h1.35v12h1.35v4h1.35v-15h1.35v10h1.35v-1h1.35v-2h1.35v-9h1.35v14h1.35v-13h1.35v10h1.35v-2h1.35v0h1.35v8h1.35v-6h1.35v0h1.35v1h1.35v1h1.35v-1h1.35v-13h1.35v6h1.35v-4h1.35v-10h1.35v24h1.35v-6h1.35v-23h1.35v23h1.35v7h1.35v-8h1.35v7h1.35v-4h1.35v-7h1.35v-8h1.35v17h1.35v3h1.35v-2h1.35v-4h1.35v6h1.35v-1h1.35v0h1.35v-28h1.35v15h1.35v12h1.35v-2h1.35v1h1.35v-2h1.35v5h1.35v-2h1.35v1h1.35v-17h1.35v13h1.35v4h1.35v0h1.35v-3h1.35v6h1.35v-8h1.35v5h1.35v0h1.35v-9h1.35v10h1.35v-7h1.35v5h1.35v-5h1.35v6h1.35v1h1.35v-20h1.35v13h1.35v3h1.35v4h1.35v-2h1.35v3h1.35v0h1.35v-5h1.35v-16h1.35v20h1.35v-6h1.35v3h1.35v3h1.35v-14h1.35v-7h1.35v17h1.35v1h1.35v3h1.35v-2h1.35v1h1.35v-11h1.35v6h1.35v5h1.35v-1h1.35v4h1.35v-3h1.35v-6h1.35v4h1.35v1h1.35v1h1.35v2h1.35v-3h1.35v-12h1.35v-8h1.35v23h1.35v-11h1.35v8h1.35v-4h1.35v4h1.35v1h1.35v0h1.35v0h1.35v-4h1.35v3h1.35v-1h1.35v3h1.35v-5h1.35v0h1.35v-1h1.35v-6h1.35v-13h1.35v15h1.35v-3h1.35v4h1.35v-2h1.35v-15h1.35v28h1.35v-31h1.35v22h1.35v6h1.35v-3h1.35v2h1.35v3h1.35v0h1.35v-3h1.35v-12h1.35v10h1.35v-3h1.35v-11h1.35v13h1.35v-3h1.35v-7h1.35v14h1.35v3h1.35v-3h1.35v-11h1.35v12h1.35v-15h1.35v-10h1.35v20h1.35v2h1.35v1h1.35v-25h1.35v26h1.35v-1h1.35v-7h1.35v10h1.35v-3h1.35v-13h1.35v13h1.35v-7h1.35v-9h1.35v7h1.35v-21h1.35v11h1.35v18h1.35v2h1.35v1h1.35v-5h1.35v-4h1.35v7h1.35v3h1.35v-15h1.35v14h1.35v-6h1.35v6h1.35v-4h1.35v-22h1.35v28h1.35v-7h1.35v-8h1.35v-17h1.35v29h1.35v-7h1.35v5h1.35v-2h1.35v7h1.35v-9h1.35v-1h1.35v9h1.35v-1h1.35v0h1.35v-23h1.35v17h1.35v3h1.35v5h1.35v-10h1.35v8h1.35v-18h1.35v17h1.35v-3h1.35v-1h1.35v-7h1.35v10h1.35v3h1.35v-4h1.35v-37h1.35v37h1.35v-1h1.35v-3h1.35v-5h1.35v5h1.35v0h1.35v2h1.35v-4h1.35v2h1.35v2h1.35v-2h1.35v7h1.35v-11h1.35v11h1.35v-3h1.35v-1h1.35v-5h1.35v-4h1.35v14h1.35v-20h1.35v0h1.35v10h1.35v1h1.35v3h1.35v-9h1.35v11h1.35v-4h1.35v2h1.35v-14h1.35v15h1.35v-8h1.35v-1h1.35v8h1.35v-7h1.35v-15h1.35v17h1.35v4h1.35v2h1.35v3h1.35v-29h1.35v22h1.35v9h1.35v-2h1.35v-3h1.35v-11h1.35v10h1.35v4h1.35v-17h1.35v-12h1.35v23h1.35v6h1.35v-3h1.35v0h1.35v-1h1.35v-3h1.35v9h1.35v-1h1.35v-9h1.35v9h1.35v-17h1.35v16h1.35v-6h1.35v3h1.35v-1h1.35v6h1.35v-20h1.35v14h1.35v-3h1.35v8h1.35v-12h1.35v8h1.35v4h1.35v-1h1.35v-11h1.35v9h1.35v0h1.35v-1h1.35v1h1.35v-8h1.35v0h1.35v13h1.35v-3h1.35v-10h1.35v6h1.35v-1h1.35v-15h1.35v17h1.35v-5h1.35v-11h1.35v18h1.35v-19h1.35v16h1.35v-17h1.35v5h1.35v1h1.35v7h1.35v-8h1.35v10h1.35v5h1.35v-15h1.35v18h1.35v-2h1.35v-17h1.35v15h1.35v-15h1.35v5h1.35v12h1.35v-4h1.35v-11h1.35v11h1.35v-26h1.35v28h1.35v1h1.35v2h1.35v-6h1.35v-5h1.35v10h1.35v-7h1.35v1h1.35v4h1.35v-1h1.35v-1h1.35v-6h1.35v3h1.35v8h1.35v-9h1.35v0h1.35v3h1.35v1h1.35v4h1.35v-12h1.35v13h1.35v-11h1.35v8h1.35v1h1.35v-8h1.35v-3h1.35v-6h1.35v21h1.35v-17h1.35v5h1.35v-4h1.35v8h1.35v5h1.35v-3h1.35v-3h1.35v-1h1.35v-1h1.35v11h1.35v-7h1.35v6h1.35v-1h1.35v-19h1.35v2h1.35v10h1.35v-4h1.35v-11h1.35v17h1.35v5h1.35v-2h1.35v-6h1.35v-16h1.35v19h1.35v-13h1.35v14h1.35v4h1.35v2h1.35v-12h1.35v4h1.35v0h1.35v0h1.35v-5h1.35v1h1.35v-3h1.35v6h1.35v-8h1.35v16h1.35v-8h1.35v6h1.35v-3h1.35v4h1.35v-8h1.35v10h1.35v-13h1.35v1h1.35v8h1.35v3h1.35v-16h1.35v12h1.35v-11h1.35v-9h1.35v21h1.35v0h1.35v4h1.35v-15h1.35v13h1.35v-6h1.35v-12h1.35v16h1.35v1h1.35v-16h1.35v7h1.35v7h1.35v2h1.35v-8h1.35v-17h1.35v12h1.35v7h1.35v7h1.35v-39h1.35v35h1.35v1h1.35v-1h1.35v-6h1.35v4h1.35v2h1.35v-5h1.35v-5h1.35v11h1.35v1h1.35v1h1.35v-1h1.35v-14h1.35v15h1.35v-18h1.35v0h1.35v-24h1.35v39h1.35v-7h1.35v3h1.35v8h1.35v-12h1.35v4h1.35v-16h1.35v23h1.35v-5h1.35v-20h1.35v22h1.35v-23h1.35v27h1.35v-12h1.35v4h1.35v-36h1.35v31h1.35v3h1.35v-1h1.35v-4h1.35v8h1.35v6h1.35v1h1.35v-2h1.35v3h1.35v-2h1.35v-26h1.35v27h1.35v-7h1.35v-7h1.35v-2h1.35v-38h1.35v45h1.35v5h1.35v-3h1.35v-6h1.35v9h1.35v-17h1.35v13h1.35v-3h1.35v3h1.35v-10h1.35v14h1.35v-2h1.35v-7h1.35v-18h1.35v29h1.35v-15h1.35v-11h1.35v15h1.35v8h1.35v-8h1.35v10h1.35v-9h1.35v8h1.35v-15h1.35v16h1.35v-23h1.35v16h1.35v-5h1.35v14h1.35v-5h1.35v0h1.35v-17h1.35v13h1.35v9h1.35v-23h1.35v21h1.35v-9h1.35v11h1.35v-17h1.35v19h1.35v-9h1.35v-8h1.35v12h1.35v-17h1.35v11h1.35v8h1.35v-1h1.35v-1h1.35v-7h1.35v11h1.35v-5h1.35v-2h1.35v1h1.35v6h1.35v-9h1.35v7h1.35v-7h1.35v-1h1.35v-5h1.35v10h1.35v-3h1.35v-17h1.35v12h1.35v-6h1.35v16h1.35v-1h1.35v1h1.35v-4h1.35v4h1.35v-17h1.35v17h1.35v-1h1.35v6h1.35v0h1.35v-17h1.35v13h1.35v-17h1.35v16h1.35v-5h1.35v-7h1.35v12h1.35v0h1.35v2h1.35v-7h1.35v3h1.35v6h1.35v0h1.35v-1h1.35v-5h1.35v4h1.35v-14h1.35v8h1.35v-3h1.35v3h1.35v-5h1.35v8h1.35v-3h1.35v3h1.35v-2h1.35v3h1.35v3h1.35v-3h1.35v1h1.35v-11h1.35v11h1.35v2h1.35v-2h1.35v-12h1.35v-6h1.35v8h1.35v-17h1.35v29h1.35v-2h1.35v-8h1.35v1h1.35v9h1.35v1h1.35v-2h1.35v1h1.35v-5h1.35v-2h1.35v-11h1.35v10h1.35v7h1.35v-4h1.35v4h1.35v-9h1.35v0h1.35v11h1.35v-17h1.35v6h1.35v10h1.35v-4h1.35v-6h1.35v-9h1.35v17h1.35v2h1.35v-3h1.35v-3h1.35v-11h1.35v8h1.35v-1h1.35v-9h1.35v14h1.35v-8h1.35v9h1.35v-7h1.35v-15h1.35v9h1.35v12h1.35v0h1.35v5h1.35v-3h1.35v-19h1.35v15h1.35v6h1.35v-4h1.35v-2h1.35v3h1.35v-12h1.35v12h1.35v-1h1.35v-2h1.35v1h1.35v1h1.35v-6h1.35v2h1.35v4h1.35v-2h1.35v3h1.35v-14h1.35v18h1.35v-13h1.35v10h1.35v1h1.35v-4h1.35v1h1.35v-6h1.35v8h1.35v-6h1.35v3h1.35v5h1.35v-13h1.35v-7h1.35v7h1.35v-9h1.35v6h1.35v9h1.35v8h1.35v-4h1.35v-13h1.35v13h1.35v-14h1.35v-8h1.35v17h1.35v-1h1.35v11h1.35v-17h1.35v-9h1.35v13h1.35v5h1.35v0h1.35v-8h1.35v-8h1.35v16h1.35v6h1.35v-3h1.35v3h1.35v-2h1.35v-6h1.35v-1h1.35v7h1.35v-21h1.35v3h1.35v14h1.35v3h1.35v-8h1.35v4h1.35v-3h1.35v6h1.35v-13h1.35v17h1.35v-23h1.35v27h1.35v-7h1.35v-2h1.35v-1h1.35v3h1.35v-5h1.35v-7h1.35v-9h1.35v23h1.35v-8h1.35v9h1.35v-7h1.35v14h1.35v-1h1.35v0h1.35v-9h1.35v-1h1.35v-2h1.35v1h1.35v6h1.35v-2h1.35v-14h1.35v1h1.35v-20h1.35v31h1.35v-4h1.35v7h1.35v-3h1.35v-2h1.35v3h1.35v-10h1.35v9h1.35v-5h1.35v-16h1.35v23h1.35v0h1.35v-13h1.35v-7h1.35v20h1.35v-1h1.35v0h1.35v-16h1.35v18h1.35v-9h1.35v4h1.35v-10h1.35v7h1.35v-6h1.35v11h1.35v-2h1.35v5h1.35v-6h1.35v-19h1.35v25h1.35v-5h1.35v5h1.35v4h1.35v-2h1.35v5h1.35v0h1.35v0h1.35v0h1.35v0h1.35v0h1.35v0h1.35v0h1.35v0h1.35v0h1.35v0h1.35v0h1.35v0h1.35v0h1.35v0h1.35v0h1.35v0h1.35v0h1.35v0h1.35v0h1.35v0h1.35v0h1.35v0h1.35v0h1.35v0h1.35v0h1.35v0V941z"/><path fill="#fff890" d="M318 941V896h1.35v5h1.35v-6h1.35v5h1.35v-2h1.35v-12h1.35v2h1.35v0h1.35v-1h1.35v2h1.35v7h1.35v-3h1.35v2h1.35v2h1.35v-7h1.35v4h1.35v2h1.35v1h1.35v-3h1.35v-15h1.35v6h1.35v8h1.35v6h1.35v-10h1.35v-5h1.35v11h1.35v2h1.35v-3h1.35v2h1.35v-6h1.35v-6h1.35v12h1.35v0h1.35v-10h1.35v12h1.35v-4h1.35v0h1.35v-12h1.35v3h1.35v8h1.35v4h1.35v-12h1.35v-1h1.35v13h1.35v-6h1.35v3h1.35v0h1.35v-6h1.35v8h1.35v2h1.35v-4h1.35v-13h1.35v8h1.35v9h1.35v-2h1.35v-6h1.35v-2h1.35v11h1.35v0h1.35v-1h1.35v-1h1.35v-1h1.35v-6h1.35v4h1.35v-2h1.35v2h1.35v4h1.35v-2h1.35v2h1.35v0h1.35v-4h1.35v1h1.35v4h1.35v-1h1.35v-5h1.35v5h1.35v-13h1.35v13h1.35v1h1.35v-2h1.35v-1h1.35v3h1.35v-8h1.35v8h1.35v-2h1.35v1h1.35v-7h1.35v6h1.35v1h1.35v-3h1.35v-7h1.35v7h1.35v3h1.35v-6h1.35v-7h1.35v13h1.35v-9h1.35v6h1.35v1h1.35v-1h1.35v3h1.35v-3h1.35v2h1.35v-1h1.35v-2h1.35v5h1.35v0h1.35v-3h1.35v-2h1.35v3h1.35v-3h1.35v4h1.35v-7h1.35v3h1.35v4h1.35v-7h1.35v1h1.35v4h1.35v2h1.35v-2h1.35v1h1.35v-1h1.35v-1h1.35v-1h1.35v5h1.35v-1h1.35v0h1.35v-1h1.35v-1h1.35v3h1.35v-5h1.35v4h1.35v0h1.35v-1h1.35v-1h1.35v-5h1.35v6h1.35v1h1.35v0h1.35v-1h1.35v-1h1.35v-5h1.35v5h1.35v1h1.35v-2h1.35v2h1.35v0h1.35v-2h1.35v-3h1.35v-3h1.35v9h1.35v1h1.35v-3h1.35v3h1.35v0h1.35v-2h1.35v-7h1.35v7h1.35v0h1.35v-1h1.35v2h1.35v-1h1.35v-3h1.35v5h1.35v-7h1.35v-2h1.35v4h1.35v1h1.35v1h1.35v-6h1.35v6h1.35v1h1.35v-12h1.35v10h1.35v3h1.35v-3h1.35v4h1.35v-10h1.35v5h1.35v4h1.35v0h1.35v-5h1.35v4h1.35v-6h1.35v-1h1.35v8h1.35v-3h1.35v3h1.35v-2h1.35v-1h1.35v-2h1.35v5h1.35v-3h1.35v4h1.35v-1h1.35v-1h1.35v1h1.35v-7h1.35v7h1.35v-5h1.35v1h1.35v-8h1.35v6h1.35v6h1.35v-9h1.35v8h1.35v1h1.35v0h1.35v0h1.35v-5h1.35v1h1.35v2h1.35v-1h1.35v0h1.35v4h1.35v-1h1.35v0h1.35v-2h1.35v0h1.35v0h1.35v-3h1.35v4h1.35v-1h1.35v2h1.35v-1h1.35v0h1.35v1h1.35v0h1.35v-4h1.35v3h1.35v0h1.35v-1h1.35v-1h1.35v4h1.35v-5h1.35v3h1.35v-1h1.35v1h1.35v0h1.35v-4h1.35v3h1.35v1h1.35v-1h1.35v-2h1.35v4h1.35v-2h1.35v-5h1.35v3h1.35v4h1.35v-13h1.35v12h1.35v-1h1.35v-3h1.35v6h1.35v0h1.35v-2h1.35v-2h1.35v0h1.35v1h1.35v2h1.35v0h1.35v0h1.35v-3h1.35v1h1.35v-4h1.35v1h1.35v5h1.35v-2h1.35v1h1.35v-1h1.35v-3h1.35v4h1.35v-4h1.35v6h1.35v-7h1.35v-2h1.35v7h1.35v0h1.35v1h1.35v1h1.35v-5h1.35v4h1.35v-1h1.35v-4h1.35v1h1.35v2h1.35v-11h1.35v14h1.35v0h1.35v-2h1.35v0h1.35v-19h1.35v19h1.35v-2h1.35v3h1.35v-3h1.35v4h1.35v-2h1.35v-4h1.35v-2h1.35v2h1.35v2h1.35v2h1.35v0h1.35v2h1.35v-5h1.35v-2h1.35v0h1.35v4h1.35v-1h1.35v3h1.35v-2h1.35v-2h1.35v0h1.35v4h1.35v0h1.35v-4h1.35v-5h1.35v2h1.35v-2h1.35v1h1.35v8h1.35v-2h1.35v0h1.35v2h1.35v-5h1.35v4h1.35v-3h1.35v-4h1.35v3h1.35v5h1.35v1h1.35v-5h1.35v-3h1.35v5h1.35v2h1.35v-7h1.35v1h1.35v1h1.35v1h1.35v-5h1.35v7h1.35v-2h1.35v3h1.35v-2h1.35v-1h1.35v3h1.35v-3h1.35v0h1.35v2h1.35v0h1.35v1h1.35v-4h1.35v3h1.35v-3h1.35v-8h1.35v13h1.35v-1h1.35v-13h1.35v14h1.35v-1h1.35v-3h1.35v2h1.35v1h1.35v-3h1.35v-8h1.35v10h1.35v2h1.35v0h1.35v-2h1.35v3h1.35v-2h1.35v-2h1.35v-14h1.35v15h1.35v0h1.35v2h1.35v-1h1.35v-2h1.35v2h1.35v0h1.35v1h1.35v-7h1.35v6h1.35v2h1.35v0h1.35v-2h1.35v0h1.35v0h1.35v2h1.35v-4h1.35v-1h1.35v1h1.35v2h1.35v1h1.35v-2h1.35v1h1.35v1h1.35v-19h1.35v13h1.35v6h1.35v1h1.35v-1h1.35v1h1.35v-1h1.35v-4h1.35v-4h1.35v6h1.35v2h1.35v-2h1.35v2h1.35v-2h1.35v-4h1.35v6h1.35v0h1.35v1h1.35v-2h1.35v1h1.35v-5h1.35v4h1.35v-1h1.35v1h1.35v2h1.35v-1h1.35v-3h1.35v2h1.35v1h1.35v-1h1.35v2h1.35v-2h1.35v-4h1.35v-2h1.35v5h1.35v-6h1.35v8h1.35v-1h1.35v2h1.35v0h1.35v-1h1.35v0h1.35v-1h1.35v-3h1.35v3h1.35v1h1.35v-1h1.35v0h1.35v-3h1.35v-1h1.35v-5h1.35v4h1.35v-3h1.35v3h1.35v3h1.35v-11h1.35v15h1.35v-11h1.35v5h1.35v4h1.35v-2h1.35v3h1.35v0h1.35v0h1.35v-1h1.35v-2h1.35v1h1.35v-3h1.35v-3h1.35v5h1.35v1h1.35v2h1.35v-1h1.35v2h1.35v0h1.35v-4h1.35v4h1.35v-8h1.35v-1h1.35v5h1.35v3h1.35v-3h1.35v-4h1.35v8h1.35v-3h1.35v-1h1.35v4h1.35v-1h1.35v-7h1.35v6h1.35v-1h1.35v-7h1.35v4h1.35v-5h1.35v-3h1.35v13h1.35v0h1.35v1h1.35v-5h1.35v3h1.35v1h1.35v0h1.35v-5h1.35v4h1.35v-3h1.35v5h1.35v0h1.35v-10h1.35v8h1.35v1h1.35v-9h1.35v-5h1.35v14h1.35v-4h1.35v1h1.35v-1h1.35v5h1.35v-8h1.35v6h1.35v1h1.35v0h1.35v1h1.35v-9h1.35v6h1.35v-1h1.35v4h1.35v-2h1.35v0h1.35v-12h1.35v10h1.35v0h1.35v-3h1.35v1h1.35v6h1.35v0h1.35v-1h1.35v-23h1.35v22h1.35v-2h1.35v0h1.35v-7h1.35v8h1.35v-1h1.35v1h1.35v-3h1.35v2h1.35v0h1.35v2h1.35v1h1.35v-7h1.35v7h1.35v-1h1.35v-1h1.35v-2h1.35v-1h1.35v6h1.35v-9h1.35v6h1.35v-1h1.35v-5h1.35v5h1.35v-3h1.35v5h1.35v-3h1.35v2h1.35v-5h1.35v6h1.35v-5h1.35v1h1.35v3h1.35v-3h1.35v-3h1.35v3h1.35v4h1.35v-1h1.35v2h1.35v-15h1.35v10h1.35v6h1.35v-2h1.35v1h1.35v-9h1.35v6h1.35v3h1.35v-10h1.35v-4h1.35v11h1.35v0h1.35v1h1.35v-4h1.35v5h1.35v-6h1.35v5h1.35v2h1.35v-3h1.35v3h1.35v-14h1.35v13h1.35v0h1.35v-1h1.35v1h1.35v2h1.35v-11h1.35v8h1.35v-2h1.35v2h1.35v1h1.35v0h1.35v2h1.35v-3h1.35v-7h1.35v7h1.35v2h1.35v-2h1.35v-1h1.35v1h1.35v-1h1.35v4h1.35v-2h1.35v-9h1.35v8h1.35v1h1.35v-6h1.35v2h1.35v3h1.35v-10h1.35v12h1.35v-8h1.35v6h1.35v-8h1.35v3h1.35v-2h1.35v8h1.35v-9h1.35v9h1.35v-3h1.35v-9h1.35v14h1.35v-1h1.35v-8h1.35v7h1.35v-11h1.35v6h1.35v6h1.35v0h1.35v-4h1.35v1h1.35v-19h1.35v21h1.35v0h1.35v1h1.35v0h1.35v-4h1.35v3h1.35v-5h1.35v4h1.35v1h1.35v1h1.35v-5h1.35v-2h1.35v4h1.35v4h1.35v-3h1.35v-4h1.35v5h1.35v0h1.35v-1h1.35v-1h1.35v4h1.35v-12h1.35v9h1.35v2h1.35v-8h1.35v7h1.35v-6h1.35v6h1.35v-6h1.35v5h1.35v-5h1.35v3h1.35v3h1.35v0h1.35v-5h1.35v6h1.35v-1h1.35v2h1.35v-4h1.35v1h1.35v3h1.35v-8h1.35v2h1.35v3h1.35v-2h1.35v-4h1.35v6h1.35v2h1.35v0h1.35v-2h1.35v-10h1.35v9h1.35v-6h1.35v6h1.35v3h1.35v0h1.35v-2h1.35v0h1.35v-1h1.35v-1h1.35v-2h1.35v3h1.35v-2h1.35v3h1.35v-4h1.35v7h1.35v-5h1.35v4h1.35v-4h1.35v3h1.35v-3h1.35v4h1.35v-6h1.35v3h1.35v3h1.35v1h1.35v-6h1.35v5h1.35v-7h1.35v-10h1.35v16h1.35v1h1.35v0h1.35v-7h1.35v7h1.35v-3h1.35v-10h1.35v10h1.35v3h1.35v-8h1.35v3h1.35v4h1.35v1h1.35v-3h1.35v-7h1.35v3h1.35v5h1.35v3h1.35v-10h1.35v8h1.35v-1h1.35v1h1.35v0h1.35v-2h1.35v3h1.35v-2h1.35v-5h1.35v6h1.35v1h1.35v-3h1.35v1h1.35v-3h1.35v4h1.35v-12h1.35v4h1.35v-7h1.35v14h1.35v-2h1.35v2h1.35v3h1.35v-3h1.35v-3h1.35v-4h1.35v8h1.35v-3h1.35v-5h1.35v6h1.35v-10h1.35v13h1.35v-6h1.35v1h1.35v-25h1.35v24h1.35v-3h1.35v5h1.35v-2h1.35v3h1.35v1h1.35v3h1.35v-4h1.35v4h1.35v-1h1.35v-14h1.35v14h1.35v-6h1.35v1h1.35v-2h1.35v-9h1.35v12h1.35v0h1.35v1h1.35v-10h1.35v13h1.35v-6h1.35v4h1.35v-3h1.35v0h1.35v-3h1.35v7h1.35v0h1.35v-7h1.35v1h1.35v7h1.35v-7h1.35v-5h1.35v7h1.35v4h1.35v-5h1.35v3h1.35v-3h1.35v5h1.35v-14h1.35v15h1.35v-15h1.35v11h1.35v-6h1.35v9h1.35v-1h1.35v-3h1.35v0h1.35v-2h1.35v6h1.35v-5h1.35v4h1.35v-6h1.35v7h1.35v-6h1.35v8h1.35v-5h1.35v-2h1.35v6h1.35v-14h1.35v10h1.35v2h1.35v3h1.35v-2h1.35v-3h1.35v3h1.35v-1h1.35v-2h1.35v1h1.35v2h1.35v-2h1.35v3h1.35v-3h1.35v-7h1.35v3h1.35v5h1.35v1h1.35v-8h1.35v1h1.35v2h1.35v6h1.35v-2h1.35v1h1.35v-3h1.35v2h1.35v-6h1.35v8h1.35v-5h1.35v5h1.35v0h1.35v-4h1.35v3h1.35v-3h1.35v2h1.35v-6h1.35v0h1.35v6h1.35v3h1.35v-2h1.35v-4h1.35v1h1.35v4h1.35v0h1.35v0h1.35v-6h1.35v5h1.35v-4h1.35v4h1.35v-4h1.35v-1h1.35v3h1.35v3h1.35v-2h1.35v-3h1.35v1h1.35v1h1.35v3h1.35v-1h1.35v0h1.35v-6h1.35v6h1.35v-2h1.35v1h1.35v-8h1.35v4h1.35v0h1.35v-4h1.35v10h1.35v0h1.35v-2h1.35v-7h1.35v10h1.35v1h1.35v-1h1.35v-2h1.35v-1h1.35v2h1.35v-12h1.35v10h1.35v3h1.35v-2h1.35v1h1.35v-4h1.35v1h1.35v3h1.35v-9h1.35v5h1.35v4h1.35v-3h1.35v0h1.35v-5h1.35v8h1.35v1h1.35v-2h1.35v0h1.35v-10h1.35v7h1.35v-2h1.35v2h1.35v1h1.35v-2h1.35v4h1.35v-1h1.35v-7h1.35v5h1.35v1h1.35v1h1.35v2h1.35v-4h1.35v-7h1.35v7h1.35v1h1.35v2h1.35v1h1.35v0h1.35v-7h1.35v6h1.35v-1h1.35v-2h1.35v3h1.35v-4h1.35v-2h1.35v2h1.35v5h1.35v-3h1.35v1h1.35v-3h1.35v6h1.35v-10h1.35v9h1.35v-1h1.35v0h1.35v-4h1.35v-2h1.35v7h1.35v-7h1.35v4h1.35v2h1.35v-2h1.35v-2h1.35v2h1.35v-3h1.35v3h1.35v1h1.35v2h1.35v-2h1.35v-8h1.35v8h1.35v-2h1.35v-9h1.35v10h1.35v-3h1.35v4h1.35v-5h1.35v-9h1.35v12h1.35v-2h1.35v0h1.35v-2h1.35v-4h1.35v7h1.35v5h1.35v-1h1.35v1h1.35v-3h1.35v-4h1.35v-1h1.35v8h1.35v-13h1.35v6h1.35v3h1.35v2h1.35v-11h1.35v8h1.35v2h1.35v0h1.35v-5h1.35v8h1.35v-10h1.35v11h1.35v0h1.35v-3h1.35v0h1.35v0h1.35v-2h1.35v-5h1.35v-1h1.35v10h1.35v-5h1.35v4h1.35v-2h1.35v6h1.35v0h1.35v-1h1.35v-3h1.35v0h1.35v-4h1.35v2h1.35v3h1.35v-1h1.35v-8h1.35v1h1.35v-5h1.35v9h1.35v2h1.35v2h1.35v0h1.35v-1h1.35v-2h1.35v1h1.35v2h1.35v-1h1.35v-7h1.35v7h1.35v-1h1.35v-3h1.35v-11h1.35v15h1.35v0h1.35v-4h1.35v1h1.35v5h1.35v-7h1.35v1h1.35v-2h1.35v3h1.35v-5h1.35v8h1.35v-2h1.35v2h1.35v-6h1.35v-2h1.35v7h1.35v1h1.35v2h1.35v0h1.35v0h1.35v2h1.35v0h1.35v0h1.35v0h1.35v0h1.35v0h1.35v0h1.35v0h1.35v0h1.35v0h1.35v0h1.35v0h1.35v0h1.35v0h1.35v0h1.35v0h1.35v0h1.35v0h1.35v0h1.35v0h1.35v0h1.35v0h1.35v0h1.35v0h1.35v0h1.35v0h1.35v0V941z"/></g></g>
</svg>
<svg style="left:0;top:0" width="1920" height="1080" viewBox="0 0 1920 1080">
<path d="M318.5 210.5h9l-9 9z" fill="#f4f4f4"/>
<path d="M318.5 902.5l9 10h-9z" fill="#f4f4f4"/>
<path d="M317.800 220V902" stroke="#f2f2f2" stroke-width="1.800" stroke-dasharray="1.500 1.500"/>
<path d="M1805.5 196V914M1805 224.5h4.5M1805 231.0h9.5M1805 237.5h4.5M1805 244.1h4.5M1805 250.6h4.5M1805 257.2h4.5M1805 263.7h9.5M1805 270.2h4.5M1805 276.8h4.5M1805 283.3h4.5M1805 289.9h4.5M1805 296.4h9.5M1805 302.9h4.5M1805 309.5h4.5M1805 316.0h4.5M1805 322.6h4.5M1805 329.1h9.5M1805 335.6h4.5M1805 342.2h4.5M1805 348.7h4.5M1805 355.3h4.5M1805 361.8h9.5M1805 368.3h4.5M1805 374.9h4.5M1805 381.4h4.5M1805 388.0h4.5M1805 394.5h9.5M1805 401.0h4.5M1805 407.6h4.5M1805 414.1h4.5M1805 420.7h4.5M1805 427.2h9.5M1805 433.7h4.5M1805 440.3h4.5M1805 446.8h4.5M1805 453.4h4.5M1805 459.9h9.5M1805 466.4h4.5M1805 473.0h4.5M1805 479.5h4.5M1805 486.1h4.5M1805 492.6h9.5M1805 499.1h4.5M1805 505.7h4.5M1805 512.2h4.5M1805 518.8h4.5M1805 525.3h9.5M1805 531.8h4.5M1805 538.4h4.5M1805 544.9h4.5M1805 551.5h4.5M1805 558.0h9.5M1805 569.0h4.5M1805 575.5h9.5M1805 582.0h4.5M1805 588.5h4.5M1805 595.1h4.5M1805 601.6h4.5M1805 608.1h9.5M1805 614.6h4.5M1805 621.1h4.5M1805 627.7h4.5M1805 634.2h4.5M1805 640.7h9.5M1805 647.2h4.5M1805 653.7h4.5M1805 660.3h4.5M1805 666.8h4.5M1805 673.3h9.5M1805 679.8h4.5M1805 686.3h4.5M1805 692.9h4.5M1805 699.4h4.5M1805 705.9h9.5M1805 712.4h4.5M1805 718.9h4.5M1805 725.5h4.5M1805 732.0h4.5M1805 738.5h9.5M1805 745.0h4.5M1805 751.5h4.5M1805 758.1h4.5M1805 764.6h4.5M1805 771.1h9.5M1805 777.6h4.5M1805 784.1h4.5M1805 790.7h4.5M1805 797.2h4.5M1805 803.7h9.5M1805 810.2h4.5M1805 816.7h4.5M1805 823.3h4.5M1805 829.8h4.5M1805 836.3h9.5M1805 842.8h4.5M1805 849.3h4.5M1805 855.9h4.5M1805 862.4h4.5M1805 868.9h9.5M1805 875.4h4.5M1805 881.9h4.5M1805 888.5h4.5M1805 895.0h4.5M1805 901.5h9.5" stroke="#d6d6d6" stroke-width="1.2" fill="none"/>
<path d="M318 913.5H1806M318.5 914v10M334.2 914v5M349.9 914v5M365.6 914v5M381.3 914v5M397.0 914v10M412.7 914v5M428.4 914v5M444.1 914v5M459.8 914v5M475.5 914v10M491.2 914v5M506.9 914v5M522.6 914v5M538.3 914v5M554.0 914v10M569.7 914v5M585.4 914v5M601.1 914v5M616.8 914v5M632.5 914v10M648.2 914v5M663.9 914v5M679.6 914v5M695.3 914v5M711.0 914v10M726.7 914v5M742.4 914v5M758.1 914v5M773.8 914v5M789.5 914v10M805.2 914v5M820.9 914v5M836.6 914v5M852.3 914v5M868.0 914v10M883.7 914v5M899.4 914v5M915.1 914v5M930.8 914v5M946.5 914v10M962.2 914v5M977.9 914v5M993.6 914v5M1009.3 914v5M1025.0 914v10M1040.7 914v5M1056.4 914v5M1072.1 914v5M1087.8 914v5M1103.5 914v10M1119.2 914v5M1134.9 914v5M1150.6 914v5M1166.3 914v5M1182.0 914v10M1197.7 914v5M1213.4 914v5M1229.1 914v5M1244.8 914v5M1260.5 914v10M1276.2 914v5M1291.9 914v5M1307.6 914v5M1323.3 914v5M1339.0 914v10M1354.7 914v5M1370.4 914v5M1386.1 914v5M1401.8 914v5M1417.5 914v10M1433.2 914v5M1448.9 914v5M1464.6 914v5M1480.3 914v5M1496.0 914v10M1511.7 914v5M1527.4 914v5M1543.1 914v5M1558.8 914v5M1574.5 914v10M1590.2 914v5M1605.9 914v5M1621.6 914v5M1637.3 914v5M1653.0 914v10M1668.7 914v5M1684.4 914v5M1700.1 914v5M1715.8 914v5M1731.5 914v10M1747.2 914v5M1762.9 914v5M1778.6 914v5M1794.3 914v5" stroke="#d6d6d6" stroke-width="1.2" fill="none"/>
<g font-family="Liberation Sans, sans-serif" font-size="11.2" fill="#c6c6c6">
<text x="1820" y="206">Hz</text>
<text x="1820" y="235.6">50000</text>
<text x="1820" y="268.3">45000</text>
<text x="1820" y="300.9">40000</text>
<text x="1820" y="333.6">35000</text>
<text x="1820" y="366.3">30000</text>
<text x="1820" y="399.0">25000</text>
<text x="1820" y="431.7">20000</text>
<text x="1820" y="464.3">15000</text>
<text x="1820" y="497.0">10000</text>
<text x="1820" y="529.7">5000</text>
<text x="1820" y="580.1">50000</text>
<text x="1820" y="612.8">45000</text>
<text x="1820" y="645.4">40000</text>
<text x="1820" y="678.1">35000</text>
<text x="1820" y="710.8">30000</text>
<text x="1820" y="743.5">25000</text>
<text x="1820" y="776.1">20000</text>
<text x="1820" y="808.8">15000</text>
<text x="1820" y="841.5">10000</text>
<text x="1820" y="874.2">5000</text>
<text x="318" y="939">hms</text>
<text x="397.0" y="940" text-anchor="middle">0:05</text>
<text x="475.5" y="940" text-anchor="middle">0:10</text>
<text x="554.0" y="940" text-anchor="middle">0:15</text>
<text x="632.5" y="940" text-anchor="middle">0:20</text>
<text x="711.0" y="940" text-anchor="middle">0:25</text>
<text x="789.5" y="940" text-anchor="middle">0:30</text>
<text x="868.0" y="940" text-anchor="middle">0:35</text>
<text x="946.5" y="940" text-anchor="middle">0:40</text>
<text x="1025.0" y="940" text-anchor="middle">0:45</text>
<text x="1103.5" y="940" text-anchor="middle">0:50</text>
<text x="1182.0" y="940" text-anchor="middle">0:55</text>
<text x="1260.5" y="940" text-anchor="middle">1:00</text>
<text x="1339.0" y="940" text-anchor="middle">1:05</text>
<text x="1417.5" y="940" text-anchor="middle">1:10</text>
<text x="1496.0" y="940" text-anchor="middle">1:15</text>
<text x="1574.5" y="940" text-anchor="middle">1:20</text>
<text x="1653.0" y="940" text-anchor="middle">1:25</text>
<text x="1731.5" y="940" text-anchor="middle">1:30</text>
</g>
</svg>
<div style="left:1867px;top:219px;width:14px;height:697px;background:#000;border-right:1px solid #d0d0d0;border-bottom:1px solid #d0d0d0;border-top:1px solid #3c3c3c"></div>
<div style="left:1894px;top:219px;width:14px;height:697px;background:#000;border-right:1px solid #d0d0d0;border-bottom:1px solid #d0d0d0;border-top:1px solid #3c3c3c"></div>
<div style="left:314px;top:948px;width:1606px;height:100px;background:#f0f0f0;border-top:1px solid #fdfdfd"></div>
<div style="left:653px;top:950px;width:1px;height:96px;background:#a0a0a0"></div><div style="left:654px;top:950px;width:1px;height:96px;background:#fff"></div>
<div style="left:1553px;top:950px;width:1px;height:96px;background:#a0a0a0"></div><div style="left:1554px;top:950px;width:1px;height:96px;background:#fff"></div>
<div class="bg" style="left:324px;top:964px;width:172px;height:33px"><div class="sep" style="left:30.5px"></div><div class="sep" style="left:65.5px"></div><div class="sep" style="left:100.5px"></div><div class="sep" style="left:135.5px"></div></div>
<div class="bg" style="left:324px;top:1000px;width:172px;height:33px"><div class="sep" style="left:30.5px"></div><div class="sep" style="left:65.5px"></div><div class="sep" style="left:100.5px"></div><div class="sep" style="left:135.5px"></div></div>
<div class="bg" style="left:506px;top:964px;width:138px;height:33px"><div class="sep" style="left:31.5px"></div><div class="sep" style="left:66.5px"></div><div class="sep" style="left:101.5px"></div></div>
<div class="bg" style="left:506px;top:1000px;width:138px;height:33px"><div class="sep" style="left:31.5px"></div><div class="sep" style="left:66.5px"></div><div class="sep" style="left:101.5px"></div></div>
<svg style="left:0;top:0" width="1920" height="1080" viewBox="0 0 1920 1080">
<defs><linearGradient id="ig" x1="0" y1="0" x2="0" y2="1"><stop offset="0" stop-color="#4e4e4e"/><stop offset="1" stop-color="#7c7c7c"/></linearGradient>
<g id="mag"><circle cx="0" cy="0" r="5.6" fill="none" stroke="#5a5a5a" stroke-width="2.2"/><path d="M4.6 4.6L10 9.4" stroke="#666" stroke-width="3.6" stroke-linecap="round"/></g>
</defs>
<g fill="url(#ig)">
<path d="M335 972.3l13.5 6.9l-13.5 6.9z"/>
<path d="M368.5 976H366a1.2 1.2 0 0 0-1.2 1.2V984a1.2 1.2 0 0 0 1.2 1.2h14.6a1.200 1.200 0 0 0 1.200-1.200V977.200a1.200 1.200 0 0 0-1.200-1.200H377.500" fill="none" stroke="#5c5c5c" stroke-width="2.200"/>
<path d="M369 980.500c0.500-3.500 2.500-4.800 5-4.800v-3.500l5.500 4.800l-5.500 4.800v-3.200c-2 0-3.600 0.300-5 1.900z" fill="#5a5a5a"/>
<path d="M399 972.300l13.500 6.900l-13.500 6.900z"/><rect x="415" y="972.500" width="3.400" height="13.500"/>
<path d="M443.500 972.800v13l-9.800-6.500zM452.500 972.800v13l-9.800-6.500z"/>
<path d="M469 972.800l9.800 6.500l-9.800 6.500zM478 972.800l9.800 6.500l-9.800 6.500z"/>
<rect x="335" y="1008.800" width="11" height="11"/>
<rect x="368.800" y="1008.800" width="3.300" height="11"/><rect x="375.300" y="1008.800" width="3.300" height="11"/>
<path d="M446 1008.300v12l-9-6zM454 1008.300v12l-9-6z"/>
<path d="M432.300 1005.300h5v1.800h-1.500v14.200h1.500v1.800h-5v-1.800h1.500v-14.200h-1.500z" fill="#4c4c4c"/>
<path d="M467.500 1008.300l9 6l-9 6zM475.500 1008.300l9 6l-9 6z"/>
<path d="M484.300 1005.300h5v1.800h-1.500v14.200h1.500v1.800h-5v-1.800h1.500v-14.200h-1.500z" fill="#4c4c4c"/>
</g>
<circle cx="408.100" cy="1014.300" r="5.700" fill="#8e0404"/><circle cx="407" cy="1012.800" r="2.500" fill="#a81a1a" opacity=".6"/>
<use href="#mag" x="520.400" y="976.800"/><path d="M517.400 976.800h6M520.400 973.800v6" stroke="#555" stroke-width="1.300"/>
<use href="#mag" x="552.800" y="976.800"/><path d="M549.800 976.800h6" stroke="#555" stroke-width="1.400"/>
<use href="#mag" x="589" y="976.600"/><text x="579.500" y="990.600" font-family="Liberation Sans, sans-serif" font-size="6.500" font-weight="bold" fill="#444" letter-spacing=".4">100</text>
<use href="#mag" x="626.500" y="977.300"/><path d="M615.400 969.800l3.200 3.600h-1.900v2.800h-2.600v-2.800h-1.900zM615.400 986.400l3.200-3.600h-1.900v-2.800h-2.600v2.800h-1.900z" fill="#4a4a4a"/>
<use href="#mag" x="523.800" y="1011.800"/><path d="M514.800 1005.800h-2.800v17h2.800" fill="none" stroke="#555" stroke-width="1.600"/>
<use href="#mag" x="552.800" y="1011.800"/><path d="M550.300 1010.300v-1.500h1.500M553.800 1008.800h1.500v1.500M555.300 1013.300v1.500h-1.500M551.800 1014.800h-1.500v-1.500" fill="none" stroke="#444" stroke-width="1.300"/>
<g transform="translate(1180.400 0) scale(-1 1)"><use href="#mag" x="590.400" y="1011.800"/></g><path d="M599.500 1005.800h2.800v17h-2.800" fill="none" stroke="#555" stroke-width="1.600"/>
<use href="#mag" x="626.500" y="1012.300"/><path d="M615.400 1011.400l3.200-3.600h-1.900v-2.800h-2.600v2.800h-1.900zM615.400 1013.200l3.200 3.600h-1.900v2.800h-2.600v-2.800h-1.900z" fill="#4a4a4a"/>
</svg>
<div id="bigtime" style="left:833.500px;top:948px;width:560px;height:100px;font-size:92px;line-height:106px;color:#000;white-space:nowrap;letter-spacing:.5px;-webkit-text-stroke:1.8px #000">00:00:00.000</div>
<div class="sl" style="left:1633px;top:959.600px">Start</div><div class="sl" style="left:1724px;top:959.600px;letter-spacing:-.5px">End</div><div class="sl" style="left:1819px;top:960.600px;letter-spacing:-.2px">Length</div>
<div class="sl" style="left:1540px;width:79px;text-align:right;top:981px;font-size:13.2px">Selection</div><div class="sl" style="left:1540px;width:79px;text-align:right;top:1011px;font-size:13.2px">View</div>
<div class="tb" style="left:1633px;top:978px">00:00:00.000</div>
<div class="tb" style="left:1725px;top:978px">00:00:00.000</div>
<div class="tb" style="left:1818px;top:978px">00:00:00.000</div>
<div class="tb" style="left:1633px;top:1008px">00:00:00.000</div>
<div class="tb" style="left:1725px;top:1008px">00:01:34.539</div>
<div class="tb" style="left:1818px;top:1008px">00:01:34.539</div>
<div style="left:0;top:1048px;width:1920px;height:30px;background:linear-gradient(#f3f3f3,#e9e9e9 60%,#dadada);border-top:1px solid #d2d2d2"></div>
<div style="left:1283px;top:1052px;width:1px;height:24px;background:#c4c4c4"></div><div style="left:1284px;top:1052px;width:1px;height:24px;background:#fff"></div>
<div style="left:1679px;top:1052px;width:1px;height:24px;background:#c4c4c4"></div><div style="left:1680px;top:1052px;width:1px;height:24px;background:#fff"></div>
<div style="left:1800px;top:1052px;width:1px;height:24px;background:#c4c4c4"></div><div style="left:1801px;top:1052px;width:1px;height:24px;background:#fff"></div>
<div style="left:1916px;top:1052px;width:1px;height:24px;background:#c4c4c4"></div><div style="left:1917px;top:1052px;width:1px;height:24px;background:#fff"></div>
<div class="st" style="left:1292px;top:1057px;font-size:13.5px">96000 Hz, 24-bit, 2 Channels</div><div class="st" style="left:1688px;top:1057px;font-size:13.3px">51,932 Mb</div><div class="st" style="left:1808px;top:1057px">00:01:34.539</div>
<div style="left:0;top:1077px;width:1920px;height:1px;background:#b8b8b8"></div>
<div style="left:0;top:1078px;width:1920px;height:2px;background:#2b2b2b"></div>
<div style="left:60px;top:1078px;width:360px;height:2px;background:#fafafa"></div>
<div style="left:613px;top:1078px;width:42px;height:2px;background:#3f8f3f"></div>
<div style="left:795px;top:1078px;width:60px;height:2px;background:#6a6a6a"></div>
</body></html>
